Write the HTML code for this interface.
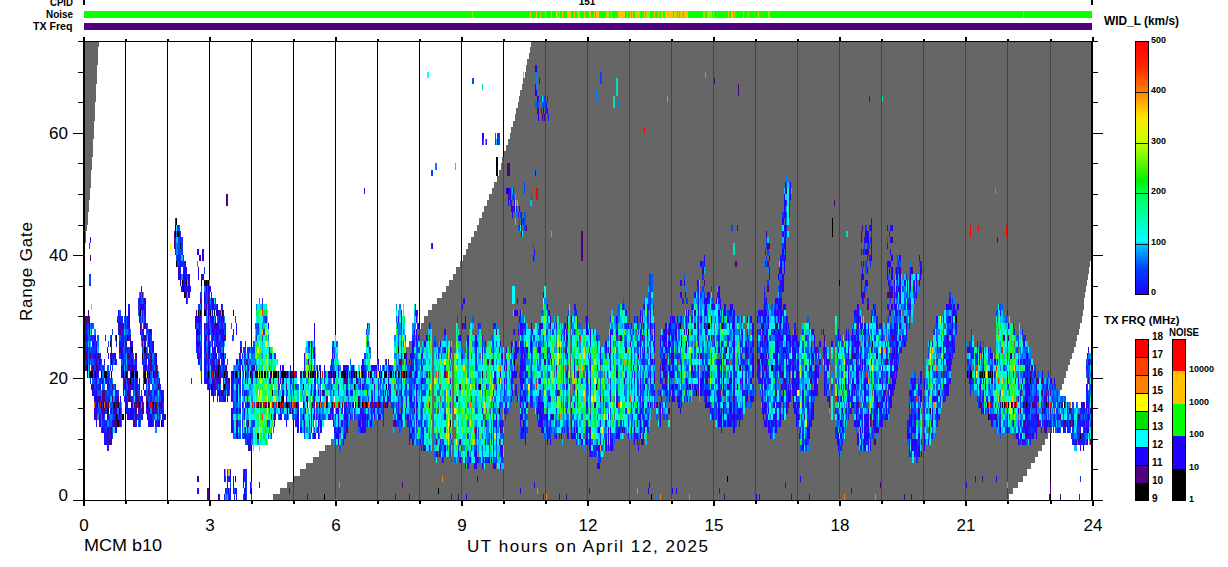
<!DOCTYPE html>
<html><head><meta charset="utf-8"><style>html,body{margin:0;padding:0;background:#fff;}svg{display:block;}text{font-family:"Liberation Sans",sans-serif;fill:#000;}</style></head>
<body><svg width="1228" height="567" viewBox="0 0 1228 567" shape-rendering="crispEdges">
<rect x="125" y="41" width="1" height="459" fill="#000"/>
<rect x="167" y="41" width="1" height="459" fill="#000"/>
<rect x="209" y="41" width="1" height="459" fill="#000"/>
<rect x="251" y="41" width="1" height="459" fill="#000"/>
<rect x="293" y="41" width="1" height="459" fill="#000"/>
<rect x="335" y="41" width="1" height="459" fill="#000"/>
<rect x="377" y="41" width="1" height="459" fill="#000"/>
<rect x="419" y="41" width="1" height="459" fill="#000"/>
<rect x="461" y="41" width="1" height="459" fill="#000"/>
<rect x="503" y="41" width="1" height="459" fill="#000"/>
<rect x="545" y="41" width="1" height="459" fill="#000"/>
<rect x="587" y="41" width="1" height="459" fill="#000"/>
<rect x="629" y="41" width="1" height="459" fill="#000"/>
<rect x="671" y="41" width="1" height="459" fill="#000"/>
<rect x="713" y="41" width="1" height="459" fill="#000"/>
<rect x="755" y="41" width="1" height="459" fill="#000"/>
<rect x="797" y="41" width="1" height="459" fill="#000"/>
<rect x="839" y="41" width="1" height="459" fill="#000"/>
<rect x="881" y="41" width="1" height="459" fill="#000"/>
<rect x="923" y="41" width="1" height="459" fill="#000"/>
<rect x="965" y="41" width="1" height="459" fill="#000"/>
<rect x="1007" y="41" width="1" height="459" fill="#000"/>
<rect x="1050" y="41" width="1" height="459" fill="#000"/>
<rect x="273" y="494" width="736" height="6" fill="#666666"/>
<rect x="280" y="488" width="733" height="6" fill="#666666"/>
<rect x="287" y="482" width="731" height="6" fill="#666666"/>
<rect x="294" y="476" width="729" height="6" fill="#666666"/>
<rect x="300" y="469" width="727" height="7" fill="#666666"/>
<rect x="306" y="463" width="725" height="6" fill="#666666"/>
<rect x="313" y="457" width="722" height="6" fill="#666666"/>
<rect x="319" y="451" width="719" height="6" fill="#666666"/>
<rect x="325" y="445" width="717" height="6" fill="#666666"/>
<rect x="331" y="439" width="714" height="6" fill="#666666"/>
<rect x="336" y="433" width="712" height="6" fill="#666666"/>
<rect x="340" y="427" width="711" height="6" fill="#666666"/>
<rect x="345" y="420" width="707" height="7" fill="#666666"/>
<rect x="350" y="414" width="704" height="6" fill="#666666"/>
<rect x="355" y="408" width="700" height="6" fill="#666666"/>
<rect x="360" y="402" width="697" height="6" fill="#666666"/>
<rect x="365" y="396" width="693" height="6" fill="#666666"/>
<rect x="370" y="390" width="690" height="6" fill="#666666"/>
<rect x="374" y="384" width="688" height="6" fill="#666666"/>
<rect x="379" y="378" width="685" height="6" fill="#666666"/>
<rect x="384" y="371" width="682" height="7" fill="#666666"/>
<rect x="389" y="365" width="679" height="6" fill="#666666"/>
<rect x="394" y="359" width="676" height="6" fill="#666666"/>
<rect x="399" y="353" width="673" height="6" fill="#666666"/>
<rect x="404" y="347" width="670" height="6" fill="#666666"/>
<rect x="409" y="341" width="667" height="6" fill="#666666"/>
<rect x="413" y="335" width="664" height="6" fill="#666666"/>
<rect x="417" y="329" width="662" height="6" fill="#666666"/>
<rect x="421" y="323" width="659" height="6" fill="#666666"/>
<rect x="424" y="316" width="658" height="7" fill="#666666"/>
<rect x="428" y="310" width="655" height="6" fill="#666666"/>
<rect x="432" y="304" width="652" height="6" fill="#666666"/>
<rect x="437" y="298" width="647" height="6" fill="#666666"/>
<rect x="442" y="292" width="643" height="6" fill="#666666"/>
<rect x="446" y="286" width="640" height="6" fill="#666666"/>
<rect x="449" y="280" width="638" height="6" fill="#666666"/>
<rect x="453" y="274" width="635" height="6" fill="#666666"/>
<rect x="456" y="267" width="633" height="7" fill="#666666"/>
<rect x="460" y="261" width="630" height="6" fill="#666666"/>
<rect x="463" y="255" width="628" height="6" fill="#666666"/>
<rect x="466" y="249" width="625" height="6" fill="#666666"/>
<rect x="468" y="243" width="623" height="6" fill="#666666"/>
<rect x="83" y="243" width="2" height="6" fill="#666666"/>
<rect x="471" y="237" width="620" height="6" fill="#666666"/>
<rect x="83" y="237" width="3" height="6" fill="#666666"/>
<rect x="474" y="231" width="617" height="6" fill="#666666"/>
<rect x="83" y="231" width="3" height="6" fill="#666666"/>
<rect x="477" y="225" width="614" height="6" fill="#666666"/>
<rect x="83" y="225" width="4" height="6" fill="#666666"/>
<rect x="479" y="218" width="612" height="7" fill="#666666"/>
<rect x="83" y="218" width="5" height="7" fill="#666666"/>
<rect x="482" y="212" width="609" height="6" fill="#666666"/>
<rect x="83" y="212" width="5" height="6" fill="#666666"/>
<rect x="484" y="206" width="607" height="6" fill="#666666"/>
<rect x="83" y="206" width="6" height="6" fill="#666666"/>
<rect x="487" y="200" width="604" height="6" fill="#666666"/>
<rect x="83" y="200" width="6" height="6" fill="#666666"/>
<rect x="489" y="194" width="602" height="6" fill="#666666"/>
<rect x="83" y="194" width="7" height="6" fill="#666666"/>
<rect x="492" y="188" width="599" height="6" fill="#666666"/>
<rect x="83" y="188" width="7" height="6" fill="#666666"/>
<rect x="494" y="182" width="597" height="6" fill="#666666"/>
<rect x="83" y="182" width="8" height="6" fill="#666666"/>
<rect x="497" y="176" width="594" height="6" fill="#666666"/>
<rect x="83" y="176" width="8" height="6" fill="#666666"/>
<rect x="499" y="170" width="592" height="6" fill="#666666"/>
<rect x="83" y="170" width="8" height="6" fill="#666666"/>
<rect x="501" y="163" width="590" height="7" fill="#666666"/>
<rect x="83" y="163" width="9" height="7" fill="#666666"/>
<rect x="502" y="157" width="589" height="6" fill="#666666"/>
<rect x="83" y="157" width="9" height="6" fill="#666666"/>
<rect x="504" y="151" width="587" height="6" fill="#666666"/>
<rect x="83" y="151" width="10" height="6" fill="#666666"/>
<rect x="506" y="145" width="585" height="6" fill="#666666"/>
<rect x="83" y="145" width="10" height="6" fill="#666666"/>
<rect x="508" y="139" width="583" height="6" fill="#666666"/>
<rect x="83" y="139" width="10" height="6" fill="#666666"/>
<rect x="510" y="133" width="581" height="6" fill="#666666"/>
<rect x="83" y="133" width="11" height="6" fill="#666666"/>
<rect x="511" y="127" width="580" height="6" fill="#666666"/>
<rect x="83" y="127" width="11" height="6" fill="#666666"/>
<rect x="513" y="121" width="578" height="6" fill="#666666"/>
<rect x="83" y="121" width="11" height="6" fill="#666666"/>
<rect x="515" y="114" width="576" height="7" fill="#666666"/>
<rect x="83" y="114" width="12" height="7" fill="#666666"/>
<rect x="516" y="108" width="575" height="6" fill="#666666"/>
<rect x="83" y="108" width="12" height="6" fill="#666666"/>
<rect x="518" y="102" width="573" height="6" fill="#666666"/>
<rect x="83" y="102" width="12" height="6" fill="#666666"/>
<rect x="519" y="96" width="572" height="6" fill="#666666"/>
<rect x="83" y="96" width="13" height="6" fill="#666666"/>
<rect x="520" y="90" width="571" height="6" fill="#666666"/>
<rect x="83" y="90" width="13" height="6" fill="#666666"/>
<rect x="522" y="84" width="569" height="6" fill="#666666"/>
<rect x="83" y="84" width="13" height="6" fill="#666666"/>
<rect x="523" y="78" width="568" height="6" fill="#666666"/>
<rect x="83" y="78" width="14" height="6" fill="#666666"/>
<rect x="525" y="72" width="566" height="6" fill="#666666"/>
<rect x="83" y="72" width="14" height="6" fill="#666666"/>
<rect x="526" y="65" width="565" height="7" fill="#666666"/>
<rect x="83" y="65" width="14" height="7" fill="#666666"/>
<rect x="527" y="59" width="564" height="6" fill="#666666"/>
<rect x="83" y="59" width="15" height="6" fill="#666666"/>
<rect x="529" y="53" width="562" height="6" fill="#666666"/>
<rect x="83" y="53" width="15" height="6" fill="#666666"/>
<rect x="530" y="47" width="561" height="6" fill="#666666"/>
<rect x="83" y="47" width="15" height="6" fill="#666666"/>
<rect x="531" y="41" width="560" height="6" fill="#666666"/>
<rect x="83" y="41" width="16" height="6" fill="#666666"/>
<rect x="293" y="494" width="1" height="6" fill="#454545"/>
<rect x="335" y="494" width="1" height="6" fill="#454545"/>
<rect x="377" y="494" width="1" height="6" fill="#454545"/>
<rect x="419" y="494" width="1" height="6" fill="#454545"/>
<rect x="461" y="494" width="1" height="6" fill="#454545"/>
<rect x="503" y="494" width="1" height="6" fill="#454545"/>
<rect x="545" y="494" width="1" height="6" fill="#454545"/>
<rect x="587" y="494" width="1" height="6" fill="#454545"/>
<rect x="629" y="494" width="1" height="6" fill="#454545"/>
<rect x="671" y="494" width="1" height="6" fill="#454545"/>
<rect x="713" y="494" width="1" height="6" fill="#454545"/>
<rect x="755" y="494" width="1" height="6" fill="#454545"/>
<rect x="797" y="494" width="1" height="6" fill="#454545"/>
<rect x="839" y="494" width="1" height="6" fill="#454545"/>
<rect x="881" y="494" width="1" height="6" fill="#454545"/>
<rect x="923" y="494" width="1" height="6" fill="#454545"/>
<rect x="965" y="494" width="1" height="6" fill="#454545"/>
<rect x="1007" y="494" width="1" height="6" fill="#454545"/>
<rect x="293" y="488" width="1" height="6" fill="#454545"/>
<rect x="335" y="488" width="1" height="6" fill="#454545"/>
<rect x="377" y="488" width="1" height="6" fill="#454545"/>
<rect x="419" y="488" width="1" height="6" fill="#454545"/>
<rect x="461" y="488" width="1" height="6" fill="#454545"/>
<rect x="503" y="488" width="1" height="6" fill="#454545"/>
<rect x="545" y="488" width="1" height="6" fill="#454545"/>
<rect x="587" y="488" width="1" height="6" fill="#454545"/>
<rect x="629" y="488" width="1" height="6" fill="#454545"/>
<rect x="671" y="488" width="1" height="6" fill="#454545"/>
<rect x="713" y="488" width="1" height="6" fill="#454545"/>
<rect x="755" y="488" width="1" height="6" fill="#454545"/>
<rect x="797" y="488" width="1" height="6" fill="#454545"/>
<rect x="839" y="488" width="1" height="6" fill="#454545"/>
<rect x="881" y="488" width="1" height="6" fill="#454545"/>
<rect x="923" y="488" width="1" height="6" fill="#454545"/>
<rect x="965" y="488" width="1" height="6" fill="#454545"/>
<rect x="1007" y="488" width="1" height="6" fill="#454545"/>
<rect x="293" y="482" width="1" height="6" fill="#454545"/>
<rect x="335" y="482" width="1" height="6" fill="#454545"/>
<rect x="377" y="482" width="1" height="6" fill="#454545"/>
<rect x="419" y="482" width="1" height="6" fill="#454545"/>
<rect x="461" y="482" width="1" height="6" fill="#454545"/>
<rect x="503" y="482" width="1" height="6" fill="#454545"/>
<rect x="545" y="482" width="1" height="6" fill="#454545"/>
<rect x="587" y="482" width="1" height="6" fill="#454545"/>
<rect x="629" y="482" width="1" height="6" fill="#454545"/>
<rect x="671" y="482" width="1" height="6" fill="#454545"/>
<rect x="713" y="482" width="1" height="6" fill="#454545"/>
<rect x="755" y="482" width="1" height="6" fill="#454545"/>
<rect x="797" y="482" width="1" height="6" fill="#454545"/>
<rect x="839" y="482" width="1" height="6" fill="#454545"/>
<rect x="881" y="482" width="1" height="6" fill="#454545"/>
<rect x="923" y="482" width="1" height="6" fill="#454545"/>
<rect x="965" y="482" width="1" height="6" fill="#454545"/>
<rect x="1007" y="482" width="1" height="6" fill="#454545"/>
<rect x="335" y="476" width="1" height="6" fill="#454545"/>
<rect x="377" y="476" width="1" height="6" fill="#454545"/>
<rect x="419" y="476" width="1" height="6" fill="#454545"/>
<rect x="461" y="476" width="1" height="6" fill="#454545"/>
<rect x="503" y="476" width="1" height="6" fill="#454545"/>
<rect x="545" y="476" width="1" height="6" fill="#454545"/>
<rect x="587" y="476" width="1" height="6" fill="#454545"/>
<rect x="629" y="476" width="1" height="6" fill="#454545"/>
<rect x="671" y="476" width="1" height="6" fill="#454545"/>
<rect x="713" y="476" width="1" height="6" fill="#454545"/>
<rect x="755" y="476" width="1" height="6" fill="#454545"/>
<rect x="797" y="476" width="1" height="6" fill="#454545"/>
<rect x="839" y="476" width="1" height="6" fill="#454545"/>
<rect x="881" y="476" width="1" height="6" fill="#454545"/>
<rect x="923" y="476" width="1" height="6" fill="#454545"/>
<rect x="965" y="476" width="1" height="6" fill="#454545"/>
<rect x="1007" y="476" width="1" height="6" fill="#454545"/>
<rect x="335" y="469" width="1" height="7" fill="#454545"/>
<rect x="377" y="469" width="1" height="7" fill="#454545"/>
<rect x="419" y="469" width="1" height="7" fill="#454545"/>
<rect x="461" y="469" width="1" height="7" fill="#454545"/>
<rect x="503" y="469" width="1" height="7" fill="#454545"/>
<rect x="545" y="469" width="1" height="7" fill="#454545"/>
<rect x="587" y="469" width="1" height="7" fill="#454545"/>
<rect x="629" y="469" width="1" height="7" fill="#454545"/>
<rect x="671" y="469" width="1" height="7" fill="#454545"/>
<rect x="713" y="469" width="1" height="7" fill="#454545"/>
<rect x="755" y="469" width="1" height="7" fill="#454545"/>
<rect x="797" y="469" width="1" height="7" fill="#454545"/>
<rect x="839" y="469" width="1" height="7" fill="#454545"/>
<rect x="881" y="469" width="1" height="7" fill="#454545"/>
<rect x="923" y="469" width="1" height="7" fill="#454545"/>
<rect x="965" y="469" width="1" height="7" fill="#454545"/>
<rect x="1007" y="469" width="1" height="7" fill="#454545"/>
<rect x="335" y="463" width="1" height="6" fill="#454545"/>
<rect x="377" y="463" width="1" height="6" fill="#454545"/>
<rect x="419" y="463" width="1" height="6" fill="#454545"/>
<rect x="461" y="463" width="1" height="6" fill="#454545"/>
<rect x="503" y="463" width="1" height="6" fill="#454545"/>
<rect x="545" y="463" width="1" height="6" fill="#454545"/>
<rect x="587" y="463" width="1" height="6" fill="#454545"/>
<rect x="629" y="463" width="1" height="6" fill="#454545"/>
<rect x="671" y="463" width="1" height="6" fill="#454545"/>
<rect x="713" y="463" width="1" height="6" fill="#454545"/>
<rect x="755" y="463" width="1" height="6" fill="#454545"/>
<rect x="797" y="463" width="1" height="6" fill="#454545"/>
<rect x="839" y="463" width="1" height="6" fill="#454545"/>
<rect x="881" y="463" width="1" height="6" fill="#454545"/>
<rect x="923" y="463" width="1" height="6" fill="#454545"/>
<rect x="965" y="463" width="1" height="6" fill="#454545"/>
<rect x="1007" y="463" width="1" height="6" fill="#454545"/>
<rect x="335" y="457" width="1" height="6" fill="#454545"/>
<rect x="377" y="457" width="1" height="6" fill="#454545"/>
<rect x="419" y="457" width="1" height="6" fill="#454545"/>
<rect x="461" y="457" width="1" height="6" fill="#454545"/>
<rect x="503" y="457" width="1" height="6" fill="#454545"/>
<rect x="545" y="457" width="1" height="6" fill="#454545"/>
<rect x="587" y="457" width="1" height="6" fill="#454545"/>
<rect x="629" y="457" width="1" height="6" fill="#454545"/>
<rect x="671" y="457" width="1" height="6" fill="#454545"/>
<rect x="713" y="457" width="1" height="6" fill="#454545"/>
<rect x="755" y="457" width="1" height="6" fill="#454545"/>
<rect x="797" y="457" width="1" height="6" fill="#454545"/>
<rect x="839" y="457" width="1" height="6" fill="#454545"/>
<rect x="881" y="457" width="1" height="6" fill="#454545"/>
<rect x="923" y="457" width="1" height="6" fill="#454545"/>
<rect x="965" y="457" width="1" height="6" fill="#454545"/>
<rect x="1007" y="457" width="1" height="6" fill="#454545"/>
<rect x="335" y="451" width="1" height="6" fill="#454545"/>
<rect x="377" y="451" width="1" height="6" fill="#454545"/>
<rect x="419" y="451" width="1" height="6" fill="#454545"/>
<rect x="461" y="451" width="1" height="6" fill="#454545"/>
<rect x="503" y="451" width="1" height="6" fill="#454545"/>
<rect x="545" y="451" width="1" height="6" fill="#454545"/>
<rect x="587" y="451" width="1" height="6" fill="#454545"/>
<rect x="629" y="451" width="1" height="6" fill="#454545"/>
<rect x="671" y="451" width="1" height="6" fill="#454545"/>
<rect x="713" y="451" width="1" height="6" fill="#454545"/>
<rect x="755" y="451" width="1" height="6" fill="#454545"/>
<rect x="797" y="451" width="1" height="6" fill="#454545"/>
<rect x="839" y="451" width="1" height="6" fill="#454545"/>
<rect x="881" y="451" width="1" height="6" fill="#454545"/>
<rect x="923" y="451" width="1" height="6" fill="#454545"/>
<rect x="965" y="451" width="1" height="6" fill="#454545"/>
<rect x="1007" y="451" width="1" height="6" fill="#454545"/>
<rect x="335" y="445" width="1" height="6" fill="#454545"/>
<rect x="377" y="445" width="1" height="6" fill="#454545"/>
<rect x="419" y="445" width="1" height="6" fill="#454545"/>
<rect x="461" y="445" width="1" height="6" fill="#454545"/>
<rect x="503" y="445" width="1" height="6" fill="#454545"/>
<rect x="545" y="445" width="1" height="6" fill="#454545"/>
<rect x="587" y="445" width="1" height="6" fill="#454545"/>
<rect x="629" y="445" width="1" height="6" fill="#454545"/>
<rect x="671" y="445" width="1" height="6" fill="#454545"/>
<rect x="713" y="445" width="1" height="6" fill="#454545"/>
<rect x="755" y="445" width="1" height="6" fill="#454545"/>
<rect x="797" y="445" width="1" height="6" fill="#454545"/>
<rect x="839" y="445" width="1" height="6" fill="#454545"/>
<rect x="881" y="445" width="1" height="6" fill="#454545"/>
<rect x="923" y="445" width="1" height="6" fill="#454545"/>
<rect x="965" y="445" width="1" height="6" fill="#454545"/>
<rect x="1007" y="445" width="1" height="6" fill="#454545"/>
<rect x="335" y="439" width="1" height="6" fill="#454545"/>
<rect x="377" y="439" width="1" height="6" fill="#454545"/>
<rect x="419" y="439" width="1" height="6" fill="#454545"/>
<rect x="461" y="439" width="1" height="6" fill="#454545"/>
<rect x="503" y="439" width="1" height="6" fill="#454545"/>
<rect x="545" y="439" width="1" height="6" fill="#454545"/>
<rect x="587" y="439" width="1" height="6" fill="#454545"/>
<rect x="629" y="439" width="1" height="6" fill="#454545"/>
<rect x="671" y="439" width="1" height="6" fill="#454545"/>
<rect x="713" y="439" width="1" height="6" fill="#454545"/>
<rect x="755" y="439" width="1" height="6" fill="#454545"/>
<rect x="797" y="439" width="1" height="6" fill="#454545"/>
<rect x="839" y="439" width="1" height="6" fill="#454545"/>
<rect x="881" y="439" width="1" height="6" fill="#454545"/>
<rect x="923" y="439" width="1" height="6" fill="#454545"/>
<rect x="965" y="439" width="1" height="6" fill="#454545"/>
<rect x="1007" y="439" width="1" height="6" fill="#454545"/>
<rect x="377" y="433" width="1" height="6" fill="#454545"/>
<rect x="419" y="433" width="1" height="6" fill="#454545"/>
<rect x="461" y="433" width="1" height="6" fill="#454545"/>
<rect x="503" y="433" width="1" height="6" fill="#454545"/>
<rect x="545" y="433" width="1" height="6" fill="#454545"/>
<rect x="587" y="433" width="1" height="6" fill="#454545"/>
<rect x="629" y="433" width="1" height="6" fill="#454545"/>
<rect x="671" y="433" width="1" height="6" fill="#454545"/>
<rect x="713" y="433" width="1" height="6" fill="#454545"/>
<rect x="755" y="433" width="1" height="6" fill="#454545"/>
<rect x="797" y="433" width="1" height="6" fill="#454545"/>
<rect x="839" y="433" width="1" height="6" fill="#454545"/>
<rect x="881" y="433" width="1" height="6" fill="#454545"/>
<rect x="923" y="433" width="1" height="6" fill="#454545"/>
<rect x="965" y="433" width="1" height="6" fill="#454545"/>
<rect x="1007" y="433" width="1" height="6" fill="#454545"/>
<rect x="377" y="427" width="1" height="6" fill="#454545"/>
<rect x="419" y="427" width="1" height="6" fill="#454545"/>
<rect x="461" y="427" width="1" height="6" fill="#454545"/>
<rect x="503" y="427" width="1" height="6" fill="#454545"/>
<rect x="545" y="427" width="1" height="6" fill="#454545"/>
<rect x="587" y="427" width="1" height="6" fill="#454545"/>
<rect x="629" y="427" width="1" height="6" fill="#454545"/>
<rect x="671" y="427" width="1" height="6" fill="#454545"/>
<rect x="713" y="427" width="1" height="6" fill="#454545"/>
<rect x="755" y="427" width="1" height="6" fill="#454545"/>
<rect x="797" y="427" width="1" height="6" fill="#454545"/>
<rect x="839" y="427" width="1" height="6" fill="#454545"/>
<rect x="881" y="427" width="1" height="6" fill="#454545"/>
<rect x="923" y="427" width="1" height="6" fill="#454545"/>
<rect x="965" y="427" width="1" height="6" fill="#454545"/>
<rect x="1007" y="427" width="1" height="6" fill="#454545"/>
<rect x="1050" y="427" width="1" height="6" fill="#454545"/>
<rect x="377" y="420" width="1" height="7" fill="#454545"/>
<rect x="419" y="420" width="1" height="7" fill="#454545"/>
<rect x="461" y="420" width="1" height="7" fill="#454545"/>
<rect x="503" y="420" width="1" height="7" fill="#454545"/>
<rect x="545" y="420" width="1" height="7" fill="#454545"/>
<rect x="587" y="420" width="1" height="7" fill="#454545"/>
<rect x="629" y="420" width="1" height="7" fill="#454545"/>
<rect x="671" y="420" width="1" height="7" fill="#454545"/>
<rect x="713" y="420" width="1" height="7" fill="#454545"/>
<rect x="755" y="420" width="1" height="7" fill="#454545"/>
<rect x="797" y="420" width="1" height="7" fill="#454545"/>
<rect x="839" y="420" width="1" height="7" fill="#454545"/>
<rect x="881" y="420" width="1" height="7" fill="#454545"/>
<rect x="923" y="420" width="1" height="7" fill="#454545"/>
<rect x="965" y="420" width="1" height="7" fill="#454545"/>
<rect x="1007" y="420" width="1" height="7" fill="#454545"/>
<rect x="1050" y="420" width="1" height="7" fill="#454545"/>
<rect x="377" y="414" width="1" height="6" fill="#454545"/>
<rect x="419" y="414" width="1" height="6" fill="#454545"/>
<rect x="461" y="414" width="1" height="6" fill="#454545"/>
<rect x="503" y="414" width="1" height="6" fill="#454545"/>
<rect x="545" y="414" width="1" height="6" fill="#454545"/>
<rect x="587" y="414" width="1" height="6" fill="#454545"/>
<rect x="629" y="414" width="1" height="6" fill="#454545"/>
<rect x="671" y="414" width="1" height="6" fill="#454545"/>
<rect x="713" y="414" width="1" height="6" fill="#454545"/>
<rect x="755" y="414" width="1" height="6" fill="#454545"/>
<rect x="797" y="414" width="1" height="6" fill="#454545"/>
<rect x="839" y="414" width="1" height="6" fill="#454545"/>
<rect x="881" y="414" width="1" height="6" fill="#454545"/>
<rect x="923" y="414" width="1" height="6" fill="#454545"/>
<rect x="965" y="414" width="1" height="6" fill="#454545"/>
<rect x="1007" y="414" width="1" height="6" fill="#454545"/>
<rect x="1050" y="414" width="1" height="6" fill="#454545"/>
<rect x="377" y="408" width="1" height="6" fill="#454545"/>
<rect x="419" y="408" width="1" height="6" fill="#454545"/>
<rect x="461" y="408" width="1" height="6" fill="#454545"/>
<rect x="503" y="408" width="1" height="6" fill="#454545"/>
<rect x="545" y="408" width="1" height="6" fill="#454545"/>
<rect x="587" y="408" width="1" height="6" fill="#454545"/>
<rect x="629" y="408" width="1" height="6" fill="#454545"/>
<rect x="671" y="408" width="1" height="6" fill="#454545"/>
<rect x="713" y="408" width="1" height="6" fill="#454545"/>
<rect x="755" y="408" width="1" height="6" fill="#454545"/>
<rect x="797" y="408" width="1" height="6" fill="#454545"/>
<rect x="839" y="408" width="1" height="6" fill="#454545"/>
<rect x="881" y="408" width="1" height="6" fill="#454545"/>
<rect x="923" y="408" width="1" height="6" fill="#454545"/>
<rect x="965" y="408" width="1" height="6" fill="#454545"/>
<rect x="1007" y="408" width="1" height="6" fill="#454545"/>
<rect x="1050" y="408" width="1" height="6" fill="#454545"/>
<rect x="377" y="402" width="1" height="6" fill="#454545"/>
<rect x="419" y="402" width="1" height="6" fill="#454545"/>
<rect x="461" y="402" width="1" height="6" fill="#454545"/>
<rect x="503" y="402" width="1" height="6" fill="#454545"/>
<rect x="545" y="402" width="1" height="6" fill="#454545"/>
<rect x="587" y="402" width="1" height="6" fill="#454545"/>
<rect x="629" y="402" width="1" height="6" fill="#454545"/>
<rect x="671" y="402" width="1" height="6" fill="#454545"/>
<rect x="713" y="402" width="1" height="6" fill="#454545"/>
<rect x="755" y="402" width="1" height="6" fill="#454545"/>
<rect x="797" y="402" width="1" height="6" fill="#454545"/>
<rect x="839" y="402" width="1" height="6" fill="#454545"/>
<rect x="881" y="402" width="1" height="6" fill="#454545"/>
<rect x="923" y="402" width="1" height="6" fill="#454545"/>
<rect x="965" y="402" width="1" height="6" fill="#454545"/>
<rect x="1007" y="402" width="1" height="6" fill="#454545"/>
<rect x="1050" y="402" width="1" height="6" fill="#454545"/>
<rect x="377" y="396" width="1" height="6" fill="#454545"/>
<rect x="419" y="396" width="1" height="6" fill="#454545"/>
<rect x="461" y="396" width="1" height="6" fill="#454545"/>
<rect x="503" y="396" width="1" height="6" fill="#454545"/>
<rect x="545" y="396" width="1" height="6" fill="#454545"/>
<rect x="587" y="396" width="1" height="6" fill="#454545"/>
<rect x="629" y="396" width="1" height="6" fill="#454545"/>
<rect x="671" y="396" width="1" height="6" fill="#454545"/>
<rect x="713" y="396" width="1" height="6" fill="#454545"/>
<rect x="755" y="396" width="1" height="6" fill="#454545"/>
<rect x="797" y="396" width="1" height="6" fill="#454545"/>
<rect x="839" y="396" width="1" height="6" fill="#454545"/>
<rect x="881" y="396" width="1" height="6" fill="#454545"/>
<rect x="923" y="396" width="1" height="6" fill="#454545"/>
<rect x="965" y="396" width="1" height="6" fill="#454545"/>
<rect x="1007" y="396" width="1" height="6" fill="#454545"/>
<rect x="1050" y="396" width="1" height="6" fill="#454545"/>
<rect x="377" y="390" width="1" height="6" fill="#454545"/>
<rect x="419" y="390" width="1" height="6" fill="#454545"/>
<rect x="461" y="390" width="1" height="6" fill="#454545"/>
<rect x="503" y="390" width="1" height="6" fill="#454545"/>
<rect x="545" y="390" width="1" height="6" fill="#454545"/>
<rect x="587" y="390" width="1" height="6" fill="#454545"/>
<rect x="629" y="390" width="1" height="6" fill="#454545"/>
<rect x="671" y="390" width="1" height="6" fill="#454545"/>
<rect x="713" y="390" width="1" height="6" fill="#454545"/>
<rect x="755" y="390" width="1" height="6" fill="#454545"/>
<rect x="797" y="390" width="1" height="6" fill="#454545"/>
<rect x="839" y="390" width="1" height="6" fill="#454545"/>
<rect x="881" y="390" width="1" height="6" fill="#454545"/>
<rect x="923" y="390" width="1" height="6" fill="#454545"/>
<rect x="965" y="390" width="1" height="6" fill="#454545"/>
<rect x="1007" y="390" width="1" height="6" fill="#454545"/>
<rect x="1050" y="390" width="1" height="6" fill="#454545"/>
<rect x="377" y="384" width="1" height="6" fill="#454545"/>
<rect x="419" y="384" width="1" height="6" fill="#454545"/>
<rect x="461" y="384" width="1" height="6" fill="#454545"/>
<rect x="503" y="384" width="1" height="6" fill="#454545"/>
<rect x="545" y="384" width="1" height="6" fill="#454545"/>
<rect x="587" y="384" width="1" height="6" fill="#454545"/>
<rect x="629" y="384" width="1" height="6" fill="#454545"/>
<rect x="671" y="384" width="1" height="6" fill="#454545"/>
<rect x="713" y="384" width="1" height="6" fill="#454545"/>
<rect x="755" y="384" width="1" height="6" fill="#454545"/>
<rect x="797" y="384" width="1" height="6" fill="#454545"/>
<rect x="839" y="384" width="1" height="6" fill="#454545"/>
<rect x="881" y="384" width="1" height="6" fill="#454545"/>
<rect x="923" y="384" width="1" height="6" fill="#454545"/>
<rect x="965" y="384" width="1" height="6" fill="#454545"/>
<rect x="1007" y="384" width="1" height="6" fill="#454545"/>
<rect x="1050" y="384" width="1" height="6" fill="#454545"/>
<rect x="419" y="378" width="1" height="6" fill="#454545"/>
<rect x="461" y="378" width="1" height="6" fill="#454545"/>
<rect x="503" y="378" width="1" height="6" fill="#454545"/>
<rect x="545" y="378" width="1" height="6" fill="#454545"/>
<rect x="587" y="378" width="1" height="6" fill="#454545"/>
<rect x="629" y="378" width="1" height="6" fill="#454545"/>
<rect x="671" y="378" width="1" height="6" fill="#454545"/>
<rect x="713" y="378" width="1" height="6" fill="#454545"/>
<rect x="755" y="378" width="1" height="6" fill="#454545"/>
<rect x="797" y="378" width="1" height="6" fill="#454545"/>
<rect x="839" y="378" width="1" height="6" fill="#454545"/>
<rect x="881" y="378" width="1" height="6" fill="#454545"/>
<rect x="923" y="378" width="1" height="6" fill="#454545"/>
<rect x="965" y="378" width="1" height="6" fill="#454545"/>
<rect x="1007" y="378" width="1" height="6" fill="#454545"/>
<rect x="1050" y="378" width="1" height="6" fill="#454545"/>
<rect x="419" y="371" width="1" height="7" fill="#454545"/>
<rect x="461" y="371" width="1" height="7" fill="#454545"/>
<rect x="503" y="371" width="1" height="7" fill="#454545"/>
<rect x="545" y="371" width="1" height="7" fill="#454545"/>
<rect x="587" y="371" width="1" height="7" fill="#454545"/>
<rect x="629" y="371" width="1" height="7" fill="#454545"/>
<rect x="671" y="371" width="1" height="7" fill="#454545"/>
<rect x="713" y="371" width="1" height="7" fill="#454545"/>
<rect x="755" y="371" width="1" height="7" fill="#454545"/>
<rect x="797" y="371" width="1" height="7" fill="#454545"/>
<rect x="839" y="371" width="1" height="7" fill="#454545"/>
<rect x="881" y="371" width="1" height="7" fill="#454545"/>
<rect x="923" y="371" width="1" height="7" fill="#454545"/>
<rect x="965" y="371" width="1" height="7" fill="#454545"/>
<rect x="1007" y="371" width="1" height="7" fill="#454545"/>
<rect x="1050" y="371" width="1" height="7" fill="#454545"/>
<rect x="419" y="365" width="1" height="6" fill="#454545"/>
<rect x="461" y="365" width="1" height="6" fill="#454545"/>
<rect x="503" y="365" width="1" height="6" fill="#454545"/>
<rect x="545" y="365" width="1" height="6" fill="#454545"/>
<rect x="587" y="365" width="1" height="6" fill="#454545"/>
<rect x="629" y="365" width="1" height="6" fill="#454545"/>
<rect x="671" y="365" width="1" height="6" fill="#454545"/>
<rect x="713" y="365" width="1" height="6" fill="#454545"/>
<rect x="755" y="365" width="1" height="6" fill="#454545"/>
<rect x="797" y="365" width="1" height="6" fill="#454545"/>
<rect x="839" y="365" width="1" height="6" fill="#454545"/>
<rect x="881" y="365" width="1" height="6" fill="#454545"/>
<rect x="923" y="365" width="1" height="6" fill="#454545"/>
<rect x="965" y="365" width="1" height="6" fill="#454545"/>
<rect x="1007" y="365" width="1" height="6" fill="#454545"/>
<rect x="1050" y="365" width="1" height="6" fill="#454545"/>
<rect x="419" y="359" width="1" height="6" fill="#454545"/>
<rect x="461" y="359" width="1" height="6" fill="#454545"/>
<rect x="503" y="359" width="1" height="6" fill="#454545"/>
<rect x="545" y="359" width="1" height="6" fill="#454545"/>
<rect x="587" y="359" width="1" height="6" fill="#454545"/>
<rect x="629" y="359" width="1" height="6" fill="#454545"/>
<rect x="671" y="359" width="1" height="6" fill="#454545"/>
<rect x="713" y="359" width="1" height="6" fill="#454545"/>
<rect x="755" y="359" width="1" height="6" fill="#454545"/>
<rect x="797" y="359" width="1" height="6" fill="#454545"/>
<rect x="839" y="359" width="1" height="6" fill="#454545"/>
<rect x="881" y="359" width="1" height="6" fill="#454545"/>
<rect x="923" y="359" width="1" height="6" fill="#454545"/>
<rect x="965" y="359" width="1" height="6" fill="#454545"/>
<rect x="1007" y="359" width="1" height="6" fill="#454545"/>
<rect x="1050" y="359" width="1" height="6" fill="#454545"/>
<rect x="419" y="353" width="1" height="6" fill="#454545"/>
<rect x="461" y="353" width="1" height="6" fill="#454545"/>
<rect x="503" y="353" width="1" height="6" fill="#454545"/>
<rect x="545" y="353" width="1" height="6" fill="#454545"/>
<rect x="587" y="353" width="1" height="6" fill="#454545"/>
<rect x="629" y="353" width="1" height="6" fill="#454545"/>
<rect x="671" y="353" width="1" height="6" fill="#454545"/>
<rect x="713" y="353" width="1" height="6" fill="#454545"/>
<rect x="755" y="353" width="1" height="6" fill="#454545"/>
<rect x="797" y="353" width="1" height="6" fill="#454545"/>
<rect x="839" y="353" width="1" height="6" fill="#454545"/>
<rect x="881" y="353" width="1" height="6" fill="#454545"/>
<rect x="923" y="353" width="1" height="6" fill="#454545"/>
<rect x="965" y="353" width="1" height="6" fill="#454545"/>
<rect x="1007" y="353" width="1" height="6" fill="#454545"/>
<rect x="1050" y="353" width="1" height="6" fill="#454545"/>
<rect x="419" y="347" width="1" height="6" fill="#454545"/>
<rect x="461" y="347" width="1" height="6" fill="#454545"/>
<rect x="503" y="347" width="1" height="6" fill="#454545"/>
<rect x="545" y="347" width="1" height="6" fill="#454545"/>
<rect x="587" y="347" width="1" height="6" fill="#454545"/>
<rect x="629" y="347" width="1" height="6" fill="#454545"/>
<rect x="671" y="347" width="1" height="6" fill="#454545"/>
<rect x="713" y="347" width="1" height="6" fill="#454545"/>
<rect x="755" y="347" width="1" height="6" fill="#454545"/>
<rect x="797" y="347" width="1" height="6" fill="#454545"/>
<rect x="839" y="347" width="1" height="6" fill="#454545"/>
<rect x="881" y="347" width="1" height="6" fill="#454545"/>
<rect x="923" y="347" width="1" height="6" fill="#454545"/>
<rect x="965" y="347" width="1" height="6" fill="#454545"/>
<rect x="1007" y="347" width="1" height="6" fill="#454545"/>
<rect x="1050" y="347" width="1" height="6" fill="#454545"/>
<rect x="419" y="341" width="1" height="6" fill="#454545"/>
<rect x="461" y="341" width="1" height="6" fill="#454545"/>
<rect x="503" y="341" width="1" height="6" fill="#454545"/>
<rect x="545" y="341" width="1" height="6" fill="#454545"/>
<rect x="587" y="341" width="1" height="6" fill="#454545"/>
<rect x="629" y="341" width="1" height="6" fill="#454545"/>
<rect x="671" y="341" width="1" height="6" fill="#454545"/>
<rect x="713" y="341" width="1" height="6" fill="#454545"/>
<rect x="755" y="341" width="1" height="6" fill="#454545"/>
<rect x="797" y="341" width="1" height="6" fill="#454545"/>
<rect x="839" y="341" width="1" height="6" fill="#454545"/>
<rect x="881" y="341" width="1" height="6" fill="#454545"/>
<rect x="923" y="341" width="1" height="6" fill="#454545"/>
<rect x="965" y="341" width="1" height="6" fill="#454545"/>
<rect x="1007" y="341" width="1" height="6" fill="#454545"/>
<rect x="1050" y="341" width="1" height="6" fill="#454545"/>
<rect x="419" y="335" width="1" height="6" fill="#454545"/>
<rect x="461" y="335" width="1" height="6" fill="#454545"/>
<rect x="503" y="335" width="1" height="6" fill="#454545"/>
<rect x="545" y="335" width="1" height="6" fill="#454545"/>
<rect x="587" y="335" width="1" height="6" fill="#454545"/>
<rect x="629" y="335" width="1" height="6" fill="#454545"/>
<rect x="671" y="335" width="1" height="6" fill="#454545"/>
<rect x="713" y="335" width="1" height="6" fill="#454545"/>
<rect x="755" y="335" width="1" height="6" fill="#454545"/>
<rect x="797" y="335" width="1" height="6" fill="#454545"/>
<rect x="839" y="335" width="1" height="6" fill="#454545"/>
<rect x="881" y="335" width="1" height="6" fill="#454545"/>
<rect x="923" y="335" width="1" height="6" fill="#454545"/>
<rect x="965" y="335" width="1" height="6" fill="#454545"/>
<rect x="1007" y="335" width="1" height="6" fill="#454545"/>
<rect x="1050" y="335" width="1" height="6" fill="#454545"/>
<rect x="419" y="329" width="1" height="6" fill="#454545"/>
<rect x="461" y="329" width="1" height="6" fill="#454545"/>
<rect x="503" y="329" width="1" height="6" fill="#454545"/>
<rect x="545" y="329" width="1" height="6" fill="#454545"/>
<rect x="587" y="329" width="1" height="6" fill="#454545"/>
<rect x="629" y="329" width="1" height="6" fill="#454545"/>
<rect x="671" y="329" width="1" height="6" fill="#454545"/>
<rect x="713" y="329" width="1" height="6" fill="#454545"/>
<rect x="755" y="329" width="1" height="6" fill="#454545"/>
<rect x="797" y="329" width="1" height="6" fill="#454545"/>
<rect x="839" y="329" width="1" height="6" fill="#454545"/>
<rect x="881" y="329" width="1" height="6" fill="#454545"/>
<rect x="923" y="329" width="1" height="6" fill="#454545"/>
<rect x="965" y="329" width="1" height="6" fill="#454545"/>
<rect x="1007" y="329" width="1" height="6" fill="#454545"/>
<rect x="1050" y="329" width="1" height="6" fill="#454545"/>
<rect x="461" y="323" width="1" height="6" fill="#454545"/>
<rect x="503" y="323" width="1" height="6" fill="#454545"/>
<rect x="545" y="323" width="1" height="6" fill="#454545"/>
<rect x="587" y="323" width="1" height="6" fill="#454545"/>
<rect x="629" y="323" width="1" height="6" fill="#454545"/>
<rect x="671" y="323" width="1" height="6" fill="#454545"/>
<rect x="713" y="323" width="1" height="6" fill="#454545"/>
<rect x="755" y="323" width="1" height="6" fill="#454545"/>
<rect x="797" y="323" width="1" height="6" fill="#454545"/>
<rect x="839" y="323" width="1" height="6" fill="#454545"/>
<rect x="881" y="323" width="1" height="6" fill="#454545"/>
<rect x="923" y="323" width="1" height="6" fill="#454545"/>
<rect x="965" y="323" width="1" height="6" fill="#454545"/>
<rect x="1007" y="323" width="1" height="6" fill="#454545"/>
<rect x="1050" y="323" width="1" height="6" fill="#454545"/>
<rect x="461" y="316" width="1" height="7" fill="#454545"/>
<rect x="503" y="316" width="1" height="7" fill="#454545"/>
<rect x="545" y="316" width="1" height="7" fill="#454545"/>
<rect x="587" y="316" width="1" height="7" fill="#454545"/>
<rect x="629" y="316" width="1" height="7" fill="#454545"/>
<rect x="671" y="316" width="1" height="7" fill="#454545"/>
<rect x="713" y="316" width="1" height="7" fill="#454545"/>
<rect x="755" y="316" width="1" height="7" fill="#454545"/>
<rect x="797" y="316" width="1" height="7" fill="#454545"/>
<rect x="839" y="316" width="1" height="7" fill="#454545"/>
<rect x="881" y="316" width="1" height="7" fill="#454545"/>
<rect x="923" y="316" width="1" height="7" fill="#454545"/>
<rect x="965" y="316" width="1" height="7" fill="#454545"/>
<rect x="1007" y="316" width="1" height="7" fill="#454545"/>
<rect x="1050" y="316" width="1" height="7" fill="#454545"/>
<rect x="461" y="310" width="1" height="6" fill="#454545"/>
<rect x="503" y="310" width="1" height="6" fill="#454545"/>
<rect x="545" y="310" width="1" height="6" fill="#454545"/>
<rect x="587" y="310" width="1" height="6" fill="#454545"/>
<rect x="629" y="310" width="1" height="6" fill="#454545"/>
<rect x="671" y="310" width="1" height="6" fill="#454545"/>
<rect x="713" y="310" width="1" height="6" fill="#454545"/>
<rect x="755" y="310" width="1" height="6" fill="#454545"/>
<rect x="797" y="310" width="1" height="6" fill="#454545"/>
<rect x="839" y="310" width="1" height="6" fill="#454545"/>
<rect x="881" y="310" width="1" height="6" fill="#454545"/>
<rect x="923" y="310" width="1" height="6" fill="#454545"/>
<rect x="965" y="310" width="1" height="6" fill="#454545"/>
<rect x="1007" y="310" width="1" height="6" fill="#454545"/>
<rect x="1050" y="310" width="1" height="6" fill="#454545"/>
<rect x="461" y="304" width="1" height="6" fill="#454545"/>
<rect x="503" y="304" width="1" height="6" fill="#454545"/>
<rect x="545" y="304" width="1" height="6" fill="#454545"/>
<rect x="587" y="304" width="1" height="6" fill="#454545"/>
<rect x="629" y="304" width="1" height="6" fill="#454545"/>
<rect x="671" y="304" width="1" height="6" fill="#454545"/>
<rect x="713" y="304" width="1" height="6" fill="#454545"/>
<rect x="755" y="304" width="1" height="6" fill="#454545"/>
<rect x="797" y="304" width="1" height="6" fill="#454545"/>
<rect x="839" y="304" width="1" height="6" fill="#454545"/>
<rect x="881" y="304" width="1" height="6" fill="#454545"/>
<rect x="923" y="304" width="1" height="6" fill="#454545"/>
<rect x="965" y="304" width="1" height="6" fill="#454545"/>
<rect x="1007" y="304" width="1" height="6" fill="#454545"/>
<rect x="1050" y="304" width="1" height="6" fill="#454545"/>
<rect x="461" y="298" width="1" height="6" fill="#454545"/>
<rect x="503" y="298" width="1" height="6" fill="#454545"/>
<rect x="545" y="298" width="1" height="6" fill="#454545"/>
<rect x="587" y="298" width="1" height="6" fill="#454545"/>
<rect x="629" y="298" width="1" height="6" fill="#454545"/>
<rect x="671" y="298" width="1" height="6" fill="#454545"/>
<rect x="713" y="298" width="1" height="6" fill="#454545"/>
<rect x="755" y="298" width="1" height="6" fill="#454545"/>
<rect x="797" y="298" width="1" height="6" fill="#454545"/>
<rect x="839" y="298" width="1" height="6" fill="#454545"/>
<rect x="881" y="298" width="1" height="6" fill="#454545"/>
<rect x="923" y="298" width="1" height="6" fill="#454545"/>
<rect x="965" y="298" width="1" height="6" fill="#454545"/>
<rect x="1007" y="298" width="1" height="6" fill="#454545"/>
<rect x="1050" y="298" width="1" height="6" fill="#454545"/>
<rect x="461" y="292" width="1" height="6" fill="#454545"/>
<rect x="503" y="292" width="1" height="6" fill="#454545"/>
<rect x="545" y="292" width="1" height="6" fill="#454545"/>
<rect x="587" y="292" width="1" height="6" fill="#454545"/>
<rect x="629" y="292" width="1" height="6" fill="#454545"/>
<rect x="671" y="292" width="1" height="6" fill="#454545"/>
<rect x="713" y="292" width="1" height="6" fill="#454545"/>
<rect x="755" y="292" width="1" height="6" fill="#454545"/>
<rect x="797" y="292" width="1" height="6" fill="#454545"/>
<rect x="839" y="292" width="1" height="6" fill="#454545"/>
<rect x="881" y="292" width="1" height="6" fill="#454545"/>
<rect x="923" y="292" width="1" height="6" fill="#454545"/>
<rect x="965" y="292" width="1" height="6" fill="#454545"/>
<rect x="1007" y="292" width="1" height="6" fill="#454545"/>
<rect x="1050" y="292" width="1" height="6" fill="#454545"/>
<rect x="461" y="286" width="1" height="6" fill="#454545"/>
<rect x="503" y="286" width="1" height="6" fill="#454545"/>
<rect x="545" y="286" width="1" height="6" fill="#454545"/>
<rect x="587" y="286" width="1" height="6" fill="#454545"/>
<rect x="629" y="286" width="1" height="6" fill="#454545"/>
<rect x="671" y="286" width="1" height="6" fill="#454545"/>
<rect x="713" y="286" width="1" height="6" fill="#454545"/>
<rect x="755" y="286" width="1" height="6" fill="#454545"/>
<rect x="797" y="286" width="1" height="6" fill="#454545"/>
<rect x="839" y="286" width="1" height="6" fill="#454545"/>
<rect x="881" y="286" width="1" height="6" fill="#454545"/>
<rect x="923" y="286" width="1" height="6" fill="#454545"/>
<rect x="965" y="286" width="1" height="6" fill="#454545"/>
<rect x="1007" y="286" width="1" height="6" fill="#454545"/>
<rect x="1050" y="286" width="1" height="6" fill="#454545"/>
<rect x="461" y="280" width="1" height="6" fill="#454545"/>
<rect x="503" y="280" width="1" height="6" fill="#454545"/>
<rect x="545" y="280" width="1" height="6" fill="#454545"/>
<rect x="587" y="280" width="1" height="6" fill="#454545"/>
<rect x="629" y="280" width="1" height="6" fill="#454545"/>
<rect x="671" y="280" width="1" height="6" fill="#454545"/>
<rect x="713" y="280" width="1" height="6" fill="#454545"/>
<rect x="755" y="280" width="1" height="6" fill="#454545"/>
<rect x="797" y="280" width="1" height="6" fill="#454545"/>
<rect x="839" y="280" width="1" height="6" fill="#454545"/>
<rect x="881" y="280" width="1" height="6" fill="#454545"/>
<rect x="923" y="280" width="1" height="6" fill="#454545"/>
<rect x="965" y="280" width="1" height="6" fill="#454545"/>
<rect x="1007" y="280" width="1" height="6" fill="#454545"/>
<rect x="1050" y="280" width="1" height="6" fill="#454545"/>
<rect x="461" y="274" width="1" height="6" fill="#454545"/>
<rect x="503" y="274" width="1" height="6" fill="#454545"/>
<rect x="545" y="274" width="1" height="6" fill="#454545"/>
<rect x="587" y="274" width="1" height="6" fill="#454545"/>
<rect x="629" y="274" width="1" height="6" fill="#454545"/>
<rect x="671" y="274" width="1" height="6" fill="#454545"/>
<rect x="713" y="274" width="1" height="6" fill="#454545"/>
<rect x="755" y="274" width="1" height="6" fill="#454545"/>
<rect x="797" y="274" width="1" height="6" fill="#454545"/>
<rect x="839" y="274" width="1" height="6" fill="#454545"/>
<rect x="881" y="274" width="1" height="6" fill="#454545"/>
<rect x="923" y="274" width="1" height="6" fill="#454545"/>
<rect x="965" y="274" width="1" height="6" fill="#454545"/>
<rect x="1007" y="274" width="1" height="6" fill="#454545"/>
<rect x="1050" y="274" width="1" height="6" fill="#454545"/>
<rect x="461" y="267" width="1" height="7" fill="#454545"/>
<rect x="503" y="267" width="1" height="7" fill="#454545"/>
<rect x="545" y="267" width="1" height="7" fill="#454545"/>
<rect x="587" y="267" width="1" height="7" fill="#454545"/>
<rect x="629" y="267" width="1" height="7" fill="#454545"/>
<rect x="671" y="267" width="1" height="7" fill="#454545"/>
<rect x="713" y="267" width="1" height="7" fill="#454545"/>
<rect x="755" y="267" width="1" height="7" fill="#454545"/>
<rect x="797" y="267" width="1" height="7" fill="#454545"/>
<rect x="839" y="267" width="1" height="7" fill="#454545"/>
<rect x="881" y="267" width="1" height="7" fill="#454545"/>
<rect x="923" y="267" width="1" height="7" fill="#454545"/>
<rect x="965" y="267" width="1" height="7" fill="#454545"/>
<rect x="1007" y="267" width="1" height="7" fill="#454545"/>
<rect x="1050" y="267" width="1" height="7" fill="#454545"/>
<rect x="461" y="261" width="1" height="6" fill="#454545"/>
<rect x="503" y="261" width="1" height="6" fill="#454545"/>
<rect x="545" y="261" width="1" height="6" fill="#454545"/>
<rect x="587" y="261" width="1" height="6" fill="#454545"/>
<rect x="629" y="261" width="1" height="6" fill="#454545"/>
<rect x="671" y="261" width="1" height="6" fill="#454545"/>
<rect x="713" y="261" width="1" height="6" fill="#454545"/>
<rect x="755" y="261" width="1" height="6" fill="#454545"/>
<rect x="797" y="261" width="1" height="6" fill="#454545"/>
<rect x="839" y="261" width="1" height="6" fill="#454545"/>
<rect x="881" y="261" width="1" height="6" fill="#454545"/>
<rect x="923" y="261" width="1" height="6" fill="#454545"/>
<rect x="965" y="261" width="1" height="6" fill="#454545"/>
<rect x="1007" y="261" width="1" height="6" fill="#454545"/>
<rect x="1050" y="261" width="1" height="6" fill="#454545"/>
<rect x="503" y="255" width="1" height="6" fill="#454545"/>
<rect x="545" y="255" width="1" height="6" fill="#454545"/>
<rect x="587" y="255" width="1" height="6" fill="#454545"/>
<rect x="629" y="255" width="1" height="6" fill="#454545"/>
<rect x="671" y="255" width="1" height="6" fill="#454545"/>
<rect x="713" y="255" width="1" height="6" fill="#454545"/>
<rect x="755" y="255" width="1" height="6" fill="#454545"/>
<rect x="797" y="255" width="1" height="6" fill="#454545"/>
<rect x="839" y="255" width="1" height="6" fill="#454545"/>
<rect x="881" y="255" width="1" height="6" fill="#454545"/>
<rect x="923" y="255" width="1" height="6" fill="#454545"/>
<rect x="965" y="255" width="1" height="6" fill="#454545"/>
<rect x="1007" y="255" width="1" height="6" fill="#454545"/>
<rect x="1050" y="255" width="1" height="6" fill="#454545"/>
<rect x="503" y="249" width="1" height="6" fill="#454545"/>
<rect x="545" y="249" width="1" height="6" fill="#454545"/>
<rect x="587" y="249" width="1" height="6" fill="#454545"/>
<rect x="629" y="249" width="1" height="6" fill="#454545"/>
<rect x="671" y="249" width="1" height="6" fill="#454545"/>
<rect x="713" y="249" width="1" height="6" fill="#454545"/>
<rect x="755" y="249" width="1" height="6" fill="#454545"/>
<rect x="797" y="249" width="1" height="6" fill="#454545"/>
<rect x="839" y="249" width="1" height="6" fill="#454545"/>
<rect x="881" y="249" width="1" height="6" fill="#454545"/>
<rect x="923" y="249" width="1" height="6" fill="#454545"/>
<rect x="965" y="249" width="1" height="6" fill="#454545"/>
<rect x="1007" y="249" width="1" height="6" fill="#454545"/>
<rect x="1050" y="249" width="1" height="6" fill="#454545"/>
<rect x="503" y="243" width="1" height="6" fill="#454545"/>
<rect x="545" y="243" width="1" height="6" fill="#454545"/>
<rect x="587" y="243" width="1" height="6" fill="#454545"/>
<rect x="629" y="243" width="1" height="6" fill="#454545"/>
<rect x="671" y="243" width="1" height="6" fill="#454545"/>
<rect x="713" y="243" width="1" height="6" fill="#454545"/>
<rect x="755" y="243" width="1" height="6" fill="#454545"/>
<rect x="797" y="243" width="1" height="6" fill="#454545"/>
<rect x="839" y="243" width="1" height="6" fill="#454545"/>
<rect x="881" y="243" width="1" height="6" fill="#454545"/>
<rect x="923" y="243" width="1" height="6" fill="#454545"/>
<rect x="965" y="243" width="1" height="6" fill="#454545"/>
<rect x="1007" y="243" width="1" height="6" fill="#454545"/>
<rect x="1050" y="243" width="1" height="6" fill="#454545"/>
<rect x="503" y="237" width="1" height="6" fill="#454545"/>
<rect x="545" y="237" width="1" height="6" fill="#454545"/>
<rect x="587" y="237" width="1" height="6" fill="#454545"/>
<rect x="629" y="237" width="1" height="6" fill="#454545"/>
<rect x="671" y="237" width="1" height="6" fill="#454545"/>
<rect x="713" y="237" width="1" height="6" fill="#454545"/>
<rect x="755" y="237" width="1" height="6" fill="#454545"/>
<rect x="797" y="237" width="1" height="6" fill="#454545"/>
<rect x="839" y="237" width="1" height="6" fill="#454545"/>
<rect x="881" y="237" width="1" height="6" fill="#454545"/>
<rect x="923" y="237" width="1" height="6" fill="#454545"/>
<rect x="965" y="237" width="1" height="6" fill="#454545"/>
<rect x="1007" y="237" width="1" height="6" fill="#454545"/>
<rect x="1050" y="237" width="1" height="6" fill="#454545"/>
<rect x="503" y="231" width="1" height="6" fill="#454545"/>
<rect x="545" y="231" width="1" height="6" fill="#454545"/>
<rect x="587" y="231" width="1" height="6" fill="#454545"/>
<rect x="629" y="231" width="1" height="6" fill="#454545"/>
<rect x="671" y="231" width="1" height="6" fill="#454545"/>
<rect x="713" y="231" width="1" height="6" fill="#454545"/>
<rect x="755" y="231" width="1" height="6" fill="#454545"/>
<rect x="797" y="231" width="1" height="6" fill="#454545"/>
<rect x="839" y="231" width="1" height="6" fill="#454545"/>
<rect x="881" y="231" width="1" height="6" fill="#454545"/>
<rect x="923" y="231" width="1" height="6" fill="#454545"/>
<rect x="965" y="231" width="1" height="6" fill="#454545"/>
<rect x="1007" y="231" width="1" height="6" fill="#454545"/>
<rect x="1050" y="231" width="1" height="6" fill="#454545"/>
<rect x="503" y="225" width="1" height="6" fill="#454545"/>
<rect x="545" y="225" width="1" height="6" fill="#454545"/>
<rect x="587" y="225" width="1" height="6" fill="#454545"/>
<rect x="629" y="225" width="1" height="6" fill="#454545"/>
<rect x="671" y="225" width="1" height="6" fill="#454545"/>
<rect x="713" y="225" width="1" height="6" fill="#454545"/>
<rect x="755" y="225" width="1" height="6" fill="#454545"/>
<rect x="797" y="225" width="1" height="6" fill="#454545"/>
<rect x="839" y="225" width="1" height="6" fill="#454545"/>
<rect x="881" y="225" width="1" height="6" fill="#454545"/>
<rect x="923" y="225" width="1" height="6" fill="#454545"/>
<rect x="965" y="225" width="1" height="6" fill="#454545"/>
<rect x="1007" y="225" width="1" height="6" fill="#454545"/>
<rect x="1050" y="225" width="1" height="6" fill="#454545"/>
<rect x="503" y="218" width="1" height="7" fill="#454545"/>
<rect x="545" y="218" width="1" height="7" fill="#454545"/>
<rect x="587" y="218" width="1" height="7" fill="#454545"/>
<rect x="629" y="218" width="1" height="7" fill="#454545"/>
<rect x="671" y="218" width="1" height="7" fill="#454545"/>
<rect x="713" y="218" width="1" height="7" fill="#454545"/>
<rect x="755" y="218" width="1" height="7" fill="#454545"/>
<rect x="797" y="218" width="1" height="7" fill="#454545"/>
<rect x="839" y="218" width="1" height="7" fill="#454545"/>
<rect x="881" y="218" width="1" height="7" fill="#454545"/>
<rect x="923" y="218" width="1" height="7" fill="#454545"/>
<rect x="965" y="218" width="1" height="7" fill="#454545"/>
<rect x="1007" y="218" width="1" height="7" fill="#454545"/>
<rect x="1050" y="218" width="1" height="7" fill="#454545"/>
<rect x="503" y="212" width="1" height="6" fill="#454545"/>
<rect x="545" y="212" width="1" height="6" fill="#454545"/>
<rect x="587" y="212" width="1" height="6" fill="#454545"/>
<rect x="629" y="212" width="1" height="6" fill="#454545"/>
<rect x="671" y="212" width="1" height="6" fill="#454545"/>
<rect x="713" y="212" width="1" height="6" fill="#454545"/>
<rect x="755" y="212" width="1" height="6" fill="#454545"/>
<rect x="797" y="212" width="1" height="6" fill="#454545"/>
<rect x="839" y="212" width="1" height="6" fill="#454545"/>
<rect x="881" y="212" width="1" height="6" fill="#454545"/>
<rect x="923" y="212" width="1" height="6" fill="#454545"/>
<rect x="965" y="212" width="1" height="6" fill="#454545"/>
<rect x="1007" y="212" width="1" height="6" fill="#454545"/>
<rect x="1050" y="212" width="1" height="6" fill="#454545"/>
<rect x="503" y="206" width="1" height="6" fill="#454545"/>
<rect x="545" y="206" width="1" height="6" fill="#454545"/>
<rect x="587" y="206" width="1" height="6" fill="#454545"/>
<rect x="629" y="206" width="1" height="6" fill="#454545"/>
<rect x="671" y="206" width="1" height="6" fill="#454545"/>
<rect x="713" y="206" width="1" height="6" fill="#454545"/>
<rect x="755" y="206" width="1" height="6" fill="#454545"/>
<rect x="797" y="206" width="1" height="6" fill="#454545"/>
<rect x="839" y="206" width="1" height="6" fill="#454545"/>
<rect x="881" y="206" width="1" height="6" fill="#454545"/>
<rect x="923" y="206" width="1" height="6" fill="#454545"/>
<rect x="965" y="206" width="1" height="6" fill="#454545"/>
<rect x="1007" y="206" width="1" height="6" fill="#454545"/>
<rect x="1050" y="206" width="1" height="6" fill="#454545"/>
<rect x="503" y="200" width="1" height="6" fill="#454545"/>
<rect x="545" y="200" width="1" height="6" fill="#454545"/>
<rect x="587" y="200" width="1" height="6" fill="#454545"/>
<rect x="629" y="200" width="1" height="6" fill="#454545"/>
<rect x="671" y="200" width="1" height="6" fill="#454545"/>
<rect x="713" y="200" width="1" height="6" fill="#454545"/>
<rect x="755" y="200" width="1" height="6" fill="#454545"/>
<rect x="797" y="200" width="1" height="6" fill="#454545"/>
<rect x="839" y="200" width="1" height="6" fill="#454545"/>
<rect x="881" y="200" width="1" height="6" fill="#454545"/>
<rect x="923" y="200" width="1" height="6" fill="#454545"/>
<rect x="965" y="200" width="1" height="6" fill="#454545"/>
<rect x="1007" y="200" width="1" height="6" fill="#454545"/>
<rect x="1050" y="200" width="1" height="6" fill="#454545"/>
<rect x="503" y="194" width="1" height="6" fill="#454545"/>
<rect x="545" y="194" width="1" height="6" fill="#454545"/>
<rect x="587" y="194" width="1" height="6" fill="#454545"/>
<rect x="629" y="194" width="1" height="6" fill="#454545"/>
<rect x="671" y="194" width="1" height="6" fill="#454545"/>
<rect x="713" y="194" width="1" height="6" fill="#454545"/>
<rect x="755" y="194" width="1" height="6" fill="#454545"/>
<rect x="797" y="194" width="1" height="6" fill="#454545"/>
<rect x="839" y="194" width="1" height="6" fill="#454545"/>
<rect x="881" y="194" width="1" height="6" fill="#454545"/>
<rect x="923" y="194" width="1" height="6" fill="#454545"/>
<rect x="965" y="194" width="1" height="6" fill="#454545"/>
<rect x="1007" y="194" width="1" height="6" fill="#454545"/>
<rect x="1050" y="194" width="1" height="6" fill="#454545"/>
<rect x="503" y="188" width="1" height="6" fill="#454545"/>
<rect x="545" y="188" width="1" height="6" fill="#454545"/>
<rect x="587" y="188" width="1" height="6" fill="#454545"/>
<rect x="629" y="188" width="1" height="6" fill="#454545"/>
<rect x="671" y="188" width="1" height="6" fill="#454545"/>
<rect x="713" y="188" width="1" height="6" fill="#454545"/>
<rect x="755" y="188" width="1" height="6" fill="#454545"/>
<rect x="797" y="188" width="1" height="6" fill="#454545"/>
<rect x="839" y="188" width="1" height="6" fill="#454545"/>
<rect x="881" y="188" width="1" height="6" fill="#454545"/>
<rect x="923" y="188" width="1" height="6" fill="#454545"/>
<rect x="965" y="188" width="1" height="6" fill="#454545"/>
<rect x="1007" y="188" width="1" height="6" fill="#454545"/>
<rect x="1050" y="188" width="1" height="6" fill="#454545"/>
<rect x="503" y="182" width="1" height="6" fill="#454545"/>
<rect x="545" y="182" width="1" height="6" fill="#454545"/>
<rect x="587" y="182" width="1" height="6" fill="#454545"/>
<rect x="629" y="182" width="1" height="6" fill="#454545"/>
<rect x="671" y="182" width="1" height="6" fill="#454545"/>
<rect x="713" y="182" width="1" height="6" fill="#454545"/>
<rect x="755" y="182" width="1" height="6" fill="#454545"/>
<rect x="797" y="182" width="1" height="6" fill="#454545"/>
<rect x="839" y="182" width="1" height="6" fill="#454545"/>
<rect x="881" y="182" width="1" height="6" fill="#454545"/>
<rect x="923" y="182" width="1" height="6" fill="#454545"/>
<rect x="965" y="182" width="1" height="6" fill="#454545"/>
<rect x="1007" y="182" width="1" height="6" fill="#454545"/>
<rect x="1050" y="182" width="1" height="6" fill="#454545"/>
<rect x="503" y="176" width="1" height="6" fill="#454545"/>
<rect x="545" y="176" width="1" height="6" fill="#454545"/>
<rect x="587" y="176" width="1" height="6" fill="#454545"/>
<rect x="629" y="176" width="1" height="6" fill="#454545"/>
<rect x="671" y="176" width="1" height="6" fill="#454545"/>
<rect x="713" y="176" width="1" height="6" fill="#454545"/>
<rect x="755" y="176" width="1" height="6" fill="#454545"/>
<rect x="797" y="176" width="1" height="6" fill="#454545"/>
<rect x="839" y="176" width="1" height="6" fill="#454545"/>
<rect x="881" y="176" width="1" height="6" fill="#454545"/>
<rect x="923" y="176" width="1" height="6" fill="#454545"/>
<rect x="965" y="176" width="1" height="6" fill="#454545"/>
<rect x="1007" y="176" width="1" height="6" fill="#454545"/>
<rect x="1050" y="176" width="1" height="6" fill="#454545"/>
<rect x="503" y="170" width="1" height="6" fill="#454545"/>
<rect x="545" y="170" width="1" height="6" fill="#454545"/>
<rect x="587" y="170" width="1" height="6" fill="#454545"/>
<rect x="629" y="170" width="1" height="6" fill="#454545"/>
<rect x="671" y="170" width="1" height="6" fill="#454545"/>
<rect x="713" y="170" width="1" height="6" fill="#454545"/>
<rect x="755" y="170" width="1" height="6" fill="#454545"/>
<rect x="797" y="170" width="1" height="6" fill="#454545"/>
<rect x="839" y="170" width="1" height="6" fill="#454545"/>
<rect x="881" y="170" width="1" height="6" fill="#454545"/>
<rect x="923" y="170" width="1" height="6" fill="#454545"/>
<rect x="965" y="170" width="1" height="6" fill="#454545"/>
<rect x="1007" y="170" width="1" height="6" fill="#454545"/>
<rect x="1050" y="170" width="1" height="6" fill="#454545"/>
<rect x="503" y="163" width="1" height="7" fill="#454545"/>
<rect x="545" y="163" width="1" height="7" fill="#454545"/>
<rect x="587" y="163" width="1" height="7" fill="#454545"/>
<rect x="629" y="163" width="1" height="7" fill="#454545"/>
<rect x="671" y="163" width="1" height="7" fill="#454545"/>
<rect x="713" y="163" width="1" height="7" fill="#454545"/>
<rect x="755" y="163" width="1" height="7" fill="#454545"/>
<rect x="797" y="163" width="1" height="7" fill="#454545"/>
<rect x="839" y="163" width="1" height="7" fill="#454545"/>
<rect x="881" y="163" width="1" height="7" fill="#454545"/>
<rect x="923" y="163" width="1" height="7" fill="#454545"/>
<rect x="965" y="163" width="1" height="7" fill="#454545"/>
<rect x="1007" y="163" width="1" height="7" fill="#454545"/>
<rect x="1050" y="163" width="1" height="7" fill="#454545"/>
<rect x="503" y="157" width="1" height="6" fill="#454545"/>
<rect x="545" y="157" width="1" height="6" fill="#454545"/>
<rect x="587" y="157" width="1" height="6" fill="#454545"/>
<rect x="629" y="157" width="1" height="6" fill="#454545"/>
<rect x="671" y="157" width="1" height="6" fill="#454545"/>
<rect x="713" y="157" width="1" height="6" fill="#454545"/>
<rect x="755" y="157" width="1" height="6" fill="#454545"/>
<rect x="797" y="157" width="1" height="6" fill="#454545"/>
<rect x="839" y="157" width="1" height="6" fill="#454545"/>
<rect x="881" y="157" width="1" height="6" fill="#454545"/>
<rect x="923" y="157" width="1" height="6" fill="#454545"/>
<rect x="965" y="157" width="1" height="6" fill="#454545"/>
<rect x="1007" y="157" width="1" height="6" fill="#454545"/>
<rect x="1050" y="157" width="1" height="6" fill="#454545"/>
<rect x="545" y="151" width="1" height="6" fill="#454545"/>
<rect x="587" y="151" width="1" height="6" fill="#454545"/>
<rect x="629" y="151" width="1" height="6" fill="#454545"/>
<rect x="671" y="151" width="1" height="6" fill="#454545"/>
<rect x="713" y="151" width="1" height="6" fill="#454545"/>
<rect x="755" y="151" width="1" height="6" fill="#454545"/>
<rect x="797" y="151" width="1" height="6" fill="#454545"/>
<rect x="839" y="151" width="1" height="6" fill="#454545"/>
<rect x="881" y="151" width="1" height="6" fill="#454545"/>
<rect x="923" y="151" width="1" height="6" fill="#454545"/>
<rect x="965" y="151" width="1" height="6" fill="#454545"/>
<rect x="1007" y="151" width="1" height="6" fill="#454545"/>
<rect x="1050" y="151" width="1" height="6" fill="#454545"/>
<rect x="545" y="145" width="1" height="6" fill="#454545"/>
<rect x="587" y="145" width="1" height="6" fill="#454545"/>
<rect x="629" y="145" width="1" height="6" fill="#454545"/>
<rect x="671" y="145" width="1" height="6" fill="#454545"/>
<rect x="713" y="145" width="1" height="6" fill="#454545"/>
<rect x="755" y="145" width="1" height="6" fill="#454545"/>
<rect x="797" y="145" width="1" height="6" fill="#454545"/>
<rect x="839" y="145" width="1" height="6" fill="#454545"/>
<rect x="881" y="145" width="1" height="6" fill="#454545"/>
<rect x="923" y="145" width="1" height="6" fill="#454545"/>
<rect x="965" y="145" width="1" height="6" fill="#454545"/>
<rect x="1007" y="145" width="1" height="6" fill="#454545"/>
<rect x="1050" y="145" width="1" height="6" fill="#454545"/>
<rect x="545" y="139" width="1" height="6" fill="#454545"/>
<rect x="587" y="139" width="1" height="6" fill="#454545"/>
<rect x="629" y="139" width="1" height="6" fill="#454545"/>
<rect x="671" y="139" width="1" height="6" fill="#454545"/>
<rect x="713" y="139" width="1" height="6" fill="#454545"/>
<rect x="755" y="139" width="1" height="6" fill="#454545"/>
<rect x="797" y="139" width="1" height="6" fill="#454545"/>
<rect x="839" y="139" width="1" height="6" fill="#454545"/>
<rect x="881" y="139" width="1" height="6" fill="#454545"/>
<rect x="923" y="139" width="1" height="6" fill="#454545"/>
<rect x="965" y="139" width="1" height="6" fill="#454545"/>
<rect x="1007" y="139" width="1" height="6" fill="#454545"/>
<rect x="1050" y="139" width="1" height="6" fill="#454545"/>
<rect x="545" y="133" width="1" height="6" fill="#454545"/>
<rect x="587" y="133" width="1" height="6" fill="#454545"/>
<rect x="629" y="133" width="1" height="6" fill="#454545"/>
<rect x="671" y="133" width="1" height="6" fill="#454545"/>
<rect x="713" y="133" width="1" height="6" fill="#454545"/>
<rect x="755" y="133" width="1" height="6" fill="#454545"/>
<rect x="797" y="133" width="1" height="6" fill="#454545"/>
<rect x="839" y="133" width="1" height="6" fill="#454545"/>
<rect x="881" y="133" width="1" height="6" fill="#454545"/>
<rect x="923" y="133" width="1" height="6" fill="#454545"/>
<rect x="965" y="133" width="1" height="6" fill="#454545"/>
<rect x="1007" y="133" width="1" height="6" fill="#454545"/>
<rect x="1050" y="133" width="1" height="6" fill="#454545"/>
<rect x="545" y="127" width="1" height="6" fill="#454545"/>
<rect x="587" y="127" width="1" height="6" fill="#454545"/>
<rect x="629" y="127" width="1" height="6" fill="#454545"/>
<rect x="671" y="127" width="1" height="6" fill="#454545"/>
<rect x="713" y="127" width="1" height="6" fill="#454545"/>
<rect x="755" y="127" width="1" height="6" fill="#454545"/>
<rect x="797" y="127" width="1" height="6" fill="#454545"/>
<rect x="839" y="127" width="1" height="6" fill="#454545"/>
<rect x="881" y="127" width="1" height="6" fill="#454545"/>
<rect x="923" y="127" width="1" height="6" fill="#454545"/>
<rect x="965" y="127" width="1" height="6" fill="#454545"/>
<rect x="1007" y="127" width="1" height="6" fill="#454545"/>
<rect x="1050" y="127" width="1" height="6" fill="#454545"/>
<rect x="545" y="121" width="1" height="6" fill="#454545"/>
<rect x="587" y="121" width="1" height="6" fill="#454545"/>
<rect x="629" y="121" width="1" height="6" fill="#454545"/>
<rect x="671" y="121" width="1" height="6" fill="#454545"/>
<rect x="713" y="121" width="1" height="6" fill="#454545"/>
<rect x="755" y="121" width="1" height="6" fill="#454545"/>
<rect x="797" y="121" width="1" height="6" fill="#454545"/>
<rect x="839" y="121" width="1" height="6" fill="#454545"/>
<rect x="881" y="121" width="1" height="6" fill="#454545"/>
<rect x="923" y="121" width="1" height="6" fill="#454545"/>
<rect x="965" y="121" width="1" height="6" fill="#454545"/>
<rect x="1007" y="121" width="1" height="6" fill="#454545"/>
<rect x="1050" y="121" width="1" height="6" fill="#454545"/>
<rect x="545" y="114" width="1" height="7" fill="#454545"/>
<rect x="587" y="114" width="1" height="7" fill="#454545"/>
<rect x="629" y="114" width="1" height="7" fill="#454545"/>
<rect x="671" y="114" width="1" height="7" fill="#454545"/>
<rect x="713" y="114" width="1" height="7" fill="#454545"/>
<rect x="755" y="114" width="1" height="7" fill="#454545"/>
<rect x="797" y="114" width="1" height="7" fill="#454545"/>
<rect x="839" y="114" width="1" height="7" fill="#454545"/>
<rect x="881" y="114" width="1" height="7" fill="#454545"/>
<rect x="923" y="114" width="1" height="7" fill="#454545"/>
<rect x="965" y="114" width="1" height="7" fill="#454545"/>
<rect x="1007" y="114" width="1" height="7" fill="#454545"/>
<rect x="1050" y="114" width="1" height="7" fill="#454545"/>
<rect x="545" y="108" width="1" height="6" fill="#454545"/>
<rect x="587" y="108" width="1" height="6" fill="#454545"/>
<rect x="629" y="108" width="1" height="6" fill="#454545"/>
<rect x="671" y="108" width="1" height="6" fill="#454545"/>
<rect x="713" y="108" width="1" height="6" fill="#454545"/>
<rect x="755" y="108" width="1" height="6" fill="#454545"/>
<rect x="797" y="108" width="1" height="6" fill="#454545"/>
<rect x="839" y="108" width="1" height="6" fill="#454545"/>
<rect x="881" y="108" width="1" height="6" fill="#454545"/>
<rect x="923" y="108" width="1" height="6" fill="#454545"/>
<rect x="965" y="108" width="1" height="6" fill="#454545"/>
<rect x="1007" y="108" width="1" height="6" fill="#454545"/>
<rect x="1050" y="108" width="1" height="6" fill="#454545"/>
<rect x="545" y="102" width="1" height="6" fill="#454545"/>
<rect x="587" y="102" width="1" height="6" fill="#454545"/>
<rect x="629" y="102" width="1" height="6" fill="#454545"/>
<rect x="671" y="102" width="1" height="6" fill="#454545"/>
<rect x="713" y="102" width="1" height="6" fill="#454545"/>
<rect x="755" y="102" width="1" height="6" fill="#454545"/>
<rect x="797" y="102" width="1" height="6" fill="#454545"/>
<rect x="839" y="102" width="1" height="6" fill="#454545"/>
<rect x="881" y="102" width="1" height="6" fill="#454545"/>
<rect x="923" y="102" width="1" height="6" fill="#454545"/>
<rect x="965" y="102" width="1" height="6" fill="#454545"/>
<rect x="1007" y="102" width="1" height="6" fill="#454545"/>
<rect x="1050" y="102" width="1" height="6" fill="#454545"/>
<rect x="545" y="96" width="1" height="6" fill="#454545"/>
<rect x="587" y="96" width="1" height="6" fill="#454545"/>
<rect x="629" y="96" width="1" height="6" fill="#454545"/>
<rect x="671" y="96" width="1" height="6" fill="#454545"/>
<rect x="713" y="96" width="1" height="6" fill="#454545"/>
<rect x="755" y="96" width="1" height="6" fill="#454545"/>
<rect x="797" y="96" width="1" height="6" fill="#454545"/>
<rect x="839" y="96" width="1" height="6" fill="#454545"/>
<rect x="881" y="96" width="1" height="6" fill="#454545"/>
<rect x="923" y="96" width="1" height="6" fill="#454545"/>
<rect x="965" y="96" width="1" height="6" fill="#454545"/>
<rect x="1007" y="96" width="1" height="6" fill="#454545"/>
<rect x="1050" y="96" width="1" height="6" fill="#454545"/>
<rect x="545" y="90" width="1" height="6" fill="#454545"/>
<rect x="587" y="90" width="1" height="6" fill="#454545"/>
<rect x="629" y="90" width="1" height="6" fill="#454545"/>
<rect x="671" y="90" width="1" height="6" fill="#454545"/>
<rect x="713" y="90" width="1" height="6" fill="#454545"/>
<rect x="755" y="90" width="1" height="6" fill="#454545"/>
<rect x="797" y="90" width="1" height="6" fill="#454545"/>
<rect x="839" y="90" width="1" height="6" fill="#454545"/>
<rect x="881" y="90" width="1" height="6" fill="#454545"/>
<rect x="923" y="90" width="1" height="6" fill="#454545"/>
<rect x="965" y="90" width="1" height="6" fill="#454545"/>
<rect x="1007" y="90" width="1" height="6" fill="#454545"/>
<rect x="1050" y="90" width="1" height="6" fill="#454545"/>
<rect x="545" y="84" width="1" height="6" fill="#454545"/>
<rect x="587" y="84" width="1" height="6" fill="#454545"/>
<rect x="629" y="84" width="1" height="6" fill="#454545"/>
<rect x="671" y="84" width="1" height="6" fill="#454545"/>
<rect x="713" y="84" width="1" height="6" fill="#454545"/>
<rect x="755" y="84" width="1" height="6" fill="#454545"/>
<rect x="797" y="84" width="1" height="6" fill="#454545"/>
<rect x="839" y="84" width="1" height="6" fill="#454545"/>
<rect x="881" y="84" width="1" height="6" fill="#454545"/>
<rect x="923" y="84" width="1" height="6" fill="#454545"/>
<rect x="965" y="84" width="1" height="6" fill="#454545"/>
<rect x="1007" y="84" width="1" height="6" fill="#454545"/>
<rect x="1050" y="84" width="1" height="6" fill="#454545"/>
<rect x="545" y="78" width="1" height="6" fill="#454545"/>
<rect x="587" y="78" width="1" height="6" fill="#454545"/>
<rect x="629" y="78" width="1" height="6" fill="#454545"/>
<rect x="671" y="78" width="1" height="6" fill="#454545"/>
<rect x="713" y="78" width="1" height="6" fill="#454545"/>
<rect x="755" y="78" width="1" height="6" fill="#454545"/>
<rect x="797" y="78" width="1" height="6" fill="#454545"/>
<rect x="839" y="78" width="1" height="6" fill="#454545"/>
<rect x="881" y="78" width="1" height="6" fill="#454545"/>
<rect x="923" y="78" width="1" height="6" fill="#454545"/>
<rect x="965" y="78" width="1" height="6" fill="#454545"/>
<rect x="1007" y="78" width="1" height="6" fill="#454545"/>
<rect x="1050" y="78" width="1" height="6" fill="#454545"/>
<rect x="545" y="72" width="1" height="6" fill="#454545"/>
<rect x="587" y="72" width="1" height="6" fill="#454545"/>
<rect x="629" y="72" width="1" height="6" fill="#454545"/>
<rect x="671" y="72" width="1" height="6" fill="#454545"/>
<rect x="713" y="72" width="1" height="6" fill="#454545"/>
<rect x="755" y="72" width="1" height="6" fill="#454545"/>
<rect x="797" y="72" width="1" height="6" fill="#454545"/>
<rect x="839" y="72" width="1" height="6" fill="#454545"/>
<rect x="881" y="72" width="1" height="6" fill="#454545"/>
<rect x="923" y="72" width="1" height="6" fill="#454545"/>
<rect x="965" y="72" width="1" height="6" fill="#454545"/>
<rect x="1007" y="72" width="1" height="6" fill="#454545"/>
<rect x="1050" y="72" width="1" height="6" fill="#454545"/>
<rect x="545" y="65" width="1" height="7" fill="#454545"/>
<rect x="587" y="65" width="1" height="7" fill="#454545"/>
<rect x="629" y="65" width="1" height="7" fill="#454545"/>
<rect x="671" y="65" width="1" height="7" fill="#454545"/>
<rect x="713" y="65" width="1" height="7" fill="#454545"/>
<rect x="755" y="65" width="1" height="7" fill="#454545"/>
<rect x="797" y="65" width="1" height="7" fill="#454545"/>
<rect x="839" y="65" width="1" height="7" fill="#454545"/>
<rect x="881" y="65" width="1" height="7" fill="#454545"/>
<rect x="923" y="65" width="1" height="7" fill="#454545"/>
<rect x="965" y="65" width="1" height="7" fill="#454545"/>
<rect x="1007" y="65" width="1" height="7" fill="#454545"/>
<rect x="1050" y="65" width="1" height="7" fill="#454545"/>
<rect x="545" y="59" width="1" height="6" fill="#454545"/>
<rect x="587" y="59" width="1" height="6" fill="#454545"/>
<rect x="629" y="59" width="1" height="6" fill="#454545"/>
<rect x="671" y="59" width="1" height="6" fill="#454545"/>
<rect x="713" y="59" width="1" height="6" fill="#454545"/>
<rect x="755" y="59" width="1" height="6" fill="#454545"/>
<rect x="797" y="59" width="1" height="6" fill="#454545"/>
<rect x="839" y="59" width="1" height="6" fill="#454545"/>
<rect x="881" y="59" width="1" height="6" fill="#454545"/>
<rect x="923" y="59" width="1" height="6" fill="#454545"/>
<rect x="965" y="59" width="1" height="6" fill="#454545"/>
<rect x="1007" y="59" width="1" height="6" fill="#454545"/>
<rect x="1050" y="59" width="1" height="6" fill="#454545"/>
<rect x="545" y="53" width="1" height="6" fill="#454545"/>
<rect x="587" y="53" width="1" height="6" fill="#454545"/>
<rect x="629" y="53" width="1" height="6" fill="#454545"/>
<rect x="671" y="53" width="1" height="6" fill="#454545"/>
<rect x="713" y="53" width="1" height="6" fill="#454545"/>
<rect x="755" y="53" width="1" height="6" fill="#454545"/>
<rect x="797" y="53" width="1" height="6" fill="#454545"/>
<rect x="839" y="53" width="1" height="6" fill="#454545"/>
<rect x="881" y="53" width="1" height="6" fill="#454545"/>
<rect x="923" y="53" width="1" height="6" fill="#454545"/>
<rect x="965" y="53" width="1" height="6" fill="#454545"/>
<rect x="1007" y="53" width="1" height="6" fill="#454545"/>
<rect x="1050" y="53" width="1" height="6" fill="#454545"/>
<rect x="545" y="47" width="1" height="6" fill="#454545"/>
<rect x="587" y="47" width="1" height="6" fill="#454545"/>
<rect x="629" y="47" width="1" height="6" fill="#454545"/>
<rect x="671" y="47" width="1" height="6" fill="#454545"/>
<rect x="713" y="47" width="1" height="6" fill="#454545"/>
<rect x="755" y="47" width="1" height="6" fill="#454545"/>
<rect x="797" y="47" width="1" height="6" fill="#454545"/>
<rect x="839" y="47" width="1" height="6" fill="#454545"/>
<rect x="881" y="47" width="1" height="6" fill="#454545"/>
<rect x="923" y="47" width="1" height="6" fill="#454545"/>
<rect x="965" y="47" width="1" height="6" fill="#454545"/>
<rect x="1007" y="47" width="1" height="6" fill="#454545"/>
<rect x="1050" y="47" width="1" height="6" fill="#454545"/>
<rect x="545" y="41" width="1" height="6" fill="#454545"/>
<rect x="587" y="41" width="1" height="6" fill="#454545"/>
<rect x="629" y="41" width="1" height="6" fill="#454545"/>
<rect x="671" y="41" width="1" height="6" fill="#454545"/>
<rect x="713" y="41" width="1" height="6" fill="#454545"/>
<rect x="755" y="41" width="1" height="6" fill="#454545"/>
<rect x="797" y="41" width="1" height="6" fill="#454545"/>
<rect x="839" y="41" width="1" height="6" fill="#454545"/>
<rect x="881" y="41" width="1" height="6" fill="#454545"/>
<rect x="923" y="41" width="1" height="6" fill="#454545"/>
<rect x="965" y="41" width="1" height="6" fill="#454545"/>
<rect x="1007" y="41" width="1" height="6" fill="#454545"/>
<rect x="1050" y="41" width="1" height="6" fill="#454545"/>
<path fill="#500080" d="M85 365h2v6h-2zM92 365h2v6h-2zM96 365h1v6h-1zM128 365h2v6h-2zM131 365h2v6h-2zM150 365h2v6h-2zM155 365h2v6h-2zM214 365h1v6h-1zM226 365h1v6h-1zM253 365h2v6h-2zM506 365h1v6h-1zM556 365h1v6h-1zM633 365h1v6h-1zM662 365h1v6h-1zM708 365h2v6h-2zM764 365h2v6h-2zM983 365h1v6h-1zM1031 365h2v6h-2zM87 359h1v6h-1zM89 359h1v6h-1zM96 359h1v6h-1zM115 359h1v6h-1zM150 359h2v6h-2zM205 359h1v6h-1zM218 359h2v6h-2zM223 359h1v6h-1zM241 359h1v6h-1zM246 359h1v6h-1zM308 359h1v6h-1zM333 359h1v6h-1zM388 359h1v6h-1zM399 359h2v6h-2zM411 359h1v6h-1zM487 359h2v6h-2zM492 359h1v6h-1zM544 359h2v6h-2zM551 359h1v6h-1zM726 359h1v6h-1zM758 359h2v6h-2zM811 359h1v6h-1zM856 359h1v6h-1zM886 359h2v6h-2zM997 359h1v6h-1zM1089 359h1v6h-1zM85 353h2v6h-2zM90 353h1v6h-1zM97 353h2v6h-2zM110 353h2v6h-2zM115 353h1v6h-1zM128 353h2v6h-2zM135 353h2v6h-2zM146 353h1v6h-1zM150 353h2v6h-2zM206 353h1v6h-1zM209 353h1v6h-1zM213 353h1v6h-1zM215 353h1v6h-1zM547 353h1v6h-1zM638 353h1v6h-1zM643 353h1v6h-1zM672 353h2v6h-2zM700 353h2v6h-2zM745 353h2v6h-2zM766 353h1v6h-1zM852 353h1v6h-1zM876 353h2v6h-2zM1010 353h2v6h-2zM111 347h1v6h-1zM119 347h2v6h-2zM205 347h1v6h-1zM215 347h1v6h-1zM240 347h2v6h-2zM369 347h1v6h-1zM499 347h1v6h-1zM610 347h1v6h-1zM625 347h2v6h-2zM715 347h1v6h-1zM747 347h1v6h-1zM815 347h2v6h-2zM871 347h1v6h-1zM897 347h1v6h-1zM123 341h1v6h-1zM126 341h1v6h-1zM130 341h1v6h-1zM142 341h1v6h-1zM205 341h1v6h-1zM630 341h1v6h-1zM111 335h1v6h-1zM130 335h1v6h-1zM144 335h2v6h-2zM149 335h1v6h-1zM201 335h1v6h-1zM205 335h2v6h-2zM215 335h1v6h-1zM224 335h2v6h-2zM566 335h1v6h-1zM620 335h2v6h-2zM631 335h1v6h-1zM642 335h1v6h-1zM687 335h1v6h-1zM711 335h1v6h-1zM764 335h2v6h-2zM779 335h1v6h-1zM824 335h1v6h-1zM892 335h2v6h-2zM947 335h2v6h-2zM1003 335h2v6h-2zM1008 335h1v6h-1zM119 329h2v6h-2zM209 329h1v6h-1zM496 329h1v6h-1zM518 329h1v6h-1zM668 329h1v6h-1zM684 329h1v6h-1zM118 323h1v6h-1zM121 323h2v6h-2zM125 323h1v6h-1zM140 323h1v6h-1zM144 323h2v6h-2zM206 323h1v6h-1zM214 323h1v6h-1zM462 323h1v6h-1zM539 323h2v6h-2zM550 323h1v6h-1zM694 323h2v6h-2zM704 323h1v6h-1zM722 323h2v6h-2zM762 323h1v6h-1zM776 323h2v6h-2zM881 323h1v6h-1zM906 323h1v6h-1zM85 316h2v7h-2zM88 316h2v7h-2zM125 316h1v7h-1zM139 316h1v7h-1zM197 316h1v7h-1zM219 316h1v7h-1zM642 316h1v7h-1zM711 316h1v7h-1zM747 316h1v7h-1zM757 316h1v7h-1zM904 316h2v7h-2zM943 316h1v7h-1zM89 371h1v7h-1zM127 371h1v7h-1zM143 371h1v7h-1zM156 371h2v7h-2zM205 371h1v7h-1zM216 371h1v7h-1zM225 371h3v7h-3zM243 371h1v7h-1zM267 371h1v7h-1zM270 371h1v7h-1zM286 371h1v7h-1zM291 371h2v7h-2zM300 371h2v7h-2zM304 371h2v7h-2zM330 371h1v7h-1zM334 371h1v7h-1zM349 371h1v7h-1zM353 371h1v7h-1zM363 371h1v7h-1zM365 371h1v7h-1zM368 371h1v7h-1zM376 371h1v7h-1zM399 371h1v7h-1zM401 371h1v7h-1zM410 371h1v7h-1zM415 371h1v7h-1zM444 371h2v7h-2zM578 371h1v7h-1zM607 371h1v7h-1zM616 371h2v7h-2zM665 371h2v7h-2zM691 371h1v7h-1zM693 371h1v7h-1zM781 371h2v7h-2zM797 371h2v7h-2zM979 371h1v7h-1zM981 371h1v7h-1zM989 371h1v7h-1zM1030 371h1v7h-1zM124 378h1v6h-1zM128 378h2v6h-2zM133 378h1v6h-1zM148 378h1v6h-1zM201 378h1v6h-1zM207 378h1v6h-1zM214 378h1v6h-1zM220 378h1v6h-1zM228 378h2v6h-2zM270 378h1v6h-1zM273 378h1v6h-1zM278 378h1v6h-1zM282 378h2v6h-2zM315 378h1v6h-1zM344 378h4v6h-4zM356 378h2v6h-2zM523 378h1v6h-1zM569 378h1v6h-1zM624 378h1v6h-1zM637 378h1v6h-1zM654 378h1v6h-1zM665 378h2v6h-2zM705 378h2v6h-2zM730 378h2v6h-2zM784 378h2v6h-2zM810 378h1v6h-1zM991 378h2v6h-2zM1036 378h3v6h-3zM1041 378h2v6h-2zM1051 378h1v6h-1zM1088 378h1v6h-1zM92 384h2v6h-2zM112 384h1v6h-1zM123 384h1v6h-1zM130 384h1v6h-1zM139 384h1v6h-1zM158 384h1v6h-1zM214 384h1v6h-1zM219 384h1v6h-1zM286 384h1v6h-1zM315 384h1v6h-1zM459 384h2v6h-2zM574 384h1v6h-1zM689 384h2v6h-2zM775 384h1v6h-1zM1047 384h1v6h-1zM102 390h3v6h-3zM128 390h2v6h-2zM135 390h2v6h-2zM148 390h1v6h-1zM161 390h1v6h-1zM211 390h1v6h-1zM219 390h1v6h-1zM221 390h2v6h-2zM227 390h1v6h-1zM315 390h1v6h-1zM322 390h2v6h-2zM385 390h1v6h-1zM396 390h1v6h-1zM557 390h2v6h-2zM698 390h1v6h-1zM720 390h1v6h-1zM776 390h1v6h-1zM938 390h2v6h-2zM1041 390h2v6h-2zM1046 390h1v6h-1zM1050 390h1v6h-1zM96 414h1v6h-1zM135 414h2v6h-2zM162 414h2v6h-2zM274 414h2v6h-2zM379 414h1v6h-1zM552 414h2v6h-2zM721 414h1v6h-1zM804 414h1v6h-1zM870 414h1v6h-1zM881 414h1v6h-1zM996 414h1v6h-1zM1037 414h2v6h-2zM1060 414h1v6h-1zM1071 414h1v6h-1zM1078 414h2v6h-2zM102 408h3v6h-3zM113 408h2v6h-2zM127 408h1v6h-1zM135 408h2v6h-2zM138 408h1v6h-1zM142 408h1v6h-1zM147 408h1v6h-1zM149 408h1v6h-1zM152 408h2v6h-2zM155 408h2v6h-2zM159 408h1v6h-1zM292 408h1v6h-1zM305 408h1v6h-1zM349 408h1v6h-1zM393 408h1v6h-1zM414 408h1v6h-1zM571 408h1v6h-1zM668 408h2v6h-2zM1013 408h1v6h-1zM1020 408h1v6h-1zM1042 408h1v6h-1zM1050 408h1v6h-1zM1069 408h2v6h-2zM105 402h2v6h-2zM113 402h1v6h-1zM116 402h1v6h-1zM127 402h1v6h-1zM134 402h1v6h-1zM136 402h1v6h-1zM142 402h1v6h-1zM146 402h1v6h-1zM155 402h1v6h-1zM159 402h2v6h-2zM260 402h1v6h-1zM266 402h1v6h-1zM288 402h1v6h-1zM291 402h1v6h-1zM303 402h1v6h-1zM312 402h1v6h-1zM327 402h1v6h-1zM339 402h1v6h-1zM346 402h1v6h-1zM359 402h1v6h-1zM365 402h1v6h-1zM367 402h1v6h-1zM376 402h1v6h-1zM379 402h1v6h-1zM385 402h1v6h-1zM594 402h2v6h-2zM656 402h2v6h-2zM788 402h1v6h-1zM857 402h2v6h-2zM878 402h1v6h-1zM980 402h1v6h-1zM1000 402h1v6h-1zM1012 402h1v6h-1zM1024 402h1v6h-1zM1032 402h4v6h-4zM1041 402h1v6h-1zM1048 402h1v6h-1zM1053 402h1v6h-1zM1061 402h2v6h-2zM1067 402h1v6h-1zM1084 402h1v6h-1zM97 396h2v6h-2zM102 396h3v6h-3zM112 396h1v6h-1zM117 396h2v6h-2zM128 396h3v6h-3zM138 396h1v6h-1zM146 396h1v6h-1zM281 396h1v6h-1zM306 396h2v6h-2zM326 396h2v6h-2zM358 396h2v6h-2zM456 396h2v6h-2zM531 396h1v6h-1zM600 396h1v6h-1zM603 396h1v6h-1zM705 396h2v6h-2zM775 396h1v6h-1zM1036 396h1v6h-1zM1046 396h1v6h-1zM1057 396h1v6h-1zM113 420h2v7h-2zM116 420h1v7h-1zM134 420h1v7h-1zM236 420h2v7h-2zM248 420h1v7h-1zM267 420h1v7h-1zM274 420h1v7h-1zM394 420h2v7h-2zM485 420h1v7h-1zM571 420h1v7h-1zM841 420h1v7h-1zM859 420h1v7h-1zM870 420h1v7h-1zM1013 420h1v7h-1zM1023 420h2v7h-2zM1037 420h2v7h-2zM1047 420h1v7h-1zM1049 420h1v7h-1zM1064 420h2v7h-2zM1067 420h1v7h-1zM1069 420h2v7h-2zM1072 420h2v7h-2zM1077 420h1v7h-1zM110 427h2v6h-2zM115 427h1v6h-1zM245 427h1v6h-1zM317 427h1v6h-1zM346 427h2v6h-2zM500 427h1v6h-1zM590 427h1v6h-1zM622 427h1v6h-1zM634 427h1v6h-1zM876 427h2v6h-2zM1044 427h2v6h-2zM1067 427h1v6h-1zM109 439h3v6h-3zM412 439h1v6h-1zM436 439h1v6h-1zM459 439h2v6h-2zM589 439h1v6h-1zM642 439h1v6h-1zM874 439h2v6h-2zM1076 439h1v6h-1zM1087 439h1v6h-1zM1090 439h1v6h-1zM107 433h2v6h-2zM491 433h1v6h-1zM1025 433h2v6h-2zM248 445h2v6h-2zM911 445h1v6h-1zM88 310h1v6h-1zM139 310h1v6h-1zM196 310h1v6h-1zM220 310h1v6h-1zM517 310h1v6h-1zM694 310h2v6h-2zM141 304h1v6h-1zM143 304h1v6h-1zM201 304h1v6h-1zM206 304h1v6h-1zM868 304h1v6h-1zM895 304h1v6h-1zM200 298h1v6h-1zM205 298h1v6h-1zM208 298h1v6h-1zM211 298h1v6h-1zM213 298h1v6h-1zM525 298h1v6h-1zM142 292h1v6h-1zM186 292h1v6h-1zM863 292h2v6h-2zM888 292h1v6h-1zM890 292h3v6h-3zM141 286h1v6h-1zM187 286h1v6h-1zM767 286h2v6h-2zM174 243h1v6h-1zM581 243h2v6h-2zM767 243h3v6h-3zM174 237h1v6h-1zM581 237h2v6h-2zM861 237h1v6h-1zM891 237h2v6h-2zM997 237h1v6h-1zM174 231h1v6h-1zM179 231h1v6h-1zM581 231h2v6h-2zM766 231h1v6h-1zM785 231h1v6h-1zM581 249h2v6h-2zM867 249h2v6h-2zM526 225h1v6h-1zM737 225h1v6h-1zM862 225h1v6h-1zM185 261h1v6h-1zM735 261h2v6h-2zM767 261h2v6h-2zM863 261h1v6h-1zM90 255h1v6h-1zM199 255h2v6h-2zM581 255h2v6h-2zM871 255h1v6h-1zM919 255h1v6h-1zM887 274h1v6h-1zM178 267h2v7h-2zM702 267h2v7h-2zM769 267h1v7h-1zM899 267h2v7h-2zM911 267h2v7h-2zM205 280h1v6h-1zM207 280h1v6h-1zM704 280h1v6h-1zM910 280h1v6h-1zM511 206h1v6h-1zM226 200h2v6h-2zM834 200h1v6h-1zM226 194h2v6h-2zM508 194h1v6h-1zM786 188h1v6h-1zM738 90h1v6h-1zM738 84h1v6h-1zM714 78h1v6h-1zM538 108h1v6h-1zM543 108h1v6h-1zM542 114h1v7h-1zM544 114h1v7h-1zM507 163h3v7h-3zM507 170h3v6h-3zM197 476h2v6h-2zM243 476h1v6h-1zM975 476h1v6h-1zM982 476h1v6h-1zM207 488h2v6h-2zM245 488h1v6h-1zM289 488h1v6h-1zM589 488h1v6h-1zM1050 488h1v6h-1zM207 494h2v6h-2zM218 494h2v6h-2zM245 494h1v6h-1zM307 494h1v6h-1zM395 494h1v6h-1zM451 494h1v6h-1zM458 494h1v6h-1zM543 494h1v6h-1zM559 494h1v6h-1zM566 494h1v6h-1zM724 494h1v6h-1zM759 494h1v6h-1zM791 494h1v6h-1zM904 494h1v6h-1zM1049 494h1v6h-1zM1060 494h1v6h-1zM233 482h1v6h-1zM259 482h1v6h-1zM402 482h1v6h-1zM785 482h1v6h-1zM880 482h1v6h-1zM1050 482h1v6h-1z"/>
<path fill="#000000" d="M87 365h1v6h-1zM218 365h1v6h-1zM740 365h1v6h-1zM771 365h2v6h-2zM111 359h1v6h-1zM514 359h1v6h-1zM142 353h1v6h-1zM223 353h1v6h-1zM404 353h1v6h-1zM609 353h1v6h-1zM983 353h1v6h-1zM131 347h2v6h-2zM144 347h2v6h-2zM209 347h1v6h-1zM398 347h1v6h-1zM726 347h1v6h-1zM110 341h1v6h-1zM681 341h1v6h-1zM686 341h1v6h-1zM872 341h1v6h-1zM116 335h1v6h-1zM127 335h1v6h-1zM89 329h1v6h-1zM197 329h1v6h-1zM688 329h1v6h-1zM680 323h1v6h-1zM708 323h2v6h-2zM955 316h2v7h-2zM90 371h3v7h-3zM95 371h1v7h-1zM101 371h1v7h-1zM104 371h3v7h-3zM111 371h1v7h-1zM123 371h1v7h-1zM126 371h1v7h-1zM131 371h3v7h-3zM135 371h3v7h-3zM144 371h2v7h-2zM147 371h1v7h-1zM149 371h1v7h-1zM153 371h1v7h-1zM208 371h1v7h-1zM215 371h1v7h-1zM218 371h1v7h-1zM224 371h1v7h-1zM233 371h1v7h-1zM235 371h2v7h-2zM240 371h1v7h-1zM245 371h1v7h-1zM250 371h1v7h-1zM255 371h3v7h-3zM259 371h1v7h-1zM261 371h2v7h-2zM264 371h2v7h-2zM271 371h1v7h-1zM273 371h4v7h-4zM278 371h1v7h-1zM281 371h5v7h-5zM287 371h1v7h-1zM290 371h1v7h-1zM303 371h1v7h-1zM308 371h1v7h-1zM310 371h1v7h-1zM312 371h2v7h-2zM315 371h1v7h-1zM317 371h1v7h-1zM320 371h1v7h-1zM329 371h1v7h-1zM331 371h1v7h-1zM333 371h1v7h-1zM335 371h1v7h-1zM341 371h5v7h-5zM347 371h1v7h-1zM351 371h1v7h-1zM354 371h1v7h-1zM356 371h1v7h-1zM359 371h1v7h-1zM362 371h1v7h-1zM370 371h1v7h-1zM379 371h1v7h-1zM381 371h1v7h-1zM384 371h3v7h-3zM390 371h2v7h-2zM395 371h1v7h-1zM398 371h1v7h-1zM403 371h2v7h-2zM406 371h1v7h-1zM482 371h1v7h-1zM967 371h1v7h-1zM970 371h2v7h-2zM980 371h1v7h-1zM982 371h1v7h-1zM984 371h1v7h-1zM988 371h1v7h-1zM990 371h1v7h-1zM992 371h1v7h-1zM130 378h1v6h-1zM144 378h2v6h-2zM723 378h1v6h-1zM1030 378h1v6h-1zM211 384h1v6h-1zM224 384h1v6h-1zM303 384h1v6h-1zM354 384h1v6h-1zM386 384h1v6h-1zM479 384h2v6h-2zM596 384h1v6h-1zM737 384h1v6h-1zM272 390h1v6h-1zM696 390h1v6h-1zM116 414h1v6h-1zM122 414h2v6h-2zM303 414h1v6h-1zM988 414h1v6h-1zM107 408h2v6h-2zM119 408h1v6h-1zM287 408h1v6h-1zM499 408h1v6h-1zM930 408h1v6h-1zM97 402h1v6h-1zM101 402h1v6h-1zM103 402h1v6h-1zM114 402h1v6h-1zM118 402h1v6h-1zM139 402h1v6h-1zM147 402h1v6h-1zM153 402h1v6h-1zM258 402h1v6h-1zM268 402h1v6h-1zM278 402h2v6h-2zM281 402h1v6h-1zM286 402h2v6h-2zM296 402h1v6h-1zM307 402h1v6h-1zM319 402h1v6h-1zM326 402h1v6h-1zM332 402h1v6h-1zM353 402h1v6h-1zM358 402h1v6h-1zM362 402h1v6h-1zM366 402h1v6h-1zM387 402h1v6h-1zM723 402h1v6h-1zM987 402h1v6h-1zM1002 402h1v6h-1zM1004 402h1v6h-1zM1008 402h1v6h-1zM1011 402h1v6h-1zM1015 402h1v6h-1zM1023 402h1v6h-1zM1026 402h1v6h-1zM1046 402h1v6h-1zM1059 402h1v6h-1zM1064 402h1v6h-1zM282 396h2v6h-2zM117 420h2v7h-2zM161 420h1v7h-1zM450 420h1v7h-1zM257 433h2v6h-2zM1080 433h1v6h-1zM140 310h1v6h-1zM198 310h1v6h-1zM200 310h1v6h-1zM204 310h2v6h-2zM210 310h1v6h-1zM214 310h1v6h-1zM217 310h1v6h-1zM222 310h1v6h-1zM233 310h1v6h-1zM184 292h1v6h-1zM183 286h1v6h-1zM180 243h1v6h-1zM175 231h1v6h-1zM177 231h2v6h-2zM832 231h1v6h-1zM175 225h1v6h-1zM832 225h1v6h-1zM176 218h1v7h-1zM832 218h1v7h-1zM176 261h1v6h-1zM182 280h1v6h-1zM186 280h1v6h-1zM201 280h1v6h-1zM204 280h1v6h-1zM206 280h1v6h-1zM208 280h1v6h-1zM839 280h1v6h-1zM507 188h1v6h-1zM496 163h2v7h-2zM496 170h2v6h-2zM496 157h2v6h-2zM235 476h1v6h-1zM727 476h1v6h-1zM251 488h1v6h-1zM438 488h1v6h-1zM324 494h1v6h-1zM651 494h1v6h-1z"/>
<path fill="#00c3f5" d="M88 365h1v6h-1zM124 365h1v6h-1zM233 365h1v6h-1zM243 365h2v6h-2zM249 365h2v6h-2zM262 365h1v6h-1zM271 365h1v6h-1zM313 365h1v6h-1zM336 365h2v6h-2zM350 365h1v6h-1zM354 365h1v6h-1zM387 365h1v6h-1zM393 365h1v6h-1zM406 365h1v6h-1zM434 365h2v6h-2zM505 365h1v6h-1zM509 365h1v6h-1zM554 365h1v6h-1zM625 365h3v6h-3zM641 365h1v6h-1zM654 365h1v6h-1zM671 365h1v6h-1zM680 365h1v6h-1zM684 365h2v6h-2zM705 365h2v6h-2zM732 365h1v6h-1zM741 365h1v6h-1zM761 365h1v6h-1zM801 365h1v6h-1zM812 365h2v6h-2zM839 365h1v6h-1zM843 365h1v6h-1zM874 365h2v6h-2zM878 365h1v6h-1zM886 365h1v6h-1zM937 365h3v6h-3zM980 365h1v6h-1zM1018 365h1v6h-1zM1030 365h1v6h-1zM126 359h1v6h-1zM238 359h1v6h-1zM242 359h1v6h-1zM256 359h1v6h-1zM269 359h1v6h-1zM271 359h1v6h-1zM335 359h1v6h-1zM364 359h2v6h-2zM405 359h1v6h-1zM422 359h1v6h-1zM465 359h1v6h-1zM478 359h3v6h-3zM499 359h1v6h-1zM530 359h1v6h-1zM566 359h1v6h-1zM575 359h1v6h-1zM591 359h2v6h-2zM616 359h2v6h-2zM623 359h1v6h-1zM674 359h1v6h-1zM687 359h1v6h-1zM698 359h1v6h-1zM700 359h2v6h-2zM714 359h1v6h-1zM737 359h1v6h-1zM760 359h1v6h-1zM769 359h4v6h-4zM778 359h1v6h-1zM841 359h2v6h-2zM853 359h3v6h-3zM866 359h2v6h-2zM878 359h3v6h-3zM882 359h1v6h-1zM889 359h1v6h-1zM926 359h2v6h-2zM972 359h2v6h-2zM990 359h1v6h-1zM996 359h1v6h-1zM1016 359h2v6h-2zM315 353h1v6h-1zM333 353h1v6h-1zM336 353h2v6h-2zM366 353h1v6h-1zM402 353h1v6h-1zM426 353h2v6h-2zM439 353h1v6h-1zM442 353h4v6h-4zM449 353h1v6h-1zM465 353h1v6h-1zM478 353h1v6h-1zM485 353h1v6h-1zM572 353h2v6h-2zM598 353h2v6h-2zM601 353h3v6h-3zM618 353h2v6h-2zM628 353h1v6h-1zM632 353h1v6h-1zM645 353h3v6h-3zM651 353h2v6h-2zM668 353h1v6h-1zM681 353h1v6h-1zM686 353h1v6h-1zM730 353h2v6h-2zM738 353h1v6h-1zM743 353h2v6h-2zM767 353h1v6h-1zM799 353h3v6h-3zM810 353h1v6h-1zM814 353h1v6h-1zM819 353h2v6h-2zM844 353h1v6h-1zM849 353h1v6h-1zM862 353h1v6h-1zM873 353h1v6h-1zM879 353h2v6h-2zM933 353h2v6h-2zM967 353h2v6h-2zM1003 353h2v6h-2zM1090 353h1v6h-1zM97 347h2v6h-2zM210 347h1v6h-1zM262 347h1v6h-1zM306 347h2v6h-2zM335 347h1v6h-1zM421 347h1v6h-1zM426 347h2v6h-2zM434 347h3v6h-3zM458 347h3v6h-3zM478 347h1v6h-1zM494 347h2v6h-2zM512 347h1v6h-1zM555 347h1v6h-1zM562 347h1v6h-1zM585 347h1v6h-1zM627 347h1v6h-1zM653 347h1v6h-1zM663 347h2v6h-2zM705 347h2v6h-2zM717 347h1v6h-1zM720 347h1v6h-1zM723 347h1v6h-1zM809 347h1v6h-1zM827 347h2v6h-2zM841 347h1v6h-1zM869 347h1v6h-1zM873 347h1v6h-1zM885 347h1v6h-1zM931 347h1v6h-1zM1000 347h1v6h-1zM1005 347h2v6h-2zM1013 347h1v6h-1zM1022 347h1v6h-1zM88 341h1v6h-1zM90 341h1v6h-1zM141 341h1v6h-1zM143 341h1v6h-1zM224 341h1v6h-1zM262 341h1v6h-1zM394 341h2v6h-2zM397 341h1v6h-1zM405 341h1v6h-1zM415 341h1v6h-1zM429 341h1v6h-1zM439 341h1v6h-1zM441 341h1v6h-1zM446 341h1v6h-1zM459 341h2v6h-2zM478 341h1v6h-1zM533 341h3v6h-3zM555 341h1v6h-1zM562 341h1v6h-1zM578 341h1v6h-1zM608 341h1v6h-1zM616 341h2v6h-2zM628 341h1v6h-1zM632 341h1v6h-1zM661 341h1v6h-1zM667 341h1v6h-1zM674 341h1v6h-1zM678 341h2v6h-2zM685 341h1v6h-1zM689 341h2v6h-2zM697 341h1v6h-1zM700 341h2v6h-2zM705 341h2v6h-2zM708 341h2v6h-2zM711 341h1v6h-1zM730 341h2v6h-2zM735 341h2v6h-2zM739 341h1v6h-1zM784 341h2v6h-2zM809 341h1v6h-1zM825 341h1v6h-1zM861 341h2v6h-2zM866 341h2v6h-2zM874 341h2v6h-2zM881 341h2v6h-2zM899 341h2v6h-2zM928 341h1v6h-1zM936 341h1v6h-1zM941 341h1v6h-1zM996 341h1v6h-1zM999 341h1v6h-1zM1026 341h2v6h-2zM147 335h1v6h-1zM200 335h1v6h-1zM255 335h1v6h-1zM368 335h1v6h-1zM446 335h1v6h-1zM474 335h1v6h-1zM477 335h2v6h-2zM537 335h1v6h-1zM541 335h2v6h-2zM547 335h3v6h-3zM577 335h1v6h-1zM589 335h1v6h-1zM630 335h1v6h-1zM639 335h1v6h-1zM648 335h1v6h-1zM692 335h1v6h-1zM700 335h4v6h-4zM721 335h1v6h-1zM723 335h1v6h-1zM732 335h1v6h-1zM737 335h1v6h-1zM800 335h2v6h-2zM812 335h2v6h-2zM859 335h3v6h-3zM887 335h1v6h-1zM897 335h2v6h-2zM943 335h1v6h-1zM949 335h2v6h-2zM972 335h2v6h-2zM1015 335h1v6h-1zM1020 335h1v6h-1zM124 329h1v6h-1zM367 329h1v6h-1zM369 329h1v6h-1zM397 329h1v6h-1zM404 329h1v6h-1zM428 329h3v6h-3zM469 329h1v6h-1zM530 329h1v6h-1zM561 329h1v6h-1zM577 329h1v6h-1zM579 329h2v6h-2zM625 329h2v6h-2zM629 329h1v6h-1zM631 329h1v6h-1zM634 329h1v6h-1zM637 329h1v6h-1zM644 329h1v6h-1zM649 329h1v6h-1zM662 329h1v6h-1zM681 329h1v6h-1zM717 329h1v6h-1zM732 329h1v6h-1zM748 329h1v6h-1zM761 329h1v6h-1zM793 329h1v6h-1zM805 329h4v6h-4zM874 329h2v6h-2zM883 329h3v6h-3zM889 329h1v6h-1zM941 329h1v6h-1zM953 329h2v6h-2zM1021 329h1v6h-1zM368 323h1v6h-1zM472 323h2v6h-2zM526 323h2v6h-2zM538 323h1v6h-1zM546 323h2v6h-2zM555 323h1v6h-1zM614 323h1v6h-1zM620 323h2v6h-2zM640 323h1v6h-1zM667 323h1v6h-1zM691 323h1v6h-1zM702 323h2v6h-2zM716 323h1v6h-1zM735 323h2v6h-2zM739 323h1v6h-1zM750 323h2v6h-2zM781 323h2v6h-2zM802 323h2v6h-2zM872 323h1v6h-1zM883 323h2v6h-2zM902 323h4v6h-4zM946 323h1v6h-1zM997 323h1v6h-1zM1005 323h3v6h-3zM214 316h1v7h-1zM414 316h1v7h-1zM417 316h1v7h-1zM554 316h1v7h-1zM620 316h2v7h-2zM641 316h1v7h-1zM644 316h3v7h-3zM699 316h1v7h-1zM702 316h2v7h-2zM705 316h2v7h-2zM712 316h3v7h-3zM724 316h2v7h-2zM735 316h2v7h-2zM740 316h1v7h-1zM761 316h1v7h-1zM769 316h2v7h-2zM776 316h1v7h-1zM901 316h3v7h-3zM911 316h2v7h-2zM1000 316h3v7h-3zM210 371h1v7h-1zM238 371h1v7h-1zM242 371h1v7h-1zM253 371h2v7h-2zM268 371h1v7h-1zM289 371h1v7h-1zM348 371h1v7h-1zM392 371h1v7h-1zM400 371h1v7h-1zM412 371h2v7h-2zM424 371h2v7h-2zM434 371h2v7h-2zM496 371h1v7h-1zM546 371h1v7h-1zM561 371h1v7h-1zM571 371h1v7h-1zM608 371h1v7h-1zM620 371h2v7h-2zM631 371h1v7h-1zM635 371h2v7h-2zM638 371h2v7h-2zM645 371h3v7h-3zM651 371h3v7h-3zM661 371h2v7h-2zM687 371h1v7h-1zM714 371h1v7h-1zM747 371h1v7h-1zM801 371h1v7h-1zM829 371h1v7h-1zM840 371h1v7h-1zM845 371h1v7h-1zM849 371h1v7h-1zM854 371h2v7h-2zM859 371h1v7h-1zM868 371h1v7h-1zM888 371h1v7h-1zM932 371h1v7h-1zM949 371h2v7h-2zM1015 371h1v7h-1zM147 378h1v6h-1zM152 378h2v6h-2zM224 378h1v6h-1zM243 378h1v6h-1zM246 378h1v6h-1zM292 378h1v6h-1zM331 378h1v6h-1zM362 378h2v6h-2zM371 378h1v6h-1zM416 378h1v6h-1zM418 378h2v6h-2zM429 378h1v6h-1zM477 378h2v6h-2zM501 378h2v6h-2zM505 378h1v6h-1zM550 378h1v6h-1zM561 378h1v6h-1zM585 378h1v6h-1zM605 378h2v6h-2zM616 378h4v6h-4zM623 378h1v6h-1zM625 378h2v6h-2zM641 378h1v6h-1zM648 378h1v6h-1zM653 378h1v6h-1zM675 378h2v6h-2zM678 378h3v6h-3zM684 378h1v6h-1zM688 378h1v6h-1zM691 378h2v6h-2zM704 378h1v6h-1zM722 378h1v6h-1zM726 378h3v6h-3zM735 378h2v6h-2zM800 378h1v6h-1zM804 378h5v6h-5zM860 378h1v6h-1zM869 378h2v6h-2zM935 378h1v6h-1zM942 378h1v6h-1zM979 378h1v6h-1zM988 378h1v6h-1zM999 378h1v6h-1zM1003 378h2v6h-2zM1009 378h1v6h-1zM1020 378h1v6h-1zM1044 378h2v6h-2zM1049 378h1v6h-1zM147 384h1v6h-1zM251 384h2v6h-2zM271 384h1v6h-1zM300 384h3v6h-3zM308 384h1v6h-1zM312 384h1v6h-1zM319 384h1v6h-1zM351 384h2v6h-2zM356 384h2v6h-2zM371 384h1v6h-1zM399 384h2v6h-2zM402 384h1v6h-1zM422 384h2v6h-2zM509 384h2v6h-2zM539 384h4v6h-4zM547 384h1v6h-1zM560 384h1v6h-1zM571 384h1v6h-1zM575 384h1v6h-1zM608 384h1v6h-1zM614 384h1v6h-1zM632 384h1v6h-1zM639 384h1v6h-1zM654 384h1v6h-1zM691 384h1v6h-1zM717 384h1v6h-1zM735 384h2v6h-2zM743 384h2v6h-2zM769 384h2v6h-2zM791 384h1v6h-1zM800 384h1v6h-1zM804 384h1v6h-1zM859 384h1v6h-1zM866 384h2v6h-2zM871 384h1v6h-1zM876 384h2v6h-2zM925 384h1v6h-1zM941 384h1v6h-1zM983 384h1v6h-1zM990 384h1v6h-1zM1041 384h1v6h-1zM1048 384h1v6h-1zM226 390h1v6h-1zM249 390h4v6h-4zM274 390h2v6h-2zM280 390h1v6h-1zM297 390h2v6h-2zM304 390h1v6h-1zM319 390h1v6h-1zM331 390h1v6h-1zM334 390h1v6h-1zM344 390h2v6h-2zM360 390h1v6h-1zM362 390h2v6h-2zM368 390h1v6h-1zM384 390h1v6h-1zM388 390h1v6h-1zM398 390h1v6h-1zM417 390h2v6h-2zM459 390h2v6h-2zM501 390h2v6h-2zM510 390h1v6h-1zM546 390h1v6h-1zM571 390h1v6h-1zM598 390h2v6h-2zM631 390h1v6h-1zM644 390h3v6h-3zM671 390h1v6h-1zM675 390h2v6h-2zM682 390h2v6h-2zM687 390h1v6h-1zM699 390h1v6h-1zM711 390h1v6h-1zM715 390h1v6h-1zM721 390h1v6h-1zM732 390h1v6h-1zM740 390h1v6h-1zM761 390h1v6h-1zM766 390h1v6h-1zM769 390h4v6h-4zM805 390h2v6h-2zM838 390h2v6h-2zM862 390h1v6h-1zM870 390h1v6h-1zM882 390h1v6h-1zM925 390h1v6h-1zM933 390h2v6h-2zM940 390h1v6h-1zM999 390h1v6h-1zM1005 390h2v6h-2zM1019 390h1v6h-1zM1023 390h2v6h-2zM1049 390h1v6h-1zM155 414h2v6h-2zM239 414h2v6h-2zM246 414h1v6h-1zM248 414h1v6h-1zM308 414h1v6h-1zM334 414h1v6h-1zM349 414h1v6h-1zM370 414h1v6h-1zM381 414h1v6h-1zM393 414h1v6h-1zM411 414h1v6h-1zM414 414h2v6h-2zM426 414h2v6h-2zM442 414h2v6h-2zM490 414h1v6h-1zM523 414h1v6h-1zM538 414h1v6h-1zM562 414h1v6h-1zM564 414h1v6h-1zM576 414h1v6h-1zM589 414h1v6h-1zM600 414h1v6h-1zM627 414h1v6h-1zM629 414h1v6h-1zM645 414h2v6h-2zM649 414h2v6h-2zM722 414h1v6h-1zM726 414h1v6h-1zM769 414h1v6h-1zM802 414h2v6h-2zM845 414h1v6h-1zM869 414h1v6h-1zM888 414h1v6h-1zM925 414h1v6h-1zM929 414h1v6h-1zM931 414h1v6h-1zM933 414h2v6h-2zM1016 414h2v6h-2zM1041 414h1v6h-1zM1047 414h1v6h-1zM1049 414h1v6h-1zM1069 414h2v6h-2zM1090 414h1v6h-1zM245 408h1v6h-1zM251 408h2v6h-2zM276 408h2v6h-2zM286 408h1v6h-1zM308 408h1v6h-1zM318 408h1v6h-1zM321 408h1v6h-1zM326 408h2v6h-2zM335 408h1v6h-1zM367 408h1v6h-1zM375 408h2v6h-2zM406 408h3v6h-3zM429 408h1v6h-1zM440 408h1v6h-1zM483 408h1v6h-1zM492 408h1v6h-1zM496 408h1v6h-1zM565 408h1v6h-1zM567 408h1v6h-1zM601 408h2v6h-2zM605 408h2v6h-2zM623 408h1v6h-1zM632 408h1v6h-1zM650 408h1v6h-1zM665 408h3v6h-3zM767 408h1v6h-1zM771 408h2v6h-2zM781 408h2v6h-2zM799 408h1v6h-1zM829 408h1v6h-1zM839 408h1v6h-1zM843 408h1v6h-1zM864 408h2v6h-2zM882 408h1v6h-1zM928 408h1v6h-1zM933 408h2v6h-2zM938 408h3v6h-3zM989 408h1v6h-1zM994 408h2v6h-2zM1019 408h1v6h-1zM1049 408h1v6h-1zM1051 408h1v6h-1zM1053 408h1v6h-1zM1064 408h2v6h-2zM1074 408h2v6h-2zM1077 408h1v6h-1zM238 402h1v6h-1zM318 402h1v6h-1zM328 402h2v6h-2zM335 402h1v6h-1zM340 402h1v6h-1zM369 402h1v6h-1zM449 402h1v6h-1zM458 402h1v6h-1zM474 402h1v6h-1zM477 402h2v6h-2zM494 402h3v6h-3zM525 402h1v6h-1zM535 402h1v6h-1zM546 402h1v6h-1zM548 402h3v6h-3zM601 402h2v6h-2zM608 402h1v6h-1zM649 402h1v6h-1zM717 402h1v6h-1zM720 402h1v6h-1zM726 402h1v6h-1zM741 402h1v6h-1zM761 402h1v6h-1zM804 402h1v6h-1zM837 402h1v6h-1zM841 402h2v6h-2zM847 402h1v6h-1zM869 402h1v6h-1zM883 402h2v6h-2zM910 402h1v6h-1zM936 402h1v6h-1zM989 402h1v6h-1zM999 402h1v6h-1zM1001 402h1v6h-1zM1007 402h1v6h-1zM1049 402h1v6h-1zM110 396h2v6h-2zM243 396h1v6h-1zM278 396h1v6h-1zM289 396h1v6h-1zM293 396h1v6h-1zM297 396h2v6h-2zM304 396h1v6h-1zM324 396h2v6h-2zM330 396h1v6h-1zM332 396h1v6h-1zM339 396h4v6h-4zM346 396h2v6h-2zM351 396h2v6h-2zM367 396h1v6h-1zM377 396h1v6h-1zM381 396h1v6h-1zM393 396h1v6h-1zM397 396h1v6h-1zM403 396h1v6h-1zM405 396h1v6h-1zM412 396h2v6h-2zM417 396h3v6h-3zM422 396h1v6h-1zM482 396h1v6h-1zM501 396h2v6h-2zM509 396h1v6h-1zM518 396h1v6h-1zM533 396h3v6h-3zM554 396h1v6h-1zM581 396h2v6h-2zM589 396h1v6h-1zM605 396h2v6h-2zM613 396h1v6h-1zM644 396h1v6h-1zM647 396h1v6h-1zM651 396h2v6h-2zM688 396h1v6h-1zM691 396h1v6h-1zM699 396h1v6h-1zM715 396h2v6h-2zM722 396h2v6h-2zM738 396h2v6h-2zM741 396h1v6h-1zM810 396h1v6h-1zM839 396h1v6h-1zM845 396h1v6h-1zM859 396h1v6h-1zM878 396h1v6h-1zM885 396h1v6h-1zM919 396h1v6h-1zM926 396h2v6h-2zM997 396h1v6h-1zM1000 396h1v6h-1zM1047 396h1v6h-1zM1050 396h1v6h-1zM1058 396h2v6h-2zM339 420h2v7h-2zM368 420h1v7h-1zM412 420h2v7h-2zM417 420h1v7h-1zM422 420h1v7h-1zM434 420h2v7h-2zM458 420h1v7h-1zM474 420h1v7h-1zM497 420h2v7h-2zM526 420h2v7h-2zM551 420h3v7h-3zM569 420h1v7h-1zM590 420h1v7h-1zM598 420h2v7h-2zM610 420h1v7h-1zM613 420h1v7h-1zM633 420h1v7h-1zM638 420h1v7h-1zM715 420h1v7h-1zM722 420h1v7h-1zM846 420h1v7h-1zM878 420h1v7h-1zM926 420h2v7h-2zM935 420h1v7h-1zM998 420h1v7h-1zM1016 420h2v7h-2zM1052 420h1v7h-1zM1056 420h1v7h-1zM1074 420h2v7h-2zM1089 420h1v7h-1zM248 427h2v6h-2zM271 427h1v6h-1zM302 427h1v6h-1zM305 427h1v6h-1zM308 427h1v6h-1zM310 427h1v6h-1zM313 427h1v6h-1zM341 427h2v6h-2zM393 427h1v6h-1zM420 427h1v6h-1zM429 427h1v6h-1zM484 427h1v6h-1zM494 427h2v6h-2zM544 427h2v6h-2zM581 427h2v6h-2zM596 427h1v6h-1zM633 427h1v6h-1zM635 427h2v6h-2zM638 427h1v6h-1zM773 427h1v6h-1zM859 427h1v6h-1zM861 427h1v6h-1zM933 427h3v6h-3zM997 427h1v6h-1zM1001 427h2v6h-2zM1010 427h2v6h-2zM1013 427h1v6h-1zM414 439h2v6h-2zM426 439h2v6h-2zM439 439h1v6h-1zM447 439h1v6h-1zM449 439h1v6h-1zM458 439h1v6h-1zM461 439h2v6h-2zM478 439h3v6h-3zM486 439h1v6h-1zM562 439h1v6h-1zM594 439h2v6h-2zM645 439h2v6h-2zM801 439h1v6h-1zM859 439h1v6h-1zM869 439h1v6h-1zM910 439h1v6h-1zM920 439h1v6h-1zM926 439h2v6h-2zM1089 439h1v6h-1zM270 433h1v6h-1zM308 433h1v6h-1zM415 433h1v6h-1zM431 433h1v6h-1zM437 433h1v6h-1zM463 433h2v6h-2zM470 433h1v6h-1zM485 433h1v6h-1zM490 433h1v6h-1zM492 433h1v6h-1zM578 433h1v6h-1zM598 433h2v6h-2zM607 433h1v6h-1zM620 433h2v6h-2zM623 433h1v6h-1zM629 433h1v6h-1zM774 433h1v6h-1zM801 433h1v6h-1zM862 433h1v6h-1zM921 433h1v6h-1zM925 433h1v6h-1zM1023 433h2v6h-2zM428 445h1v6h-1zM434 445h2v6h-2zM446 445h1v6h-1zM465 445h1v6h-1zM467 445h2v6h-2zM472 445h2v6h-2zM477 445h1v6h-1zM494 445h2v6h-2zM497 445h3v6h-3zM859 445h1v6h-1zM862 445h1v6h-1zM869 445h1v6h-1zM1074 445h3v6h-3zM141 310h1v6h-1zM399 310h2v6h-2zM414 310h1v6h-1zM611 310h2v6h-2zM643 310h1v6h-1zM649 310h1v6h-1zM687 310h1v6h-1zM710 310h1v6h-1zM712 310h2v6h-2zM720 310h1v6h-1zM769 310h2v6h-2zM894 310h1v6h-1zM904 310h3v6h-3zM949 310h2v6h-2zM998 310h1v6h-1zM1001 310h2v6h-2zM260 304h2v6h-2zM651 304h2v6h-2zM702 304h2v6h-2zM707 304h3v6h-3zM768 304h1v6h-1zM899 304h2v6h-2zM911 304h3v6h-3zM694 298h2v6h-2zM699 298h1v6h-1zM895 298h1v6h-1zM898 298h1v6h-1zM143 292h1v6h-1zM187 292h1v6h-1zM778 292h1v6h-1zM908 292h1v6h-1zM910 292h3v6h-3zM648 286h1v6h-1zM717 286h1v6h-1zM915 286h1v6h-1zM176 237h2v6h-2zM767 237h2v6h-2zM782 237h2v6h-2zM181 255h2v6h-2zM895 274h1v6h-1zM898 274h1v6h-1zM904 274h2v6h-2zM911 274h2v6h-2zM704 267h1v7h-1zM898 280h1v6h-1zM901 280h3v6h-3zM451 451h1v6h-1zM477 451h1v6h-1zM490 451h2v6h-2zM597 451h1v6h-1zM603 451h1v6h-1zM456 457h1v6h-1zM471 457h1v6h-1zM492 457h1v6h-1zM497 457h4v6h-4zM501 463h3v6h-3zM786 206h1v6h-1zM530 200h2v6h-2zM515 194h1v6h-1zM786 194h1v6h-1zM512 188h1v6h-1zM784 188h1v6h-1zM791 188h1v6h-1zM995 188h1v6h-1zM787 182h2v6h-2zM485 139h1v6h-1zM496 139h1v6h-1zM225 494h1v6h-1zM227 494h1v6h-1zM225 469h1v7h-1z"/>
<path fill="#181cff" d="M89 365h1v6h-1zM110 365h1v6h-1zM201 365h1v6h-1zM220 365h1v6h-1zM239 365h2v6h-2zM247 365h1v6h-1zM304 365h1v6h-1zM314 365h1v6h-1zM319 365h2v6h-2zM331 365h1v6h-1zM351 365h2v6h-2zM361 365h1v6h-1zM412 365h2v6h-2zM416 365h1v6h-1zM525 365h1v6h-1zM574 365h1v6h-1zM585 365h1v6h-1zM597 365h1v6h-1zM668 365h1v6h-1zM672 365h2v6h-2zM691 365h1v6h-1zM739 365h1v6h-1zM783 365h1v6h-1zM786 365h1v6h-1zM794 365h2v6h-2zM797 365h2v6h-2zM805 365h2v6h-2zM809 365h1v6h-1zM824 365h1v6h-1zM845 365h1v6h-1zM848 365h1v6h-1zM857 365h4v6h-4zM882 365h1v6h-1zM969 365h1v6h-1zM990 365h1v6h-1zM1028 365h2v6h-2zM1089 365h1v6h-1zM85 359h2v6h-2zM94 359h2v6h-2zM104 359h1v6h-1zM112 359h1v6h-1zM125 359h1v6h-1zM127 359h4v6h-4zM142 359h2v6h-2zM146 359h1v6h-1zM149 359h1v6h-1zM198 359h1v6h-1zM201 359h1v6h-1zM210 359h1v6h-1zM214 359h1v6h-1zM221 359h2v6h-2zM224 359h1v6h-1zM247 359h1v6h-1zM304 359h1v6h-1zM377 359h1v6h-1zM386 359h1v6h-1zM416 359h1v6h-1zM493 359h1v6h-1zM520 359h1v6h-1zM523 359h2v6h-2zM577 359h1v6h-1zM600 359h1v6h-1zM610 359h1v6h-1zM642 359h2v6h-2zM650 359h1v6h-1zM680 359h1v6h-1zM705 359h2v6h-2zM717 359h1v6h-1zM741 359h1v6h-1zM743 359h2v6h-2zM761 359h1v6h-1zM763 359h5v6h-5zM812 359h2v6h-2zM846 359h1v6h-1zM850 359h2v6h-2zM885 359h1v6h-1zM892 359h1v6h-1zM951 359h1v6h-1zM967 359h2v6h-2zM1018 359h1v6h-1zM1020 359h1v6h-1zM1029 359h2v6h-2zM87 353h1v6h-1zM89 353h1v6h-1zM92 353h2v6h-2zM96 353h1v6h-1zM99 353h2v6h-2zM112 353h1v6h-1zM127 353h1v6h-1zM130 353h3v6h-3zM144 353h2v6h-2zM197 353h1v6h-1zM199 353h3v6h-3zM211 353h2v6h-2zM214 353h1v6h-1zM220 353h1v6h-1zM239 353h2v6h-2zM242 353h1v6h-1zM244 353h1v6h-1zM269 353h1v6h-1zM334 353h1v6h-1zM438 353h1v6h-1zM450 353h1v6h-1zM461 353h2v6h-2zM482 353h1v6h-1zM531 353h1v6h-1zM550 353h1v6h-1zM600 353h1v6h-1zM640 353h1v6h-1zM677 353h1v6h-1zM768 353h1v6h-1zM783 353h1v6h-1zM788 353h1v6h-1zM792 353h1v6h-1zM815 353h2v6h-2zM826 353h1v6h-1zM837 353h1v6h-1zM851 353h1v6h-1zM856 353h1v6h-1zM886 353h1v6h-1zM890 353h2v6h-2zM895 353h1v6h-1zM897 353h1v6h-1zM944 353h2v6h-2zM952 353h1v6h-1zM971 353h3v6h-3zM975 353h2v6h-2zM85 347h2v6h-2zM91 347h1v6h-1zM196 347h1v6h-1zM200 347h2v6h-2zM204 347h1v6h-1zM213 347h1v6h-1zM218 347h1v6h-1zM220 347h1v6h-1zM247 347h1v6h-1zM313 347h1v6h-1zM475 347h2v6h-2zM518 347h1v6h-1zM530 347h1v6h-1zM547 347h1v6h-1zM565 347h1v6h-1zM600 347h1v6h-1zM608 347h1v6h-1zM640 347h1v6h-1zM662 347h1v6h-1zM672 347h2v6h-2zM686 347h1v6h-1zM724 347h2v6h-2zM750 347h2v6h-2zM764 347h2v6h-2zM767 347h1v6h-1zM787 347h1v6h-1zM789 347h2v6h-2zM793 347h1v6h-1zM797 347h2v6h-2zM814 347h1v6h-1zM817 347h1v6h-1zM823 347h1v6h-1zM838 347h1v6h-1zM892 347h2v6h-2zM946 347h3v6h-3zM952 347h1v6h-1zM970 347h1v6h-1zM972 347h2v6h-2zM988 347h1v6h-1zM990 347h1v6h-1zM116 341h1v6h-1zM121 341h2v6h-2zM148 341h1v6h-1zM209 341h1v6h-1zM214 341h1v6h-1zM218 341h2v6h-2zM309 341h1v6h-1zM367 341h1v6h-1zM414 341h1v6h-1zM417 341h1v6h-1zM434 341h2v6h-2zM477 341h1v6h-1zM512 341h1v6h-1zM521 341h2v6h-2zM530 341h1v6h-1zM538 341h1v6h-1zM566 341h1v6h-1zM597 341h1v6h-1zM610 341h1v6h-1zM638 341h1v6h-1zM653 341h1v6h-1zM665 341h2v6h-2zM707 341h1v6h-1zM714 341h1v6h-1zM722 341h1v6h-1zM732 341h1v6h-1zM740 341h1v6h-1zM748 341h1v6h-1zM766 341h1v6h-1zM790 341h1v6h-1zM796 341h1v6h-1zM842 341h1v6h-1zM852 341h1v6h-1zM859 341h1v6h-1zM890 341h2v6h-2zM901 341h1v6h-1zM932 341h1v6h-1zM937 341h1v6h-1zM944 341h3v6h-3zM949 341h2v6h-2zM953 341h2v6h-2zM969 341h1v6h-1zM971 341h1v6h-1zM977 341h1v6h-1zM980 341h1v6h-1zM1007 341h1v6h-1zM87 335h1v6h-1zM121 335h3v6h-3zM142 335h2v6h-2zM148 335h1v6h-1zM197 335h1v6h-1zM216 335h1v6h-1zM218 335h1v6h-1zM543 335h1v6h-1zM561 335h1v6h-1zM590 335h1v6h-1zM596 335h1v6h-1zM647 335h1v6h-1zM660 335h1v6h-1zM697 335h2v6h-2zM718 335h2v6h-2zM727 335h2v6h-2zM747 335h1v6h-1zM776 335h2v6h-2zM792 335h1v6h-1zM805 335h2v6h-2zM851 335h1v6h-1zM869 335h1v6h-1zM874 335h2v6h-2zM881 335h2v6h-2zM895 335h2v6h-2zM902 335h2v6h-2zM906 335h1v6h-1zM951 335h1v6h-1zM1023 335h2v6h-2zM85 329h2v6h-2zM118 329h1v6h-1zM121 329h3v6h-3zM143 329h1v6h-1zM204 329h1v6h-1zM207 329h1v6h-1zM217 329h2v6h-2zM220 329h1v6h-1zM225 329h1v6h-1zM233 329h1v6h-1zM531 329h1v6h-1zM574 329h1v6h-1zM593 329h1v6h-1zM611 329h2v6h-2zM633 329h1v6h-1zM670 329h2v6h-2zM733 329h2v6h-2zM757 329h1v6h-1zM767 329h1v6h-1zM773 329h1v6h-1zM789 329h1v6h-1zM848 329h1v6h-1zM868 329h1v6h-1zM892 329h3v6h-3zM896 329h1v6h-1zM951 329h1v6h-1zM955 329h2v6h-2zM1014 329h1v6h-1zM146 323h1v6h-1zM213 323h1v6h-1zM221 323h2v6h-2zM397 323h1v6h-1zM417 323h1v6h-1zM463 323h2v6h-2zM493 323h3v6h-3zM564 323h1v6h-1zM625 323h2v6h-2zM631 323h1v6h-1zM643 323h1v6h-1zM675 323h2v6h-2zM707 323h1v6h-1zM729 323h1v6h-1zM784 323h2v6h-2zM794 323h2v6h-2zM861 323h2v6h-2zM868 323h1v6h-1zM879 323h2v6h-2zM896 323h2v6h-2zM937 323h1v6h-1zM1013 323h1v6h-1zM118 316h5v7h-5zM211 316h1v7h-1zM218 316h1v7h-1zM265 316h2v7h-2zM577 316h1v7h-1zM610 316h1v7h-1zM634 316h1v7h-1zM650 316h1v7h-1zM698 316h1v7h-1zM707 316h1v7h-1zM760 316h1v7h-1zM787 316h1v7h-1zM856 316h1v7h-1zM876 316h2v7h-2zM896 316h1v7h-1zM909 316h1v7h-1zM947 316h2v7h-2zM952 316h1v7h-1zM148 371h1v7h-1zM204 371h1v7h-1zM207 371h1v7h-1zM209 371h1v7h-1zM219 371h1v7h-1zM223 371h1v7h-1zM237 371h1v7h-1zM295 371h2v7h-2zM311 371h1v7h-1zM324 371h1v7h-1zM332 371h1v7h-1zM346 371h1v7h-1zM388 371h1v7h-1zM521 371h2v7h-2zM526 371h2v7h-2zM567 371h1v7h-1zM586 371h2v7h-2zM625 371h2v7h-2zM648 371h1v7h-1zM660 371h1v7h-1zM681 371h1v7h-1zM708 371h2v7h-2zM733 371h2v7h-2zM742 371h1v7h-1zM758 371h2v7h-2zM767 371h1v7h-1zM783 371h1v7h-1zM824 371h2v7h-2zM861 371h1v7h-1zM936 371h2v7h-2zM943 371h1v7h-1zM946 371h1v7h-1zM1007 371h1v7h-1zM1031 371h1v7h-1zM1088 371h1v7h-1zM90 378h1v6h-1zM99 378h5v6h-5zM107 378h2v6h-2zM123 378h1v6h-1zM131 378h2v6h-2zM137 378h1v6h-1zM191 378h1v6h-1zM204 378h1v6h-1zM217 378h1v6h-1zM223 378h1v6h-1zM233 378h1v6h-1zM238 378h3v6h-3zM247 378h1v6h-1zM290 378h1v6h-1zM293 378h1v6h-1zM320 378h1v6h-1zM360 378h1v6h-1zM380 378h1v6h-1zM414 378h1v6h-1zM450 378h1v6h-1zM499 378h1v6h-1zM511 378h2v6h-2zM586 378h2v6h-2zM758 378h2v6h-2zM761 378h1v6h-1zM768 378h1v6h-1zM783 378h1v6h-1zM826 378h1v6h-1zM856 378h1v6h-1zM882 378h1v6h-1zM887 378h1v6h-1zM912 378h2v6h-2zM947 378h2v6h-2zM971 378h1v6h-1zM980 378h1v6h-1zM1047 378h1v6h-1zM96 384h1v6h-1zM149 384h1v6h-1zM159 384h2v6h-2zM223 384h1v6h-1zM228 384h2v6h-2zM239 384h2v6h-2zM331 384h1v6h-1zM378 384h1v6h-1zM401 384h1v6h-1zM406 384h1v6h-1zM409 384h1v6h-1zM417 384h1v6h-1zM478 384h1v6h-1zM486 384h1v6h-1zM496 384h1v6h-1zM515 384h2v6h-2zM530 384h1v6h-1zM567 384h1v6h-1zM590 384h1v6h-1zM662 384h1v6h-1zM677 384h1v6h-1zM686 384h1v6h-1zM702 384h2v6h-2zM718 384h2v6h-2zM729 384h1v6h-1zM742 384h1v6h-1zM761 384h1v6h-1zM766 384h1v6h-1zM784 384h2v6h-2zM794 384h2v6h-2zM805 384h2v6h-2zM817 384h1v6h-1zM825 384h1v6h-1zM827 384h2v6h-2zM841 384h1v6h-1zM853 384h1v6h-1zM888 384h1v6h-1zM914 384h2v6h-2zM943 384h1v6h-1zM970 384h1v6h-1zM989 384h1v6h-1zM1021 384h1v6h-1zM1031 384h1v6h-1zM1043 384h1v6h-1zM1046 384h1v6h-1zM94 390h2v6h-2zM130 390h1v6h-1zM137 390h1v6h-1zM149 390h1v6h-1zM155 390h2v6h-2zM160 390h1v6h-1zM162 390h2v6h-2zM220 390h1v6h-1zM239 390h2v6h-2zM324 390h1v6h-1zM333 390h1v6h-1zM350 390h3v6h-3zM371 390h1v6h-1zM405 390h1v6h-1zM410 390h2v6h-2zM429 390h1v6h-1zM450 390h1v6h-1zM504 390h1v6h-1zM520 390h1v6h-1zM524 390h1v6h-1zM616 390h2v6h-2zM640 390h1v6h-1zM653 390h1v6h-1zM666 390h2v6h-2zM670 390h1v6h-1zM680 390h1v6h-1zM686 390h1v6h-1zM724 390h2v6h-2zM743 390h4v6h-4zM786 390h2v6h-2zM789 390h1v6h-1zM793 390h1v6h-1zM809 390h1v6h-1zM918 390h2v6h-2zM944 390h2v6h-2zM970 390h1v6h-1zM1020 390h1v6h-1zM1036 390h1v6h-1zM1048 390h1v6h-1zM1086 390h2v6h-2zM117 414h4v6h-4zM141 414h2v6h-2zM149 414h1v6h-1zM244 414h1v6h-1zM279 414h1v6h-1zM293 414h1v6h-1zM328 414h2v6h-2zM354 414h1v6h-1zM360 414h1v6h-1zM397 414h1v6h-1zM421 414h1v6h-1zM444 414h2v6h-2zM505 414h1v6h-1zM525 414h1v6h-1zM543 414h3v6h-3zM608 414h1v6h-1zM643 414h1v6h-1zM648 414h1v6h-1zM716 414h1v6h-1zM729 414h3v6h-3zM735 414h2v6h-2zM738 414h3v6h-3zM742 414h1v6h-1zM767 414h1v6h-1zM776 414h1v6h-1zM801 414h1v6h-1zM841 414h1v6h-1zM846 414h1v6h-1zM848 414h1v6h-1zM882 414h1v6h-1zM910 414h1v6h-1zM936 414h4v6h-4zM993 414h1v6h-1zM1007 414h1v6h-1zM1027 414h1v6h-1zM1031 414h5v6h-5zM1046 414h1v6h-1zM1057 414h3v6h-3zM1085 414h1v6h-1zM110 408h2v6h-2zM128 408h2v6h-2zM134 408h1v6h-1zM140 408h1v6h-1zM162 408h2v6h-2zM233 408h1v6h-1zM280 408h1v6h-1zM289 408h1v6h-1zM297 408h2v6h-2zM341 408h2v6h-2zM361 408h3v6h-3zM378 408h1v6h-1zM383 408h1v6h-1zM398 408h1v6h-1zM416 408h1v6h-1zM482 408h1v6h-1zM521 408h2v6h-2zM524 408h1v6h-1zM541 408h2v6h-2zM556 408h1v6h-1zM566 408h1v6h-1zM625 408h2v6h-2zM640 408h1v6h-1zM659 408h1v6h-1zM712 408h2v6h-2zM737 408h2v6h-2zM766 408h1v6h-1zM768 408h1v6h-1zM779 408h2v6h-2zM787 408h1v6h-1zM797 408h2v6h-2zM846 408h1v6h-1zM851 408h1v6h-1zM868 408h1v6h-1zM871 408h1v6h-1zM874 408h2v6h-2zM888 408h1v6h-1zM911 408h1v6h-1zM932 408h1v6h-1zM982 408h1v6h-1zM1007 408h1v6h-1zM1043 408h1v6h-1zM1067 408h1v6h-1zM1080 408h3v6h-3zM1084 408h1v6h-1zM1086 408h1v6h-1zM1088 408h1v6h-1zM95 402h1v6h-1zM99 402h1v6h-1zM135 402h1v6h-1zM137 402h1v6h-1zM143 402h1v6h-1zM148 402h1v6h-1zM233 402h1v6h-1zM245 402h1v6h-1zM263 402h1v6h-1zM344 402h1v6h-1zM370 402h1v6h-1zM393 402h1v6h-1zM410 402h4v6h-4zM422 402h1v6h-1zM429 402h1v6h-1zM450 402h1v6h-1zM493 402h1v6h-1zM500 402h1v6h-1zM531 402h2v6h-2zM637 402h1v6h-1zM642 402h1v6h-1zM710 402h1v6h-1zM718 402h2v6h-2zM737 402h1v6h-1zM776 402h3v6h-3zM802 402h2v6h-2zM879 402h2v6h-2zM911 402h1v6h-1zM914 402h2v6h-2zM937 402h1v6h-1zM991 402h2v6h-2zM1025 402h1v6h-1zM1028 402h2v6h-2zM1044 402h2v6h-2zM124 396h1v6h-1zM126 396h1v6h-1zM131 396h2v6h-2zM140 396h2v6h-2zM150 396h2v6h-2zM219 396h2v6h-2zM314 396h1v6h-1zM371 396h1v6h-1zM378 396h1v6h-1zM414 396h1v6h-1zM471 396h1v6h-1zM524 396h1v6h-1zM548 396h3v6h-3zM577 396h1v6h-1zM616 396h2v6h-2zM634 396h1v6h-1zM642 396h1v6h-1zM684 396h1v6h-1zM720 396h1v6h-1zM793 396h1v6h-1zM802 396h2v6h-2zM827 396h2v6h-2zM838 396h1v6h-1zM841 396h1v6h-1zM850 396h1v6h-1zM852 396h1v6h-1zM874 396h2v6h-2zM881 396h2v6h-2zM910 396h1v6h-1zM912 396h2v6h-2zM932 396h1v6h-1zM936 396h1v6h-1zM944 396h2v6h-2zM977 396h1v6h-1zM980 396h1v6h-1zM983 396h1v6h-1zM986 396h2v6h-2zM1031 396h1v6h-1zM1037 396h2v6h-2zM1048 396h1v6h-1zM104 420h3v7h-3zM112 420h1v7h-1zM135 420h2v7h-2zM152 420h2v7h-2zM155 420h3v7h-3zM242 420h1v7h-1zM247 420h1v7h-1zM295 420h2v7h-2zM320 420h1v7h-1zM338 420h1v7h-1zM364 420h2v7h-2zM383 420h1v7h-1zM393 420h1v7h-1zM396 420h1v7h-1zM407 420h2v7h-2zM410 420h2v7h-2zM416 420h1v7h-1zM499 420h1v7h-1zM501 420h2v7h-2zM524 420h1v7h-1zM547 420h1v7h-1zM567 420h1v7h-1zM586 420h2v7h-2zM600 420h1v7h-1zM605 420h2v7h-2zM637 420h1v7h-1zM644 420h1v7h-1zM647 420h1v7h-1zM659 420h1v7h-1zM773 420h1v7h-1zM810 420h1v7h-1zM845 420h1v7h-1zM856 420h1v7h-1zM864 420h2v7h-2zM907 420h2v7h-2zM996 420h2v7h-2zM1020 420h1v7h-1zM1025 420h2v7h-2zM1032 420h5v7h-5zM1039 420h2v7h-2zM1050 420h1v7h-1zM1053 420h1v7h-1zM1057 420h1v7h-1zM1061 420h3v7h-3zM1078 420h6v7h-6zM104 427h1v6h-1zM109 427h1v6h-1zM304 427h1v6h-1zM318 427h1v6h-1zM321 427h1v6h-1zM335 427h1v6h-1zM339 427h2v6h-2zM360 427h1v6h-1zM421 427h3v6h-3zM475 427h2v6h-2zM501 427h2v6h-2zM524 427h2v6h-2zM546 427h1v6h-1zM548 427h2v6h-2zM564 427h1v6h-1zM568 427h1v6h-1zM577 427h1v6h-1zM769 427h1v6h-1zM800 427h1v6h-1zM835 427h2v6h-2zM843 427h1v6h-1zM862 427h1v6h-1zM866 427h2v6h-2zM1022 427h3v6h-3zM1028 427h2v6h-2zM1034 427h2v6h-2zM1053 427h1v6h-1zM1058 427h2v6h-2zM1064 427h2v6h-2zM1068 427h1v6h-1zM1077 427h1v6h-1zM1083 427h3v6h-3zM104 439h1v6h-1zM107 439h2v6h-2zM248 439h2v6h-2zM440 439h1v6h-1zM485 439h1v6h-1zM600 439h1v6h-1zM841 439h2v6h-2zM866 439h3v6h-3zM870 439h1v6h-1zM921 439h1v6h-1zM1029 439h2v6h-2zM1072 439h4v6h-4zM1080 439h4v6h-4zM1086 439h1v6h-1zM105 433h2v6h-2zM243 433h1v6h-1zM271 433h1v6h-1zM335 433h1v6h-1zM409 433h1v6h-1zM438 433h1v6h-1zM521 433h2v6h-2zM548 433h2v6h-2zM559 433h1v6h-1zM568 433h1v6h-1zM575 433h1v6h-1zM631 433h1v6h-1zM635 433h2v6h-2zM802 433h2v6h-2zM840 433h1v6h-1zM860 433h1v6h-1zM931 433h2v6h-2zM1077 433h3v6h-3zM1081 433h2v6h-2zM107 445h2v6h-2zM250 445h1v6h-1zM429 445h1v6h-1zM597 445h1v6h-1zM870 445h1v6h-1zM914 445h1v6h-1zM201 310h1v6h-1zM206 310h1v6h-1zM209 310h1v6h-1zM219 310h1v6h-1zM417 310h1v6h-1zM575 310h2v6h-2zM698 310h1v6h-1zM704 310h1v6h-1zM721 310h1v6h-1zM729 310h1v6h-1zM763 310h1v6h-1zM774 310h1v6h-1zM910 310h1v6h-1zM952 310h1v6h-1zM955 310h2v6h-2zM1000 310h1v6h-1zM128 304h2v6h-2zM138 304h1v6h-1zM144 304h2v6h-2zM199 304h1v6h-1zM209 304h1v6h-1zM216 304h1v6h-1zM221 304h2v6h-2zM575 304h1v6h-1zM643 304h1v6h-1zM648 304h1v6h-1zM653 304h1v6h-1zM698 304h1v6h-1zM711 304h1v6h-1zM887 304h1v6h-1zM138 298h3v6h-3zM201 298h1v6h-1zM209 298h1v6h-1zM262 298h1v6h-1zM517 298h1v6h-1zM523 298h2v6h-2zM682 298h2v6h-2zM698 298h1v6h-1zM708 298h2v6h-2zM718 298h3v6h-3zM764 298h2v6h-2zM778 298h1v6h-1zM863 298h1v6h-1zM867 298h2v6h-2zM907 298h1v6h-1zM914 298h1v6h-1zM140 292h1v6h-1zM206 292h1v6h-1zM211 292h1v6h-1zM698 292h1v6h-1zM717 292h1v6h-1zM764 292h1v6h-1zM896 292h1v6h-1zM186 286h1v6h-1zM698 286h1v6h-1zM780 286h2v6h-2zM890 286h1v6h-1zM894 286h1v6h-1zM910 286h1v6h-1zM916 286h1v6h-1zM175 243h1v6h-1zM90 237h1v6h-1zM175 237h1v6h-1zM180 237h1v6h-1zM784 237h1v6h-1zM889 231h1v6h-1zM175 249h1v6h-1zM765 249h1v6h-1zM519 225h1v6h-1zM786 225h1v6h-1zM890 225h1v6h-1zM175 218h1v7h-1zM785 218h1v7h-1zM180 261h3v6h-3zM184 261h1v6h-1zM704 261h1v6h-1zM765 261h1v6h-1zM861 261h1v6h-1zM898 261h1v6h-1zM178 255h3v6h-3zM183 255h1v6h-1zM780 255h5v6h-5zM867 255h1v6h-1zM869 255h1v6h-1zM201 274h1v6h-1zM906 274h1v6h-1zM180 267h1v7h-1zM183 267h1v7h-1zM897 267h1v7h-1zM185 280h1v6h-1zM698 280h1v6h-1zM890 280h1v6h-1zM904 280h2v6h-2zM909 280h1v6h-1zM913 280h2v6h-2zM440 451h1v6h-1zM444 451h2v6h-2zM591 451h2v6h-2zM594 451h2v6h-2zM598 451h2v6h-2zM839 451h1v6h-1zM911 451h1v6h-1zM915 451h3v6h-3zM442 457h2v6h-2zM459 457h2v6h-2zM465 457h1v6h-1zM469 457h2v6h-2zM478 457h1v6h-1zM486 457h3v6h-3zM493 457h1v6h-1zM600 457h1v6h-1zM518 212h1v6h-1zM513 206h1v6h-1zM516 206h1v6h-1zM510 200h2v6h-2zM509 194h1v6h-1zM513 194h1v6h-1zM790 188h1v6h-1zM545 102h2v6h-2zM541 108h1v6h-1zM545 108h2v6h-2zM538 96h1v6h-1zM547 96h1v6h-1zM548 114h1v7h-1zM486 139h1v6h-1zM497 133h1v6h-1zM224 476h2v6h-2zM233 476h1v6h-1zM244 476h2v6h-2zM197 488h1v6h-1zM225 488h1v6h-1zM233 488h1v6h-1zM236 488h1v6h-1zM224 494h1v6h-1zM230 494h1v6h-1zM1079 494h1v6h-1zM246 469h1v7h-1zM245 482h1v6h-1z"/>
<path fill="#0838ff" d="M91 365h1v6h-1zM94 365h2v6h-2zM99 365h2v6h-2zM102 365h2v6h-2zM112 365h1v6h-1zM127 365h1v6h-1zM143 365h1v6h-1zM149 365h1v6h-1zM152 365h2v6h-2zM206 365h1v6h-1zM215 365h1v6h-1zM238 365h1v6h-1zM245 365h1v6h-1zM290 365h1v6h-1zM332 365h1v6h-1zM364 365h2v6h-2zM380 365h1v6h-1zM388 365h1v6h-1zM391 365h2v6h-2zM397 365h1v6h-1zM401 365h1v6h-1zM407 365h2v6h-2zM422 365h1v6h-1zM475 365h2v6h-2zM517 365h1v6h-1zM531 365h1v6h-1zM567 365h1v6h-1zM616 365h2v6h-2zM638 365h1v6h-1zM644 365h1v6h-1zM665 365h2v6h-2zM677 365h1v6h-1zM686 365h2v6h-2zM694 365h2v6h-2zM704 365h1v6h-1zM742 365h1v6h-1zM748 365h1v6h-1zM757 365h1v6h-1zM778 365h1v6h-1zM788 365h1v6h-1zM817 365h1v6h-1zM852 365h2v6h-2zM864 365h2v6h-2zM890 365h2v6h-2zM932 365h1v6h-1zM991 365h2v6h-2zM1003 365h2v6h-2zM1034 365h2v6h-2zM1087 365h1v6h-1zM91 359h1v6h-1zM97 359h2v6h-2zM101 359h1v6h-1zM133 359h1v6h-1zM144 359h2v6h-2zM154 359h1v6h-1zM206 359h2v6h-2zM211 359h1v6h-1zM216 359h1v6h-1zM227 359h1v6h-1zM244 359h1v6h-1zM331 359h1v6h-1zM385 359h1v6h-1zM412 359h2v6h-2zM423 359h1v6h-1zM475 359h2v6h-2zM501 359h2v6h-2zM510 359h2v6h-2zM513 359h1v6h-1zM539 359h2v6h-2zM548 359h2v6h-2zM574 359h1v6h-1zM589 359h2v6h-2zM644 359h1v6h-1zM647 359h1v6h-1zM661 359h1v6h-1zM677 359h1v6h-1zM702 359h2v6h-2zM716 359h1v6h-1zM720 359h1v6h-1zM727 359h2v6h-2zM738 359h1v6h-1zM742 359h1v6h-1zM750 359h2v6h-2zM779 359h4v6h-4zM791 359h1v6h-1zM794 359h2v6h-2zM829 359h1v6h-1zM839 359h1v6h-1zM847 359h3v6h-3zM852 359h1v6h-1zM871 359h1v6h-1zM881 359h1v6h-1zM895 359h1v6h-1zM898 359h1v6h-1zM975 359h3v6h-3zM983 359h1v6h-1zM1021 359h1v6h-1zM1025 359h2v6h-2zM91 353h1v6h-1zM119 353h2v6h-2zM123 353h1v6h-1zM147 353h2v6h-2zM154 353h1v6h-1zM204 353h2v6h-2zM225 353h1v6h-1zM270 353h1v6h-1zM274 353h2v6h-2zM313 353h1v6h-1zM364 353h2v6h-2zM467 353h2v6h-2zM475 353h2v6h-2zM505 353h1v6h-1zM525 353h1v6h-1zM590 353h1v6h-1zM631 353h1v6h-1zM644 353h1v6h-1zM660 353h1v6h-1zM667 353h1v6h-1zM670 353h1v6h-1zM675 353h2v6h-2zM678 353h2v6h-2zM691 353h1v6h-1zM702 353h2v6h-2zM705 353h2v6h-2zM724 353h2v6h-2zM740 353h2v6h-2zM747 353h1v6h-1zM757 353h1v6h-1zM764 353h2v6h-2zM781 353h2v6h-2zM787 353h1v6h-1zM809 353h1v6h-1zM823 353h1v6h-1zM845 353h2v6h-2zM857 353h2v6h-2zM864 353h2v6h-2zM882 353h1v6h-1zM889 353h1v6h-1zM898 353h1v6h-1zM928 353h1v6h-1zM946 353h3v6h-3zM951 353h1v6h-1zM979 353h1v6h-1zM1007 353h1v6h-1zM92 347h4v6h-4zM126 347h1v6h-1zM128 347h2v6h-2zM146 347h1v6h-1zM150 347h2v6h-2zM197 347h1v6h-1zM219 347h1v6h-1zM243 347h3v6h-3zM248 347h2v6h-2zM251 347h4v6h-4zM417 347h3v6h-3zM438 347h2v6h-2zM467 347h2v6h-2zM484 347h1v6h-1zM493 347h1v6h-1zM520 347h1v6h-1zM524 347h2v6h-2zM537 347h1v6h-1zM548 347h2v6h-2zM589 347h1v6h-1zM634 347h1v6h-1zM642 347h1v6h-1zM661 347h1v6h-1zM667 347h2v6h-2zM685 347h1v6h-1zM694 347h2v6h-2zM699 347h1v6h-1zM702 347h2v6h-2zM721 347h1v6h-1zM729 347h1v6h-1zM748 347h1v6h-1zM758 347h2v6h-2zM781 347h2v6h-2zM786 347h1v6h-1zM802 347h2v6h-2zM818 347h1v6h-1zM845 347h1v6h-1zM853 347h1v6h-1zM876 347h2v6h-2zM881 347h2v6h-2zM895 347h1v6h-1zM949 347h3v6h-3zM971 347h1v6h-1zM977 347h1v6h-1zM981 347h1v6h-1zM983 347h1v6h-1zM1016 347h2v6h-2zM85 341h3v6h-3zM89 341h1v6h-1zM94 341h2v6h-2zM108 341h1v6h-1zM111 341h1v6h-1zM150 341h2v6h-2zM200 341h1v6h-1zM217 341h1v6h-1zM220 341h3v6h-3zM240 341h2v6h-2zM245 341h1v6h-1zM308 341h1v6h-1zM401 341h1v6h-1zM416 341h1v6h-1zM523 341h1v6h-1zM532 341h1v6h-1zM547 341h1v6h-1zM590 341h1v6h-1zM625 341h2v6h-2zM643 341h1v6h-1zM649 341h1v6h-1zM672 341h2v6h-2zM688 341h1v6h-1zM718 341h2v6h-2zM727 341h2v6h-2zM761 341h1v6h-1zM763 341h3v6h-3zM779 341h4v6h-4zM853 341h1v6h-1zM868 341h1v6h-1zM885 341h1v6h-1zM889 341h1v6h-1zM892 341h2v6h-2zM895 341h1v6h-1zM902 341h2v6h-2zM1018 341h1v6h-1zM90 335h1v6h-1zM92 335h2v6h-2zM115 335h1v6h-1zM141 335h1v6h-1zM150 335h2v6h-2zM204 335h1v6h-1zM211 335h1v6h-1zM213 335h1v6h-1zM220 335h1v6h-1zM232 335h1v6h-1zM256 335h1v6h-1zM405 335h1v6h-1zM412 335h3v6h-3zM458 335h1v6h-1zM533 335h2v6h-2zM564 335h1v6h-1zM597 335h1v6h-1zM616 335h2v6h-2zM644 335h1v6h-1zM651 335h2v6h-2zM708 335h2v6h-2zM717 335h1v6h-1zM729 335h1v6h-1zM752 335h2v6h-2zM767 335h1v6h-1zM769 335h2v6h-2zM840 335h1v6h-1zM853 335h1v6h-1zM864 335h2v6h-2zM890 335h2v6h-2zM904 335h2v6h-2zM936 335h1v6h-1zM944 335h2v6h-2zM953 335h2v6h-2zM971 335h1v6h-1zM1025 335h1v6h-1zM87 329h1v6h-1zM112 329h1v6h-1zM128 329h2v6h-2zM147 329h2v6h-2zM201 329h1v6h-1zM205 329h1v6h-1zM211 329h1v6h-1zM215 329h1v6h-1zM263 329h2v6h-2zM366 329h1v6h-1zM513 329h1v6h-1zM538 329h3v6h-3zM546 329h2v6h-2zM552 329h2v6h-2zM588 329h1v6h-1zM630 329h1v6h-1zM641 329h1v6h-1zM672 329h3v6h-3zM691 329h1v6h-1zM747 329h1v6h-1zM758 329h2v6h-2zM771 329h2v6h-2zM775 329h3v6h-3zM780 329h1v6h-1zM784 329h2v6h-2zM802 329h2v6h-2zM811 329h1v6h-1zM821 329h1v6h-1zM857 329h2v6h-2zM863 329h1v6h-1zM876 329h2v6h-2zM933 329h2v6h-2zM947 329h2v6h-2zM952 329h1v6h-1zM971 329h1v6h-1zM87 323h2v6h-2zM91 323h1v6h-1zM141 323h1v6h-1zM196 323h1v6h-1zM198 323h1v6h-1zM200 323h2v6h-2zM207 323h1v6h-1zM211 323h1v6h-1zM220 323h1v6h-1zM224 323h1v6h-1zM257 323h2v6h-2zM479 323h2v6h-2zM523 323h1v6h-1zM525 323h1v6h-1zM554 323h1v6h-1zM577 323h1v6h-1zM589 323h1v6h-1zM616 323h2v6h-2zM627 323h1v6h-1zM651 323h2v6h-2zM697 323h1v6h-1zM705 323h2v6h-2zM721 323h1v6h-1zM853 323h1v6h-1zM886 323h1v6h-1zM890 323h2v6h-2zM936 323h1v6h-1zM947 323h2v6h-2zM951 323h1v6h-1zM117 316h1v7h-1zM140 316h1v7h-1zM142 316h1v7h-1zM144 316h2v7h-2zM201 316h1v7h-1zM220 316h1v7h-1zM235 316h1v7h-1zM457 316h1v7h-1zM520 316h1v7h-1zM648 316h1v7h-1zM680 316h1v7h-1zM692 316h1v7h-1zM697 316h1v7h-1zM718 316h3v7h-3zM732 316h1v7h-1zM767 316h1v7h-1zM854 316h2v7h-2zM859 316h1v7h-1zM888 316h1v7h-1zM894 316h1v7h-1zM906 316h1v7h-1zM997 316h1v7h-1zM107 371h3v7h-3zM150 371h1v7h-1zM206 371h1v7h-1zM221 371h2v7h-2zM239 371h1v7h-1zM325 371h1v7h-1zM338 371h1v7h-1zM361 371h1v7h-1zM374 371h1v7h-1zM426 371h2v7h-2zM511 371h1v7h-1zM519 371h1v7h-1zM548 371h2v7h-2zM577 371h1v7h-1zM637 371h1v7h-1zM643 371h1v7h-1zM692 371h1v7h-1zM694 371h2v7h-2zM698 371h1v7h-1zM717 371h1v7h-1zM723 371h1v7h-1zM730 371h2v7h-2zM735 371h2v7h-2zM745 371h2v7h-2zM748 371h1v7h-1zM768 371h1v7h-1zM786 371h1v7h-1zM802 371h2v7h-2zM812 371h2v7h-2zM841 371h2v7h-2zM871 371h1v7h-1zM874 371h2v7h-2zM882 371h1v7h-1zM887 371h1v7h-1zM893 371h1v7h-1zM933 371h2v7h-2zM944 371h2v7h-2zM969 371h1v7h-1zM991 371h1v7h-1zM994 371h2v7h-2zM1013 371h1v7h-1zM1025 371h2v7h-2zM1028 371h2v7h-2zM1048 371h1v7h-1zM1087 371h1v7h-1zM94 378h2v6h-2zM110 378h2v6h-2zM150 378h2v6h-2zM157 378h1v6h-1zM215 378h1v6h-1zM227 378h1v6h-1zM236 378h2v6h-2zM269 378h1v6h-1zM291 378h1v6h-1zM324 378h1v6h-1zM351 378h2v6h-2zM364 378h2v6h-2zM378 378h1v6h-1zM383 378h2v6h-2zM409 378h1v6h-1zM412 378h2v6h-2zM415 378h1v6h-1zM423 378h3v6h-3zM493 378h1v6h-1zM524 378h1v6h-1zM530 378h1v6h-1zM581 378h2v6h-2zM597 378h1v6h-1zM610 378h1v6h-1zM634 378h1v6h-1zM661 378h2v6h-2zM671 378h1v6h-1zM681 378h1v6h-1zM687 378h1v6h-1zM715 378h2v6h-2zM767 378h1v6h-1zM769 378h2v6h-2zM776 378h1v6h-1zM786 378h1v6h-1zM796 378h1v6h-1zM825 378h1v6h-1zM838 378h1v6h-1zM918 378h1v6h-1zM929 378h1v6h-1zM946 378h1v6h-1zM972 378h2v6h-2zM1015 378h1v6h-1zM1028 378h2v6h-2zM1031 378h3v6h-3zM1043 378h1v6h-1zM94 384h2v6h-2zM97 384h2v6h-2zM109 384h1v6h-1zM126 384h1v6h-1zM146 384h1v6h-1zM148 384h1v6h-1zM157 384h1v6h-1zM207 384h1v6h-1zM216 384h2v6h-2zM226 384h2v6h-2zM278 384h2v6h-2zM295 384h2v6h-2zM314 384h1v6h-1zM338 384h1v6h-1zM346 384h2v6h-2zM389 384h2v6h-2zM410 384h2v6h-2zM414 384h1v6h-1zM421 384h1v6h-1zM504 384h1v6h-1zM520 384h1v6h-1zM531 384h1v6h-1zM543 384h1v6h-1zM586 384h2v6h-2zM631 384h1v6h-1zM638 384h1v6h-1zM643 384h1v6h-1zM650 384h4v6h-4zM670 384h1v6h-1zM696 384h2v6h-2zM705 384h3v6h-3zM711 384h1v6h-1zM730 384h2v6h-2zM752 384h2v6h-2zM762 384h1v6h-1zM783 384h1v6h-1zM790 384h1v6h-1zM811 384h1v6h-1zM831 384h2v6h-2zM846 384h1v6h-1zM851 384h1v6h-1zM857 384h2v6h-2zM868 384h1v6h-1zM873 384h1v6h-1zM886 384h1v6h-1zM919 384h1v6h-1zM936 384h1v6h-1zM1007 384h2v6h-2zM1018 384h1v6h-1zM1049 384h2v6h-2zM1052 384h1v6h-1zM1054 384h2v6h-2zM1087 384h1v6h-1zM105 390h2v6h-2zM109 390h4v6h-4zM117 390h2v6h-2zM126 390h1v6h-1zM138 390h2v6h-2zM141 390h1v6h-1zM150 390h2v6h-2zM159 390h1v6h-1zM214 390h2v6h-2zM242 390h1v6h-1zM245 390h1v6h-1zM278 390h1v6h-1zM287 390h1v6h-1zM320 390h1v6h-1zM367 390h1v6h-1zM374 390h1v6h-1zM399 390h2v6h-2zM421 390h1v6h-1zM423 390h3v6h-3zM525 390h1v6h-1zM590 390h1v6h-1zM643 390h1v6h-1zM647 390h1v6h-1zM651 390h2v6h-2zM658 390h1v6h-1zM678 390h2v6h-2zM693 390h3v6h-3zM702 390h2v6h-2zM710 390h1v6h-1zM750 390h2v6h-2zM760 390h1v6h-1zM779 390h2v6h-2zM810 390h1v6h-1zM825 390h1v6h-1zM848 390h1v6h-1zM856 390h1v6h-1zM866 390h3v6h-3zM881 390h1v6h-1zM893 390h1v6h-1zM912 390h2v6h-2zM928 390h1v6h-1zM1000 390h1v6h-1zM1021 390h1v6h-1zM1030 390h1v6h-1zM1044 390h2v6h-2zM1053 390h1v6h-1zM1057 390h1v6h-1zM104 414h1v6h-1zM113 414h2v6h-2zM137 414h2v6h-2zM140 414h1v6h-1zM152 414h2v6h-2zM271 414h1v6h-1zM284 414h2v6h-2zM295 414h2v6h-2zM358 414h2v6h-2zM361 414h1v6h-1zM366 414h1v6h-1zM368 414h1v6h-1zM372 414h1v6h-1zM406 414h1v6h-1zM410 414h1v6h-1zM483 414h1v6h-1zM493 414h1v6h-1zM550 414h1v6h-1zM590 414h1v6h-1zM632 414h1v6h-1zM638 414h1v6h-1zM642 414h1v6h-1zM663 414h2v6h-2zM666 414h2v6h-2zM741 414h1v6h-1zM799 414h1v6h-1zM807 414h4v6h-4zM843 414h1v6h-1zM859 414h1v6h-1zM861 414h2v6h-2zM871 414h1v6h-1zM879 414h2v6h-2zM883 414h2v6h-2zM912 414h2v6h-2zM935 414h1v6h-1zM999 414h2v6h-2zM1028 414h2v6h-2zM1042 414h1v6h-1zM1048 414h1v6h-1zM1050 414h1v6h-1zM1068 414h1v6h-1zM1072 414h2v6h-2zM1080 414h1v6h-1zM97 408h2v6h-2zM105 408h2v6h-2zM126 408h1v6h-1zM141 408h1v6h-1zM157 408h1v6h-1zM160 408h1v6h-1zM274 408h2v6h-2zM311 408h1v6h-1zM319 408h1v6h-1zM346 408h2v6h-2zM354 408h1v6h-1zM368 408h1v6h-1zM373 408h1v6h-1zM381 408h2v6h-2zM396 408h1v6h-1zM475 408h2v6h-2zM493 408h1v6h-1zM505 408h1v6h-1zM525 408h1v6h-1zM536 408h1v6h-1zM586 408h2v6h-2zM610 408h1v6h-1zM631 408h1v6h-1zM635 408h3v6h-3zM642 408h1v6h-1zM645 408h2v6h-2zM711 408h1v6h-1zM716 408h1v6h-1zM726 408h1v6h-1zM741 408h2v6h-2zM776 408h1v6h-1zM835 408h3v6h-3zM845 408h1v6h-1zM848 408h2v6h-2zM857 408h2v6h-2zM860 408h2v6h-2zM889 408h1v6h-1zM909 408h1v6h-1zM912 408h4v6h-4zM997 408h1v6h-1zM1023 408h2v6h-2zM1056 408h2v6h-2zM1063 408h1v6h-1zM1071 408h1v6h-1zM102 402h1v6h-1zM112 402h1v6h-1zM120 402h1v6h-1zM154 402h1v6h-1zM246 402h1v6h-1zM348 402h1v6h-1zM350 402h1v6h-1zM352 402h1v6h-1zM391 402h2v6h-2zM396 402h1v6h-1zM401 402h2v6h-2zM530 402h1v6h-1zM537 402h1v6h-1zM567 402h1v6h-1zM605 402h2v6h-2zM640 402h1v6h-1zM659 402h1v6h-1zM714 402h3v6h-3zM724 402h2v6h-2zM745 402h2v6h-2zM763 402h1v6h-1zM783 402h1v6h-1zM787 402h1v6h-1zM799 402h1v6h-1zM864 402h2v6h-2zM874 402h2v6h-2zM918 402h1v6h-1zM920 402h1v6h-1zM924 402h1v6h-1zM978 402h1v6h-1zM982 402h1v6h-1zM1030 402h1v6h-1zM1047 402h1v6h-1zM1054 402h1v6h-1zM1057 402h2v6h-2zM1072 402h1v6h-1zM105 396h4v6h-4zM127 396h1v6h-1zM139 396h1v6h-1zM147 396h2v6h-2zM154 396h1v6h-1zM159 396h1v6h-1zM221 396h2v6h-2zM244 396h1v6h-1zM247 396h1v6h-1zM368 396h1v6h-1zM379 396h1v6h-1zM384 396h1v6h-1zM389 396h2v6h-2zM398 396h1v6h-1zM402 396h1v6h-1zM504 396h1v6h-1zM532 396h1v6h-1zM539 396h2v6h-2zM571 396h1v6h-1zM680 396h2v6h-2zM704 396h1v6h-1zM761 396h1v6h-1zM783 396h1v6h-1zM786 396h2v6h-2zM807 396h2v6h-2zM837 396h1v6h-1zM840 396h1v6h-1zM849 396h1v6h-1zM851 396h1v6h-1zM856 396h3v6h-3zM888 396h1v6h-1zM914 396h2v6h-2zM918 396h1v6h-1zM928 396h1v6h-1zM990 396h1v6h-1zM1020 396h1v6h-1zM1023 396h2v6h-2zM1028 396h2v6h-2zM1052 396h1v6h-1zM1086 396h1v6h-1zM1088 396h1v6h-1zM102 420h2v7h-2zM109 420h1v7h-1zM233 420h1v7h-1zM239 420h2v7h-2zM251 420h4v7h-4zM269 420h1v7h-1zM311 420h1v7h-1zM344 420h2v7h-2zM397 420h2v7h-2zM409 420h1v7h-1zM418 420h2v7h-2zM424 420h2v7h-2zM486 420h1v7h-1zM494 420h2v7h-2zM525 420h1v7h-1zM546 420h1v7h-1zM555 420h2v7h-2zM559 420h1v7h-1zM566 420h1v7h-1zM574 420h1v7h-1zM576 420h1v7h-1zM616 420h2v7h-2zM620 420h2v7h-2zM623 420h1v7h-1zM628 420h1v7h-1zM631 420h1v7h-1zM643 420h1v7h-1zM735 420h2v7h-2zM774 420h1v7h-1zM797 420h2v7h-2zM801 420h1v7h-1zM807 420h2v7h-2zM842 420h1v7h-1zM862 420h1v7h-1zM871 420h1v7h-1zM931 420h1v7h-1zM936 420h1v7h-1zM1000 420h1v7h-1zM1018 420h1v7h-1zM1030 420h1v7h-1zM1042 420h2v7h-2zM1048 420h1v7h-1zM1051 420h1v7h-1zM1054 420h2v7h-2zM1066 420h1v7h-1zM1071 420h1v7h-1zM1087 420h1v7h-1zM101 427h1v6h-1zM105 427h2v6h-2zM233 427h1v6h-1zM336 427h2v6h-2zM344 427h2v6h-2zM444 427h2v6h-2zM496 427h1v6h-1zM526 427h2v6h-2zM547 427h1v6h-1zM551 427h1v6h-1zM571 427h1v6h-1zM588 427h1v6h-1zM616 427h2v6h-2zM620 427h2v6h-2zM623 427h1v6h-1zM641 427h1v6h-1zM643 427h1v6h-1zM648 427h1v6h-1zM771 427h2v6h-2zM802 427h2v6h-2zM872 427h2v6h-2zM929 427h1v6h-1zM999 427h1v6h-1zM1005 427h2v6h-2zM1008 427h2v6h-2zM1018 427h2v6h-2zM1030 427h4v6h-4zM1051 427h1v6h-1zM1057 427h1v6h-1zM1069 427h2v6h-2zM1072 427h2v6h-2zM1078 427h2v6h-2zM245 439h1v6h-1zM417 439h1v6h-1zM422 439h2v6h-2zM442 439h2v6h-2zM496 439h1v6h-1zM576 439h1v6h-1zM639 439h1v6h-1zM802 439h2v6h-2zM807 439h2v6h-2zM839 439h1v6h-1zM909 439h1v6h-1zM917 439h3v6h-3zM1019 439h2v6h-2zM1025 439h1v6h-1zM109 433h1v6h-1zM112 433h1v6h-1zM239 433h2v6h-2zM244 433h1v6h-1zM246 433h4v6h-4zM251 433h2v6h-2zM309 433h2v6h-2zM343 433h1v6h-1zM414 433h1v6h-1zM422 433h1v6h-1zM450 433h1v6h-1zM467 433h2v6h-2zM475 433h2v6h-2zM489 433h1v6h-1zM520 433h1v6h-1zM523 433h2v6h-2zM550 433h1v6h-1zM554 433h2v6h-2zM589 433h1v6h-1zM600 433h1v6h-1zM605 433h2v6h-2zM611 433h2v6h-2zM835 433h2v6h-2zM869 433h1v6h-1zM872 433h2v6h-2zM910 433h1v6h-1zM1031 433h1v6h-1zM1071 433h3v6h-3zM440 445h2v6h-2zM450 445h1v6h-1zM458 445h1v6h-1zM471 445h1v6h-1zM475 445h2v6h-2zM594 445h2v6h-2zM801 445h1v6h-1zM805 445h2v6h-2zM840 445h1v6h-1zM860 445h1v6h-1zM863 445h1v6h-1zM917 445h1v6h-1zM568 310h1v6h-1zM642 310h1v6h-1zM653 310h1v6h-1zM727 310h2v6h-2zM779 310h1v6h-1zM783 310h1v6h-1zM871 310h2v6h-2zM897 310h1v6h-1zM996 310h1v6h-1zM139 304h1v6h-1zM198 304h1v6h-1zM210 304h2v6h-2zM214 304h2v6h-2zM415 304h1v6h-1zM622 304h1v6h-1zM691 304h1v6h-1zM767 304h1v6h-1zM874 304h2v6h-2zM904 304h2v6h-2zM143 298h1v6h-1zM207 298h1v6h-1zM215 298h1v6h-1zM686 298h2v6h-2zM712 298h2v6h-2zM890 298h1v6h-1zM908 298h3v6h-3zM952 298h1v6h-1zM200 292h2v6h-2zM205 292h1v6h-1zM209 292h1v6h-1zM700 292h2v6h-2zM704 292h1v6h-1zM780 292h2v6h-2zM914 292h2v6h-2zM949 292h2v6h-2zM697 286h1v6h-1zM702 286h2v6h-2zM711 286h1v6h-1zM764 286h1v6h-1zM864 286h1v6h-1zM181 243h2v6h-2zM431 243h1v6h-1zM766 243h1v6h-1zM782 243h2v6h-2zM864 243h1v6h-1zM867 243h3v6h-3zM178 237h2v6h-2zM181 237h2v6h-2zM766 237h1v6h-1zM870 237h1v6h-1zM180 231h1v6h-1zM786 231h1v6h-1zM871 231h1v6h-1zM178 249h2v6h-2zM181 249h2v6h-2zM767 249h2v6h-2zM864 249h1v6h-1zM177 225h3v6h-3zM524 225h2v6h-2zM865 225h2v6h-2zM869 225h1v6h-1zM177 261h3v6h-3zM183 261h1v6h-1zM702 261h2v6h-2zM865 261h2v6h-2zM870 261h1v6h-1zM921 261h1v6h-1zM766 255h1v6h-1zM897 255h1v6h-1zM702 274h2v6h-2zM204 267h1v7h-1zM898 267h1v7h-1zM767 280h2v6h-2zM889 280h1v6h-1zM449 451h2v6h-2zM474 451h1v6h-1zM493 451h1v6h-1zM500 451h1v6h-1zM589 451h1v6h-1zM496 457h1v6h-1zM501 457h2v6h-2zM598 457h2v6h-2zM916 457h2v6h-2zM520 212h1v6h-1zM782 212h2v6h-2zM785 206h1v6h-1zM786 200h1v6h-1zM785 188h1v6h-1zM537 102h1v6h-1zM543 102h1v6h-1zM541 96h1v6h-1zM544 96h1v6h-1zM495 139h1v6h-1zM228 476h1v6h-1zM246 476h1v6h-1zM1080 476h1v6h-1zM226 488h2v6h-2zM228 494h1v6h-1zM234 494h1v6h-1zM243 494h1v6h-1zM246 494h1v6h-1zM251 494h1v6h-1zM243 469h1v7h-1zM245 469h1v7h-1zM246 482h1v6h-1z"/>
<path fill="#2800ff" d="M97 365h2v6h-2zM121 365h3v6h-3zM125 365h1v6h-1zM130 365h1v6h-1zM133 365h4v6h-4zM144 365h3v6h-3zM148 365h1v6h-1zM204 365h2v6h-2zM208 365h1v6h-1zM211 365h3v6h-3zM216 365h2v6h-2zM219 365h1v6h-1zM223 365h1v6h-1zM225 365h1v6h-1zM242 365h1v6h-1zM248 365h1v6h-1zM251 365h2v6h-2zM280 365h1v6h-1zM282 365h2v6h-2zM311 365h1v6h-1zM317 365h1v6h-1zM324 365h1v6h-1zM338 365h1v6h-1zM343 365h5v6h-5zM353 365h1v6h-1zM362 365h2v6h-2zM371 365h6v6h-6zM378 365h1v6h-1zM383 365h1v6h-1zM389 365h2v6h-2zM410 365h2v6h-2zM421 365h1v6h-1zM504 365h1v6h-1zM514 365h1v6h-1zM520 365h5v6h-5zM590 365h1v6h-1zM610 365h1v6h-1zM660 365h1v6h-1zM663 365h2v6h-2zM669 365h1v6h-1zM681 365h1v6h-1zM692 365h1v6h-1zM698 365h1v6h-1zM707 365h1v6h-1zM717 365h3v6h-3zM721 365h1v6h-1zM733 365h2v6h-2zM745 365h3v6h-3zM752 365h2v6h-2zM758 365h2v6h-2zM762 365h1v6h-1zM766 365h1v6h-1zM775 365h3v6h-3zM779 365h2v6h-2zM787 365h1v6h-1zM789 365h2v6h-2zM792 365h2v6h-2zM810 365h2v6h-2zM815 365h2v6h-2zM818 365h1v6h-1zM827 365h2v6h-2zM846 365h1v6h-1zM856 365h1v6h-1zM862 365h1v6h-1zM868 365h1v6h-1zM894 365h4v6h-4zM947 365h4v6h-4zM970 365h1v6h-1zM1025 365h3v6h-3zM1086 365h1v6h-1zM99 359h2v6h-2zM116 359h1v6h-1zM123 359h1v6h-1zM131 359h2v6h-2zM135 359h2v6h-2zM148 359h1v6h-1zM155 359h2v6h-2zM199 359h1v6h-1zM204 359h1v6h-1zM208 359h1v6h-1zM212 359h2v6h-2zM236 359h2v6h-2zM239 359h2v6h-2zM362 359h2v6h-2zM378 359h1v6h-1zM401 359h1v6h-1zM406 359h1v6h-1zM409 359h1v6h-1zM415 359h1v6h-1zM421 359h1v6h-1zM506 359h1v6h-1zM521 359h2v6h-2zM531 359h1v6h-1zM651 359h2v6h-2zM654 359h1v6h-1zM662 359h5v6h-5zM669 359h1v6h-1zM671 359h3v6h-3zM718 359h2v6h-2zM721 359h1v6h-1zM733 359h2v6h-2zM752 359h2v6h-2zM757 359h1v6h-1zM762 359h1v6h-1zM775 359h3v6h-3zM783 359h1v6h-1zM786 359h1v6h-1zM789 359h2v6h-2zM792 359h2v6h-2zM797 359h2v6h-2zM809 359h1v6h-1zM819 359h2v6h-2zM824 359h1v6h-1zM826 359h3v6h-3zM860 359h1v6h-1zM862 359h1v6h-1zM864 359h2v6h-2zM890 359h2v6h-2zM894 359h1v6h-1zM896 359h1v6h-1zM937 359h1v6h-1zM943 359h1v6h-1zM946 359h5v6h-5zM979 359h1v6h-1zM994 359h2v6h-2zM1023 359h2v6h-2zM1027 359h1v6h-1zM1088 359h1v6h-1zM94 353h2v6h-2zM108 353h1v6h-1zM113 353h2v6h-2zM121 353h2v6h-2zM155 353h2v6h-2zM198 353h1v6h-1zM208 353h1v6h-1zM216 353h1v6h-1zM221 353h2v6h-2zM248 353h1v6h-1zM271 353h1v6h-1zM304 353h1v6h-1zM311 353h1v6h-1zM314 353h1v6h-1zM332 353h1v6h-1zM401 353h1v6h-1zM405 353h2v6h-2zM410 353h4v6h-4zM421 353h2v6h-2zM501 353h2v6h-2zM514 353h3v6h-3zM521 353h2v6h-2zM524 353h1v6h-1zM543 353h1v6h-1zM567 353h1v6h-1zM650 353h1v6h-1zM663 353h2v6h-2zM669 353h1v6h-1zM671 353h1v6h-1zM698 353h1v6h-1zM723 353h1v6h-1zM729 353h1v6h-1zM733 353h2v6h-2zM748 353h1v6h-1zM752 353h2v6h-2zM760 353h4v6h-4zM773 353h5v6h-5zM786 353h1v6h-1zM793 353h3v6h-3zM811 353h3v6h-3zM818 353h1v6h-1zM824 353h1v6h-1zM848 353h1v6h-1zM853 353h3v6h-3zM860 353h1v6h-1zM881 353h1v6h-1zM892 353h3v6h-3zM896 353h1v6h-1zM949 353h2v6h-2zM977 353h1v6h-1zM990 353h3v6h-3zM1026 353h2v6h-2zM1087 353h1v6h-1zM87 347h1v6h-1zM89 347h1v6h-1zM96 347h1v6h-1zM107 347h1v6h-1zM121 347h2v6h-2zM125 347h1v6h-1zM127 347h1v6h-1zM130 347h1v6h-1zM149 347h1v6h-1zM152 347h2v6h-2zM198 347h1v6h-1zM208 347h1v6h-1zM212 347h1v6h-1zM214 347h1v6h-1zM217 347h1v6h-1zM223 347h1v6h-1zM269 347h1v6h-1zM311 347h1v6h-1zM314 347h1v6h-1zM332 347h1v6h-1zM412 347h2v6h-2zM444 347h2v6h-2zM450 347h1v6h-1zM482 347h1v6h-1zM506 347h1v6h-1zM511 347h1v6h-1zM515 347h3v6h-3zM521 347h3v6h-3zM526 347h2v6h-2zM531 347h1v6h-1zM538 347h3v6h-3zM559 347h1v6h-1zM566 347h1v6h-1zM605 347h2v6h-2zM644 347h1v6h-1zM647 347h1v6h-1zM654 347h1v6h-1zM665 347h2v6h-2zM669 347h1v6h-1zM671 347h1v6h-1zM677 347h1v6h-1zM718 347h2v6h-2zM733 347h2v6h-2zM742 347h1v6h-1zM745 347h2v6h-2zM757 347h1v6h-1zM775 347h4v6h-4zM783 347h3v6h-3zM792 347h1v6h-1zM794 347h2v6h-2zM811 347h1v6h-1zM824 347h2v6h-2zM848 347h1v6h-1zM852 347h1v6h-1zM856 347h3v6h-3zM861 347h1v6h-1zM886 347h1v6h-1zM894 347h1v6h-1zM896 347h1v6h-1zM899 347h3v6h-3zM937 347h1v6h-1zM940 347h1v6h-1zM943 347h1v6h-1zM953 347h2v6h-2zM967 347h3v6h-3zM979 347h2v6h-2zM1088 347h1v6h-1zM92 341h2v6h-2zM96 341h1v6h-1zM119 341h2v6h-2zM125 341h1v6h-1zM131 341h2v6h-2zM144 341h2v6h-2zM149 341h1v6h-1zM152 341h2v6h-2zM196 341h4v6h-4zM204 341h1v6h-1zM208 341h1v6h-1zM212 341h1v6h-1zM216 341h1v6h-1zM223 341h1v6h-1zM311 341h1v6h-1zM333 341h1v6h-1zM412 341h2v6h-2zM424 341h2v6h-2zM440 341h1v6h-1zM467 341h2v6h-2zM475 341h2v6h-2zM485 341h1v6h-1zM493 341h1v6h-1zM500 341h1v6h-1zM511 341h1v6h-1zM515 341h2v6h-2zM520 341h1v6h-1zM531 341h1v6h-1zM577 341h1v6h-1zM605 341h2v6h-2zM637 341h1v6h-1zM640 341h1v6h-1zM654 341h1v6h-1zM660 341h1v6h-1zM663 341h2v6h-2zM668 341h3v6h-3zM677 341h1v6h-1zM698 341h1v6h-1zM721 341h1v6h-1zM733 341h2v6h-2zM741 341h1v6h-1zM745 341h2v6h-2zM752 341h2v6h-2zM757 341h1v6h-1zM760 341h1v6h-1zM762 341h1v6h-1zM767 341h1v6h-1zM775 341h4v6h-4zM786 341h1v6h-1zM789 341h1v6h-1zM792 341h2v6h-2zM797 341h2v6h-2zM811 341h1v6h-1zM814 341h1v6h-1zM819 341h2v6h-2zM824 341h1v6h-1zM831 341h2v6h-2zM854 341h5v6h-5zM864 341h2v6h-2zM896 341h2v6h-2zM904 341h2v6h-2zM929 341h1v6h-1zM943 341h1v6h-1zM947 341h2v6h-2zM951 341h2v6h-2zM1023 341h2v6h-2zM85 335h2v6h-2zM91 335h1v6h-1zM94 335h2v6h-2zM105 335h1v6h-1zM125 335h1v6h-1zM128 335h2v6h-2zM196 335h1v6h-1zM199 335h1v6h-1zM208 335h1v6h-1zM212 335h1v6h-1zM217 335h1v6h-1zM221 335h3v6h-3zM314 335h1v6h-1zM416 335h1v6h-1zM418 335h1v6h-1zM426 335h2v6h-2zM429 335h1v6h-1zM459 335h2v6h-2zM467 335h2v6h-2zM475 335h2v6h-2zM482 335h1v6h-1zM531 335h1v6h-1zM567 335h1v6h-1zM610 335h1v6h-1zM640 335h1v6h-1zM654 335h1v6h-1zM662 335h5v6h-5zM669 335h1v6h-1zM671 335h3v6h-3zM675 335h2v6h-2zM681 335h1v6h-1zM733 335h2v6h-2zM742 335h1v6h-1zM757 335h1v6h-1zM762 335h1v6h-1zM766 335h1v6h-1zM775 335h1v6h-1zM778 335h1v6h-1zM780 335h3v6h-3zM786 335h5v6h-5zM793 335h4v6h-4zM814 335h1v6h-1zM838 335h1v6h-1zM846 335h1v6h-1zM848 335h1v6h-1zM852 335h1v6h-1zM854 335h2v6h-2zM857 335h2v6h-2zM894 335h1v6h-1zM899 335h2v6h-2zM946 335h1v6h-1zM952 335h1v6h-1zM140 329h1v6h-1zM142 329h1v6h-1zM149 329h3v6h-3zM196 329h1v6h-1zM198 329h2v6h-2zM208 329h1v6h-1zM212 329h3v6h-3zM216 329h1v6h-1zM219 329h1v6h-1zM221 329h3v6h-3zM236 329h1v6h-1zM314 329h1v6h-1zM414 329h1v6h-1zM416 329h1v6h-1zM444 329h2v6h-2zM514 329h1v6h-1zM520 329h3v6h-3zM525 329h1v6h-1zM532 329h1v6h-1zM564 329h1v6h-1zM566 329h1v6h-1zM586 329h2v6h-2zM590 329h1v6h-1zM610 329h1v6h-1zM616 329h2v6h-2zM640 329h1v6h-1zM647 329h1v6h-1zM650 329h1v6h-1zM654 329h1v6h-1zM663 329h4v6h-4zM669 329h1v6h-1zM675 329h2v6h-2zM686 329h1v6h-1zM698 329h1v6h-1zM705 329h2v6h-2zM741 329h2v6h-2zM752 329h2v6h-2zM760 329h1v6h-1zM762 329h2v6h-2zM766 329h1v6h-1zM774 329h1v6h-1zM778 329h2v6h-2zM783 329h1v6h-1zM786 329h1v6h-1zM794 329h2v6h-2zM812 329h2v6h-2zM823 329h1v6h-1zM838 329h1v6h-1zM846 329h1v6h-1zM852 329h1v6h-1zM856 329h1v6h-1zM861 329h1v6h-1zM864 329h2v6h-2zM882 329h1v6h-1zM890 329h2v6h-2zM895 329h1v6h-1zM906 329h1v6h-1zM949 329h2v6h-2zM1022 329h1v6h-1zM85 323h2v6h-2zM89 323h1v6h-1zM119 323h2v6h-2zM123 323h1v6h-1zM127 323h3v6h-3zM195 323h1v6h-1zM199 323h1v6h-1zM204 323h1v6h-1zM208 323h1v6h-1zM212 323h1v6h-1zM215 323h4v6h-4zM225 323h1v6h-1zM236 323h1v6h-1zM268 323h1v6h-1zM314 323h1v6h-1zM367 323h1v6h-1zM401 323h1v6h-1zM418 323h1v6h-1zM429 323h1v6h-1zM465 323h1v6h-1zM478 323h1v6h-1zM520 323h3v6h-3zM524 323h1v6h-1zM531 323h1v6h-1zM541 323h2v6h-2zM556 323h1v6h-1zM565 323h1v6h-1zM567 323h1v6h-1zM586 323h2v6h-2zM628 323h1v6h-1zM637 323h1v6h-1zM641 323h1v6h-1zM650 323h1v6h-1zM654 323h1v6h-1zM665 323h2v6h-2zM669 323h2v6h-2zM678 323h2v6h-2zM686 323h1v6h-1zM698 323h1v6h-1zM732 323h3v6h-3zM752 323h2v6h-2zM761 323h1v6h-1zM763 323h1v6h-1zM768 323h1v6h-1zM775 323h1v6h-1zM779 323h2v6h-2zM783 323h1v6h-1zM786 323h1v6h-1zM788 323h1v6h-1zM809 323h1v6h-1zM857 323h2v6h-2zM860 323h1v6h-1zM864 323h2v6h-2zM876 323h2v6h-2zM894 323h2v6h-2zM899 323h2v6h-2zM909 323h1v6h-1zM952 323h1v6h-1zM955 323h2v6h-2zM1008 323h1v6h-1zM87 316h1v7h-1zM127 316h3v7h-3zM195 316h2v7h-2zM198 316h3v7h-3zM208 316h1v7h-1zM210 316h1v7h-1zM212 316h2v7h-2zM215 316h1v7h-1zM221 316h3v7h-3zM398 316h1v7h-1zM401 316h1v7h-1zM416 316h1v7h-1zM465 316h1v7h-1zM519 316h1v7h-1zM547 316h1v7h-1zM550 316h1v7h-1zM567 316h1v7h-1zM571 316h1v7h-1zM586 316h2v7h-2zM616 316h2v7h-2zM637 316h1v7h-1zM640 316h1v7h-1zM647 316h1v7h-1zM670 316h1v7h-1zM672 316h3v7h-3zM677 316h1v7h-1zM681 316h1v7h-1zM686 316h1v7h-1zM688 316h1v7h-1zM691 316h1v7h-1zM700 316h2v7h-2zM723 316h1v7h-1zM727 316h2v7h-2zM733 316h2v7h-2zM737 316h1v7h-1zM741 316h1v7h-1zM750 316h2v7h-2zM763 316h3v7h-3zM768 316h1v7h-1zM775 316h1v7h-1zM778 316h1v7h-1zM780 316h2v7h-2zM783 316h1v7h-1zM786 316h1v7h-1zM857 316h2v7h-2zM860 316h1v7h-1zM871 316h1v7h-1zM936 316h2v7h-2zM949 316h2v7h-2zM87 371h1v7h-1zM94 371h1v7h-1zM96 371h3v7h-3zM121 371h2v7h-2zM125 371h1v7h-1zM130 371h1v7h-1zM154 371h2v7h-2zM211 371h1v7h-1zM213 371h1v7h-1zM217 371h1v7h-1zM220 371h1v7h-1zM231 371h2v7h-2zM251 371h2v7h-2zM314 371h1v7h-1zM328 371h1v7h-1zM352 371h1v7h-1zM364 371h1v7h-1zM371 371h1v7h-1zM393 371h1v7h-1zM409 371h1v7h-1zM411 371h1v7h-1zM416 371h1v7h-1zM429 371h1v7h-1zM494 371h2v7h-2zM500 371h1v7h-1zM512 371h5v7h-5zM520 371h1v7h-1zM525 371h1v7h-1zM531 371h1v7h-1zM566 371h1v7h-1zM574 371h1v7h-1zM634 371h1v7h-1zM650 371h1v7h-1zM654 371h1v7h-1zM663 371h2v7h-2zM669 371h5v7h-5zM677 371h1v7h-1zM702 371h2v7h-2zM705 371h3v7h-3zM718 371h2v7h-2zM721 371h1v7h-1zM752 371h2v7h-2zM757 371h1v7h-1zM762 371h2v7h-2zM766 371h1v7h-1zM775 371h1v7h-1zM779 371h2v7h-2zM789 371h1v7h-1zM792 371h2v7h-2zM796 371h1v7h-1zM809 371h1v7h-1zM811 371h1v7h-1zM814 371h5v7h-5zM826 371h1v7h-1zM848 371h1v7h-1zM856 371h3v7h-3zM881 371h1v7h-1zM886 371h1v7h-1zM890 371h3v7h-3zM894 371h1v7h-1zM896 371h1v7h-1zM920 371h2v7h-2zM941 371h1v7h-1zM968 371h1v7h-1zM1023 371h2v7h-2zM1027 371h1v7h-1zM1034 371h2v7h-2zM1042 371h1v7h-1zM96 378h1v6h-1zM105 378h2v6h-2zM125 378h1v6h-1zM127 378h1v6h-1zM135 378h2v6h-2zM139 378h1v6h-1zM146 378h1v6h-1zM154 378h1v6h-1zM159 378h1v6h-1zM205 378h2v6h-2zM208 378h1v6h-1zM212 378h2v6h-2zM216 378h1v6h-1zM218 378h2v6h-2zM225 378h2v6h-2zM231 378h2v6h-2zM245 378h1v6h-1zM251 378h2v6h-2zM280 378h1v6h-1zM314 378h1v6h-1zM334 378h1v6h-1zM372 378h1v6h-1zM388 378h1v6h-1zM401 378h1v6h-1zM421 378h2v6h-2zM494 378h2v6h-2zM504 378h1v6h-1zM506 378h1v6h-1zM520 378h3v6h-3zM531 378h1v6h-1zM539 378h2v6h-2zM590 378h1v6h-1zM640 378h1v6h-1zM645 378h2v6h-2zM650 378h1v6h-1zM660 378h1v6h-1zM669 378h1v6h-1zM686 378h1v6h-1zM698 378h1v6h-1zM700 378h4v6h-4zM707 378h1v6h-1zM718 378h2v6h-2zM729 378h1v6h-1zM733 378h2v6h-2zM740 378h1v6h-1zM742 378h1v6h-1zM745 378h2v6h-2zM750 378h2v6h-2zM760 378h1v6h-1zM762 378h1v6h-1zM764 378h2v6h-2zM775 378h1v6h-1zM789 378h1v6h-1zM792 378h4v6h-4zM797 378h2v6h-2zM811 378h1v6h-1zM814 378h3v6h-3zM824 378h1v6h-1zM845 378h1v6h-1zM848 378h1v6h-1zM852 378h2v6h-2zM857 378h2v6h-2zM864 378h4v6h-4zM879 378h2v6h-2zM886 378h1v6h-1zM892 378h4v6h-4zM911 378h1v6h-1zM914 378h2v6h-2zM920 378h2v6h-2zM924 378h1v6h-1zM949 378h2v6h-2zM969 378h2v6h-2zM983 378h1v6h-1zM1007 378h1v6h-1zM1018 378h1v6h-1zM1022 378h1v6h-1zM1025 378h3v6h-3zM1050 378h1v6h-1zM1054 378h1v6h-1zM91 384h1v6h-1zM99 384h2v6h-2zM107 384h2v6h-2zM115 384h1v6h-1zM124 384h2v6h-2zM128 384h2v6h-2zM131 384h3v6h-3zM135 384h3v6h-3zM143 384h1v6h-1zM208 384h2v6h-2zM212 384h2v6h-2zM215 384h1v6h-1zM225 384h1v6h-1zM231 384h2v6h-2zM236 384h2v6h-2zM293 384h1v6h-1zM311 384h1v6h-1zM360 384h1v6h-1zM362 384h2v6h-2zM374 384h1v6h-1zM388 384h1v6h-1zM405 384h1v6h-1zM416 384h1v6h-1zM511 384h1v6h-1zM521 384h2v6h-2zM556 384h1v6h-1zM566 384h1v6h-1zM637 384h1v6h-1zM640 384h1v6h-1zM644 384h1v6h-1zM663 384h4v6h-4zM669 384h1v6h-1zM671 384h3v6h-3zM675 384h2v6h-2zM687 384h1v6h-1zM692 384h1v6h-1zM694 384h2v6h-2zM698 384h1v6h-1zM700 384h2v6h-2zM721 384h1v6h-1zM723 384h1v6h-1zM727 384h2v6h-2zM733 384h2v6h-2zM764 384h2v6h-2zM781 384h2v6h-2zM786 384h1v6h-1zM788 384h1v6h-1zM792 384h2v6h-2zM796 384h3v6h-3zM814 384h3v6h-3zM824 384h1v6h-1zM845 384h1v6h-1zM848 384h1v6h-1zM852 384h1v6h-1zM854 384h2v6h-2zM861 384h1v6h-1zM864 384h2v6h-2zM882 384h1v6h-1zM889 384h6v6h-6zM912 384h2v6h-2zM918 384h1v6h-1zM924 384h1v6h-1zM944 384h5v6h-5zM979 384h2v6h-2zM985 384h1v6h-1zM1025 384h5v6h-5zM1036 384h1v6h-1zM1086 384h1v6h-1zM92 390h2v6h-2zM96 390h1v6h-1zM115 390h2v6h-2zM123 390h1v6h-1zM125 390h1v6h-1zM127 390h1v6h-1zM144 390h2v6h-2zM154 390h1v6h-1zM212 390h2v6h-2zM217 390h2v6h-2zM223 390h1v6h-1zM225 390h1v6h-1zM228 390h1v6h-1zM231 390h2v6h-2zM236 390h2v6h-2zM244 390h1v6h-1zM246 390h1v6h-1zM282 390h2v6h-2zM293 390h1v6h-1zM311 390h1v6h-1zM314 390h1v6h-1zM318 390h1v6h-1zM346 390h2v6h-2zM383 390h1v6h-1zM387 390h1v6h-1zM389 390h2v6h-2zM401 390h1v6h-1zM409 390h1v6h-1zM416 390h1v6h-1zM493 390h1v6h-1zM512 390h1v6h-1zM515 390h2v6h-2zM523 390h1v6h-1zM539 390h2v6h-2zM577 390h1v6h-1zM610 390h1v6h-1zM637 390h1v6h-1zM654 390h1v6h-1zM660 390h1v6h-1zM665 390h1v6h-1zM669 390h1v6h-1zM672 390h2v6h-2zM681 390h1v6h-1zM700 390h2v6h-2zM704 390h6v6h-6zM717 390h3v6h-3zM723 390h1v6h-1zM733 390h2v6h-2zM742 390h1v6h-1zM747 390h1v6h-1zM762 390h1v6h-1zM775 390h1v6h-1zM783 390h1v6h-1zM788 390h1v6h-1zM790 390h1v6h-1zM792 390h1v6h-1zM794 390h3v6h-3zM802 390h2v6h-2zM811 390h7v6h-7zM824 390h1v6h-1zM826 390h1v6h-1zM837 390h1v6h-1zM849 390h1v6h-1zM851 390h2v6h-2zM854 390h1v6h-1zM864 390h2v6h-2zM874 390h2v6h-2zM883 390h3v6h-3zM888 390h1v6h-1zM890 390h3v6h-3zM909 390h3v6h-3zM920 390h2v6h-2zM946 390h3v6h-3zM980 390h1v6h-1zM983 390h1v6h-1zM1025 390h5v6h-5zM94 414h2v6h-2zM99 414h2v6h-2zM102 414h2v6h-2zM107 414h2v6h-2zM115 414h1v6h-1zM127 414h7v6h-7zM139 414h1v6h-1zM147 414h2v6h-2zM150 414h2v6h-2zM157 414h1v6h-1zM159 414h1v6h-1zM164 414h2v6h-2zM231 414h2v6h-2zM280 414h2v6h-2zM287 414h1v6h-1zM297 414h2v6h-2zM311 414h1v6h-1zM313 414h2v6h-2zM316 414h1v6h-1zM319 414h1v6h-1zM330 414h1v6h-1zM332 414h1v6h-1zM335 414h1v6h-1zM338 414h1v6h-1zM344 414h4v6h-4zM350 414h1v6h-1zM362 414h4v6h-4zM367 414h1v6h-1zM371 414h1v6h-1zM374 414h1v6h-1zM378 414h1v6h-1zM380 414h1v6h-1zM383 414h1v6h-1zM398 414h4v6h-4zM405 414h1v6h-1zM407 414h2v6h-2zM416 414h1v6h-1zM496 414h1v6h-1zM520 414h3v6h-3zM537 414h1v6h-1zM539 414h4v6h-4zM546 414h2v6h-2zM551 414h1v6h-1zM639 414h2v6h-2zM660 414h1v6h-1zM712 414h2v6h-2zM718 414h3v6h-3zM723 414h1v6h-1zM727 414h2v6h-2zM732 414h3v6h-3zM737 414h1v6h-1zM763 414h1v6h-1zM766 414h1v6h-1zM773 414h3v6h-3zM779 414h2v6h-2zM783 414h1v6h-1zM796 414h3v6h-3zM811 414h3v6h-3zM837 414h2v6h-2zM856 414h1v6h-1zM860 414h1v6h-1zM864 414h5v6h-5zM874 414h2v6h-2zM885 414h3v6h-3zM909 414h1v6h-1zM911 414h1v6h-1zM914 414h2v6h-2zM918 414h2v6h-2zM932 414h1v6h-1zM989 414h4v6h-4zM994 414h2v6h-2zM1025 414h2v6h-2zM1036 414h1v6h-1zM1054 414h1v6h-1zM1083 414h1v6h-1zM1087 414h3v6h-3zM94 408h3v6h-3zM101 408h1v6h-1zM115 408h2v6h-2zM120 408h1v6h-1zM130 408h4v6h-4zM139 408h1v6h-1zM143 408h1v6h-1zM146 408h1v6h-1zM148 408h1v6h-1zM154 408h1v6h-1zM161 408h1v6h-1zM231 408h2v6h-2zM236 408h2v6h-2zM239 408h2v6h-2zM244 408h1v6h-1zM247 408h1v6h-1zM290 408h1v6h-1zM314 408h1v6h-1zM330 408h3v6h-3zM336 408h3v6h-3zM344 408h2v6h-2zM360 408h1v6h-1zM371 408h1v6h-1zM374 408h1v6h-1zM377 408h1v6h-1zM401 408h1v6h-1zM405 408h1v6h-1zM421 408h1v6h-1zM504 408h1v6h-1zM506 408h1v6h-1zM537 408h4v6h-4zM543 408h1v6h-1zM641 408h1v6h-1zM660 408h1v6h-1zM662 408h1v6h-1zM680 408h1v6h-1zM710 408h1v6h-1zM718 408h2v6h-2zM721 408h1v6h-1zM723 408h1v6h-1zM729 408h3v6h-3zM733 408h2v6h-2zM739 408h2v6h-2zM762 408h4v6h-4zM775 408h1v6h-1zM783 408h1v6h-1zM786 408h1v6h-1zM794 408h3v6h-3zM807 408h2v6h-2zM811 408h3v6h-3zM842 408h1v6h-1zM850 408h1v6h-1zM856 408h1v6h-1zM876 408h2v6h-2zM879 408h3v6h-3zM886 408h1v6h-1zM918 408h2v6h-2zM924 408h1v6h-1zM936 408h2v6h-2zM981 408h1v6h-1zM983 408h1v6h-1zM985 408h1v6h-1zM988 408h1v6h-1zM999 408h1v6h-1zM1018 408h1v6h-1zM1025 408h5v6h-5zM1036 408h1v6h-1zM1044 408h2v6h-2zM1083 408h1v6h-1zM1090 408h1v6h-1zM96 402h1v6h-1zM115 402h1v6h-1zM125 402h2v6h-2zM131 402h2v6h-2zM140 402h1v6h-1zM161 402h2v6h-2zM242 402h1v6h-1zM247 402h2v6h-2zM289 402h1v6h-1zM297 402h2v6h-2zM314 402h1v6h-1zM355 402h1v6h-1zM371 402h1v6h-1zM374 402h2v6h-2zM380 402h1v6h-1zM383 402h1v6h-1zM386 402h1v6h-1zM398 402h1v6h-1zM406 402h1v6h-1zM416 402h2v6h-2zM505 402h2v6h-2zM520 402h1v6h-1zM523 402h1v6h-1zM526 402h2v6h-2zM538 402h6v6h-6zM574 402h1v6h-1zM586 402h2v6h-2zM616 402h2v6h-2zM643 402h1v6h-1zM648 402h1v6h-1zM650 402h1v6h-1zM654 402h1v6h-1zM660 402h1v6h-1zM665 402h1v6h-1zM678 402h2v6h-2zM681 402h1v6h-1zM705 402h5v6h-5zM729 402h3v6h-3zM733 402h2v6h-2zM762 402h1v6h-1zM764 402h3v6h-3zM773 402h2v6h-2zM779 402h2v6h-2zM786 402h1v6h-1zM793 402h3v6h-3zM797 402h2v6h-2zM807 402h2v6h-2zM811 402h3v6h-3zM829 402h1v6h-1zM839 402h1v6h-1zM848 402h1v6h-1zM851 402h3v6h-3zM856 402h1v6h-1zM863 402h1v6h-1zM876 402h2v6h-2zM881 402h2v6h-2zM886 402h1v6h-1zM889 402h3v6h-3zM909 402h1v6h-1zM981 402h1v6h-1zM1027 402h1v6h-1zM1036 402h1v6h-1zM1081 402h3v6h-3zM1086 402h3v6h-3zM94 396h3v6h-3zM99 396h2v6h-2zM109 396h1v6h-1zM115 396h2v6h-2zM120 396h1v6h-1zM125 396h1v6h-1zM135 396h3v6h-3zM142 396h1v6h-1zM161 396h3v6h-3zM213 396h1v6h-1zM217 396h1v6h-1zM223 396h3v6h-3zM227 396h1v6h-1zM231 396h2v6h-2zM236 396h2v6h-2zM286 396h1v6h-1zM313 396h1v6h-1zM320 396h1v6h-1zM372 396h1v6h-1zM383 396h1v6h-1zM387 396h2v6h-2zM401 396h1v6h-1zM406 396h1v6h-1zM409 396h3v6h-3zM416 396h1v6h-1zM421 396h1v6h-1zM511 396h1v6h-1zM517 396h1v6h-1zM520 396h3v6h-3zM525 396h1v6h-1zM530 396h1v6h-1zM538 396h1v6h-1zM610 396h1v6h-1zM640 396h1v6h-1zM661 396h1v6h-1zM669 396h1v6h-1zM672 396h3v6h-3zM677 396h3v6h-3zM687 396h1v6h-1zM717 396h3v6h-3zM729 396h1v6h-1zM733 396h2v6h-2zM745 396h3v6h-3zM750 396h4v6h-4zM762 396h1v6h-1zM767 396h1v6h-1zM781 396h2v6h-2zM788 396h3v6h-3zM796 396h1v6h-1zM811 396h1v6h-1zM829 396h1v6h-1zM847 396h2v6h-2zM864 396h2v6h-2zM876 396h2v6h-2zM883 396h2v6h-2zM886 396h1v6h-1zM889 396h3v6h-3zM911 396h1v6h-1zM920 396h2v6h-2zM924 396h1v6h-1zM933 396h3v6h-3zM937 396h1v6h-1zM940 396h1v6h-1zM943 396h1v6h-1zM979 396h1v6h-1zM982 396h1v6h-1zM991 396h2v6h-2zM1018 396h1v6h-1zM1025 396h3v6h-3zM1034 396h2v6h-2zM1044 396h2v6h-2zM1087 396h1v6h-1zM1089 396h1v6h-1zM96 420h1v7h-1zM99 420h2v7h-2zM115 420h1v7h-1zM119 420h2v7h-2zM133 420h1v7h-1zM139 420h1v7h-1zM148 420h4v7h-4zM158 420h2v7h-2zM162 420h2v7h-2zM231 420h2v7h-2zM286 420h1v7h-1zM297 420h2v7h-2zM304 420h1v7h-1zM309 420h1v7h-1zM318 420h1v7h-1zM321 420h1v7h-1zM333 420h1v7h-1zM341 420h2v7h-2zM346 420h2v7h-2zM358 420h3v7h-3zM362 420h2v7h-2zM367 420h1v7h-1zM370 420h2v7h-2zM401 420h1v7h-1zM421 420h1v7h-1zM493 420h1v7h-1zM496 420h1v7h-1zM500 420h1v7h-1zM520 420h1v7h-1zM523 420h1v7h-1zM538 420h5v7h-5zM550 420h1v7h-1zM640 420h1v7h-1zM645 420h2v7h-2zM660 420h1v7h-1zM718 420h4v7h-4zM723 420h3v7h-3zM727 420h5v7h-5zM733 420h2v7h-2zM739 420h1v7h-1zM764 420h3v7h-3zM768 420h2v7h-2zM771 420h2v7h-2zM775 420h2v7h-2zM779 420h2v7h-2zM796 420h1v7h-1zM809 420h1v7h-1zM811 420h1v7h-1zM840 420h1v7h-1zM854 420h2v7h-2zM857 420h2v7h-2zM866 420h3v7h-3zM873 420h3v7h-3zM879 420h4v7h-4zM909 420h3v7h-3zM914 420h2v7h-2zM924 420h1v7h-1zM932 420h1v7h-1zM937 420h1v7h-1zM991 420h2v7h-2zM999 420h1v7h-1zM1007 420h1v7h-1zM1027 420h3v7h-3zM1031 420h1v7h-1zM1044 420h3v7h-3zM1084 420h1v7h-1zM1086 420h1v7h-1zM1088 420h1v7h-1zM102 427h2v6h-2zM107 427h2v6h-2zM116 427h1v6h-1zM231 427h2v6h-2zM236 427h2v6h-2zM247 427h1v6h-1zM297 427h2v6h-2zM300 427h2v6h-2zM311 427h1v6h-1zM320 427h1v6h-1zM334 427h1v6h-1zM338 427h1v6h-1zM361 427h5v6h-5zM409 427h1v6h-1zM412 427h2v6h-2zM493 427h1v6h-1zM521 427h3v6h-3zM541 427h3v6h-3zM562 427h1v6h-1zM567 427h1v6h-1zM574 427h1v6h-1zM576 427h1v6h-1zM586 427h2v6h-2zM589 427h1v6h-1zM598 427h2v6h-2zM608 427h1v6h-1zM610 427h1v6h-1zM618 427h2v6h-2zM624 427h1v6h-1zM631 427h1v6h-1zM640 427h1v6h-1zM644 427h1v6h-1zM647 427h1v6h-1zM721 427h1v6h-1zM733 427h2v6h-2zM768 427h1v6h-1zM770 427h1v6h-1zM775 427h2v6h-2zM807 427h3v6h-3zM837 427h1v6h-1zM839 427h1v6h-1zM842 427h1v6h-1zM860 427h1v6h-1zM864 427h2v6h-2zM868 427h1v6h-1zM874 427h2v6h-2zM878 427h1v6h-1zM907 427h2v6h-2zM911 427h5v6h-5zM1000 427h1v6h-1zM1007 427h1v6h-1zM1025 427h3v6h-3zM1036 427h1v6h-1zM1041 427h1v6h-1zM1046 427h1v6h-1zM1063 427h1v6h-1zM1080 427h1v6h-1zM1086 427h3v6h-3zM105 439h2v6h-2zM247 439h1v6h-1zM250 439h1v6h-1zM338 439h1v6h-1zM343 439h1v6h-1zM409 439h1v6h-1zM413 439h1v6h-1zM420 439h1v6h-1zM493 439h1v6h-1zM499 439h1v6h-1zM525 439h1v6h-1zM547 439h1v6h-1zM550 439h1v6h-1zM581 439h2v6h-2zM585 439h3v6h-3zM590 439h1v6h-1zM605 439h2v6h-2zM608 439h1v6h-1zM610 439h3v6h-3zM634 439h1v6h-1zM637 439h1v6h-1zM641 439h1v6h-1zM643 439h1v6h-1zM805 439h2v6h-2zM837 439h2v6h-2zM857 439h2v6h-2zM861 439h1v6h-1zM863 439h3v6h-3zM911 439h6v6h-6zM924 439h1v6h-1zM928 439h1v6h-1zM1018 439h1v6h-1zM1022 439h3v6h-3zM1078 439h2v6h-2zM1084 439h1v6h-1zM104 433h1v6h-1zM110 433h2v6h-2zM236 433h2v6h-2zM245 433h1v6h-1zM250 433h1v6h-1zM313 433h3v6h-3zM318 433h1v6h-1zM336 433h3v6h-3zM344 433h2v6h-2zM410 433h2v6h-2zM423 433h1v6h-1zM525 433h1v6h-1zM547 433h1v6h-1zM556 433h1v6h-1zM561 433h1v6h-1zM567 433h1v6h-1zM571 433h4v6h-4zM577 433h1v6h-1zM579 433h2v6h-2zM586 433h2v6h-2zM590 433h1v6h-1zM608 433h1v6h-1zM610 433h1v6h-1zM616 433h4v6h-4zM628 433h1v6h-1zM634 433h1v6h-1zM637 433h1v6h-1zM640 433h1v6h-1zM643 433h1v6h-1zM770 433h1v6h-1zM799 433h1v6h-1zM807 433h3v6h-3zM837 433h2v6h-2zM841 433h1v6h-1zM857 433h2v6h-2zM864 433h5v6h-5zM907 433h3v6h-3zM911 433h1v6h-1zM918 433h2v6h-2zM924 433h1v6h-1zM1016 433h3v6h-3zM1020 433h2v6h-2zM1027 433h4v6h-4zM1032 433h2v6h-2zM1036 433h1v6h-1zM1083 433h1v6h-1zM421 445h1v6h-1zM423 445h3v6h-3zM439 445h1v6h-1zM444 445h2v6h-2zM493 445h1v6h-1zM500 445h3v6h-3zM589 445h2v6h-2zM593 445h1v6h-1zM596 445h1v6h-1zM598 445h2v6h-2zM605 445h2v6h-2zM608 445h1v6h-1zM610 445h3v6h-3zM638 445h1v6h-1zM802 445h2v6h-2zM838 445h1v6h-1zM841 445h1v6h-1zM861 445h1v6h-1zM864 445h2v6h-2zM868 445h1v6h-1zM909 445h1v6h-1zM912 445h2v6h-2zM915 445h2v6h-2zM918 445h2v6h-2zM924 445h1v6h-1zM1080 445h1v6h-1zM1083 445h1v6h-1zM118 310h1v6h-1zM128 310h2v6h-2zM142 310h1v6h-1zM144 310h2v6h-2zM208 310h1v6h-1zM212 310h1v6h-1zM216 310h1v6h-1zM218 310h1v6h-1zM223 310h1v6h-1zM401 310h1v6h-1zM415 310h2v6h-2zM514 310h3v6h-3zM520 310h1v6h-1zM548 310h2v6h-2zM625 310h2v6h-2zM640 310h1v6h-1zM647 310h1v6h-1zM650 310h1v6h-1zM686 310h1v6h-1zM688 310h1v6h-1zM705 310h2v6h-2zM718 310h2v6h-2zM723 310h3v6h-3zM730 310h2v6h-2zM733 310h2v6h-2zM758 310h5v6h-5zM764 310h3v6h-3zM775 310h4v6h-4zM780 310h3v6h-3zM854 310h5v6h-5zM874 310h2v6h-2zM889 310h2v6h-2zM895 310h2v6h-2zM899 310h2v6h-2zM953 310h2v6h-2zM1007 310h1v6h-1zM140 304h1v6h-1zM142 304h1v6h-1zM204 304h1v6h-1zM208 304h1v6h-1zM212 304h2v6h-2zM217 304h1v6h-1zM462 304h1v6h-1zM547 304h1v6h-1zM574 304h1v6h-1zM623 304h1v6h-1zM644 304h1v6h-1zM647 304h1v6h-1zM692 304h1v6h-1zM705 304h2v6h-2zM712 304h3v6h-3zM720 304h1v6h-1zM724 304h2v6h-2zM730 304h3v6h-3zM764 304h2v6h-2zM775 304h1v6h-1zM778 304h4v6h-4zM783 304h3v6h-3zM857 304h2v6h-2zM867 304h1v6h-1zM873 304h1v6h-1zM888 304h1v6h-1zM891 304h2v6h-2zM894 304h1v6h-1zM896 304h1v6h-1zM907 304h4v6h-4zM946 304h6v6h-6zM953 304h2v6h-2zM957 304h2v6h-2zM999 304h1v6h-1zM144 298h2v6h-2zM186 298h1v6h-1zM204 298h1v6h-1zM212 298h1v6h-1zM463 298h2v6h-2zM704 298h4v6h-4zM716 298h1v6h-1zM766 298h1v6h-1zM775 298h3v6h-3zM779 298h3v6h-3zM862 298h1v6h-1zM894 298h1v6h-1zM899 298h2v6h-2zM949 298h2v6h-2zM185 292h1v6h-1zM188 292h2v6h-2zM204 292h1v6h-1zM208 292h1v6h-1zM543 292h1v6h-1zM680 292h2v6h-2zM685 292h1v6h-1zM694 292h2v6h-2zM707 292h3v6h-3zM718 292h2v6h-2zM779 292h1v6h-1zM861 292h2v6h-2zM887 292h1v6h-1zM889 292h1v6h-1zM894 292h1v6h-1zM897 292h1v6h-1zM899 292h2v6h-2zM909 292h1v6h-1zM916 292h1v6h-1zM181 286h2v6h-2zM184 286h2v6h-2zM188 286h3v6h-3zM206 286h1v6h-1zM208 286h3v6h-3zM718 286h2v6h-2zM779 286h1v6h-1zM782 286h2v6h-2zM861 286h1v6h-1zM889 286h1v6h-1zM891 286h2v6h-2zM896 286h1v6h-1zM898 286h3v6h-3zM907 286h1v6h-1zM909 286h1v6h-1zM913 286h2v6h-2zM432 243h1v6h-1zM784 243h2v6h-2zM871 243h1v6h-1zM887 243h1v6h-1zM785 237h1v6h-1zM864 237h5v6h-5zM871 237h1v6h-1zM890 237h1v6h-1zM521 231h1v6h-1zM782 231h2v6h-2zM861 231h1v6h-1zM865 231h4v6h-4zM197 249h2v6h-2zM202 249h2v6h-2zM534 249h1v6h-1zM782 249h2v6h-2zM785 249h1v6h-1zM861 249h1v6h-1zM863 249h1v6h-1zM865 249h2v6h-2zM871 249h1v6h-1zM890 249h1v6h-1zM521 225h1v6h-1zM784 225h2v6h-2zM870 225h2v6h-2zM887 225h1v6h-1zM891 225h2v6h-2zM521 218h1v7h-1zM523 218h1v7h-1zM782 218h2v7h-2zM871 218h1v7h-1zM700 261h2v6h-2zM780 261h2v6h-2zM784 261h1v6h-1zM887 261h4v6h-4zM920 261h1v6h-1zM177 255h1v6h-1zM202 255h2v6h-2zM533 255h1v6h-1zM704 255h1v6h-1zM769 255h1v6h-1zM785 255h1v6h-1zM870 255h1v6h-1zM891 255h2v6h-2zM899 255h2v6h-2zM178 274h3v6h-3zM183 274h4v6h-4zM188 274h2v6h-2zM198 274h1v6h-1zM202 274h2v6h-2zM769 274h1v6h-1zM778 274h1v6h-1zM782 274h2v6h-2zM861 274h3v6h-3zM891 274h2v6h-2zM896 274h2v6h-2zM899 274h2v6h-2zM910 274h1v6h-1zM916 274h1v6h-1zM920 274h1v6h-1zM184 267h3v7h-3zM198 267h1v7h-1zM779 267h3v7h-3zM784 267h1v7h-1zM862 267h1v7h-1zM867 267h1v7h-1zM887 267h1v7h-1zM889 267h1v7h-1zM891 267h2v7h-2zM896 267h1v7h-1zM910 267h1v7h-1zM920 267h2v7h-2zM180 280h1v6h-1zM183 280h2v6h-2zM188 280h2v6h-2zM680 280h2v6h-2zM684 280h1v6h-1zM697 280h1v6h-1zM780 280h4v6h-4zM861 280h1v6h-1zM865 280h3v6h-3zM888 280h1v6h-1zM894 280h1v6h-1zM897 280h1v6h-1zM899 280h2v6h-2zM907 280h1v6h-1zM916 280h1v6h-1zM919 280h1v6h-1zM436 451h2v6h-2zM439 451h1v6h-1zM458 451h1v6h-1zM467 451h2v6h-2zM475 451h2v6h-2zM501 451h2v6h-2zM590 451h1v6h-1zM909 451h1v6h-1zM914 451h1v6h-1zM918 451h2v6h-2zM921 451h1v6h-1zM475 457h3v6h-3zM483 457h1v6h-1zM485 457h1v6h-1zM489 457h1v6h-1zM491 457h1v6h-1zM465 463h1v6h-1zM467 463h2v6h-2zM474 463h3v6h-3zM482 463h1v6h-1zM493 463h3v6h-3zM500 463h1v6h-1zM597 463h3v6h-3zM512 212h1v6h-1zM521 212h1v6h-1zM784 212h2v6h-2zM789 212h1v6h-1zM512 206h1v6h-1zM514 206h1v6h-1zM519 206h1v6h-1zM784 206h1v6h-1zM789 206h1v6h-1zM508 200h1v6h-1zM514 200h1v6h-1zM784 200h2v6h-2zM789 200h1v6h-1zM510 194h1v6h-1zM784 194h1v6h-1zM789 194h2v6h-2zM364 188h1v6h-1zM506 188h1v6h-1zM508 188h3v6h-3zM513 188h1v6h-1zM789 188h1v6h-1zM785 182h1v6h-1zM790 182h1v6h-1zM535 90h2v6h-2zM535 84h1v6h-1zM535 65h2v7h-2zM539 78h1v6h-1zM537 108h1v6h-1zM547 108h1v6h-1zM537 96h1v6h-1zM869 96h1v6h-1zM538 114h1v7h-1zM482 139h1v6h-1zM497 139h1v6h-1zM535 170h1v6h-1zM482 133h2v6h-2zM227 476h1v6h-1zM229 476h2v6h-2zM477 476h1v6h-1zM800 476h1v6h-1zM996 476h1v6h-1zM198 488h1v6h-1zM228 488h1v6h-1zM230 488h1v6h-1zM235 488h1v6h-1zM244 488h1v6h-1zM250 488h1v6h-1zM520 488h1v6h-1zM648 488h1v6h-1zM672 488h1v6h-1zM676 488h1v6h-1zM719 488h1v6h-1zM851 488h1v6h-1zM229 494h1v6h-1zM236 494h1v6h-1zM244 494h1v6h-1zM409 494h1v6h-1zM466 494h1v6h-1zM756 494h1v6h-1zM809 494h1v6h-1zM911 494h1v6h-1zM224 469h1v7h-1zM230 469h1v7h-1zM244 469h1v7h-1zM227 482h1v6h-1zM243 482h1v6h-1zM250 482h1v6h-1zM534 482h1v6h-1zM649 482h1v6h-1zM966 482h1v6h-1z"/>
<path fill="#005aff" d="M101 365h1v6h-1zM104 365h1v6h-1zM107 365h2v6h-2zM157 365h1v6h-1zM200 365h1v6h-1zM209 365h1v6h-1zM221 365h2v6h-2zM224 365h1v6h-1zM256 365h1v6h-1zM330 365h1v6h-1zM333 365h1v6h-1zM348 365h1v6h-1zM382 365h1v6h-1zM399 365h2v6h-2zM417 365h1v6h-1zM444 365h2v6h-2zM450 365h1v6h-1zM511 365h2v6h-2zM537 365h2v6h-2zM586 365h2v6h-2zM623 365h1v6h-1zM637 365h1v6h-1zM649 365h2v6h-2zM670 365h1v6h-1zM675 365h2v6h-2zM688 365h1v6h-1zM729 365h1v6h-1zM760 365h1v6h-1zM763 365h1v6h-1zM767 365h2v6h-2zM773 365h2v6h-2zM781 365h2v6h-2zM796 365h1v6h-1zM837 365h2v6h-2zM841 365h1v6h-1zM879 365h2v6h-2zM929 365h1v6h-1zM943 365h1v6h-1zM967 365h2v6h-2zM982 365h1v6h-1zM1088 365h1v6h-1zM92 359h2v6h-2zM110 359h1v6h-1zM113 359h2v6h-2zM121 359h2v6h-2zM124 359h1v6h-1zM152 359h2v6h-2zM217 359h1v6h-1zM245 359h1v6h-1zM249 359h2v6h-2zM255 359h1v6h-1zM314 359h1v6h-1zM332 359h1v6h-1zM350 359h1v6h-1zM417 359h1v6h-1zM491 359h1v6h-1zM505 359h1v6h-1zM525 359h1v6h-1zM537 359h1v6h-1zM567 359h1v6h-1zM601 359h2v6h-2zM631 359h1v6h-1zM634 359h1v6h-1zM637 359h1v6h-1zM641 359h1v6h-1zM645 359h2v6h-2zM681 359h1v6h-1zM707 359h1v6h-1zM723 359h1v6h-1zM732 359h1v6h-1zM745 359h3v6h-3zM788 359h1v6h-1zM801 359h3v6h-3zM815 359h3v6h-3zM825 359h1v6h-1zM845 359h1v6h-1zM857 359h2v6h-2zM861 359h1v6h-1zM883 359h2v6h-2zM888 359h1v6h-1zM897 359h1v6h-1zM936 359h1v6h-1zM941 359h1v6h-1zM970 359h2v6h-2zM981 359h1v6h-1zM988 359h2v6h-2zM991 359h2v6h-2zM1007 359h1v6h-1zM1022 359h1v6h-1zM1028 359h1v6h-1zM1086 359h2v6h-2zM1090 359h1v6h-1zM88 353h1v6h-1zM124 353h2v6h-2zM133 353h1v6h-1zM149 353h1v6h-1zM207 353h1v6h-1zM218 353h1v6h-1zM245 353h1v6h-1zM251 353h2v6h-2zM414 353h1v6h-1zM416 353h1v6h-1zM520 353h1v6h-1zM526 353h2v6h-2zM539 353h2v6h-2zM565 353h2v6h-2zM588 353h1v6h-1zM605 353h2v6h-2zM610 353h1v6h-1zM642 353h1v6h-1zM661 353h2v6h-2zM680 353h1v6h-1zM694 353h2v6h-2zM707 353h1v6h-1zM711 353h1v6h-1zM720 353h1v6h-1zM750 353h2v6h-2zM779 353h2v6h-2zM784 353h2v6h-2zM797 353h2v6h-2zM807 353h2v6h-2zM825 353h1v6h-1zM829 353h1v6h-1zM866 353h2v6h-2zM887 353h1v6h-1zM981 353h1v6h-1zM988 353h2v6h-2zM1022 353h1v6h-1zM1028 353h1v6h-1zM88 347h1v6h-1zM90 347h1v6h-1zM123 347h2v6h-2zM142 347h2v6h-2zM199 347h1v6h-1zM206 347h2v6h-2zM308 347h2v6h-2zM333 347h2v6h-2zM416 347h1v6h-1zM422 347h1v6h-1zM442 347h2v6h-2zM451 347h1v6h-1zM461 347h2v6h-2zM465 347h1v6h-1zM485 347h1v6h-1zM532 347h1v6h-1zM571 347h1v6h-1zM631 347h1v6h-1zM637 347h2v6h-2zM648 347h1v6h-1zM650 347h1v6h-1zM660 347h1v6h-1zM680 347h1v6h-1zM707 347h1v6h-1zM730 347h2v6h-2zM740 347h1v6h-1zM743 347h2v6h-2zM752 347h2v6h-2zM760 347h1v6h-1zM762 347h2v6h-2zM766 347h1v6h-1zM779 347h2v6h-2zM796 347h1v6h-1zM805 347h4v6h-4zM826 347h1v6h-1zM844 347h1v6h-1zM851 347h1v6h-1zM860 347h1v6h-1zM864 347h5v6h-5zM872 347h1v6h-1zM874 347h2v6h-2zM887 347h1v6h-1zM928 347h1v6h-1zM938 347h2v6h-2zM985 347h1v6h-1zM1023 347h5v6h-5zM201 341h1v6h-1zM210 341h1v6h-1zM215 341h1v6h-1zM253 341h2v6h-2zM314 341h1v6h-1zM336 341h2v6h-2zM368 341h1v6h-1zM398 341h1v6h-1zM403 341h1v6h-1zM437 341h1v6h-1zM474 341h1v6h-1zM482 341h3v6h-3zM492 341h1v6h-1zM496 341h1v6h-1zM525 341h1v6h-1zM536 341h1v6h-1zM539 341h2v6h-2zM543 341h1v6h-1zM565 341h1v6h-1zM567 341h1v6h-1zM613 341h1v6h-1zM624 341h1v6h-1zM639 341h1v6h-1zM644 341h1v6h-1zM650 341h1v6h-1zM692 341h1v6h-1zM712 341h2v6h-2zM742 341h1v6h-1zM750 341h2v6h-2zM768 341h1v6h-1zM787 341h1v6h-1zM791 341h1v6h-1zM794 341h2v6h-2zM799 341h1v6h-1zM802 341h2v6h-2zM807 341h2v6h-2zM835 341h3v6h-3zM841 341h1v6h-1zM848 341h2v6h-2zM869 341h1v6h-1zM887 341h1v6h-1zM894 341h1v6h-1zM898 341h1v6h-1zM970 341h1v6h-1zM983 341h1v6h-1zM88 335h2v6h-2zM97 335h2v6h-2zM110 335h1v6h-1zM119 335h2v6h-2zM124 335h1v6h-1zM126 335h1v6h-1zM146 335h1v6h-1zM198 335h1v6h-1zM214 335h1v6h-1zM233 335h1v6h-1zM262 335h1v6h-1zM398 335h1v6h-1zM434 335h2v6h-2zM444 335h2v6h-2zM491 335h2v6h-2zM521 335h2v6h-2zM530 335h1v6h-1zM546 335h1v6h-1zM571 335h1v6h-1zM598 335h2v6h-2zM608 335h1v6h-1zM625 335h2v6h-2zM637 335h1v6h-1zM641 335h1v6h-1zM643 335h1v6h-1zM650 335h1v6h-1zM668 335h1v6h-1zM678 335h2v6h-2zM688 335h1v6h-1zM714 335h1v6h-1zM739 335h1v6h-1zM748 335h1v6h-1zM761 335h1v6h-1zM807 335h2v6h-2zM835 335h3v6h-3zM845 335h1v6h-1zM849 335h1v6h-1zM856 335h1v6h-1zM862 335h1v6h-1zM871 335h1v6h-1zM883 335h2v6h-2zM888 335h2v6h-2zM1007 335h1v6h-1zM1016 335h3v6h-3zM91 329h1v6h-1zM125 329h2v6h-2zM130 329h1v6h-1zM141 329h1v6h-1zM146 329h1v6h-1zM200 329h1v6h-1zM206 329h1v6h-1zM224 329h1v6h-1zM256 329h3v6h-3zM398 329h1v6h-1zM401 329h1v6h-1zM403 329h1v6h-1zM478 329h1v6h-1zM523 329h1v6h-1zM550 329h1v6h-1zM556 329h1v6h-1zM562 329h1v6h-1zM567 329h1v6h-1zM596 329h1v6h-1zM638 329h1v6h-1zM643 329h1v6h-1zM678 329h2v6h-2zM692 329h1v6h-1zM700 329h2v6h-2zM707 329h1v6h-1zM718 329h2v6h-2zM730 329h2v6h-2zM739 329h1v6h-1zM764 329h2v6h-2zM781 329h2v6h-2zM787 329h2v6h-2zM837 329h1v6h-1zM853 329h1v6h-1zM871 329h1v6h-1zM881 329h1v6h-1zM886 329h1v6h-1zM897 329h1v6h-1zM902 329h2v6h-2zM936 329h1v6h-1zM1007 329h1v6h-1zM1013 329h1v6h-1zM92 323h2v6h-2zM126 323h1v6h-1zM143 323h1v6h-1zM147 323h1v6h-1zM197 323h1v6h-1zM205 323h1v6h-1zM209 323h2v6h-2zM219 323h1v6h-1zM223 323h1v6h-1zM231 323h1v6h-1zM255 323h2v6h-2zM430 323h1v6h-1zM469 323h1v6h-1zM518 323h1v6h-1zM548 323h2v6h-2zM571 323h1v6h-1zM578 323h3v6h-3zM624 323h1v6h-1zM630 323h1v6h-1zM638 323h1v6h-1zM647 323h2v6h-2zM668 323h1v6h-1zM672 323h3v6h-3zM724 323h2v6h-2zM764 323h4v6h-4zM787 323h1v6h-1zM907 323h1v6h-1zM935 323h1v6h-1zM949 323h2v6h-2zM124 316h1v7h-1zM126 316h1v7h-1zM217 316h1v7h-1zM263 316h2v7h-2zM396 316h1v7h-1zM472 316h2v7h-2zM523 316h1v7h-1zM555 316h1v7h-1zM585 316h1v7h-1zM635 316h2v7h-2zM639 316h1v7h-1zM685 316h1v7h-1zM687 316h1v7h-1zM704 316h1v7h-1zM715 316h1v7h-1zM729 316h3v7h-3zM738 316h1v7h-1zM758 316h2v7h-2zM779 316h1v7h-1zM784 316h2v7h-2zM807 316h2v7h-2zM887 316h1v7h-1zM895 316h1v7h-1zM899 316h2v7h-2zM946 316h1v7h-1zM1005 316h3v7h-3zM93 371h1v7h-1zM124 371h1v7h-1zM134 371h1v7h-1zM246 371h1v7h-1zM248 371h1v7h-1zM288 371h1v7h-1zM350 371h1v7h-1zM366 371h1v7h-1zM380 371h1v7h-1zM389 371h1v7h-1zM396 371h1v7h-1zM407 371h2v7h-2zM414 371h1v7h-1zM417 371h1v7h-1zM447 371h1v7h-1zM478 371h1v7h-1zM505 371h1v7h-1zM509 371h1v7h-1zM523 371h1v7h-1zM541 371h2v7h-2zM556 371h1v7h-1zM590 371h1v7h-1zM600 371h1v7h-1zM632 371h1v7h-1zM640 371h1v7h-1zM649 371h1v7h-1zM667 371h1v7h-1zM674 371h1v7h-1zM678 371h2v7h-2zM697 371h1v7h-1zM704 371h1v7h-1zM720 371h1v7h-1zM724 371h2v7h-2zM727 371h2v7h-2zM773 371h2v7h-2zM776 371h2v7h-2zM787 371h2v7h-2zM810 371h1v7h-1zM837 371h1v7h-1zM850 371h1v7h-1zM864 371h2v7h-2zM869 371h1v7h-1zM883 371h2v7h-2zM895 371h1v7h-1zM914 371h2v7h-2zM929 371h1v7h-1zM935 371h1v7h-1zM947 371h2v7h-2zM983 371h1v7h-1zM1018 371h1v7h-1zM1021 371h1v7h-1zM1032 371h2v7h-2zM1037 371h2v7h-2zM1086 371h1v7h-1zM92 378h2v6h-2zM109 378h1v6h-1zM126 378h1v6h-1zM134 378h1v6h-1zM149 378h1v6h-1zM155 378h2v6h-2zM158 378h1v6h-1zM209 378h1v6h-1zM234 378h2v6h-2zM242 378h1v6h-1zM317 378h1v6h-1zM328 378h3v6h-3zM333 378h1v6h-1zM343 378h1v6h-1zM350 378h1v6h-1zM396 378h1v6h-1zM398 378h1v6h-1zM410 378h2v6h-2zM513 378h1v6h-1zM525 378h1v6h-1zM532 378h1v6h-1zM538 378h1v6h-1zM567 378h1v6h-1zM577 378h1v6h-1zM600 378h1v6h-1zM631 378h1v6h-1zM638 378h1v6h-1zM642 378h2v6h-2zM647 378h1v6h-1zM685 378h1v6h-1zM721 378h1v6h-1zM741 378h1v6h-1zM787 378h1v6h-1zM791 378h1v6h-1zM799 378h1v6h-1zM812 378h2v6h-2zM835 378h2v6h-2zM861 378h1v6h-1zM871 378h1v6h-1zM874 378h4v6h-4zM881 378h1v6h-1zM910 378h1v6h-1zM938 378h2v6h-2zM943 378h1v6h-1zM975 378h2v6h-2zM981 378h1v6h-1zM985 378h1v6h-1zM1046 378h1v6h-1zM1087 378h1v6h-1zM1089 378h1v6h-1zM102 384h2v6h-2zM110 384h2v6h-2zM113 384h2v6h-2zM127 384h1v6h-1zM134 384h1v6h-1zM138 384h1v6h-1zM152 384h2v6h-2zM155 384h2v6h-2zM210 384h1v6h-1zM220 384h1v6h-1zM233 384h1v6h-1zM242 384h2v6h-2zM290 384h1v6h-1zM297 384h2v6h-2zM320 384h1v6h-1zM328 384h2v6h-2zM355 384h1v6h-1zM358 384h2v6h-2zM364 384h4v6h-4zM380 384h1v6h-1zM398 384h1v6h-1zM475 384h2v6h-2zM506 384h1v6h-1zM512 384h1v6h-1zM525 384h1v6h-1zM532 384h1v6h-1zM564 384h1v6h-1zM600 384h1v6h-1zM610 384h1v6h-1zM616 384h2v6h-2zM642 384h1v6h-1zM647 384h2v6h-2zM674 384h1v6h-1zM681 384h1v6h-1zM688 384h1v6h-1zM704 384h1v6h-1zM708 384h2v6h-2zM712 384h2v6h-2zM720 384h1v6h-1zM740 384h1v6h-1zM745 384h4v6h-4zM776 384h1v6h-1zM826 384h1v6h-1zM843 384h1v6h-1zM863 384h1v6h-1zM911 384h1v6h-1zM920 384h2v6h-2zM926 384h2v6h-2zM933 384h2v6h-2zM937 384h1v6h-1zM940 384h1v6h-1zM971 384h3v6h-3zM977 384h1v6h-1zM994 384h2v6h-2zM1023 384h2v6h-2zM1030 384h1v6h-1zM1034 384h2v6h-2zM1042 384h1v6h-1zM1044 384h2v6h-2zM1051 384h1v6h-1zM1053 384h1v6h-1zM1090 384h1v6h-1zM97 390h4v6h-4zM107 390h2v6h-2zM133 390h1v6h-1zM146 390h2v6h-2zM157 390h1v6h-1zM224 390h1v6h-1zM229 390h1v6h-1zM233 390h1v6h-1zM247 390h2v6h-2zM286 390h1v6h-1zM330 390h1v6h-1zM338 390h1v6h-1zM372 390h1v6h-1zM378 390h1v6h-1zM380 390h2v6h-2zM397 390h1v6h-1zM404 390h1v6h-1zM406 390h1v6h-1zM422 390h1v6h-1zM437 390h3v6h-3zM482 390h1v6h-1zM485 390h1v6h-1zM505 390h1v6h-1zM526 390h2v6h-2zM530 390h2v6h-2zM547 390h3v6h-3zM555 390h2v6h-2zM559 390h1v6h-1zM586 390h2v6h-2zM600 390h1v6h-1zM624 390h1v6h-1zM638 390h1v6h-1zM641 390h2v6h-2zM649 390h2v6h-2zM659 390h1v6h-1zM674 390h1v6h-1zM685 390h1v6h-1zM716 390h1v6h-1zM729 390h3v6h-3zM752 390h3v6h-3zM764 390h2v6h-2zM829 390h1v6h-1zM831 390h2v6h-2zM853 390h1v6h-1zM860 390h1v6h-1zM879 390h2v6h-2zM887 390h1v6h-1zM929 390h1v6h-1zM932 390h1v6h-1zM937 390h1v6h-1zM942 390h2v6h-2zM982 390h1v6h-1zM990 390h1v6h-1zM1031 390h1v6h-1zM1034 390h2v6h-2zM1047 390h1v6h-1zM1056 390h1v6h-1zM1088 390h2v6h-2zM109 414h1v6h-1zM112 414h1v6h-1zM121 414h1v6h-1zM134 414h1v6h-1zM154 414h1v6h-1zM242 414h1v6h-1zM273 414h1v6h-1zM278 414h1v6h-1zM286 414h1v6h-1zM294 414h1v6h-1zM302 414h1v6h-1zM318 414h1v6h-1zM320 414h1v6h-1zM322 414h3v6h-3zM333 414h1v6h-1zM351 414h2v6h-2zM356 414h2v6h-2zM394 414h2v6h-2zM412 414h2v6h-2zM417 414h1v6h-1zM422 414h1v6h-1zM500 414h1v6h-1zM526 414h2v6h-2zM567 414h1v6h-1zM571 414h3v6h-3zM581 414h2v6h-2zM597 414h1v6h-1zM610 414h1v6h-1zM628 414h1v6h-1zM637 414h1v6h-1zM644 414h1v6h-1zM647 414h1v6h-1zM656 414h2v6h-2zM659 414h1v6h-1zM714 414h2v6h-2zM781 414h2v6h-2zM839 414h1v6h-1zM857 414h2v6h-2zM876 414h2v6h-2zM916 414h2v6h-2zM924 414h1v6h-1zM1009 414h1v6h-1zM1021 414h1v6h-1zM1044 414h2v6h-2zM1051 414h1v6h-1zM1053 414h1v6h-1zM1056 414h1v6h-1zM1063 414h1v6h-1zM1067 414h1v6h-1zM1077 414h1v6h-1zM1081 414h2v6h-2zM1086 414h1v6h-1zM99 408h2v6h-2zM112 408h1v6h-1zM121 408h1v6h-1zM234 408h2v6h-2zM282 408h2v6h-2zM293 408h1v6h-1zM303 408h2v6h-2zM316 408h2v6h-2zM333 408h1v6h-1zM348 408h1v6h-1zM364 408h2v6h-2zM372 408h1v6h-1zM397 408h1v6h-1zM402 408h1v6h-1zM410 408h4v6h-4zM422 408h1v6h-1zM444 408h2v6h-2zM450 408h1v6h-1zM494 408h2v6h-2zM507 408h2v6h-2zM547 408h1v6h-1zM600 408h1v6h-1zM643 408h1v6h-1zM649 408h1v6h-1zM714 408h2v6h-2zM717 408h1v6h-1zM720 408h1v6h-1zM724 408h2v6h-2zM735 408h2v6h-2zM802 408h2v6h-2zM809 408h2v6h-2zM838 408h1v6h-1zM841 408h1v6h-1zM854 408h2v6h-2zM862 408h1v6h-1zM873 408h1v6h-1zM883 408h2v6h-2zM926 408h2v6h-2zM929 408h1v6h-1zM986 408h2v6h-2zM990 408h1v6h-1zM993 408h1v6h-1zM1000 408h1v6h-1zM1031 408h5v6h-5zM1048 408h1v6h-1zM1072 408h2v6h-2zM1085 408h1v6h-1zM110 402h2v6h-2zM151 402h1v6h-1zM158 402h1v6h-1zM234 402h4v6h-4zM239 402h2v6h-2zM254 402h1v6h-1zM304 402h1v6h-1zM377 402h1v6h-1zM381 402h2v6h-2zM409 402h1v6h-1zM414 402h1v6h-1zM421 402h1v6h-1zM423 402h1v6h-1zM438 402h1v6h-1zM442 402h2v6h-2zM491 402h1v6h-1zM499 402h1v6h-1zM501 402h2v6h-2zM510 402h1v6h-1zM547 402h1v6h-1zM565 402h2v6h-2zM577 402h1v6h-1zM590 402h1v6h-1zM603 402h1v6h-1zM631 402h1v6h-1zM633 402h1v6h-1zM647 402h1v6h-1zM651 402h2v6h-2zM662 402h1v6h-1zM680 402h1v6h-1zM735 402h2v6h-2zM742 402h1v6h-1zM748 402h1v6h-1zM750 402h2v6h-2zM768 402h1v6h-1zM796 402h1v6h-1zM805 402h2v6h-2zM846 402h1v6h-1zM849 402h1v6h-1zM854 402h2v6h-2zM859 402h1v6h-1zM866 402h2v6h-2zM885 402h1v6h-1zM888 402h1v6h-1zM932 402h1v6h-1zM938 402h3v6h-3zM1020 402h1v6h-1zM1042 402h1v6h-1zM1051 402h1v6h-1zM1055 402h1v6h-1zM1065 402h1v6h-1zM1076 402h1v6h-1zM101 396h1v6h-1zM133 396h1v6h-1zM149 396h1v6h-1zM152 396h2v6h-2zM157 396h1v6h-1zM160 396h1v6h-1zM233 396h1v6h-1zM239 396h2v6h-2zM291 396h1v6h-1zM303 396h1v6h-1zM348 396h1v6h-1zM362 396h2v6h-2zM374 396h1v6h-1zM494 396h2v6h-2zM510 396h1v6h-1zM513 396h1v6h-1zM523 396h1v6h-1zM536 396h1v6h-1zM541 396h2v6h-2zM556 396h1v6h-1zM567 396h1v6h-1zM586 396h2v6h-2zM590 396h1v6h-1zM618 396h2v6h-2zM639 396h1v6h-1zM649 396h1v6h-1zM654 396h1v6h-1zM666 396h2v6h-2zM686 396h1v6h-1zM689 396h2v6h-2zM708 396h2v6h-2zM714 396h1v6h-1zM721 396h1v6h-1zM727 396h2v6h-2zM730 396h2v6h-2zM735 396h2v6h-2zM768 396h1v6h-1zM773 396h2v6h-2zM776 396h1v6h-1zM779 396h2v6h-2zM797 396h2v6h-2zM805 396h2v6h-2zM812 396h3v6h-3zM843 396h1v6h-1zM862 396h1v6h-1zM909 396h1v6h-1zM978 396h1v6h-1zM993 396h1v6h-1zM999 396h1v6h-1zM1030 396h1v6h-1zM1032 396h2v6h-2zM1042 396h2v6h-2zM1053 396h4v6h-4zM1060 396h3v6h-3zM1064 396h2v6h-2zM110 420h2v7h-2zM121 420h1v7h-1zM138 420h1v7h-1zM140 420h1v7h-1zM238 420h1v7h-1zM246 420h1v7h-1zM268 420h1v7h-1zM300 420h2v7h-2zM313 420h1v7h-1zM366 420h1v7h-1zM399 420h2v7h-2zM402 420h1v7h-1zM414 420h1v7h-1zM420 420h1v7h-1zM467 420h2v7h-2zM481 420h2v7h-2zM491 420h1v7h-1zM544 420h2v7h-2zM634 420h1v7h-1zM732 420h1v7h-1zM767 420h1v7h-1zM770 420h1v7h-1zM777 420h2v7h-2zM802 420h2v7h-2zM837 420h2v7h-2zM861 420h1v7h-1zM876 420h2v7h-2zM885 420h1v7h-1zM912 420h2v7h-2zM929 420h1v7h-1zM1003 420h2v7h-2zM1012 420h1v7h-1zM1021 420h1v7h-1zM1068 420h1v7h-1zM1085 420h1v7h-1zM1090 420h1v7h-1zM112 427h1v6h-1zM239 427h2v6h-2zM242 427h1v6h-1zM250 427h3v6h-3zM273 427h1v6h-1zM309 427h1v6h-1zM314 427h1v6h-1zM358 427h2v6h-2zM399 427h2v6h-2zM414 427h1v6h-1zM416 427h1v6h-1zM426 427h2v6h-2zM449 427h1v6h-1zM478 427h1v6h-1zM491 427h1v6h-1zM520 427h1v6h-1zM550 427h1v6h-1zM554 427h1v6h-1zM566 427h1v6h-1zM799 427h1v6h-1zM840 427h1v6h-1zM856 427h1v6h-1zM871 427h1v6h-1zM909 427h1v6h-1zM918 427h2v6h-2zM932 427h1v6h-1zM996 427h1v6h-1zM1015 427h1v6h-1zM1055 427h2v6h-2zM1060 427h1v6h-1zM246 439h1v6h-1zM341 439h2v6h-2zM416 439h1v6h-1zM451 439h1v6h-1zM487 439h3v6h-3zM491 439h1v6h-1zM588 439h1v6h-1zM591 439h2v6h-2zM597 439h1v6h-1zM603 439h1v6h-1zM614 439h1v6h-1zM633 439h1v6h-1zM804 439h1v6h-1zM873 439h1v6h-1zM907 439h2v6h-2zM925 439h1v6h-1zM1021 439h1v6h-1zM1026 439h2v6h-2zM233 433h1v6h-1zM242 433h1v6h-1zM268 433h1v6h-1zM304 433h1v6h-1zM334 433h1v6h-1zM412 433h2v6h-2zM421 433h1v6h-1zM478 433h1v6h-1zM482 433h1v6h-1zM493 433h1v6h-1zM496 433h1v6h-1zM500 433h3v6h-3zM544 433h2v6h-2zM604 433h1v6h-1zM613 433h3v6h-3zM638 433h1v6h-1zM771 433h2v6h-2zM805 433h2v6h-2zM843 433h1v6h-1zM861 433h1v6h-1zM871 433h1v6h-1zM914 433h2v6h-2zM1000 433h1v6h-1zM1013 433h1v6h-1zM1015 433h1v6h-1zM1084 433h2v6h-2zM1087 433h1v6h-1zM1089 433h1v6h-1zM339 445h2v6h-2zM447 445h1v6h-1zM474 445h1v6h-1zM482 445h1v6h-1zM489 445h1v6h-1zM496 445h1v6h-1zM601 445h2v6h-2zM613 445h1v6h-1zM800 445h1v6h-1zM119 310h2v6h-2zM138 310h1v6h-1zM199 310h1v6h-1zM541 310h2v6h-2zM574 310h1v6h-1zM618 310h2v6h-2zM648 310h1v6h-1zM692 310h1v6h-1zM768 310h1v6h-1zM771 310h2v6h-2zM908 310h2v6h-2zM946 310h1v6h-1zM997 310h1v6h-1zM205 304h1v6h-1zM262 304h1v6h-1zM546 304h1v6h-1zM618 304h2v6h-2zM624 304h1v6h-1zM693 304h1v6h-1zM704 304h1v6h-1zM763 304h1v6h-1zM766 304h1v6h-1zM771 304h2v6h-2zM774 304h1v6h-1zM776 304h2v6h-2zM898 304h1v6h-1zM901 304h1v6h-1zM952 304h1v6h-1zM1000 304h3v6h-3zM141 298h2v6h-2zM187 298h1v6h-1zM206 298h1v6h-1zM623 298h1v6h-1zM644 298h1v6h-1zM648 298h1v6h-1zM896 298h1v6h-1zM904 298h2v6h-2zM207 292h1v6h-1zM648 292h1v6h-1zM697 292h1v6h-1zM765 292h1v6h-1zM895 292h1v6h-1zM906 292h2v6h-2zM913 292h1v6h-1zM201 286h1v6h-1zM205 286h1v6h-1zM207 286h1v6h-1zM651 286h2v6h-2zM778 286h1v6h-1zM865 286h2v6h-2zM897 286h1v6h-1zM902 286h2v6h-2zM89 243h1v6h-1zM177 243h3v6h-3zM533 243h1v6h-1zM887 237h1v6h-1zM784 231h1v6h-1zM180 249h1v6h-1zM518 225h1v6h-1zM519 218h1v7h-1zM522 218h1v7h-1zM524 218h2v7h-2zM766 261h1v6h-1zM897 261h1v6h-1zM899 261h2v6h-2zM919 261h1v6h-1zM176 255h1v6h-1zM534 255h1v6h-1zM187 274h1v6h-1zM651 274h2v6h-2zM684 274h1v6h-1zM779 274h3v6h-3zM888 274h1v6h-1zM909 274h1v6h-1zM919 274h1v6h-1zM865 267h2v7h-2zM895 267h1v7h-1zM651 280h2v6h-2zM779 280h1v6h-1zM434 451h2v6h-2zM482 451h1v6h-1zM489 451h1v6h-1zM496 451h1v6h-1zM593 451h1v6h-1zM596 451h1v6h-1zM859 451h1v6h-1zM910 451h1v6h-1zM441 457h1v6h-1zM451 457h1v6h-1zM454 457h2v6h-2zM467 457h2v6h-2zM479 457h2v6h-2zM494 457h2v6h-2zM503 457h1v6h-1zM483 463h1v6h-1zM524 212h2v6h-2zM786 212h1v6h-1zM512 194h1v6h-1zM514 194h1v6h-1zM531 194h1v6h-1zM786 182h1v6h-1zM535 102h2v6h-2zM538 102h1v6h-1zM542 102h1v6h-1zM544 102h1v6h-1zM543 114h1v7h-1zM483 139h1v6h-1zM495 133h1v6h-1zM234 488h1v6h-1zM246 488h1v6h-1zM226 494h1v6h-1zM227 469h1v7h-1zM230 482h1v6h-1z"/>
<path fill="#0083ff" d="M126 365h1v6h-1zM147 365h1v6h-1zM154 365h1v6h-1zM207 365h1v6h-1zM234 365h4v6h-4zM269 365h1v6h-1zM309 365h1v6h-1zM316 365h1v6h-1zM334 365h1v6h-1zM339 365h2v6h-2zM366 365h2v6h-2zM384 365h1v6h-1zM386 365h1v6h-1zM398 365h1v6h-1zM405 365h1v6h-1zM415 365h1v6h-1zM418 365h2v6h-2zM467 365h2v6h-2zM477 365h1v6h-1zM493 365h1v6h-1zM510 365h1v6h-1zM530 365h1v6h-1zM539 365h2v6h-2zM547 365h1v6h-1zM566 365h1v6h-1zM589 365h1v6h-1zM640 365h1v6h-1zM643 365h1v6h-1zM647 365h2v6h-2zM661 365h1v6h-1zM667 365h1v6h-1zM674 365h1v6h-1zM697 365h1v6h-1zM702 365h2v6h-2zM723 365h1v6h-1zM737 365h1v6h-1zM743 365h2v6h-2zM802 365h2v6h-2zM819 365h2v6h-2zM826 365h1v6h-1zM849 365h1v6h-1zM861 365h1v6h-1zM866 365h2v6h-2zM885 365h1v6h-1zM946 365h1v6h-1zM971 365h1v6h-1zM977 365h1v6h-1zM981 365h1v6h-1zM1000 365h1v6h-1zM1005 365h2v6h-2zM1015 365h1v6h-1zM88 359h1v6h-1zM90 359h1v6h-1zM134 359h1v6h-1zM200 359h1v6h-1zM209 359h1v6h-1zM215 359h1v6h-1zM248 359h1v6h-1zM251 359h4v6h-4zM311 359h1v6h-1zM396 359h1v6h-1zM398 359h1v6h-1zM403 359h1v6h-1zM418 359h3v6h-3zM424 359h2v6h-2zM429 359h1v6h-1zM449 359h1v6h-1zM451 359h1v6h-1zM461 359h2v6h-2zM467 359h2v6h-2zM482 359h1v6h-1zM496 359h1v6h-1zM504 359h1v6h-1zM526 359h4v6h-4zM532 359h1v6h-1zM547 359h1v6h-1zM554 359h1v6h-1zM559 359h1v6h-1zM561 359h1v6h-1zM613 359h1v6h-1zM620 359h2v6h-2zM640 359h1v6h-1zM667 359h1v6h-1zM684 359h1v6h-1zM686 359h1v6h-1zM688 359h1v6h-1zM691 359h1v6h-1zM711 359h1v6h-1zM729 359h1v6h-1zM740 359h1v6h-1zM796 359h1v6h-1zM831 359h2v6h-2zM837 359h2v6h-2zM840 359h1v6h-1zM863 359h1v6h-1zM874 359h2v6h-2zM969 359h1v6h-1zM982 359h1v6h-1zM999 359h1v6h-1zM1009 359h1v6h-1zM126 353h1v6h-1zM143 353h1v6h-1zM152 353h2v6h-2zM210 353h1v6h-1zM219 353h1v6h-1zM224 353h1v6h-1zM247 353h1v6h-1zM253 353h2v6h-2zM262 353h1v6h-1zM367 353h1v6h-1zM370 353h1v6h-1zM394 353h3v6h-3zM398 353h1v6h-1zM415 353h1v6h-1zM417 353h1v6h-1zM436 353h1v6h-1zM463 353h2v6h-2zM493 353h1v6h-1zM511 353h2v6h-2zM523 353h1v6h-1zM532 353h1v6h-1zM541 353h2v6h-2zM548 353h2v6h-2zM613 353h1v6h-1zM616 353h2v6h-2zM634 353h1v6h-1zM637 353h1v6h-1zM648 353h1v6h-1zM674 353h1v6h-1zM692 353h1v6h-1zM697 353h1v6h-1zM704 353h1v6h-1zM708 353h2v6h-2zM717 353h1v6h-1zM721 353h1v6h-1zM732 353h1v6h-1zM737 353h1v6h-1zM869 353h1v6h-1zM937 353h4v6h-4zM943 353h1v6h-1zM970 353h1v6h-1zM999 353h1v6h-1zM1018 353h1v6h-1zM1020 353h2v6h-2zM1023 353h3v6h-3zM1029 353h2v6h-2zM1088 353h2v6h-2zM147 347h1v6h-1zM221 347h2v6h-2zM250 347h1v6h-1zM370 347h1v6h-1zM401 347h1v6h-1zM423 347h1v6h-1zM440 347h1v6h-1zM447 347h1v6h-1zM474 347h1v6h-1zM491 347h2v6h-2zM501 347h2v6h-2zM513 347h1v6h-1zM554 347h1v6h-1zM556 347h1v6h-1zM579 347h2v6h-2zM597 347h1v6h-1zM604 347h1v6h-1zM607 347h1v6h-1zM635 347h2v6h-2zM643 347h1v6h-1zM675 347h2v6h-2zM708 347h2v6h-2zM768 347h1v6h-1zM788 347h1v6h-1zM810 347h1v6h-1zM812 347h2v6h-2zM829 347h1v6h-1zM837 347h1v6h-1zM854 347h2v6h-2zM929 347h1v6h-1zM935 347h2v6h-2zM941 347h1v6h-1zM1007 347h1v6h-1zM1015 347h1v6h-1zM1019 347h2v6h-2zM1029 347h2v6h-2zM97 341h2v6h-2zM124 341h1v6h-1zM147 341h1v6h-1zM206 341h2v6h-2zM211 341h1v6h-1zM312 341h1v6h-1zM332 341h1v6h-1zM436 341h1v6h-1zM447 341h1v6h-1zM472 341h2v6h-2zM541 341h2v6h-2zM571 341h1v6h-1zM579 341h2v6h-2zM586 341h2v6h-2zM603 341h2v6h-2zM633 341h1v6h-1zM641 341h1v6h-1zM647 341h1v6h-1zM662 341h1v6h-1zM671 341h1v6h-1zM675 341h2v6h-2zM691 341h1v6h-1zM702 341h2v6h-2zM710 341h1v6h-1zM723 341h1v6h-1zM758 341h2v6h-2zM788 341h1v6h-1zM845 341h1v6h-1zM870 341h2v6h-2zM878 341h1v6h-1zM966 341h1v6h-1zM1000 341h1v6h-1zM207 335h1v6h-1zM209 335h1v6h-1zM219 335h1v6h-1zM268 335h1v6h-1zM367 335h1v6h-1zM394 335h2v6h-2zM401 335h1v6h-1zM415 335h1v6h-1zM417 335h1v6h-1zM523 335h1v6h-1zM539 335h2v6h-2zM556 335h1v6h-1zM624 335h1v6h-1zM632 335h1v6h-1zM635 335h2v6h-2zM661 335h1v6h-1zM674 335h1v6h-1zM694 335h2v6h-2zM716 335h1v6h-1zM724 335h3v6h-3zM730 335h2v6h-2zM740 335h1v6h-1zM745 335h2v6h-2zM760 335h1v6h-1zM763 335h1v6h-1zM771 335h2v6h-2zM774 335h1v6h-1zM783 335h1v6h-1zM811 335h1v6h-1zM821 335h1v6h-1zM850 335h1v6h-1zM866 335h2v6h-2zM879 335h2v6h-2zM937 335h1v6h-1zM941 335h1v6h-1zM88 329h1v6h-1zM94 329h2v6h-2zM127 329h1v6h-1zM210 329h1v6h-1zM368 329h1v6h-1zM399 329h2v6h-2zM412 329h2v6h-2zM457 329h1v6h-1zM493 329h1v6h-1zM524 329h1v6h-1zM572 329h2v6h-2zM575 329h1v6h-1zM581 329h2v6h-2zM627 329h1v6h-1zM632 329h1v6h-1zM667 329h1v6h-1zM697 329h1v6h-1zM714 329h1v6h-1zM729 329h1v6h-1zM735 329h2v6h-2zM738 329h1v6h-1zM809 329h1v6h-1zM854 329h2v6h-2zM859 329h2v6h-2zM866 329h2v6h-2zM870 329h1v6h-1zM878 329h1v6h-1zM888 329h1v6h-1zM899 329h3v6h-3zM938 329h2v6h-2zM943 329h1v6h-1zM946 329h1v6h-1zM1020 329h1v6h-1zM90 323h1v6h-1zM124 323h1v6h-1zM262 323h1v6h-1zM369 323h1v6h-1zM398 323h3v6h-3zM412 323h4v6h-4zM431 323h1v6h-1zM496 323h1v6h-1zM537 323h1v6h-1zM572 323h2v6h-2zM585 323h1v6h-1zM611 323h2v6h-2zM615 323h1v6h-1zM622 323h1v6h-1zM629 323h1v6h-1zM633 323h1v6h-1zM644 323h1v6h-1zM653 323h1v6h-1zM677 323h1v6h-1zM685 323h1v6h-1zM687 323h1v6h-1zM700 323h2v6h-2zM711 323h1v6h-1zM718 323h2v6h-2zM726 323h1v6h-1zM740 323h1v6h-1zM757 323h1v6h-1zM760 323h1v6h-1zM821 323h1v6h-1zM837 323h1v6h-1zM852 323h1v6h-1zM892 323h2v6h-2zM901 323h1v6h-1zM908 323h1v6h-1zM943 323h1v6h-1zM953 323h2v6h-2zM1009 323h1v6h-1zM141 316h1v7h-1zM143 316h1v7h-1zM206 316h2v7h-2zM209 316h1v7h-1zM224 316h1v7h-1zM521 316h2v7h-2zM574 316h1v7h-1zM614 316h2v7h-2zM618 316h2v7h-2zM667 316h1v7h-1zM678 316h2v7h-2zM682 316h2v7h-2zM694 316h2v7h-2zM721 316h1v7h-1zM739 316h1v7h-1zM762 316h1v7h-1zM766 316h1v7h-1zM774 316h1v7h-1zM873 316h3v7h-3zM892 316h2v7h-2zM897 316h2v7h-2zM907 316h1v7h-1zM951 316h1v7h-1zM1003 316h2v7h-2zM102 371h2v7h-2zM152 371h1v7h-1zM158 371h1v7h-1zM214 371h1v7h-1zM234 371h1v7h-1zM277 371h1v7h-1zM280 371h1v7h-1zM318 371h1v7h-1zM375 371h1v7h-1zM420 371h3v7h-3zM467 371h2v7h-2zM479 371h2v7h-2zM506 371h1v7h-1zM524 371h1v7h-1zM530 371h1v7h-1zM532 371h1v7h-1zM547 371h1v7h-1zM565 371h1v7h-1zM576 371h1v7h-1zM598 371h2v7h-2zM601 371h2v7h-2zM642 371h1v7h-1zM686 371h1v7h-1zM688 371h1v7h-1zM696 371h1v7h-1zM700 371h2v7h-2zM750 371h2v7h-2zM764 371h2v7h-2zM799 371h1v7h-1zM807 371h2v7h-2zM831 371h2v7h-2zM838 371h2v7h-2zM853 371h1v7h-1zM860 371h1v7h-1zM863 371h1v7h-1zM876 371h3v7h-3zM885 371h1v7h-1zM912 371h2v7h-2zM938 371h3v7h-3zM1009 371h1v7h-1zM1020 371h1v7h-1zM1022 371h1v7h-1zM1039 371h2v7h-2zM1089 371h2v7h-2zM97 378h2v6h-2zM112 378h1v6h-1zM143 378h1v6h-1zM210 378h2v6h-2zM256 378h1v6h-1zM286 378h1v6h-1zM300 378h2v6h-2zM306 378h2v6h-2zM321 378h1v6h-1zM349 378h1v6h-1zM358 378h2v6h-2zM370 378h1v6h-1zM373 378h1v6h-1zM397 378h1v6h-1zM399 378h2v6h-2zM406 378h3v6h-3zM420 378h1v6h-1zM438 378h1v6h-1zM470 378h1v6h-1zM475 378h2v6h-2zM482 378h1v6h-1zM496 378h1v6h-1zM510 378h1v6h-1zM519 378h1v6h-1zM528 378h2v6h-2zM547 378h1v6h-1zM566 378h1v6h-1zM571 378h1v6h-1zM629 378h1v6h-1zM667 378h1v6h-1zM670 378h1v6h-1zM672 378h2v6h-2zM717 378h1v6h-1zM748 378h1v6h-1zM763 378h1v6h-1zM766 378h1v6h-1zM779 378h4v6h-4zM788 378h1v6h-1zM801 378h3v6h-3zM827 378h3v6h-3zM841 378h1v6h-1zM846 378h1v6h-1zM849 378h2v6h-2zM859 378h1v6h-1zM863 378h1v6h-1zM883 378h3v6h-3zM889 378h1v6h-1zM919 378h1v6h-1zM925 378h3v6h-3zM932 378h1v6h-1zM936 378h2v6h-2zM940 378h1v6h-1zM989 378h1v6h-1zM994 378h2v6h-2zM1034 378h2v6h-2zM1048 378h1v6h-1zM104 384h1v6h-1zM154 384h1v6h-1zM218 384h1v6h-1zM249 384h2v6h-2zM281 384h3v6h-3zM292 384h1v6h-1zM318 384h1v6h-1zM325 384h3v6h-3zM330 384h1v6h-1zM332 384h1v6h-1zM343 384h1v6h-1zM350 384h1v6h-1zM368 384h1v6h-1zM379 384h1v6h-1zM382 384h2v6h-2zM397 384h1v6h-1zM412 384h2v6h-2zM418 384h3v6h-3zM424 384h4v6h-4zM439 384h1v6h-1zM465 384h1v6h-1zM487 384h2v6h-2zM501 384h2v6h-2zM524 384h1v6h-1zM526 384h2v6h-2zM533 384h2v6h-2zM562 384h1v6h-1zM588 384h1v6h-1zM597 384h1v6h-1zM605 384h2v6h-2zM624 384h3v6h-3zM629 384h1v6h-1zM634 384h1v6h-1zM641 384h1v6h-1zM667 384h1v6h-1zM678 384h2v6h-2zM682 384h4v6h-4zM693 384h1v6h-1zM715 384h1v6h-1zM724 384h3v6h-3zM767 384h2v6h-2zM773 384h2v6h-2zM777 384h2v6h-2zM787 384h1v6h-1zM799 384h1v6h-1zM802 384h2v6h-2zM809 384h1v6h-1zM837 384h3v6h-3zM847 384h1v6h-1zM856 384h1v6h-1zM862 384h1v6h-1zM874 384h2v6h-2zM885 384h1v6h-1zM910 384h1v6h-1zM929 384h1v6h-1zM969 384h1v6h-1zM988 384h1v6h-1zM991 384h2v6h-2zM1032 384h2v6h-2zM1089 384h1v6h-1zM101 390h1v6h-1zM134 390h1v6h-1zM152 390h2v6h-2zM234 390h2v6h-2zM243 390h1v6h-1zM290 390h2v6h-2zM302 390h1v6h-1zM310 390h1v6h-1zM313 390h1v6h-1zM348 390h1v6h-1zM355 390h1v6h-1zM382 390h1v6h-1zM407 390h2v6h-2zM412 390h2v6h-2zM444 390h2v6h-2zM496 390h1v6h-1zM500 390h1v6h-1zM506 390h1v6h-1zM511 390h1v6h-1zM521 390h2v6h-2zM532 390h1v6h-1zM541 390h3v6h-3zM566 390h1v6h-1zM574 390h1v6h-1zM588 390h1v6h-1zM603 390h1v6h-1zM625 390h2v6h-2zM629 390h1v6h-1zM634 390h1v6h-1zM663 390h2v6h-2zM668 390h1v6h-1zM688 390h1v6h-1zM692 390h1v6h-1zM697 390h1v6h-1zM714 390h1v6h-1zM748 390h1v6h-1zM763 390h1v6h-1zM767 390h1v6h-1zM800 390h1v6h-1zM807 390h2v6h-2zM827 390h2v6h-2zM855 390h1v6h-1zM857 390h2v6h-2zM861 390h1v6h-1zM876 390h3v6h-3zM916 390h2v6h-2zM936 390h1v6h-1zM941 390h1v6h-1zM974 390h4v6h-4zM979 390h1v6h-1zM981 390h1v6h-1zM985 390h1v6h-1zM988 390h2v6h-2zM991 390h2v6h-2zM1032 390h2v6h-2zM1037 390h2v6h-2zM1043 390h1v6h-1zM1051 390h2v6h-2zM1054 390h2v6h-2zM1058 390h2v6h-2zM1090 390h1v6h-1zM97 414h2v6h-2zM101 414h1v6h-1zM110 414h2v6h-2zM158 414h1v6h-1zM160 414h1v6h-1zM236 414h2v6h-2zM243 414h1v6h-1zM247 414h1v6h-1zM288 414h1v6h-1zM292 414h1v6h-1zM300 414h2v6h-2zM304 414h1v6h-1zM309 414h1v6h-1zM317 414h1v6h-1zM321 414h1v6h-1zM325 414h1v6h-1zM331 414h1v6h-1zM343 414h1v6h-1zM348 414h1v6h-1zM369 414h1v6h-1zM375 414h2v6h-2zM382 414h1v6h-1zM409 414h1v6h-1zM420 414h1v6h-1zM485 414h1v6h-1zM524 414h1v6h-1zM556 414h1v6h-1zM559 414h1v6h-1zM566 414h1v6h-1zM568 414h1v6h-1zM577 414h1v6h-1zM630 414h2v6h-2zM770 414h1v6h-1zM842 414h1v6h-1zM847 414h1v6h-1zM930 414h1v6h-1zM997 414h2v6h-2zM1005 414h2v6h-2zM1020 414h1v6h-1zM1022 414h1v6h-1zM1030 414h1v6h-1zM1052 414h1v6h-1zM1055 414h1v6h-1zM1084 414h1v6h-1zM117 408h2v6h-2zM150 408h2v6h-2zM158 408h1v6h-1zM238 408h1v6h-1zM242 408h2v6h-2zM269 408h1v6h-1zM281 408h1v6h-1zM291 408h1v6h-1zM295 408h2v6h-2zM300 408h2v6h-2zM320 408h1v6h-1zM322 408h2v6h-2zM350 408h3v6h-3zM355 408h1v6h-1zM370 408h1v6h-1zM379 408h2v6h-2zM417 408h1v6h-1zM420 408h1v6h-1zM434 408h2v6h-2zM477 408h1v6h-1zM489 408h1v6h-1zM500 408h1v6h-1zM523 408h1v6h-1zM598 408h2v6h-2zM603 408h1v6h-1zM608 408h1v6h-1zM618 408h2v6h-2zM639 408h1v6h-1zM648 408h1v6h-1zM658 408h1v6h-1zM663 408h2v6h-2zM727 408h2v6h-2zM732 408h1v6h-1zM804 408h1v6h-1zM847 408h1v6h-1zM866 408h2v6h-2zM872 408h1v6h-1zM887 408h1v6h-1zM916 408h2v6h-2zM921 408h1v6h-1zM991 408h2v6h-2zM1003 408h2v6h-2zM1030 408h1v6h-1zM1037 408h5v6h-5zM1046 408h2v6h-2zM1052 408h1v6h-1zM1058 408h2v6h-2zM1061 408h2v6h-2zM1068 408h1v6h-1zM1078 408h2v6h-2zM1087 408h1v6h-1zM1089 408h1v6h-1zM98 402h1v6h-1zM274 402h2v6h-2zM284 402h1v6h-1zM290 402h1v6h-1zM293 402h1v6h-1zM311 402h1v6h-1zM322 402h2v6h-2zM333 402h1v6h-1zM347 402h1v6h-1zM360 402h1v6h-1zM394 402h2v6h-2zM397 402h1v6h-1zM399 402h2v6h-2zM420 402h1v6h-1zM444 402h2v6h-2zM467 402h2v6h-2zM475 402h2v6h-2zM509 402h1v6h-1zM521 402h2v6h-2zM533 402h2v6h-2zM536 402h1v6h-1zM561 402h1v6h-1zM600 402h1v6h-1zM639 402h1v6h-1zM641 402h1v6h-1zM666 402h2v6h-2zM711 402h1v6h-1zM732 402h1v6h-1zM740 402h1v6h-1zM747 402h1v6h-1zM767 402h1v6h-1zM771 402h2v6h-2zM784 402h2v6h-2zM809 402h2v6h-2zM844 402h1v6h-1zM861 402h1v6h-1zM873 402h1v6h-1zM912 402h2v6h-2zM919 402h1v6h-1zM928 402h1v6h-1zM985 402h1v6h-1zM998 402h1v6h-1zM1021 402h2v6h-2zM1031 402h1v6h-1zM1060 402h1v6h-1zM1068 402h2v6h-2zM1077 402h1v6h-1zM1089 402h1v6h-1zM113 396h2v6h-2zM155 396h2v6h-2zM158 396h1v6h-1zM234 396h2v6h-2zM251 396h2v6h-2zM331 396h1v6h-1zM343 396h1v6h-1zM360 396h1v6h-1zM364 396h3v6h-3zM380 396h1v6h-1zM399 396h2v6h-2zM444 396h2v6h-2zM475 396h2v6h-2zM500 396h1v6h-1zM505 396h4v6h-4zM512 396h1v6h-1zM526 396h2v6h-2zM537 396h1v6h-1zM547 396h1v6h-1zM561 396h1v6h-1zM566 396h1v6h-1zM625 396h2v6h-2zM629 396h1v6h-1zM638 396h1v6h-1zM643 396h1v6h-1zM656 396h2v6h-2zM668 396h1v6h-1zM742 396h1v6h-1zM763 396h3v6h-3zM769 396h2v6h-2zM799 396h1v6h-1zM860 396h1v6h-1zM868 396h1v6h-1zM879 396h2v6h-2zM887 396h1v6h-1zM942 396h1v6h-1zM981 396h1v6h-1zM1041 396h1v6h-1zM1051 396h1v6h-1zM1063 396h1v6h-1zM101 420h1v7h-1zM107 420h2v7h-2zM303 420h1v7h-1zM319 420h1v7h-1zM334 420h2v7h-2zM343 420h1v7h-1zM348 420h1v7h-1zM361 420h1v7h-1zM372 420h1v7h-1zM426 420h2v7h-2zM475 420h2v7h-2zM487 420h2v7h-2zM548 420h2v7h-2zM557 420h2v7h-2zM564 420h2v7h-2zM568 420h1v7h-1zM575 420h1v7h-1zM577 420h1v7h-1zM579 420h2v7h-2zM632 420h1v7h-1zM639 420h1v7h-1zM641 420h1v7h-1zM648 420h1v7h-1zM726 420h1v7h-1zM737 420h1v7h-1zM835 420h2v7h-2zM839 420h1v7h-1zM843 420h1v7h-1zM918 420h2v7h-2zM994 420h2v7h-2zM1005 420h2v7h-2zM1058 420h3v7h-3zM155 427h2v6h-2zM244 427h1v6h-1zM269 427h1v6h-1zM303 427h1v6h-1zM306 427h2v6h-2zM316 427h1v6h-1zM343 427h1v6h-1zM394 427h2v6h-2zM410 427h2v6h-2zM417 427h1v6h-1zM486 427h3v6h-3zM497 427h2v6h-2zM552 427h2v6h-2zM555 427h2v6h-2zM561 427h1v6h-1zM565 427h1v6h-1zM572 427h2v6h-2zM575 427h1v6h-1zM585 427h1v6h-1zM597 427h1v6h-1zM604 427h3v6h-3zM615 427h1v6h-1zM625 427h2v6h-2zM628 427h1v6h-1zM639 427h1v6h-1zM642 427h1v6h-1zM774 427h1v6h-1zM805 427h2v6h-2zM841 427h1v6h-1zM844 427h1v6h-1zM869 427h1v6h-1zM910 427h1v6h-1zM924 427h1v6h-1zM926 427h2v6h-2zM998 427h1v6h-1zM1014 427h1v6h-1zM1076 427h1v6h-1zM251 439h2v6h-2zM257 439h2v6h-2zM334 439h1v6h-1zM418 439h1v6h-1zM434 439h2v6h-2zM437 439h1v6h-1zM441 439h1v6h-1zM450 439h1v6h-1zM475 439h2v6h-2zM579 439h2v6h-2zM596 439h1v6h-1zM840 439h1v6h-1zM862 439h1v6h-1zM1077 439h1v6h-1zM1085 439h1v6h-1zM234 433h2v6h-2zM238 433h1v6h-1zM312 433h1v6h-1zM319 433h1v6h-1zM339 433h2v6h-2zM416 433h1v6h-1zM420 433h1v6h-1zM434 433h2v6h-2zM439 433h1v6h-1zM486 433h3v6h-3zM543 433h1v6h-1zM546 433h1v6h-1zM630 433h1v6h-1zM632 433h1v6h-1zM639 433h1v6h-1zM800 433h1v6h-1zM842 433h1v6h-1zM870 433h1v6h-1zM876 433h2v6h-2zM928 433h2v6h-2zM933 433h2v6h-2zM1074 433h3v6h-3zM1086 433h1v6h-1zM430 445h1v6h-1zM442 445h2v6h-2zM449 445h1v6h-1zM463 445h2v6h-2zM478 445h1v6h-1zM485 445h1v6h-1zM583 445h2v6h-2zM603 445h1v6h-1zM609 445h1v6h-1zM807 445h2v6h-2zM921 445h1v6h-1zM143 310h1v6h-1zM398 310h1v6h-1zM543 310h1v6h-1zM641 310h1v6h-1zM644 310h1v6h-1zM691 310h1v6h-1zM700 310h2v6h-2zM726 310h1v6h-1zM732 310h1v6h-1zM767 310h1v6h-1zM859 310h1v6h-1zM873 310h1v6h-1zM898 310h1v6h-1zM947 310h2v6h-2zM200 304h1v6h-1zM207 304h1v6h-1zM256 304h1v6h-1zM396 304h1v6h-1zM399 304h2v6h-2zM700 304h2v6h-2zM718 304h2v6h-2zM773 304h1v6h-1zM902 304h2v6h-2zM210 298h1v6h-1zM259 298h1v6h-1zM544 298h3v6h-3zM651 298h2v6h-2zM693 298h1v6h-1zM696 298h2v6h-2zM700 298h4v6h-4zM711 298h1v6h-1zM715 298h1v6h-1zM897 298h1v6h-1zM951 298h1v6h-1zM953 298h2v6h-2zM139 292h1v6h-1zM141 292h1v6h-1zM653 292h1v6h-1zM702 292h2v6h-2zM904 292h2v6h-2zM951 292h1v6h-1zM204 286h1v6h-1zM686 286h2v6h-2zM904 286h2v6h-2zM917 286h2v6h-2zM176 243h1v6h-1zM176 231h1v6h-1zM176 249h2v6h-2zM784 249h1v6h-1zM869 249h1v6h-1zM897 249h1v6h-1zM786 218h1v7h-1zM197 261h1v6h-1zM764 261h1v6h-1zM782 261h2v6h-2zM895 261h1v6h-1zM910 261h1v6h-1zM898 255h1v6h-1zM181 274h2v6h-2zM767 267h2v7h-2zM896 280h1v6h-1zM442 451h2v6h-2zM459 451h2v6h-2zM470 451h1v6h-1zM499 451h1v6h-1zM600 451h1v6h-1zM840 451h1v6h-1zM457 457h1v6h-1zM466 457h1v6h-1zM482 457h1v6h-1zM484 457h1v6h-1zM597 457h1v6h-1zM516 212h1v6h-1zM517 206h1v6h-1zM509 200h1v6h-1zM511 194h1v6h-1zM786 176h1v6h-1zM536 170h1v6h-1zM229 488h1v6h-1zM251 482h1v6h-1z"/>
<path fill="#00f3f8" d="M210 365h1v6h-1zM265 365h2v6h-2zM272 365h1v6h-1zM335 365h1v6h-1zM394 365h2v6h-2zM403 365h1v6h-1zM414 365h1v6h-1zM423 365h1v6h-1zM429 365h1v6h-1zM442 365h2v6h-2zM478 365h3v6h-3zM482 365h1v6h-1zM501 365h2v6h-2zM532 365h1v6h-1zM536 365h1v6h-1zM541 365h2v6h-2zM550 365h1v6h-1zM559 365h1v6h-1zM571 365h1v6h-1zM577 365h1v6h-1zM598 365h2v6h-2zM603 365h1v6h-1zM613 365h1v6h-1zM620 365h2v6h-2zM642 365h1v6h-1zM645 365h2v6h-2zM651 365h2v6h-2zM711 365h3v6h-3zM730 365h2v6h-2zM738 365h1v6h-1zM750 365h2v6h-2zM769 365h2v6h-2zM799 365h1v6h-1zM825 365h1v6h-1zM829 365h1v6h-1zM835 365h2v6h-2zM847 365h1v6h-1zM851 365h1v6h-1zM871 365h1v6h-1zM892 365h1v6h-1zM926 365h2v6h-2zM935 365h1v6h-1zM942 365h1v6h-1zM974 365h1v6h-1zM988 365h2v6h-2zM999 365h1v6h-1zM1016 365h2v6h-2zM1033 365h1v6h-1zM1090 365h1v6h-1zM260 359h2v6h-2zM414 359h1v6h-1zM428 359h1v6h-1zM431 359h1v6h-1zM438 359h1v6h-1zM456 359h1v6h-1zM463 359h2v6h-2zM485 359h1v6h-1zM500 359h1v6h-1zM536 359h1v6h-1zM585 359h1v6h-1zM603 359h1v6h-1zM611 359h2v6h-2zM618 359h2v6h-2zM638 359h1v6h-1zM648 359h1v6h-1zM675 359h2v6h-2zM692 359h1v6h-1zM704 359h1v6h-1zM708 359h2v6h-2zM748 359h1v6h-1zM773 359h2v6h-2zM787 359h1v6h-1zM807 359h2v6h-2zM859 359h1v6h-1zM929 359h1v6h-1zM942 359h1v6h-1zM944 359h2v6h-2zM1000 359h1v6h-1zM1008 359h1v6h-1zM246 353h1v6h-1zM249 353h2v6h-2zM255 353h1v6h-1zM312 353h1v6h-1zM335 353h1v6h-1zM399 353h2v6h-2zM424 353h2v6h-2zM428 353h1v6h-1zM474 353h1v6h-1zM486 353h1v6h-1zM500 353h1v6h-1zM530 353h1v6h-1zM537 353h1v6h-1zM555 353h1v6h-1zM559 353h1v6h-1zM562 353h1v6h-1zM571 353h1v6h-1zM575 353h1v6h-1zM581 353h2v6h-2zM586 353h2v6h-2zM593 353h1v6h-1zM597 353h1v6h-1zM607 353h1v6h-1zM614 353h1v6h-1zM624 353h1v6h-1zM635 353h2v6h-2zM639 353h1v6h-1zM641 353h1v6h-1zM693 353h1v6h-1zM739 353h1v6h-1zM771 353h2v6h-2zM789 353h2v6h-2zM805 353h2v6h-2zM827 353h2v6h-2zM841 353h1v6h-1zM843 353h1v6h-1zM863 353h1v6h-1zM868 353h1v6h-1zM870 353h2v6h-2zM874 353h2v6h-2zM878 353h1v6h-1zM883 353h3v6h-3zM929 353h1v6h-1zM932 353h1v6h-1zM941 353h1v6h-1zM969 353h1v6h-1zM978 353h1v6h-1zM982 353h1v6h-1zM985 353h3v6h-3zM263 347h2v6h-2zM268 347h1v6h-1zM366 347h1v6h-1zM397 347h1v6h-1zM402 347h1v6h-1zM405 347h1v6h-1zM437 347h1v6h-1zM479 347h2v6h-2zM483 347h1v6h-1zM489 347h1v6h-1zM496 347h1v6h-1zM500 347h1v6h-1zM543 347h1v6h-1zM590 347h1v6h-1zM598 347h2v6h-2zM613 347h1v6h-1zM629 347h1v6h-1zM633 347h1v6h-1zM649 347h1v6h-1zM670 347h1v6h-1zM681 347h1v6h-1zM684 347h1v6h-1zM688 347h1v6h-1zM698 347h1v6h-1zM712 347h3v6h-3zM727 347h2v6h-2zM732 347h1v6h-1zM761 347h1v6h-1zM774 347h1v6h-1zM840 347h1v6h-1zM842 347h1v6h-1zM846 347h1v6h-1zM862 347h1v6h-1zM888 347h2v6h-2zM933 347h2v6h-2zM999 347h1v6h-1zM306 341h2v6h-2zM313 341h1v6h-1zM334 341h2v6h-2zM402 341h1v6h-1zM418 341h2v6h-2zM422 341h1v6h-1zM426 341h3v6h-3zM444 341h2v6h-2zM449 341h1v6h-1zM451 341h1v6h-1zM489 341h1v6h-1zM494 341h2v6h-2zM519 341h1v6h-1zM524 341h1v6h-1zM528 341h2v6h-2zM548 341h2v6h-2zM564 341h1v6h-1zM572 341h2v6h-2zM598 341h2v6h-2zM607 341h1v6h-1zM627 341h1v6h-1zM645 341h2v6h-2zM743 341h2v6h-2zM769 341h2v6h-2zM783 341h1v6h-1zM810 341h1v6h-1zM863 341h1v6h-1zM876 341h2v6h-2zM879 341h2v6h-2zM883 341h2v6h-2zM886 341h1v6h-1zM940 341h1v6h-1zM1009 341h1v6h-1zM1021 341h1v6h-1zM257 335h2v6h-2zM335 335h1v6h-1zM399 335h2v6h-2zM494 335h2v6h-2zM524 335h2v6h-2zM532 335h1v6h-1zM535 335h1v6h-1zM559 335h1v6h-1zM569 335h1v6h-1zM574 335h1v6h-1zM578 335h1v6h-1zM581 335h2v6h-2zM609 335h1v6h-1zM611 335h2v6h-2zM645 335h2v6h-2zM653 335h1v6h-1zM670 335h1v6h-1zM680 335h1v6h-1zM704 335h1v6h-1zM715 335h1v6h-1zM735 335h2v6h-2zM743 335h2v6h-2zM758 335h2v6h-2zM768 335h1v6h-1zM810 335h1v6h-1zM885 335h1v6h-1zM933 335h2v6h-2zM938 335h2v6h-2zM997 335h1v6h-1zM999 335h1v6h-1zM90 329h1v6h-1zM402 329h1v6h-1zM526 329h4v6h-4zM536 329h1v6h-1zM548 329h2v6h-2zM554 329h1v6h-1zM565 329h1v6h-1zM589 329h1v6h-1zM591 329h2v6h-2zM594 329h2v6h-2zM622 329h1v6h-1zM639 329h1v6h-1zM653 329h1v6h-1zM677 329h1v6h-1zM680 329h1v6h-1zM685 329h1v6h-1zM702 329h3v6h-3zM712 329h2v6h-2zM721 329h1v6h-1zM723 329h1v6h-1zM727 329h2v6h-2zM740 329h1v6h-1zM879 329h2v6h-2zM940 329h1v6h-1zM1003 329h2v6h-2zM1008 329h1v6h-1zM402 323h1v6h-1zM470 323h1v6h-1zM551 323h3v6h-3zM562 323h1v6h-1zM588 323h1v6h-1zM610 323h1v6h-1zM634 323h1v6h-1zM684 323h1v6h-1zM692 323h2v6h-2zM699 323h1v6h-1zM712 323h2v6h-2zM730 323h2v6h-2zM742 323h1v6h-1zM769 323h2v6h-2zM774 323h1v6h-1zM866 323h2v6h-2zM869 323h2v6h-2zM874 323h2v6h-2zM938 323h2v6h-2zM941 323h1v6h-1zM999 323h1v6h-1zM1001 323h2v6h-2zM256 316h1v7h-1zM397 316h1v7h-1zM415 316h1v7h-1zM541 316h2v7h-2zM548 316h2v7h-2zM575 316h1v7h-1zM623 316h1v7h-1zM625 316h2v7h-2zM651 316h2v7h-2zM708 316h2v7h-2zM743 316h2v7h-2zM771 316h3v7h-3zM861 316h1v7h-1zM938 316h2v7h-2zM942 316h1v7h-1zM88 371h1v7h-1zM309 371h1v7h-1zM358 371h1v7h-1zM372 371h1v7h-1zM423 371h1v7h-1zM437 371h1v7h-1zM449 371h1v7h-1zM458 371h5v7h-5zM475 371h2v7h-2zM510 371h1v7h-1zM535 371h1v7h-1zM543 371h1v7h-1zM588 371h1v7h-1zM605 371h2v7h-2zM610 371h1v7h-1zM623 371h1v7h-1zM628 371h1v7h-1zM641 371h1v7h-1zM716 371h1v7h-1zM737 371h2v7h-2zM741 371h1v7h-1zM771 371h2v7h-2zM852 371h1v7h-1zM862 371h1v7h-1zM879 371h2v7h-2zM889 371h1v7h-1zM931 371h1v7h-1zM977 371h1v7h-1zM985 371h1v7h-1zM993 371h1v7h-1zM997 371h1v7h-1zM1001 371h2v7h-2zM1005 371h2v7h-2zM104 378h1v6h-1zM253 378h2v6h-2zM268 378h1v6h-1zM284 378h2v6h-2zM289 378h1v6h-1zM295 378h2v6h-2zM302 378h1v6h-1zM304 378h1v6h-1zM311 378h1v6h-1zM316 378h1v6h-1zM322 378h2v6h-2zM338 378h1v6h-1zM341 378h2v6h-2zM348 378h1v6h-1zM354 378h2v6h-2zM367 378h1v6h-1zM374 378h3v6h-3zM393 378h1v6h-1zM417 378h1v6h-1zM431 378h1v6h-1zM449 378h1v6h-1zM526 378h2v6h-2zM575 378h1v6h-1zM583 378h2v6h-2zM611 378h2v6h-2zM628 378h1v6h-1zM633 378h1v6h-1zM635 378h2v6h-2zM651 378h2v6h-2zM677 378h1v6h-1zM689 378h2v6h-2zM711 378h1v6h-1zM720 378h1v6h-1zM724 378h2v6h-2zM732 378h1v6h-1zM737 378h3v6h-3zM743 378h2v6h-2zM747 378h1v6h-1zM771 378h2v6h-2zM809 378h1v6h-1zM837 378h1v6h-1zM839 378h2v6h-2zM854 378h2v6h-2zM862 378h1v6h-1zM977 378h1v6h-1zM993 378h1v6h-1zM1012 378h1v6h-1zM1021 378h1v6h-1zM234 384h2v6h-2zM238 384h1v6h-1zM245 384h3v6h-3zM269 384h1v6h-1zM287 384h3v6h-3zM310 384h1v6h-1zM317 384h1v6h-1zM333 384h1v6h-1zM349 384h1v6h-1zM370 384h1v6h-1zM384 384h1v6h-1zM391 384h2v6h-2zM396 384h1v6h-1zM450 384h1v6h-1zM482 384h2v6h-2zM497 384h2v6h-2zM505 384h1v6h-1zM523 384h1v6h-1zM550 384h2v6h-2zM611 384h2v6h-2zM620 384h2v6h-2zM630 384h1v6h-1zM649 384h1v6h-1zM716 384h1v6h-1zM732 384h1v6h-1zM739 384h1v6h-1zM750 384h2v6h-2zM801 384h1v6h-1zM810 384h1v6h-1zM849 384h2v6h-2zM860 384h1v6h-1zM870 384h1v6h-1zM879 384h3v6h-3zM883 384h2v6h-2zM938 384h2v6h-2zM975 384h2v6h-2zM981 384h1v6h-1zM998 384h2v6h-2zM1005 384h2v6h-2zM1009 384h1v6h-1zM1015 384h3v6h-3zM1022 384h1v6h-1zM1037 384h4v6h-4zM113 390h2v6h-2zM124 390h1v6h-1zM158 390h1v6h-1zM253 390h2v6h-2zM269 390h1v6h-1zM284 390h2v6h-2zM289 390h1v6h-1zM292 390h1v6h-1zM295 390h2v6h-2zM303 390h1v6h-1zM332 390h1v6h-1zM336 390h2v6h-2zM349 390h1v6h-1zM353 390h1v6h-1zM358 390h2v6h-2zM386 390h1v6h-1zM414 390h1v6h-1zM451 390h1v6h-1zM475 390h2v6h-2zM497 390h3v6h-3zM507 390h3v6h-3zM533 390h3v6h-3zM538 390h1v6h-1zM550 390h1v6h-1zM561 390h2v6h-2zM605 390h2v6h-2zM608 390h1v6h-1zM613 390h1v6h-1zM632 390h2v6h-2zM662 390h1v6h-1zM712 390h2v6h-2zM727 390h2v6h-2zM735 390h3v6h-3zM741 390h1v6h-1zM768 390h1v6h-1zM799 390h1v6h-1zM841 390h1v6h-1zM850 390h1v6h-1zM869 390h1v6h-1zM871 390h1v6h-1zM914 390h2v6h-2zM993 390h1v6h-1zM1007 390h1v6h-1zM1016 390h2v6h-2zM233 414h3v6h-3zM245 414h1v6h-1zM272 414h1v6h-1zM306 414h2v6h-2zM312 414h1v6h-1zM336 414h2v6h-2zM353 414h1v6h-1zM373 414h1v6h-1zM377 414h1v6h-1zM404 414h1v6h-1zM418 414h2v6h-2zM424 414h2v6h-2zM428 414h1v6h-1zM438 414h1v6h-1zM459 414h2v6h-2zM497 414h2v6h-2zM578 414h1v6h-1zM586 414h2v6h-2zM591 414h2v6h-2zM616 414h2v6h-2zM710 414h1v6h-1zM724 414h2v6h-2zM768 414h1v6h-1zM771 414h2v6h-2zM777 414h2v6h-2zM784 414h2v6h-2zM840 414h1v6h-1zM854 414h2v6h-2zM920 414h1v6h-1zM928 414h1v6h-1zM1003 414h2v6h-2zM1039 414h2v6h-2zM1061 414h2v6h-2zM1064 414h2v6h-2zM256 408h1v6h-1zM279 408h1v6h-1zM294 408h1v6h-1zM312 408h2v6h-2zM315 408h1v6h-1zM324 408h1v6h-1zM339 408h2v6h-2zM356 408h2v6h-2zM394 408h2v6h-2zM439 408h1v6h-1zM442 408h2v6h-2zM457 408h1v6h-1zM474 408h1v6h-1zM485 408h1v6h-1zM491 408h1v6h-1zM548 408h3v6h-3zM552 408h2v6h-2zM555 408h1v6h-1zM576 408h2v6h-2zM589 408h1v6h-1zM627 408h1v6h-1zM743 408h2v6h-2zM777 408h2v6h-2zM784 408h2v6h-2zM831 408h2v6h-2zM863 408h1v6h-1zM935 408h1v6h-1zM984 408h1v6h-1zM998 408h1v6h-1zM1016 408h2v6h-2zM1021 408h1v6h-1zM1060 408h1v6h-1zM1066 408h1v6h-1zM251 402h1v6h-1zM309 402h1v6h-1zM325 402h1v6h-1zM330 402h1v6h-1zM343 402h1v6h-1zM403 402h1v6h-1zM418 402h2v6h-2zM424 402h2v6h-2zM439 402h1v6h-1zM461 402h2v6h-2zM479 402h2v6h-2zM503 402h2v6h-2zM524 402h1v6h-1zM568 402h1v6h-1zM627 402h1v6h-1zM638 402h1v6h-1zM653 402h1v6h-1zM663 402h2v6h-2zM721 402h1v6h-1zM727 402h2v6h-2zM738 402h1v6h-1zM775 402h1v6h-1zM871 402h2v6h-2zM887 402h1v6h-1zM916 402h2v6h-2zM926 402h2v6h-2zM1003 402h1v6h-1zM1013 402h1v6h-1zM1052 402h1v6h-1zM1056 402h1v6h-1zM1066 402h1v6h-1zM238 396h1v6h-1zM242 396h1v6h-1zM269 396h1v6h-1zM287 396h1v6h-1zM292 396h1v6h-1zM302 396h1v6h-1zM309 396h1v6h-1zM318 396h2v6h-2zM353 396h1v6h-1zM355 396h1v6h-1zM361 396h1v6h-1zM375 396h2v6h-2zM382 396h1v6h-1zM394 396h3v6h-3zM420 396h1v6h-1zM423 396h1v6h-1zM478 396h1v6h-1zM487 396h2v6h-2zM493 396h1v6h-1zM496 396h3v6h-3zM528 396h2v6h-2zM559 396h1v6h-1zM574 396h1v6h-1zM598 396h2v6h-2zM622 396h1v6h-1zM631 396h1v6h-1zM637 396h1v6h-1zM648 396h1v6h-1zM653 396h1v6h-1zM711 396h1v6h-1zM726 396h1v6h-1zM740 396h1v6h-1zM771 396h2v6h-2zM784 396h2v6h-2zM794 396h2v6h-2zM801 396h1v6h-1zM809 396h1v6h-1zM846 396h1v6h-1zM853 396h1v6h-1zM861 396h1v6h-1zM871 396h1v6h-1zM873 396h1v6h-1zM929 396h1v6h-1zM941 396h1v6h-1zM988 396h1v6h-1zM994 396h2v6h-2zM1007 396h2v6h-2zM1010 396h2v6h-2zM1019 396h1v6h-1zM1021 396h1v6h-1zM1049 396h1v6h-1zM234 420h2v7h-2zM249 420h2v7h-2zM255 420h1v7h-1zM270 420h1v7h-1zM302 420h1v7h-1zM308 420h1v7h-1zM316 420h1v7h-1zM336 420h2v7h-2zM429 420h1v7h-1zM438 420h1v7h-1zM444 420h2v7h-2zM449 420h1v7h-1zM454 420h2v7h-2zM459 420h2v7h-2zM465 420h1v7h-1zM483 420h1v7h-1zM562 420h1v7h-1zM572 420h2v7h-2zM581 420h2v7h-2zM601 420h3v7h-3zM614 420h1v7h-1zM622 420h1v7h-1zM799 420h2v7h-2zM804 420h1v7h-1zM860 420h1v7h-1zM921 420h1v7h-1zM933 420h2v7h-2zM1008 420h2v7h-2zM1022 420h1v7h-1zM1041 420h1v7h-1zM1076 420h1v7h-1zM113 427h2v6h-2zM234 427h2v6h-2zM246 427h1v6h-1zM257 427h2v6h-2zM319 427h1v6h-1zM424 427h2v6h-2zM438 427h1v6h-1zM459 427h2v6h-2zM465 427h1v6h-1zM483 427h1v6h-1zM499 427h1v6h-1zM557 427h3v6h-3zM579 427h2v6h-2zM594 427h2v6h-2zM603 427h1v6h-1zM611 427h2v6h-2zM632 427h1v6h-1zM637 427h1v6h-1zM801 427h1v6h-1zM804 427h1v6h-1zM916 427h2v6h-2zM920 427h1v6h-1zM931 427h1v6h-1zM1003 427h2v6h-2zM1020 427h1v6h-1zM1074 427h2v6h-2zM430 439h1v6h-1zM438 439h1v6h-1zM444 439h2v6h-2zM465 439h1v6h-1zM477 439h1v6h-1zM482 439h1v6h-1zM494 439h2v6h-2zM501 439h2v6h-2zM578 439h1v6h-1zM860 439h1v6h-1zM929 439h1v6h-1zM265 433h2v6h-2zM269 433h1v6h-1zM424 433h2v6h-2zM441 433h3v6h-3zM451 433h1v6h-1zM459 433h4v6h-4zM497 433h2v6h-2zM581 433h2v6h-2zM588 433h1v6h-1zM596 433h1v6h-1zM603 433h1v6h-1zM641 433h1v6h-1zM644 433h1v6h-1zM839 433h1v6h-1zM859 433h1v6h-1zM863 433h1v6h-1zM916 433h2v6h-2zM930 433h1v6h-1zM1019 433h1v6h-1zM253 445h1v6h-1zM426 445h2v6h-2zM437 445h1v6h-1zM483 445h2v6h-2zM487 445h2v6h-2zM920 445h1v6h-1zM211 310h1v6h-1zM403 310h1v6h-1zM513 310h1v6h-1zM624 310h1v6h-1zM651 310h2v6h-2zM685 310h1v6h-1zM697 310h1v6h-1zM711 310h1v6h-1zM717 310h1v6h-1zM860 310h1v6h-1zM911 310h2v6h-2zM944 310h2v6h-2zM257 304h2v6h-2zM263 304h2v6h-2zM569 304h1v6h-1zM716 304h1v6h-1zM897 304h1v6h-1zM906 304h1v6h-1zM645 298h2v6h-2zM710 298h1v6h-1zM717 298h1v6h-1zM902 298h2v6h-2zM911 298h2v6h-2zM544 292h2v6h-2zM696 292h1v6h-1zM711 292h1v6h-1zM901 292h3v6h-3zM906 286h1v6h-1zM522 231h1v6h-1zM787 231h2v6h-2zM176 225h1v6h-1zM782 225h2v6h-2zM787 218h2v7h-2zM914 274h1v6h-1zM895 280h1v6h-1zM908 280h1v6h-1zM911 280h2v6h-2zM441 451h1v6h-1zM447 451h1v6h-1zM454 451h3v6h-3zM463 451h2v6h-2zM486 451h3v6h-3zM492 451h1v6h-1zM494 451h2v6h-2zM912 451h2v6h-2zM472 457h2v6h-2zM481 457h1v6h-1zM912 457h2v6h-2zM497 463h2v6h-2zM787 200h2v6h-2zM785 194h1v6h-1zM787 194h2v6h-2zM542 96h1v6h-1z"/>
<path fill="#00ffb8" d="M246 365h1v6h-1zM255 365h1v6h-1zM368 365h1v6h-1zM385 365h1v6h-1zM404 365h1v6h-1zM420 365h1v6h-1zM426 365h2v6h-2zM430 365h1v6h-1zM436 365h2v6h-2zM441 365h1v6h-1zM449 365h1v6h-1zM458 365h1v6h-1zM484 365h1v6h-1zM489 365h1v6h-1zM513 365h1v6h-1zM526 365h2v6h-2zM533 365h3v6h-3zM557 365h2v6h-2zM576 365h1v6h-1zM588 365h1v6h-1zM593 365h1v6h-1zM604 365h1v6h-1zM696 365h1v6h-1zM716 365h1v6h-1zM804 365h1v6h-1zM840 365h1v6h-1zM842 365h1v6h-1zM869 365h2v6h-2zM876 365h2v6h-2zM978 365h1v6h-1zM997 365h2v6h-2zM1001 365h2v6h-2zM1009 365h1v6h-1zM1023 365h2v6h-2zM263 359h2v6h-2zM274 359h2v6h-2zM397 359h1v6h-1zM434 359h3v6h-3zM442 359h2v6h-2zM447 359h1v6h-1zM477 359h1v6h-1zM507 359h3v6h-3zM541 359h2v6h-2zM556 359h1v6h-1zM562 359h1v6h-1zM565 359h1v6h-1zM588 359h1v6h-1zM596 359h1v6h-1zM598 359h2v6h-2zM608 359h1v6h-1zM632 359h2v6h-2zM649 359h1v6h-1zM668 359h1v6h-1zM724 359h2v6h-2zM784 359h2v6h-2zM805 359h2v6h-2zM873 359h1v6h-1zM928 359h1v6h-1zM938 359h2v6h-2zM974 359h1v6h-1zM998 359h1v6h-1zM1001 359h2v6h-2zM1013 359h1v6h-1zM268 353h1v6h-1zM308 353h1v6h-1zM310 353h1v6h-1zM368 353h1v6h-1zM420 353h1v6h-1zM430 353h2v6h-2zM434 353h2v6h-2zM459 353h2v6h-2zM472 353h2v6h-2zM489 353h1v6h-1zM494 353h3v6h-3zM506 353h1v6h-1zM533 353h2v6h-2zM538 353h1v6h-1zM556 353h1v6h-1zM568 353h1v6h-1zM577 353h2v6h-2zM589 353h1v6h-1zM608 353h1v6h-1zM611 353h2v6h-2zM688 353h1v6h-1zM712 353h2v6h-2zM796 353h1v6h-1zM817 353h1v6h-1zM850 353h1v6h-1zM993 353h1v6h-1zM1000 353h1v6h-1zM1012 353h1v6h-1zM305 347h1v6h-1zM315 347h1v6h-1zM368 347h1v6h-1zM414 347h2v6h-2zM420 347h1v6h-1zM431 347h1v6h-1zM441 347h1v6h-1zM456 347h1v6h-1zM469 347h1v6h-1zM481 347h1v6h-1zM487 347h2v6h-2zM535 347h1v6h-1zM551 347h1v6h-1zM572 347h2v6h-2zM575 347h2v6h-2zM593 347h1v6h-1zM618 347h5v6h-5zM624 347h1v6h-1zM630 347h1v6h-1zM691 347h2v6h-2zM696 347h1v6h-1zM700 347h2v6h-2zM735 347h3v6h-3zM741 347h1v6h-1zM771 347h2v6h-2zM799 347h1v6h-1zM801 347h1v6h-1zM843 347h1v6h-1zM847 347h1v6h-1zM849 347h2v6h-2zM859 347h1v6h-1zM942 347h1v6h-1zM975 347h2v6h-2zM260 341h2v6h-2zM263 341h2v6h-2zM396 341h1v6h-1zM442 341h2v6h-2zM469 341h1v6h-1zM499 341h1v6h-1zM513 341h1v6h-1zM537 341h1v6h-1zM554 341h1v6h-1zM559 341h1v6h-1zM575 341h1v6h-1zM588 341h1v6h-1zM596 341h1v6h-1zM635 341h2v6h-2zM651 341h2v6h-2zM684 341h1v6h-1zM724 341h2v6h-2zM737 341h1v6h-1zM773 341h1v6h-1zM805 341h2v6h-2zM931 341h1v6h-1zM1003 341h2v6h-2zM1015 341h3v6h-3zM1025 341h1v6h-1zM431 335h1v6h-1zM496 335h1v6h-1zM499 335h1v6h-1zM528 335h2v6h-2zM552 335h2v6h-2zM585 335h3v6h-3zM613 335h1v6h-1zM633 335h1v6h-1zM686 335h1v6h-1zM693 335h1v6h-1zM696 335h1v6h-1zM710 335h1v6h-1zM750 335h2v6h-2zM876 335h2v6h-2zM901 335h1v6h-1zM940 335h1v6h-1zM942 335h1v6h-1zM996 335h1v6h-1zM1012 335h2v6h-2zM1019 335h1v6h-1zM1021 335h1v6h-1zM260 329h2v6h-2zM431 329h1v6h-1zM456 329h1v6h-1zM458 329h1v6h-1zM494 329h2v6h-2zM551 329h1v6h-1zM555 329h1v6h-1zM571 329h1v6h-1zM585 329h1v6h-1zM614 329h1v6h-1zM618 329h4v6h-4zM687 329h1v6h-1zM693 329h1v6h-1zM715 329h2v6h-2zM720 329h1v6h-1zM768 329h1v6h-1zM804 329h1v6h-1zM869 329h1v6h-1zM997 329h1v6h-1zM999 329h1v6h-1zM1005 329h2v6h-2zM260 323h2v6h-2zM456 323h1v6h-1zM471 323h1v6h-1zM544 323h2v6h-2zM560 323h1v6h-1zM569 323h1v6h-1zM575 323h1v6h-1zM689 323h2v6h-2zM696 323h1v6h-1zM737 323h1v6h-1zM771 323h3v6h-3zM805 323h2v6h-2zM859 323h1v6h-1zM863 323h1v6h-1zM871 323h1v6h-1zM888 323h1v6h-1zM898 323h1v6h-1zM259 316h1v7h-1zM543 316h1v7h-1zM546 316h1v7h-1zM684 316h1v7h-1zM748 316h1v7h-1zM863 316h1v7h-1zM953 316h2v7h-2zM996 316h1v7h-1zM1009 316h1v7h-1zM249 371h1v7h-1zM336 371h2v7h-2zM377 371h1v7h-1zM431 371h1v7h-1zM442 371h2v7h-2zM450 371h1v7h-1zM465 371h1v7h-1zM477 371h1v7h-1zM481 371h1v7h-1zM492 371h1v7h-1zM504 371h1v7h-1zM507 371h2v7h-2zM539 371h2v7h-2zM550 371h1v7h-1zM555 371h1v7h-1zM559 371h1v7h-1zM585 371h1v7h-1zM593 371h3v7h-3zM613 371h1v7h-1zM615 371h1v7h-1zM630 371h1v7h-1zM699 371h1v7h-1zM722 371h1v7h-1zM769 371h2v7h-2zM778 371h1v7h-1zM805 371h2v7h-2zM827 371h2v7h-2zM847 371h1v7h-1zM872 371h1v7h-1zM987 371h1v7h-1zM1000 371h1v7h-1zM1003 371h2v7h-2zM1008 371h1v7h-1zM1014 371h1v7h-1zM249 378h2v6h-2zM263 378h2v6h-2zM271 378h2v6h-2zM274 378h4v6h-4zM287 378h1v6h-1zM312 378h1v6h-1zM325 378h3v6h-3zM339 378h2v6h-2zM366 378h1v6h-1zM426 378h3v6h-3zM439 378h1v6h-1zM442 378h2v6h-2zM459 378h2v6h-2zM463 378h2v6h-2zM483 378h1v6h-1zM485 378h2v6h-2zM507 378h2v6h-2zM533 378h2v6h-2zM537 378h1v6h-1zM551 378h1v6h-1zM564 378h1v6h-1zM579 378h2v6h-2zM589 378h1v6h-1zM591 378h2v6h-2zM603 378h1v6h-1zM607 378h1v6h-1zM620 378h3v6h-3zM644 378h1v6h-1zM649 378h1v6h-1zM696 378h1v6h-1zM699 378h1v6h-1zM712 378h2v6h-2zM817 378h1v6h-1zM831 378h2v6h-2zM842 378h2v6h-2zM928 378h1v6h-1zM941 378h1v6h-1zM984 378h1v6h-1zM996 378h1v6h-1zM1000 378h1v6h-1zM244 384h1v6h-1zM253 384h2v6h-2zM268 384h1v6h-1zM306 384h2v6h-2zM322 384h3v6h-3zM341 384h2v6h-2zM348 384h1v6h-1zM372 384h1v6h-1zM377 384h1v6h-1zM404 384h1v6h-1zM407 384h2v6h-2zM428 384h1v6h-1zM442 384h2v6h-2zM447 384h1v6h-1zM458 384h1v6h-1zM485 384h1v6h-1zM491 384h1v6h-1zM493 384h1v6h-1zM500 384h1v6h-1zM537 384h1v6h-1zM546 384h1v6h-1zM548 384h2v6h-2zM561 384h1v6h-1zM565 384h1v6h-1zM583 384h2v6h-2zM613 384h1v6h-1zM633 384h1v6h-1zM645 384h2v6h-2zM714 384h1v6h-1zM931 384h2v6h-2zM1000 384h1v6h-1zM238 390h1v6h-1zM255 390h1v6h-1zM263 390h2v6h-2zM288 390h1v6h-1zM294 390h1v6h-1zM317 390h1v6h-1zM325 390h1v6h-1zM328 390h2v6h-2zM343 390h1v6h-1zM354 390h1v6h-1zM370 390h1v6h-1zM428 390h1v6h-1zM434 390h2v6h-2zM440 390h1v6h-1zM447 390h1v6h-1zM494 390h2v6h-2zM552 390h2v6h-2zM569 390h1v6h-1zM578 390h1v6h-1zM581 390h2v6h-2zM596 390h1v6h-1zM611 390h2v6h-2zM620 390h2v6h-2zM648 390h1v6h-1zM738 390h1v6h-1zM804 390h1v6h-1zM859 390h1v6h-1zM863 390h1v6h-1zM873 390h1v6h-1zM930 390h1v6h-1zM978 390h1v6h-1zM994 390h2v6h-2zM997 390h1v6h-1zM1003 390h2v6h-2zM1018 390h1v6h-1zM251 414h2v6h-2zM255 414h1v6h-1zM268 414h1v6h-1zM310 414h1v6h-1zM402 414h2v6h-2zM429 414h1v6h-1zM436 414h1v6h-1zM447 414h1v6h-1zM449 414h1v6h-1zM472 414h3v6h-3zM477 414h2v6h-2zM489 414h1v6h-1zM491 414h1v6h-1zM494 414h2v6h-2zM554 414h1v6h-1zM565 414h1v6h-1zM575 414h1v6h-1zM579 414h2v6h-2zM596 414h1v6h-1zM618 414h2v6h-2zM624 414h1v6h-1zM633 414h1v6h-1zM872 414h1v6h-1zM1076 414h1v6h-1zM257 408h2v6h-2zM272 408h1v6h-1zM284 408h2v6h-2zM328 408h2v6h-2zM366 408h1v6h-1zM403 408h2v6h-2zM423 408h1v6h-1zM441 408h1v6h-1zM451 408h1v6h-1zM463 408h2v6h-2zM470 408h1v6h-1zM479 408h2v6h-2zM487 408h2v6h-2zM520 408h1v6h-1zM554 408h1v6h-1zM557 408h2v6h-2zM579 408h2v6h-2zM591 408h2v6h-2zM611 408h2v6h-2zM629 408h1v6h-1zM633 408h2v6h-2zM769 408h2v6h-2zM801 408h1v6h-1zM996 408h1v6h-1zM1012 408h1v6h-1zM250 402h1v6h-1zM277 402h1v6h-1zM405 402h1v6h-1zM437 402h1v6h-1zM446 402h1v6h-1zM456 402h1v6h-1zM485 402h1v6h-1zM487 402h3v6h-3zM507 402h2v6h-2zM544 402h2v6h-2zM551 402h1v6h-1zM564 402h1v6h-1zM571 402h1v6h-1zM576 402h1v6h-1zM596 402h1v6h-1zM604 402h1v6h-1zM629 402h1v6h-1zM634 402h1v6h-1zM645 402h2v6h-2zM739 402h1v6h-1zM831 402h2v6h-2zM840 402h1v6h-1zM843 402h1v6h-1zM921 402h1v6h-1zM994 402h1v6h-1zM997 402h1v6h-1zM1090 402h1v6h-1zM256 396h1v6h-1zM262 396h1v6h-1zM271 396h1v6h-1zM288 396h1v6h-1zM290 396h1v6h-1zM316 396h1v6h-1zM336 396h2v6h-2zM369 396h1v6h-1zM385 396h2v6h-2zM431 396h1v6h-1zM439 396h1v6h-1zM442 396h2v6h-2zM459 396h2v6h-2zM465 396h1v6h-1zM477 396h1v6h-1zM544 396h3v6h-3zM551 396h1v6h-1zM562 396h1v6h-1zM564 396h1v6h-1zM585 396h1v6h-1zM588 396h1v6h-1zM593 396h1v6h-1zM608 396h1v6h-1zM623 396h1v6h-1zM627 396h2v6h-2zM635 396h2v6h-2zM645 396h2v6h-2zM710 396h1v6h-1zM712 396h2v6h-2zM743 396h2v6h-2zM842 396h1v6h-1zM863 396h1v6h-1zM931 396h1v6h-1zM938 396h2v6h-2zM989 396h1v6h-1zM996 396h1v6h-1zM1022 396h1v6h-1zM1090 396h1v6h-1zM263 420h2v7h-2zM271 420h1v7h-1zM312 420h1v7h-1zM404 420h1v7h-1zM428 420h1v7h-1zM436 420h2v7h-2zM447 420h1v7h-1zM457 420h1v7h-1zM463 420h2v7h-2zM589 420h1v7h-1zM593 420h1v7h-1zM604 420h1v7h-1zM668 420h2v7h-2zM863 420h1v7h-1zM869 420h1v7h-1zM928 420h1v7h-1zM243 427h1v6h-1zM255 427h1v6h-1zM430 427h1v6h-1zM434 427h2v6h-2zM442 427h2v6h-2zM458 427h1v6h-1zM463 427h2v6h-2zM467 427h2v6h-2zM477 427h1v6h-1zM479 427h2v6h-2zM485 427h1v6h-1zM490 427h1v6h-1zM503 427h1v6h-1zM578 427h1v6h-1zM613 427h1v6h-1zM645 427h2v6h-2zM870 427h1v6h-1zM921 427h1v6h-1zM1012 427h1v6h-1zM1089 427h2v6h-2zM255 439h2v6h-2zM263 439h2v6h-2zM336 439h2v6h-2zM424 439h2v6h-2zM428 439h1v6h-1zM431 439h1v6h-1zM454 439h2v6h-2zM463 439h2v6h-2zM467 439h2v6h-2zM492 439h1v6h-1zM593 439h1v6h-1zM601 439h2v6h-2zM607 439h1v6h-1zM930 439h1v6h-1zM1028 439h1v6h-1zM253 433h2v6h-2zM262 433h1v6h-1zM305 433h1v6h-1zM430 433h1v6h-1zM483 433h1v6h-1zM601 433h2v6h-2zM609 433h1v6h-1zM920 433h1v6h-1zM1088 433h1v6h-1zM431 445h1v6h-1zM438 445h1v6h-1zM451 445h1v6h-1zM479 445h2v6h-2zM396 310h1v6h-1zM546 310h1v6h-1zM569 310h1v6h-1zM696 310h1v6h-1zM699 310h1v6h-1zM702 310h2v6h-2zM722 310h1v6h-1zM999 310h1v6h-1zM259 304h1v6h-1zM414 304h1v6h-1zM696 304h1v6h-1zM699 304h1v6h-1zM710 304h1v6h-1zM998 304h1v6h-1zM913 298h1v6h-1zM651 292h2v6h-2zM901 286h1v6h-1zM908 286h1v6h-1zM779 261h1v6h-1zM901 274h1v6h-1zM906 280h1v6h-1zM471 451h1v6h-1zM484 451h2v6h-2zM601 451h2v6h-2zM787 212h2v6h-2zM517 200h1v6h-1z"/>
<path fill="#00fa7f" d="M257 365h2v6h-2zM310 365h1v6h-1zM377 365h1v6h-1zM471 365h1v6h-1zM485 365h1v6h-1zM490 365h1v6h-1zM499 365h1v6h-1zM507 365h2v6h-2zM544 365h2v6h-2zM572 365h2v6h-2zM575 365h1v6h-1zM579 365h2v6h-2zM601 365h2v6h-2zM615 365h1v6h-1zM618 365h2v6h-2zM622 365h1v6h-1zM628 365h1v6h-1zM634 365h3v6h-3zM678 365h2v6h-2zM710 365h1v6h-1zM714 365h1v6h-1zM722 365h1v6h-1zM727 365h2v6h-2zM735 365h2v6h-2zM784 365h2v6h-2zM844 365h1v6h-1zM850 365h1v6h-1zM873 365h1v6h-1zM933 365h2v6h-2zM984 365h1v6h-1zM259 359h1v6h-1zM270 359h1v6h-1zM272 359h1v6h-1zM305 359h1v6h-1zM336 359h2v6h-2zM368 359h1v6h-1zM439 359h1v6h-1zM466 359h1v6h-1zM550 359h1v6h-1zM560 359h1v6h-1zM569 359h1v6h-1zM572 359h2v6h-2zM578 359h1v6h-1zM622 359h1v6h-1zM693 359h1v6h-1zM799 359h1v6h-1zM876 359h2v6h-2zM932 359h1v6h-1zM935 359h1v6h-1zM993 359h1v6h-1zM309 353h1v6h-1zM397 353h1v6h-1zM466 353h1v6h-1zM490 353h1v6h-1zM503 353h1v6h-1zM546 353h1v6h-1zM561 353h1v6h-1zM591 353h2v6h-2zM596 353h1v6h-1zM615 353h1v6h-1zM620 353h2v6h-2zM623 353h1v6h-1zM630 353h1v6h-1zM649 353h1v6h-1zM653 353h1v6h-1zM696 353h1v6h-1zM699 353h1v6h-1zM710 353h1v6h-1zM716 353h1v6h-1zM831 353h2v6h-2zM839 353h1v6h-1zM888 353h1v6h-1zM931 353h1v6h-1zM974 353h1v6h-1zM984 353h1v6h-1zM1019 353h1v6h-1zM270 347h1v6h-1zM403 347h1v6h-1zM424 347h2v6h-2zM472 347h2v6h-2zM486 347h1v6h-1zM497 347h2v6h-2zM528 347h2v6h-2zM541 347h2v6h-2zM568 347h1v6h-1zM578 347h1v6h-1zM586 347h2v6h-2zM611 347h2v6h-2zM645 347h2v6h-2zM687 347h1v6h-1zM704 347h1v6h-1zM711 347h1v6h-1zM716 347h1v6h-1zM739 347h1v6h-1zM835 347h2v6h-2zM839 347h1v6h-1zM944 347h2v6h-2zM974 347h1v6h-1zM978 347h1v6h-1zM996 347h1v6h-1zM1008 347h2v6h-2zM1014 347h1v6h-1zM255 341h1v6h-1zM257 341h2v6h-2zM310 341h1v6h-1zM399 341h2v6h-2zM431 341h1v6h-1zM457 341h1v6h-1zM490 341h1v6h-1zM568 341h1v6h-1zM594 341h2v6h-2zM629 341h1v6h-1zM682 341h2v6h-2zM717 341h1v6h-1zM720 341h1v6h-1zM771 341h2v6h-2zM838 341h1v6h-1zM873 341h1v6h-1zM888 341h1v6h-1zM930 341h1v6h-1zM933 341h2v6h-2zM1019 341h2v6h-2zM397 335h1v6h-1zM430 335h1v6h-1zM456 335h1v6h-1zM470 335h4v6h-4zM576 335h1v6h-1zM634 335h1v6h-1zM677 335h1v6h-1zM682 335h2v6h-2zM689 335h2v6h-2zM722 335h1v6h-1zM804 335h1v6h-1zM873 335h1v6h-1zM878 335h1v6h-1zM470 329h1v6h-1zM479 329h2v6h-2zM541 329h2v6h-2zM559 329h1v6h-1zM568 329h2v6h-2zM613 329h1v6h-1zM642 329h1v6h-1zM835 329h2v6h-2zM887 329h1v6h-1zM1001 329h2v6h-2zM1010 329h2v6h-2zM1019 329h1v6h-1zM396 323h1v6h-1zM543 323h1v6h-1zM557 323h2v6h-2zM613 323h1v6h-1zM623 323h1v6h-1zM635 323h2v6h-2zM688 323h1v6h-1zM710 323h1v6h-1zM835 323h2v6h-2zM998 323h1v6h-1zM1003 323h2v6h-2zM1010 323h3v6h-3zM257 316h2v7h-2zM267 316h1v7h-1zM403 316h1v7h-1zM557 316h2v7h-2zM624 316h1v7h-1zM643 316h1v7h-1zM649 316h1v7h-1zM689 316h2v7h-2zM693 316h1v7h-1zM726 316h1v7h-1zM998 316h1v7h-1zM326 371h2v7h-2zM357 371h1v7h-1zM439 371h1v7h-1zM483 371h2v7h-2zM487 371h3v7h-3zM536 371h1v7h-1zM603 371h1v7h-1zM614 371h1v7h-1zM618 371h2v7h-2zM644 371h1v7h-1zM682 371h2v7h-2zM710 371h1v7h-1zM794 371h2v7h-2zM835 371h2v7h-2zM870 371h1v7h-1zM928 371h1v7h-1zM972 371h2v7h-2zM998 371h1v7h-1zM1010 371h3v7h-3zM1019 371h1v7h-1zM257 378h2v6h-2zM265 378h2v6h-2zM310 378h1v6h-1zM335 378h1v6h-1zM430 378h1v6h-1zM451 378h1v6h-1zM471 378h1v6h-1zM484 378h1v6h-1zM487 378h2v6h-2zM491 378h2v6h-2zM503 378h1v6h-1zM543 378h1v6h-1zM559 378h1v6h-1zM568 378h1v6h-1zM578 378h1v6h-1zM668 378h1v6h-1zM930 378h2v6h-2zM997 378h1v6h-1zM1023 378h2v6h-2zM257 384h2v6h-2zM260 384h3v6h-3zM313 384h1v6h-1zM334 384h2v6h-2zM344 384h2v6h-2zM361 384h1v6h-1zM385 384h1v6h-1zM403 384h1v6h-1zM429 384h1v6h-1zM437 384h1v6h-1zM446 384h1v6h-1zM467 384h2v6h-2zM481 384h1v6h-1zM489 384h1v6h-1zM499 384h1v6h-1zM507 384h2v6h-2zM513 384h1v6h-1zM591 384h2v6h-2zM603 384h1v6h-1zM622 384h1v6h-1zM628 384h1v6h-1zM710 384h1v6h-1zM722 384h1v6h-1zM738 384h1v6h-1zM760 384h1v6h-1zM807 384h2v6h-2zM840 384h1v6h-1zM916 384h2v6h-2zM928 384h1v6h-1zM982 384h1v6h-1zM984 384h1v6h-1zM986 384h2v6h-2zM993 384h1v6h-1zM1013 384h1v6h-1zM271 390h1v6h-1zM321 390h1v6h-1zM335 390h1v6h-1zM356 390h2v6h-2zM364 390h2v6h-2zM373 390h1v6h-1zM394 390h2v6h-2zM441 390h1v6h-1zM449 390h1v6h-1zM456 390h1v6h-1zM458 390h1v6h-1zM568 390h1v6h-1zM589 390h1v6h-1zM614 390h1v6h-1zM618 390h2v6h-2zM639 390h1v6h-1zM739 390h1v6h-1zM773 390h2v6h-2zM844 390h1v6h-1zM998 390h1v6h-1zM1010 390h2v6h-2zM1015 390h1v6h-1zM238 414h1v6h-1zM256 414h1v6h-1zM269 414h1v6h-1zM315 414h1v6h-1zM339 414h2v6h-2zM437 414h1v6h-1zM446 414h1v6h-1zM450 414h1v6h-1zM458 414h1v6h-1zM463 414h2v6h-2zM585 414h1v6h-1zM588 414h1v6h-1zM601 414h2v6h-2zM605 414h2v6h-2zM622 414h1v6h-1zM641 414h1v6h-1zM800 414h1v6h-1zM1015 414h1v6h-1zM273 408h1v6h-1zM310 408h1v6h-1zM325 408h1v6h-1zM418 408h2v6h-2zM478 408h1v6h-1zM481 408h1v6h-1zM526 408h2v6h-2zM561 408h1v6h-1zM569 408h1v6h-1zM574 408h2v6h-2zM596 408h2v6h-2zM613 408h1v6h-1zM615 408h1v6h-1zM622 408h1v6h-1zM638 408h1v6h-1zM644 408h1v6h-1zM840 408h1v6h-1zM920 408h1v6h-1zM1001 408h2v6h-2zM1008 408h1v6h-1zM1015 408h1v6h-1zM430 402h1v6h-1zM436 402h1v6h-1zM441 402h1v6h-1zM451 402h1v6h-1zM465 402h1v6h-1zM469 402h1v6h-1zM471 402h1v6h-1zM482 402h1v6h-1zM554 402h1v6h-1zM556 402h1v6h-1zM572 402h2v6h-2zM578 402h1v6h-1zM598 402h2v6h-2zM614 402h1v6h-1zM623 402h1v6h-1zM630 402h1v6h-1zM743 402h2v6h-2zM930 402h2v6h-2zM984 402h1v6h-1zM986 402h1v6h-1zM1017 402h1v6h-1zM1039 402h2v6h-2zM246 396h1v6h-1zM268 396h1v6h-1zM276 396h2v6h-2zM335 396h1v6h-1zM344 396h2v6h-2zM356 396h2v6h-2zM430 396h1v6h-1zM436 396h1v6h-1zM438 396h1v6h-1zM449 396h1v6h-1zM451 396h1v6h-1zM458 396h1v6h-1zM463 396h2v6h-2zM467 396h2v6h-2zM472 396h3v6h-3zM479 396h2v6h-2zM484 396h1v6h-1zM576 396h1v6h-1zM578 396h1v6h-1zM604 396h1v6h-1zM609 396h1v6h-1zM682 396h2v6h-2zM844 396h1v6h-1zM1015 396h1v6h-1zM257 420h2v7h-2zM306 420h2v7h-2zM471 420h1v7h-1zM477 420h1v7h-1zM489 420h1v7h-1zM591 420h2v7h-2zM596 420h1v7h-1zM627 420h1v7h-1zM649 420h1v7h-1zM844 420h1v7h-1zM268 427h1v6h-1zM415 427h1v6h-1zM469 427h2v6h-2zM482 427h1v6h-1zM838 427h1v6h-1zM863 427h1v6h-1zM260 439h2v6h-2zM339 439h2v6h-2zM429 439h1v6h-1zM466 439h1v6h-1zM470 439h1v6h-1zM598 439h2v6h-2zM604 439h1v6h-1zM255 433h1v6h-1zM428 433h1v6h-1zM436 433h1v6h-1zM444 433h2v6h-2zM457 433h2v6h-2zM474 433h1v6h-1zM477 433h1v6h-1zM481 433h1v6h-1zM436 445h1v6h-1zM469 445h2v6h-2zM491 445h1v6h-1zM257 310h2v6h-2zM708 310h2v6h-2zM265 304h2v6h-2zM694 304h2v6h-2zM647 298h1v6h-1zM906 298h1v6h-1zM515 218h1v7h-1zM448 451h1v6h-1zM461 451h2v6h-2zM465 451h2v6h-2z"/>
<path fill="#28f624" d="M259 365h1v6h-1zM270 365h1v6h-1zM274 365h2v6h-2zM369 365h1v6h-1zM431 365h1v6h-1zM446 365h1v6h-1zM448 365h1v6h-1zM451 365h1v6h-1zM503 365h1v6h-1zM594 365h3v6h-3zM607 365h1v6h-1zM609 365h1v6h-1zM629 365h1v6h-1zM941 365h1v6h-1zM993 365h1v6h-1zM1022 365h1v6h-1zM262 359h1v6h-1zM310 359h1v6h-1zM315 359h1v6h-1zM369 359h1v6h-1zM404 359h1v6h-1zM469 359h1v6h-1zM471 359h1v6h-1zM484 359h1v6h-1zM533 359h2v6h-2zM568 359h1v6h-1zM579 359h2v6h-2zM583 359h2v6h-2zM593 359h1v6h-1zM605 359h2v6h-2zM615 359h1v6h-1zM625 359h2v6h-2zM628 359h2v6h-2zM682 359h2v6h-2zM710 359h1v6h-1zM804 359h1v6h-1zM843 359h1v6h-1zM984 359h1v6h-1zM1010 359h3v6h-3zM1014 359h1v6h-1zM1019 359h1v6h-1zM257 353h3v6h-3zM265 353h2v6h-2zM369 353h1v6h-1zM528 353h2v6h-2zM536 353h1v6h-1zM544 353h2v6h-2zM551 353h3v6h-3zM594 353h2v6h-2zM622 353h1v6h-1zM735 353h2v6h-2zM804 353h1v6h-1zM842 353h1v6h-1zM998 353h1v6h-1zM1005 353h2v6h-2zM1009 353h1v6h-1zM256 347h1v6h-1zM429 347h2v6h-2zM466 347h1v6h-1zM470 347h1v6h-1zM536 347h1v6h-1zM544 347h2v6h-2zM569 347h1v6h-1zM588 347h1v6h-1zM591 347h2v6h-2zM594 347h2v6h-2zM609 347h1v6h-1zM614 347h1v6h-1zM674 347h1v6h-1zM682 347h2v6h-2zM710 347h1v6h-1zM773 347h1v6h-1zM870 347h1v6h-1zM1010 347h3v6h-3zM256 341h1v6h-1zM366 341h1v6h-1zM479 341h2v6h-2zM552 341h2v6h-2zM569 341h1v6h-1zM576 341h1v6h-1zM738 341h1v6h-1zM1012 341h1v6h-1zM260 335h2v6h-2zM366 335h1v6h-1zM457 335h1v6h-1zM575 335h1v6h-1zM583 335h2v6h-2zM629 335h1v6h-1zM1010 335h2v6h-2zM1014 335h1v6h-1zM396 329h1v6h-1zM557 329h2v6h-2zM578 329h1v6h-1zM623 329h1v6h-1zM645 329h2v6h-2zM689 329h2v6h-2zM873 329h1v6h-1zM259 323h1v6h-1zM568 323h1v6h-1zM720 323h1v6h-1zM738 323h1v6h-1zM569 316h1v7h-1zM611 316h2v7h-2zM260 371h1v7h-1zM428 371h1v7h-1zM430 371h1v7h-1zM454 371h2v7h-2zM470 371h1v7h-1zM560 371h1v7h-1zM562 371h1v7h-1zM575 371h1v7h-1zM579 371h4v7h-4zM873 371h1v7h-1zM262 378h1v6h-1zM377 378h1v6h-1zM394 378h2v6h-2zM440 378h1v6h-1zM456 378h1v6h-1zM465 378h1v6h-1zM509 378h1v6h-1zM557 378h2v6h-2zM562 378h1v6h-1zM588 378h1v6h-1zM609 378h1v6h-1zM682 378h2v6h-2zM844 378h1v6h-1zM872 378h1v6h-1zM1005 378h2v6h-2zM1019 378h1v6h-1zM256 384h1v6h-1zM272 384h1v6h-1zM291 384h1v6h-1zM305 384h1v6h-1zM375 384h2v6h-2zM415 384h1v6h-1zM431 384h1v6h-1zM434 384h2v6h-2zM441 384h1v6h-1zM454 384h2v6h-2zM461 384h2v6h-2zM472 384h2v6h-2zM484 384h1v6h-1zM490 384h1v6h-1zM535 384h1v6h-1zM557 384h2v6h-2zM576 384h1v6h-1zM579 384h2v6h-2zM593 384h1v6h-1zM598 384h2v6h-2zM844 384h1v6h-1zM930 384h1v6h-1zM997 384h1v6h-1zM1003 384h2v6h-2zM1010 384h3v6h-3zM1014 384h1v6h-1zM256 390h2v6h-2zM259 390h1v6h-1zM265 390h2v6h-2zM326 390h2v6h-2zM430 390h1v6h-1zM454 390h2v6h-2zM471 390h1v6h-1zM503 390h1v6h-1zM537 390h1v6h-1zM1012 390h1v6h-1zM1014 390h1v6h-1zM257 414h2v6h-2zM270 414h1v6h-1zM441 414h1v6h-1zM461 414h2v6h-2zM470 414h1v6h-1zM486 414h1v6h-1zM492 414h1v6h-1zM503 414h1v6h-1zM583 414h2v6h-2zM620 414h2v6h-2zM1012 414h1v6h-1zM1019 414h1v6h-1zM265 408h2v6h-2zM268 408h1v6h-1zM428 408h1v6h-1zM430 408h2v6h-2zM436 408h1v6h-1zM466 408h1v6h-1zM562 408h1v6h-1zM568 408h1v6h-1zM578 408h1v6h-1zM585 408h1v6h-1zM593 408h1v6h-1zM604 408h1v6h-1zM870 408h1v6h-1zM1014 408h1v6h-1zM310 402h1v6h-1zM404 402h1v6h-1zM426 402h2v6h-2zM579 402h2v6h-2zM585 402h1v6h-1zM589 402h1v6h-1zM591 402h2v6h-2zM624 402h1v6h-1zM850 402h1v6h-1zM294 396h1v6h-1zM415 396h1v6h-1zM447 396h1v6h-1zM466 396h1v6h-1zM469 396h1v6h-1zM486 396h1v6h-1zM491 396h1v6h-1zM552 396h2v6h-2zM601 396h2v6h-2zM1003 396h2v6h-2zM244 420h1v7h-1zM265 420h2v7h-2zM272 420h1v7h-1zM439 420h1v7h-1zM446 420h1v7h-1zM469 420h1v7h-1zM472 420h2v7h-2zM583 420h2v7h-2zM588 420h1v7h-1zM607 420h1v7h-1zM611 420h2v7h-2zM930 420h1v7h-1zM263 427h2v6h-2zM267 427h1v6h-1zM418 427h2v6h-2zM428 427h1v6h-1zM431 427h1v6h-1zM446 427h1v6h-1zM450 427h1v6h-1zM456 427h1v6h-1zM583 427h2v6h-2zM457 439h1v6h-1zM471 439h1v6h-1zM800 439h1v6h-1zM260 433h2v6h-2zM503 445h1v6h-1zM895 286h1v6h-1zM915 280h1v6h-1zM457 451h1v6h-1z"/>
<path fill="#00f03c" d="M260 365h2v6h-2zM273 365h1v6h-1zM402 365h1v6h-1zM438 365h2v6h-2zM465 365h2v6h-2zM470 365h1v6h-1zM472 365h2v6h-2zM487 365h2v6h-2zM528 365h2v6h-2zM543 365h1v6h-1zM551 365h3v6h-3zM555 365h1v6h-1zM561 365h2v6h-2zM583 365h2v6h-2zM614 365h1v6h-1zM630 365h1v6h-1zM693 365h1v6h-1zM720 365h1v6h-1zM930 365h1v6h-1zM985 365h1v6h-1zM1020 365h1v6h-1zM306 359h2v6h-2zM437 359h1v6h-1zM446 359h1v6h-1zM486 359h1v6h-1zM490 359h1v6h-1zM535 359h1v6h-1zM576 359h1v6h-1zM597 359h1v6h-1zM604 359h1v6h-1zM607 359h1v6h-1zM609 359h1v6h-1zM630 359h1v6h-1zM635 359h2v6h-2zM689 359h2v6h-2zM735 359h2v6h-2zM768 359h1v6h-1zM835 359h2v6h-2zM931 359h1v6h-1zM986 359h2v6h-2zM1003 359h2v6h-2zM260 353h2v6h-2zM446 353h1v6h-1zM484 353h1v6h-1zM492 353h1v6h-1zM497 353h2v6h-2zM509 353h1v6h-1zM574 353h1v6h-1zM604 353h1v6h-1zM627 353h1v6h-1zM682 353h2v6h-2zM769 353h2v6h-2zM835 353h2v6h-2zM872 353h1v6h-1zM1001 353h2v6h-2zM1008 353h1v6h-1zM1015 353h1v6h-1zM271 347h1v6h-1zM312 347h1v6h-1zM396 347h1v6h-1zM507 347h2v6h-2zM546 347h1v6h-1zM574 347h1v6h-1zM596 347h1v6h-1zM693 347h1v6h-1zM738 347h1v6h-1zM769 347h2v6h-2zM997 347h1v6h-1zM458 341h1v6h-1zM481 341h1v6h-1zM487 341h2v6h-2zM544 341h2v6h-2zM583 341h2v6h-2zM614 341h1v6h-1zM620 341h2v6h-2zM693 341h1v6h-1zM699 341h1v6h-1zM716 341h1v6h-1zM726 341h1v6h-1zM804 341h1v6h-1zM997 341h1v6h-1zM1010 341h2v6h-2zM1013 341h1v6h-1zM259 335h1v6h-1zM265 335h2v6h-2zM428 335h1v6h-1zM479 335h2v6h-2zM550 335h1v6h-1zM554 335h1v6h-1zM593 335h3v6h-3zM622 335h1v6h-1zM699 335h1v6h-1zM1001 335h2v6h-2zM1009 335h1v6h-1zM259 329h1v6h-1zM537 329h1v6h-1zM560 329h1v6h-1zM576 329h1v6h-1zM615 329h1v6h-1zM699 329h1v6h-1zM711 329h1v6h-1zM862 329h1v6h-1zM996 329h1v6h-1zM1012 329h1v6h-1zM263 323h2v6h-2zM403 323h1v6h-1zM457 323h1v6h-1zM618 323h2v6h-2zM804 323h1v6h-1zM996 323h1v6h-1zM1000 323h1v6h-1zM404 316h1v7h-1zM722 316h1v7h-1zM369 371h1v7h-1zM440 371h1v7h-1zM456 371h1v7h-1zM463 371h2v7h-2zM491 371h1v7h-1zM503 371h1v7h-1zM528 371h2v7h-2zM533 371h2v7h-2zM544 371h2v7h-2zM596 371h1v7h-1zM629 371h1v7h-1zM680 371h1v7h-1zM685 371h1v7h-1zM689 371h2v7h-2zM712 371h2v7h-2zM715 371h1v7h-1zM726 371h1v7h-1zM761 371h1v7h-1zM843 371h1v7h-1zM255 378h1v6h-1zM308 378h1v6h-1zM336 378h2v6h-2zM403 378h1v6h-1zM454 378h2v6h-2zM457 378h1v6h-1zM472 378h3v6h-3zM479 378h2v6h-2zM489 378h1v6h-1zM535 378h1v6h-1zM555 378h1v6h-1zM565 378h1v6h-1zM593 378h1v6h-1zM604 378h1v6h-1zM614 378h1v6h-1zM773 378h2v6h-2zM873 378h1v6h-1zM888 378h1v6h-1zM974 378h1v6h-1zM1010 378h2v6h-2zM270 384h1v6h-1zM294 384h1v6h-1zM336 384h2v6h-2zM353 384h1v6h-1zM369 384h1v6h-1zM448 384h2v6h-2zM451 384h1v6h-1zM466 384h1v6h-1zM469 384h1v6h-1zM544 384h2v6h-2zM552 384h2v6h-2zM601 384h2v6h-2zM607 384h1v6h-1zM618 384h2v6h-2zM627 384h1v6h-1zM872 384h1v6h-1zM942 384h1v6h-1zM1001 384h2v6h-2zM1020 384h1v6h-1zM276 390h2v6h-2zM279 390h1v6h-1zM300 390h2v6h-2zM305 390h1v6h-1zM361 390h1v6h-1zM431 390h1v6h-1zM442 390h2v6h-2zM467 390h2v6h-2zM470 390h1v6h-1zM477 390h1v6h-1zM484 390h1v6h-1zM487 390h3v6h-3zM585 390h1v6h-1zM593 390h1v6h-1zM601 390h2v6h-2zM609 390h1v6h-1zM689 390h2v6h-2zM784 390h2v6h-2zM840 390h1v6h-1zM846 390h1v6h-1zM1008 390h1v6h-1zM260 414h2v6h-2zM467 414h3v6h-3zM471 414h1v6h-1zM487 414h2v6h-2zM557 414h2v6h-2zM561 414h1v6h-1zM593 414h3v6h-3zM611 414h2v6h-2zM1001 414h2v6h-2zM253 408h2v6h-2zM260 408h2v6h-2zM263 408h2v6h-2zM271 408h1v6h-1zM369 408h1v6h-1zM415 408h1v6h-1zM424 408h2v6h-2zM458 408h3v6h-3zM469 408h1v6h-1zM471 408h1v6h-1zM503 408h1v6h-1zM544 408h2v6h-2zM559 408h1v6h-1zM572 408h2v6h-2zM581 408h4v6h-4zM588 408h1v6h-1zM594 408h2v6h-2zM614 408h1v6h-1zM620 408h2v6h-2zM630 408h1v6h-1zM844 408h1v6h-1zM1005 408h2v6h-2zM336 402h2v6h-2zM356 402h2v6h-2zM415 402h1v6h-1zM434 402h2v6h-2zM440 402h1v6h-1zM447 402h1v6h-1zM454 402h2v6h-2zM459 402h2v6h-2zM472 402h2v6h-2zM490 402h1v6h-1zM492 402h1v6h-1zM562 402h1v6h-1zM613 402h1v6h-1zM622 402h1v6h-1zM635 402h2v6h-2zM712 402h2v6h-2zM835 402h2v6h-2zM996 402h1v6h-1zM248 396h1v6h-1zM270 396h1v6h-1zM279 396h1v6h-1zM300 396h2v6h-2zM310 396h1v6h-1zM312 396h1v6h-1zM315 396h1v6h-1zM349 396h1v6h-1zM354 396h1v6h-1zM441 396h1v6h-1zM450 396h1v6h-1zM470 396h1v6h-1zM565 396h1v6h-1zM568 396h1v6h-1zM597 396h1v6h-1zM607 396h1v6h-1zM611 396h2v6h-2zM804 396h1v6h-1zM1014 396h1v6h-1zM305 420h1v7h-1zM315 420h1v7h-1zM430 420h1v7h-1zM441 420h1v7h-1zM461 420h2v7h-2zM466 420h1v7h-1zM484 420h1v7h-1zM585 420h1v7h-1zM594 420h2v7h-2zM615 420h1v7h-1zM618 420h2v7h-2zM629 420h1v7h-1zM635 420h2v7h-2zM916 420h2v7h-2zM920 420h1v7h-1zM1010 420h2v7h-2zM1014 420h2v7h-2zM1019 420h1v7h-1zM265 427h2v6h-2zM437 427h1v6h-1zM440 427h1v6h-1zM451 427h1v6h-1zM466 427h1v6h-1zM471 427h1v6h-1zM569 427h1v6h-1zM630 427h1v6h-1zM930 427h1v6h-1zM265 439h2v6h-2zM484 439h1v6h-1zM263 433h2v6h-2zM418 433h2v6h-2zM449 433h1v6h-1zM456 433h1v6h-1zM465 433h1v6h-1zM645 433h2v6h-2zM448 445h1v6h-1zM456 445h1v6h-1zM459 445h2v6h-2zM466 445h1v6h-1zM481 445h1v6h-1zM490 445h1v6h-1zM256 310h1v6h-1zM263 310h4v6h-4zM521 310h1v6h-1zM544 310h2v6h-2zM622 310h1v6h-1zM544 304h2v6h-2zM620 304h2v6h-2zM715 304h1v6h-1zM699 286h1v6h-1zM911 286h2v6h-2zM469 451h1v6h-1zM497 451h2v6h-2zM490 457h1v6h-1zM466 463h1v6h-1z"/>
<path fill="#83ff00" d="M263 365h2v6h-2zM306 365h2v6h-2zM312 365h1v6h-1zM497 365h2v6h-2zM569 365h1v6h-1zM591 365h2v6h-2zM800 365h1v6h-1zM986 365h2v6h-2zM265 359h3v6h-3zM552 359h2v6h-2zM699 359h1v6h-1zM712 359h2v6h-2zM870 359h1v6h-1zM256 353h1v6h-1zM579 353h2v6h-2zM942 353h1v6h-1zM448 347h1v6h-1zM490 347h1v6h-1zM267 341h1v6h-1zM369 341h1v6h-1zM430 341h1v6h-1zM456 341h1v6h-1zM526 341h2v6h-2zM609 341h1v6h-1zM557 335h2v6h-2zM684 335h1v6h-1zM535 329h1v6h-1zM544 329h2v6h-2zM715 323h1v6h-1zM544 316h2v7h-2zM306 371h2v7h-2zM457 371h1v7h-1zM572 371h2v7h-2zM684 371h1v7h-1zM844 371h1v7h-1zM267 378h1v6h-1zM436 378h1v6h-1zM481 378h1v6h-1zM552 378h2v6h-2zM615 378h1v6h-1zM710 378h1v6h-1zM265 384h2v6h-2zM309 384h1v6h-1zM456 384h1v6h-1zM471 384h1v6h-1zM474 384h1v6h-1zM609 384h1v6h-1zM615 384h1v6h-1zM306 390h2v6h-2zM461 390h2v6h-2zM466 390h1v6h-1zM492 390h1v6h-1zM835 390h2v6h-2zM265 414h2v6h-2zM451 414h1v6h-1zM466 414h1v6h-1zM481 414h1v6h-1zM615 414h1v6h-1zM1014 414h1v6h-1zM255 408h1v6h-1zM456 408h1v6h-1zM472 408h2v6h-2zM484 408h1v6h-1zM564 408h1v6h-1zM628 408h1v6h-1zM557 402h2v6h-2zM560 402h1v6h-1zM593 402h1v6h-1zM611 402h2v6h-2zM615 402h1v6h-1zM870 402h1v6h-1zM257 396h2v6h-2zM265 396h2v6h-2zM499 396h1v6h-1zM557 396h2v6h-2zM633 396h1v6h-1zM273 420h1v7h-1zM609 420h1v7h-1zM260 427h2v6h-2zM481 427h1v6h-1zM472 439h2v6h-2zM471 433h1v6h-1zM591 433h2v6h-2zM259 310h3v6h-3zM267 310h1v6h-1zM693 310h1v6h-1z"/>
<path fill="#ffcb00" d="M267 365h1v6h-1zM463 365h2v6h-2zM881 365h1v6h-1zM887 365h1v6h-1zM448 353h1v6h-1zM583 347h2v6h-2zM932 347h1v6h-1zM305 378h1v6h-1zM448 378h1v6h-1zM847 378h1v6h-1zM1001 378h2v6h-2zM267 390h1v6h-1zM259 408h1v6h-1zM447 408h1v6h-1zM998 396h1v6h-1zM1012 396h1v6h-1z"/>
<path fill="#50fc0c" d="M268 365h1v6h-1zM308 365h1v6h-1zM454 365h2v6h-2zM457 365h1v6h-1zM461 365h2v6h-2zM469 365h1v6h-1zM560 365h1v6h-1zM715 365h1v6h-1zM1010 365h3v6h-3zM273 359h1v6h-1zM394 359h2v6h-2zM440 359h2v6h-2zM448 359h1v6h-1zM454 359h2v6h-2zM483 359h1v6h-1zM503 359h1v6h-1zM614 359h1v6h-1zM722 359h1v6h-1zM978 359h1v6h-1zM273 353h1v6h-1zM305 353h1v6h-1zM454 353h2v6h-2zM470 353h1v6h-1zM499 353h1v6h-1zM507 353h2v6h-2zM535 353h1v6h-1zM554 353h1v6h-1zM560 353h1v6h-1zM585 353h1v6h-1zM629 353h1v6h-1zM684 353h1v6h-1zM689 353h2v6h-2zM714 353h1v6h-1zM722 353h1v6h-1zM996 353h1v6h-1zM259 347h3v6h-3zM267 347h1v6h-1zM272 347h1v6h-1zM404 347h1v6h-1zM471 347h1v6h-1zM533 347h2v6h-2zM552 347h2v6h-2zM557 347h2v6h-2zM560 347h1v6h-1zM623 347h1v6h-1zM628 347h1v6h-1zM470 341h2v6h-2zM585 341h1v6h-1zM696 341h1v6h-1zM844 341h1v6h-1zM1001 341h2v6h-2zM402 335h1v6h-1zM469 335h1v6h-1zM614 335h2v6h-2zM623 335h1v6h-1zM802 335h2v6h-2zM998 335h1v6h-1zM609 329h1v6h-1zM624 329h1v6h-1zM722 329h1v6h-1zM942 329h1v6h-1zM576 323h1v6h-1zM576 316h1v7h-1zM710 316h1v7h-1zM717 316h1v7h-1zM266 371h1v7h-1zM466 371h1v7h-1zM469 371h1v7h-1zM472 371h2v7h-2zM485 371h1v7h-1zM490 371h1v7h-1zM552 371h2v7h-2zM557 371h2v7h-2zM568 371h1v7h-1zM591 371h2v7h-2zM611 371h2v7h-2zM622 371h1v7h-1zM633 371h1v7h-1zM259 378h1v6h-1zM391 378h2v6h-2zM404 378h1v6h-1zM441 378h1v6h-1zM446 378h1v6h-1zM461 378h2v6h-2zM469 378h1v6h-1zM497 378h2v6h-2zM544 378h2v6h-2zM548 378h2v6h-2zM560 378h1v6h-1zM572 378h2v6h-2zM576 378h1v6h-1zM598 378h2v6h-2zM601 378h2v6h-2zM986 378h2v6h-2zM1008 378h1v6h-1zM1014 378h1v6h-1zM255 384h1v6h-1zM259 384h1v6h-1zM263 384h2v6h-2zM276 384h2v6h-2zM463 384h2v6h-2zM477 384h1v6h-1zM503 384h1v6h-1zM604 384h1v6h-1zM835 384h2v6h-2zM262 390h1v6h-1zM270 390h1v6h-1zM273 390h1v6h-1zM281 390h1v6h-1zM366 390h1v6h-1zM465 390h1v6h-1zM479 390h2v6h-2zM486 390h1v6h-1zM490 390h2v6h-2zM528 390h2v6h-2zM560 390h1v6h-1zM597 390h1v6h-1zM607 390h1v6h-1zM623 390h1v6h-1zM684 390h1v6h-1zM996 390h1v6h-1zM430 414h1v6h-1zM569 414h1v6h-1zM613 414h1v6h-1zM1010 414h2v6h-2zM306 408h2v6h-2zM448 408h1v6h-1zM461 408h2v6h-2zM560 408h1v6h-1zM607 408h1v6h-1zM869 408h1v6h-1zM255 402h1v6h-1zM305 402h1v6h-1zM448 402h1v6h-1zM466 402h1v6h-1zM569 402h1v6h-1zM583 402h2v6h-2zM609 402h1v6h-1zM801 402h1v6h-1zM263 396h2v6h-2zM305 396h1v6h-1zM428 396h1v6h-1zM448 396h1v6h-1zM481 396h1v6h-1zM483 396h1v6h-1zM569 396h1v6h-1zM872 396h1v6h-1zM930 396h1v6h-1zM984 396h1v6h-1zM1001 396h2v6h-2zM260 420h3v7h-3zM456 420h1v7h-1zM256 427h1v6h-1zM270 427h1v6h-1zM436 427h1v6h-1zM461 427h2v6h-2zM607 427h1v6h-1zM267 439h1v6h-1zM481 439h1v6h-1zM490 439h1v6h-1zM440 433h1v6h-1zM447 433h1v6h-1zM466 433h1v6h-1zM469 433h1v6h-1zM472 433h2v6h-2zM479 433h2v6h-2zM593 433h3v6h-3zM645 310h2v6h-2z"/>
<path fill="#00ffe7" d="M305 365h1v6h-1zM315 365h1v6h-1zM358 365h2v6h-2zM370 365h1v6h-1zM424 365h2v6h-2zM428 365h1v6h-1zM440 365h1v6h-1zM447 365h1v6h-1zM459 365h2v6h-2zM474 365h1v6h-1zM481 365h1v6h-1zM483 365h1v6h-1zM486 365h1v6h-1zM491 365h2v6h-2zM494 365h3v6h-3zM546 365h1v6h-1zM548 365h2v6h-2zM605 365h2v6h-2zM608 365h1v6h-1zM611 365h2v6h-2zM624 365h1v6h-1zM632 365h1v6h-1zM682 365h2v6h-2zM699 365h1v6h-1zM726 365h1v6h-1zM807 365h2v6h-2zM854 365h2v6h-2zM863 365h1v6h-1zM883 365h2v6h-2zM888 365h2v6h-2zM893 365h1v6h-1zM931 365h1v6h-1zM940 365h1v6h-1zM979 365h1v6h-1zM994 365h2v6h-2zM1007 365h2v6h-2zM1013 365h1v6h-1zM1019 365h1v6h-1zM1021 365h1v6h-1zM243 359h1v6h-1zM257 359h2v6h-2zM268 359h1v6h-1zM276 359h2v6h-2zM309 359h1v6h-1zM312 359h1v6h-1zM334 359h1v6h-1zM338 359h1v6h-1zM366 359h2v6h-2zM426 359h2v6h-2zM430 359h1v6h-1zM450 359h1v6h-1zM458 359h3v6h-3zM470 359h1v6h-1zM472 359h3v6h-3zM481 359h1v6h-1zM489 359h1v6h-1zM494 359h2v6h-2zM497 359h2v6h-2zM512 359h1v6h-1zM538 359h1v6h-1zM543 359h1v6h-1zM546 359h1v6h-1zM555 359h1v6h-1zM564 359h1v6h-1zM571 359h1v6h-1zM581 359h2v6h-2zM586 359h2v6h-2zM694 359h4v6h-4zM739 359h1v6h-1zM800 359h1v6h-1zM810 359h1v6h-1zM823 359h1v6h-1zM868 359h2v6h-2zM872 359h1v6h-1zM940 359h1v6h-1zM980 359h1v6h-1zM985 359h1v6h-1zM1005 359h2v6h-2zM1015 359h1v6h-1zM1031 359h2v6h-2zM243 353h1v6h-1zM263 353h2v6h-2zM272 353h1v6h-1zM403 353h1v6h-1zM418 353h2v6h-2zM423 353h1v6h-1zM429 353h1v6h-1zM437 353h1v6h-1zM440 353h1v6h-1zM451 353h1v6h-1zM458 353h1v6h-1zM469 353h1v6h-1zM477 353h1v6h-1zM483 353h1v6h-1zM487 353h2v6h-2zM491 353h1v6h-1zM510 353h1v6h-1zM564 353h1v6h-1zM569 353h1v6h-1zM576 353h1v6h-1zM625 353h2v6h-2zM633 353h1v6h-1zM685 353h1v6h-1zM687 353h1v6h-1zM715 353h1v6h-1zM726 353h3v6h-3zM778 353h1v6h-1zM802 353h2v6h-2zM838 353h1v6h-1zM840 353h1v6h-1zM935 353h1v6h-1zM997 353h1v6h-1zM1013 353h1v6h-1zM1016 353h2v6h-2zM255 347h1v6h-1zM265 347h2v6h-2zM310 347h1v6h-1zM336 347h2v6h-2zM367 347h1v6h-1zM394 347h2v6h-2zM399 347h2v6h-2zM428 347h1v6h-1zM446 347h1v6h-1zM449 347h1v6h-1zM477 347h1v6h-1zM503 347h1v6h-1zM550 347h1v6h-1zM567 347h1v6h-1zM577 347h1v6h-1zM581 347h2v6h-2zM601 347h3v6h-3zM632 347h1v6h-1zM639 347h1v6h-1zM641 347h1v6h-1zM651 347h2v6h-2zM678 347h2v6h-2zM697 347h1v6h-1zM722 347h1v6h-1zM791 347h1v6h-1zM800 347h1v6h-1zM804 347h1v6h-1zM831 347h2v6h-2zM863 347h1v6h-1zM878 347h1v6h-1zM898 347h1v6h-1zM984 347h1v6h-1zM986 347h2v6h-2zM998 347h1v6h-1zM1003 347h2v6h-2zM1021 347h1v6h-1zM1028 347h1v6h-1zM268 341h1v6h-1zM448 341h1v6h-1zM466 341h1v6h-1zM491 341h1v6h-1zM497 341h2v6h-2zM546 341h1v6h-1zM550 341h2v6h-2zM561 341h1v6h-1zM574 341h1v6h-1zM581 341h2v6h-2zM589 341h1v6h-1zM591 341h3v6h-3zM611 341h2v6h-2zM618 341h2v6h-2zM622 341h2v6h-2zM631 341h1v6h-1zM634 341h1v6h-1zM642 341h1v6h-1zM648 341h1v6h-1zM680 341h1v6h-1zM687 341h1v6h-1zM704 341h1v6h-1zM715 341h1v6h-1zM729 341h1v6h-1zM774 341h1v6h-1zM800 341h2v6h-2zM840 341h1v6h-1zM846 341h2v6h-2zM850 341h1v6h-1zM935 341h1v6h-1zM938 341h2v6h-2zM942 341h1v6h-1zM972 341h2v6h-2zM998 341h1v6h-1zM1005 341h2v6h-2zM1008 341h1v6h-1zM1022 341h1v6h-1zM263 335h2v6h-2zM267 335h1v6h-1zM396 335h1v6h-1zM403 335h2v6h-2zM481 335h1v6h-1zM497 335h2v6h-2zM520 335h1v6h-1zM526 335h2v6h-2zM536 335h1v6h-1zM538 335h1v6h-1zM544 335h2v6h-2zM551 335h1v6h-1zM555 335h1v6h-1zM560 335h1v6h-1zM562 335h1v6h-1zM565 335h1v6h-1zM568 335h1v6h-1zM572 335h2v6h-2zM588 335h1v6h-1zM591 335h2v6h-2zM627 335h2v6h-2zM638 335h1v6h-1zM649 335h1v6h-1zM667 335h1v6h-1zM685 335h1v6h-1zM691 335h1v6h-1zM707 335h1v6h-1zM720 335h1v6h-1zM738 335h1v6h-1zM784 335h2v6h-2zM809 335h1v6h-1zM843 335h1v6h-1zM863 335h1v6h-1zM870 335h1v6h-1zM872 335h1v6h-1zM935 335h1v6h-1zM1000 335h1v6h-1zM1005 335h2v6h-2zM255 329h1v6h-1zM268 329h1v6h-1zM415 329h1v6h-1zM471 329h1v6h-1zM497 329h2v6h-2zM533 329h2v6h-2zM543 329h1v6h-1zM583 329h2v6h-2zM628 329h1v6h-1zM648 329h1v6h-1zM661 329h1v6h-1zM682 329h2v6h-2zM694 329h3v6h-3zM708 329h3v6h-3zM724 329h3v6h-3zM743 329h2v6h-2zM769 329h2v6h-2zM810 329h1v6h-1zM872 329h1v6h-1zM898 329h1v6h-1zM904 329h2v6h-2zM935 329h1v6h-1zM944 329h2v6h-2zM1000 329h1v6h-1zM1009 329h1v6h-1zM265 323h2v6h-2zM404 323h1v6h-1zM535 323h2v6h-2zM574 323h1v6h-1zM645 323h2v6h-2zM717 323h1v6h-1zM727 323h2v6h-2zM747 323h2v6h-2zM778 323h1v6h-1zM807 323h2v6h-2zM854 323h2v6h-2zM873 323h1v6h-1zM887 323h1v6h-1zM940 323h1v6h-1zM942 323h1v6h-1zM1019 323h1v6h-1zM260 316h3v7h-3zM399 316h2v7h-2zM402 316h1v7h-1zM524 316h1v7h-1zM568 316h1v7h-1zM572 316h2v7h-2zM613 316h1v7h-1zM622 316h1v7h-1zM653 316h1v7h-1zM696 316h1v7h-1zM716 316h1v7h-1zM782 316h1v7h-1zM835 316h2v7h-2zM872 316h1v7h-1zM908 316h1v7h-1zM944 316h2v7h-2zM999 316h1v7h-1zM279 371h1v7h-1zM302 371h1v7h-1zM339 371h2v7h-2zM373 371h1v7h-1zM382 371h1v7h-1zM387 371h1v7h-1zM394 371h1v7h-1zM397 371h1v7h-1zM418 371h2v7h-2zM451 371h1v7h-1zM471 371h1v7h-1zM474 371h1v7h-1zM497 371h3v7h-3zM501 371h2v7h-2zM537 371h2v7h-2zM564 371h1v7h-1zM589 371h1v7h-1zM597 371h1v7h-1zM624 371h1v7h-1zM627 371h1v7h-1zM668 371h1v7h-1zM675 371h2v7h-2zM729 371h1v7h-1zM732 371h1v7h-1zM739 371h2v7h-2zM743 371h2v7h-2zM784 371h2v7h-2zM791 371h1v7h-1zM804 371h1v7h-1zM846 371h1v7h-1zM926 371h2v7h-2zM930 371h1v7h-1zM974 371h1v7h-1zM978 371h1v7h-1zM999 371h1v7h-1zM244 378h1v6h-1zM248 378h1v6h-1zM279 378h1v6h-1zM281 378h1v6h-1zM288 378h1v6h-1zM294 378h1v6h-1zM303 378h1v6h-1zM309 378h1v6h-1zM318 378h2v6h-2zM353 378h1v6h-1zM361 378h1v6h-1zM368 378h2v6h-2zM379 378h1v6h-1zM382 378h1v6h-1zM385 378h3v6h-3zM389 378h2v6h-2zM402 378h1v6h-1zM437 378h1v6h-1zM444 378h2v6h-2zM447 378h1v6h-1zM458 378h1v6h-1zM467 378h2v6h-2zM541 378h2v6h-2zM546 378h1v6h-1zM554 378h1v6h-1zM556 378h1v6h-1zM596 378h1v6h-1zM613 378h1v6h-1zM630 378h1v6h-1zM632 378h1v6h-1zM639 378h1v6h-1zM693 378h3v6h-3zM697 378h1v6h-1zM714 378h1v6h-1zM851 378h1v6h-1zM878 378h1v6h-1zM933 378h2v6h-2zM944 378h2v6h-2zM978 378h1v6h-1zM982 378h1v6h-1zM990 378h1v6h-1zM1013 378h1v6h-1zM1016 378h2v6h-2zM1039 378h2v6h-2zM1090 378h1v6h-1zM248 384h1v6h-1zM274 384h2v6h-2zM284 384h2v6h-2zM304 384h1v6h-1zM339 384h2v6h-2zM373 384h1v6h-1zM381 384h1v6h-1zM387 384h1v6h-1zM393 384h1v6h-1zM436 384h1v6h-1zM438 384h1v6h-1zM444 384h2v6h-2zM457 384h1v6h-1zM538 384h1v6h-1zM554 384h2v6h-2zM559 384h1v6h-1zM568 384h1v6h-1zM577 384h2v6h-2zM581 384h2v6h-2zM585 384h1v6h-1zM589 384h1v6h-1zM594 384h2v6h-2zM623 384h1v6h-1zM635 384h2v6h-2zM668 384h1v6h-1zM680 384h1v6h-1zM699 384h1v6h-1zM763 384h1v6h-1zM771 384h2v6h-2zM829 384h1v6h-1zM842 384h1v6h-1zM869 384h1v6h-1zM878 384h1v6h-1zM887 384h1v6h-1zM935 384h1v6h-1zM974 384h1v6h-1zM978 384h1v6h-1zM996 384h1v6h-1zM268 390h1v6h-1zM308 390h2v6h-2zM312 390h1v6h-1zM316 390h1v6h-1zM339 390h4v6h-4zM369 390h1v6h-1zM375 390h3v6h-3zM379 390h1v6h-1zM391 390h3v6h-3zM402 390h2v6h-2zM415 390h1v6h-1zM420 390h1v6h-1zM426 390h2v6h-2zM436 390h1v6h-1zM448 390h1v6h-1zM463 390h2v6h-2zM472 390h3v6h-3zM478 390h1v6h-1zM483 390h1v6h-1zM536 390h1v6h-1zM551 390h1v6h-1zM554 390h1v6h-1zM564 390h2v6h-2zM575 390h1v6h-1zM579 390h2v6h-2zM591 390h2v6h-2zM604 390h1v6h-1zM622 390h1v6h-1zM627 390h2v6h-2zM630 390h1v6h-1zM635 390h2v6h-2zM691 390h1v6h-1zM726 390h1v6h-1zM777 390h2v6h-2zM801 390h1v6h-1zM845 390h1v6h-1zM889 390h1v6h-1zM926 390h2v6h-2zM931 390h1v6h-1zM935 390h1v6h-1zM984 390h1v6h-1zM986 390h2v6h-2zM1013 390h1v6h-1zM1039 390h2v6h-2zM249 414h2v6h-2zM253 414h2v6h-2zM263 414h2v6h-2zM305 414h1v6h-1zM326 414h2v6h-2zM341 414h2v6h-2zM396 414h1v6h-1zM423 414h1v6h-1zM434 414h2v6h-2zM439 414h2v6h-2zM456 414h1v6h-1zM465 414h1v6h-1zM475 414h2v6h-2zM479 414h2v6h-2zM482 414h1v6h-1zM548 414h2v6h-2zM574 414h1v6h-1zM598 414h2v6h-2zM603 414h1v6h-1zM623 414h1v6h-1zM625 414h2v6h-2zM634 414h3v6h-3zM805 414h2v6h-2zM831 414h2v6h-2zM835 414h2v6h-2zM844 414h1v6h-1zM863 414h1v6h-1zM878 414h1v6h-1zM921 414h1v6h-1zM926 414h2v6h-2zM1008 414h1v6h-1zM1023 414h2v6h-2zM1066 414h1v6h-1zM1074 414h2v6h-2zM246 408h1v6h-1zM248 408h3v6h-3zM262 408h1v6h-1zM270 408h1v6h-1zM278 408h1v6h-1zM288 408h1v6h-1zM302 408h1v6h-1zM353 408h1v6h-1zM358 408h2v6h-2zM426 408h2v6h-2zM449 408h1v6h-1zM467 408h2v6h-2zM535 408h1v6h-1zM551 408h1v6h-1zM616 408h2v6h-2zM624 408h1v6h-1zM656 408h2v6h-2zM661 408h1v6h-1zM773 408h2v6h-2zM800 408h1v6h-1zM805 408h2v6h-2zM859 408h1v6h-1zM878 408h1v6h-1zM925 408h1v6h-1zM931 408h1v6h-1zM1022 408h1v6h-1zM1055 408h1v6h-1zM1076 408h1v6h-1zM271 402h1v6h-1zM306 402h1v6h-1zM341 402h1v6h-1zM407 402h2v6h-2zM431 402h1v6h-1zM463 402h2v6h-2zM483 402h1v6h-1zM486 402h1v6h-1zM497 402h2v6h-2zM552 402h2v6h-2zM555 402h1v6h-1zM559 402h1v6h-1zM581 402h2v6h-2zM588 402h1v6h-1zM597 402h1v6h-1zM610 402h1v6h-1zM625 402h2v6h-2zM628 402h1v6h-1zM632 402h1v6h-1zM644 402h1v6h-1zM722 402h1v6h-1zM769 402h2v6h-2zM838 402h1v6h-1zM845 402h1v6h-1zM862 402h1v6h-1zM929 402h1v6h-1zM935 402h1v6h-1zM941 402h1v6h-1zM1009 402h1v6h-1zM1018 402h2v6h-2zM134 396h1v6h-1zM245 396h1v6h-1zM249 396h2v6h-2zM253 396h2v6h-2zM272 396h1v6h-1zM280 396h1v6h-1zM295 396h2v6h-2zM308 396h1v6h-1zM317 396h1v6h-1zM322 396h2v6h-2zM333 396h1v6h-1zM338 396h1v6h-1zM350 396h1v6h-1zM370 396h1v6h-1zM373 396h1v6h-1zM391 396h2v6h-2zM404 396h1v6h-1zM407 396h2v6h-2zM424 396h4v6h-4zM429 396h1v6h-1zM437 396h1v6h-1zM454 396h2v6h-2zM461 396h2v6h-2zM489 396h1v6h-1zM555 396h1v6h-1zM560 396h1v6h-1zM572 396h2v6h-2zM579 396h2v6h-2zM596 396h1v6h-1zM620 396h2v6h-2zM624 396h1v6h-1zM632 396h1v6h-1zM641 396h1v6h-1zM650 396h1v6h-1zM737 396h1v6h-1zM766 396h1v6h-1zM777 396h2v6h-2zM800 396h1v6h-1zM831 396h2v6h-2zM854 396h2v6h-2zM866 396h2v6h-2zM869 396h2v6h-2zM985 396h1v6h-1zM1005 396h2v6h-2zM1009 396h1v6h-1zM1013 396h1v6h-1zM1039 396h2v6h-2zM243 420h1v7h-1zM256 420h1v7h-1zM310 420h1v7h-1zM322 420h2v7h-2zM403 420h1v7h-1zM415 420h1v7h-1zM423 420h1v7h-1zM440 420h1v7h-1zM442 420h2v7h-2zM478 420h3v7h-3zM490 420h1v7h-1zM492 420h1v7h-1zM554 420h1v7h-1zM560 420h2v7h-2zM578 420h1v7h-1zM597 420h1v7h-1zM608 420h1v7h-1zM624 420h3v7h-3zM630 420h1v7h-1zM642 420h1v7h-1zM658 420h1v7h-1zM716 420h1v7h-1zM1001 420h2v7h-2zM238 427h1v6h-1zM253 427h2v6h-2zM262 427h1v6h-1zM315 427h1v6h-1zM439 427h1v6h-1zM441 427h1v6h-1zM447 427h1v6h-1zM472 427h2v6h-2zM489 427h1v6h-1zM492 427h1v6h-1zM560 427h1v6h-1zM591 427h3v6h-3zM600 427h1v6h-1zM609 427h1v6h-1zM614 427h1v6h-1zM627 427h1v6h-1zM629 427h1v6h-1zM925 427h1v6h-1zM1016 427h2v6h-2zM253 439h2v6h-2zM259 439h1v6h-1zM262 439h1v6h-1zM446 439h1v6h-1zM483 439h1v6h-1zM497 439h2v6h-2zM583 439h2v6h-2zM609 439h1v6h-1zM256 433h1v6h-1zM306 433h2v6h-2zM341 433h2v6h-2zM417 433h1v6h-1zM426 433h2v6h-2zM484 433h1v6h-1zM499 433h1v6h-1zM576 433h1v6h-1zM597 433h1v6h-1zM622 433h1v6h-1zM773 433h1v6h-1zM804 433h1v6h-1zM844 433h1v6h-1zM926 433h2v6h-2zM1022 433h1v6h-1zM1090 433h1v6h-1zM259 445h1v6h-1zM454 445h2v6h-2zM457 445h1v6h-1zM486 445h1v6h-1zM492 445h1v6h-1zM591 445h2v6h-2zM604 445h1v6h-1zM804 445h1v6h-1zM866 445h2v6h-2zM910 445h1v6h-1zM620 310h2v6h-2zM623 310h1v6h-1zM714 310h3v6h-3zM784 310h2v6h-2zM901 310h1v6h-1zM403 304h1v6h-1zM543 304h1v6h-1zM645 304h2v6h-2zM717 304h1v6h-1zM214 298h1v6h-1zM901 298h1v6h-1zM699 292h1v6h-1zM898 292h1v6h-1zM544 286h2v6h-2zM520 225h1v6h-1zM913 274h1v6h-1zM917 274h2v6h-2zM699 280h1v6h-1zM446 451h1v6h-1zM472 451h2v6h-2zM479 451h3v6h-3zM483 451h1v6h-1zM503 451h1v6h-1zM436 457h1v6h-1zM463 457h2v6h-2zM474 457h1v6h-1zM484 463h1v6h-1zM499 463h1v6h-1zM515 206h1v6h-1zM787 206h2v6h-2zM787 188h2v6h-2zM229 469h1v7h-1z"/>
<path fill="#c1ff00" d="M456 365h1v6h-1zM689 365h2v6h-2zM594 359h2v6h-2zM930 359h1v6h-1zM306 353h2v6h-2zM456 353h1v6h-1zM481 353h1v6h-1zM791 353h1v6h-1zM457 347h1v6h-1zM689 347h2v6h-2zM930 347h1v6h-1zM557 341h2v6h-2zM265 329h3v6h-3zM267 323h1v6h-1zM263 371h1v7h-1zM441 371h1v7h-1zM448 371h1v7h-1zM569 371h1v7h-1zM800 371h1v7h-1zM996 371h1v7h-1zM260 378h2v6h-2zM434 378h2v6h-2zM466 378h1v6h-1zM490 378h1v6h-1zM430 384h1v6h-1zM470 384h1v6h-1zM492 384h1v6h-1zM569 384h1v6h-1zM260 390h2v6h-2zM469 390h1v6h-1zM481 390h1v6h-1zM544 390h2v6h-2zM576 390h1v6h-1zM594 390h2v6h-2zM448 414h1v6h-1zM446 408h1v6h-1zM1010 408h2v6h-2zM262 402h1v6h-1zM267 402h1v6h-1zM457 402h1v6h-1zM800 402h1v6h-1zM255 396h1v6h-1zM260 396h2v6h-2zM273 396h3v6h-3zM446 396h1v6h-1zM490 396h1v6h-1zM594 396h2v6h-2zM431 420h1v7h-1zM451 420h1v7h-1zM470 420h1v7h-1zM448 439h1v6h-1zM259 433h1v6h-1zM267 433h1v6h-1zM448 433h1v6h-1zM494 433h2v6h-2zM515 200h1v6h-1z"/>
<path fill="#ff6500" d="M500 365h1v6h-1zM578 365h1v6h-1zM567 390h1v6h-1z"/>
<path fill="#ff9900" d="M564 365h1v6h-1zM883 347h2v6h-2zM627 378h1v6h-1zM868 378h1v6h-1zM267 384h1v6h-1zM1013 414h1v6h-1zM428 402h1v6h-1zM583 396h2v6h-2zM600 445h1v6h-1z"/>
<path fill="#ffb200" d="M581 365h2v6h-2zM262 329h1v6h-1zM574 378h1v6h-1zM267 414h1v6h-1zM259 420h1v7h-1zM474 439h1v6h-1zM228 469h1v7h-1z"/>
<path fill="#ffff00" d="M639 365h1v6h-1zM872 365h1v6h-1zM844 359h1v6h-1zM267 353h1v6h-1zM557 353h2v6h-2zM930 353h1v6h-1zM257 347h2v6h-2zM615 347h1v6h-1zM259 341h1v6h-1zM265 341h2v6h-2zM404 341h1v6h-1zM940 316h1v7h-1zM146 371h1v7h-1zM159 371h1v7h-1zM200 371h1v7h-1zM258 371h1v7h-1zM269 371h1v7h-1zM272 371h1v7h-1zM316 371h1v7h-1zM319 371h1v7h-1zM321 371h1v7h-1zM323 371h1v7h-1zM360 371h1v7h-1zM367 371h1v7h-1zM378 371h1v7h-1zM493 371h1v7h-1zM551 371h1v7h-1zM976 371h1v7h-1zM986 371h1v7h-1zM594 378h2v6h-2zM273 384h1v6h-1zM528 384h2v6h-2zM446 390h1v6h-1zM457 390h1v6h-1zM583 390h2v6h-2zM615 390h1v6h-1zM797 390h2v6h-2zM457 414h1v6h-1zM607 414h1v6h-1zM609 414h1v6h-1zM267 408h1v6h-1zM609 408h1v6h-1zM270 402h1v6h-1zM620 402h2v6h-2zM1010 402h1v6h-1zM267 396h1v6h-1zM591 396h2v6h-2zM259 427h1v6h-1zM457 427h1v6h-1zM601 427h2v6h-2zM456 439h1v6h-1zM197 310h1v6h-1zM213 310h1v6h-1zM215 310h1v6h-1zM170 243h2v6h-2zM181 280h1v6h-1z"/>
<path fill="#ff4a00" d="M936 365h1v6h-1zM937 329h1v6h-1zM436 371h1v7h-1zM843 390h1v6h-1zM470 402h1v6h-1zM618 402h2v6h-2zM485 396h1v6h-1zM630 396h1v6h-1z"/>
<path fill="#ff3000" d="M975 365h2v6h-2zM561 347h1v6h-1zM639 323h1v6h-1zM998 378h1v6h-1zM262 414h1v6h-1zM481 402h1v6h-1zM916 396h2v6h-2zM262 310h1v6h-1z"/>
<path fill="#ff1800" d="M996 365h1v6h-1zM1001 347h2v6h-2zM579 335h2v6h-2zM446 371h1v7h-1zM866 371h2v7h-2zM536 384h1v6h-1zM925 402h1v6h-1zM835 396h2v6h-2zM474 427h1v6h-1z"/>
<path fill="#ffe500" d="M1014 365h1v6h-1zM444 359h2v6h-2zM557 359h2v6h-2zM457 353h1v6h-1zM583 353h2v6h-2zM879 347h2v6h-2zM560 341h1v6h-1zM609 371h1v7h-1zM500 378h1v6h-1zM1001 390h2v6h-2zM259 414h1v6h-1zM604 414h1v6h-1zM454 408h2v6h-2zM1009 408h1v6h-1zM484 402h1v6h-1zM259 396h1v6h-1zM615 396h1v6h-1zM448 420h1v7h-1zM805 420h2v7h-2zM448 427h1v6h-1zM446 433h1v6h-1zM543 298h1v6h-1z"/>
<path fill="#ff8000" d="M624 359h1v6h-1zM980 353h1v6h-1zM889 323h1v6h-1zM560 414h1v6h-1zM575 402h1v6h-1zM933 402h2v6h-2zM543 396h1v6h-1zM442 476h1v6h-1zM537 488h1v6h-1zM637 488h1v6h-1zM546 494h1v6h-1zM660 494h1v6h-1zM689 494h1v6h-1zM844 494h1v6h-1zM875 494h1v6h-1zM339 482h1v6h-1zM1007 482h1v6h-1z"/>
<path fill="#ff0000" d="M441 353h1v6h-1zM151 371h1v7h-1zM201 371h1v7h-1zM212 371h1v7h-1zM247 371h1v7h-1zM294 371h1v7h-1zM322 371h1v7h-1zM355 371h1v7h-1zM402 371h1v7h-1zM405 371h1v7h-1zM975 371h1v7h-1zM847 390h1v6h-1zM873 414h1v6h-1zM100 402h1v6h-1zM119 402h1v6h-1zM149 402h2v6h-2zM157 402h1v6h-1zM163 402h1v6h-1zM243 402h1v6h-1zM249 402h1v6h-1zM252 402h1v6h-1zM256 402h1v6h-1zM261 402h1v6h-1zM264 402h1v6h-1zM272 402h1v6h-1zM276 402h1v6h-1zM280 402h1v6h-1zM282 402h1v6h-1zM285 402h1v6h-1zM294 402h2v6h-2zM313 402h1v6h-1zM317 402h1v6h-1zM321 402h1v6h-1zM331 402h1v6h-1zM334 402h1v6h-1zM338 402h1v6h-1zM349 402h1v6h-1zM364 402h1v6h-1zM983 402h1v6h-1zM988 402h1v6h-1zM995 402h1v6h-1zM1005 402h2v6h-2zM1016 402h1v6h-1zM1043 402h1v6h-1zM1050 402h1v6h-1zM1073 402h1v6h-1zM970 231h1v6h-1zM1006 231h1v6h-1zM970 225h1v6h-1zM978 225h1v6h-1zM1006 225h1v6h-1zM536 194h2v6h-2zM536 188h2v6h-2zM644 127h1v6h-1z"/>
<path fill="#ff6000" d="M94 402h1v6h-1zM104 402h1v6h-1zM109 402h1v6h-1zM121 402h1v6h-1zM133 402h1v6h-1zM141 402h1v6h-1zM253 402h1v6h-1zM259 402h1v6h-1zM292 402h1v6h-1zM320 402h1v6h-1zM324 402h1v6h-1zM351 402h1v6h-1zM361 402h1v6h-1zM368 402h1v6h-1zM993 402h1v6h-1zM1070 402h1v6h-1z"/>
<path fill="#c00000" d="M107 402h1v6h-1zM269 402h1v6h-1zM283 402h1v6h-1zM316 402h1v6h-1zM345 402h1v6h-1zM363 402h1v6h-1zM372 402h2v6h-2zM384 402h1v6h-1zM990 402h1v6h-1zM1014 402h1v6h-1z"/>
<path fill="#800000" d="M108 402h1v6h-1zM117 402h1v6h-1zM138 402h1v6h-1zM152 402h1v6h-1zM156 402h1v6h-1zM257 402h1v6h-1zM265 402h1v6h-1zM273 402h1v6h-1zM342 402h1v6h-1zM378 402h1v6h-1zM979 402h1v6h-1z"/>
<path fill="#00f040" d="M207 310h1v6h-1zM221 310h1v6h-1zM187 280h1v6h-1zM209 280h1v6h-1z"/>
<path fill="#00ffff" d="M91 304h1v6h-1zM512 298h3v6h-3zM512 292h3v6h-3zM512 286h3v6h-3zM427 72h2v6h-2zM523 72h1v6h-1z"/>
<path fill="#0046ff" d="M649 304h2v6h-2zM649 298h2v6h-2zM649 292h2v6h-2zM649 286h2v6h-2zM731 225h2v6h-2zM89 274h2v6h-2zM649 274h2v6h-2zM89 280h2v6h-2zM649 280h2v6h-2zM524 188h1v6h-1zM524 182h1v6h-1zM472 78h2v6h-2zM600 78h2v6h-2zM600 72h2v6h-2zM498 139h2v6h-2zM431 170h2v6h-2zM498 133h2v6h-2z"/>
<path fill="#0080ff" d="M1021 292h1v6h-1zM596 90h2v6h-2zM536 84h2v6h-2zM536 78h2v6h-2zM536 72h2v6h-2zM618 102h1v6h-1zM596 96h2v6h-2zM435 163h2v7h-2zM859 476h1v6h-1zM915 488h1v6h-1zM357 494h1v6h-1zM379 494h1v6h-1zM656 494h1v6h-1zM971 494h1v6h-1z"/>
<path fill="#00e0c0" d="M733 243h2v6h-2zM551 231h1v6h-1zM846 231h2v6h-2zM733 249h2v6h-2zM616 90h2v6h-2zM482 84h1v6h-1zM616 84h2v6h-2zM616 78h2v6h-2zM705 72h1v6h-1zM613 102h2v6h-2zM613 96h2v6h-2zM667 96h1v6h-1zM882 96h1v6h-1zM455 163h1v7h-1z"/>
<rect x="83" y="41" width="1009" height="1" fill="#000"/>
<rect x="73" y="500" width="1030" height="1" fill="#000"/>
<rect x="83" y="41" width="2" height="460" fill="#000"/>
<rect x="1091" y="41" width="2" height="460" fill="#000"/>
<rect x="78" y="469" width="6" height="1" fill="#000"/>
<rect x="1092" y="469" width="6" height="1" fill="#000"/>
<rect x="78" y="439" width="6" height="1" fill="#000"/>
<rect x="1092" y="439" width="6" height="1" fill="#000"/>
<rect x="78" y="408" width="6" height="1" fill="#000"/>
<rect x="1092" y="408" width="6" height="1" fill="#000"/>
<rect x="73" y="378" width="11" height="1" fill="#000"/>
<rect x="1092" y="378" width="11" height="1" fill="#000"/>
<rect x="78" y="347" width="6" height="1" fill="#000"/>
<rect x="1092" y="347" width="6" height="1" fill="#000"/>
<rect x="78" y="316" width="6" height="1" fill="#000"/>
<rect x="1092" y="316" width="6" height="1" fill="#000"/>
<rect x="78" y="286" width="6" height="1" fill="#000"/>
<rect x="1092" y="286" width="6" height="1" fill="#000"/>
<rect x="73" y="255" width="11" height="1" fill="#000"/>
<rect x="1092" y="255" width="11" height="1" fill="#000"/>
<rect x="78" y="225" width="6" height="1" fill="#000"/>
<rect x="1092" y="225" width="6" height="1" fill="#000"/>
<rect x="78" y="194" width="6" height="1" fill="#000"/>
<rect x="1092" y="194" width="6" height="1" fill="#000"/>
<rect x="78" y="163" width="6" height="1" fill="#000"/>
<rect x="1092" y="163" width="6" height="1" fill="#000"/>
<rect x="73" y="133" width="11" height="1" fill="#000"/>
<rect x="1092" y="133" width="11" height="1" fill="#000"/>
<rect x="78" y="102" width="6" height="1" fill="#000"/>
<rect x="1092" y="102" width="6" height="1" fill="#000"/>
<rect x="78" y="72" width="6" height="1" fill="#000"/>
<rect x="1092" y="72" width="6" height="1" fill="#000"/>
<rect x="78" y="41" width="6" height="1" fill="#000"/>
<rect x="1092" y="41" width="6" height="1" fill="#000"/>
<rect x="78" y="41" width="6" height="1" fill="#000"/>
<rect x="83" y="501" width="2" height="5" fill="#000"/>
<rect x="83" y="37" width="2" height="4" fill="#000"/>
<rect x="125" y="501" width="2" height="3" fill="#000"/>
<rect x="125" y="39" width="2" height="2" fill="#000"/>
<rect x="167" y="501" width="2" height="3" fill="#000"/>
<rect x="167" y="39" width="2" height="2" fill="#000"/>
<rect x="209" y="501" width="2" height="5" fill="#000"/>
<rect x="209" y="37" width="2" height="4" fill="#000"/>
<rect x="251" y="501" width="2" height="3" fill="#000"/>
<rect x="251" y="39" width="2" height="2" fill="#000"/>
<rect x="293" y="501" width="2" height="3" fill="#000"/>
<rect x="293" y="39" width="2" height="2" fill="#000"/>
<rect x="335" y="501" width="2" height="5" fill="#000"/>
<rect x="335" y="37" width="2" height="4" fill="#000"/>
<rect x="377" y="501" width="2" height="3" fill="#000"/>
<rect x="377" y="39" width="2" height="2" fill="#000"/>
<rect x="419" y="501" width="2" height="3" fill="#000"/>
<rect x="419" y="39" width="2" height="2" fill="#000"/>
<rect x="461" y="501" width="2" height="5" fill="#000"/>
<rect x="461" y="37" width="2" height="4" fill="#000"/>
<rect x="503" y="501" width="2" height="3" fill="#000"/>
<rect x="503" y="39" width="2" height="2" fill="#000"/>
<rect x="545" y="501" width="2" height="3" fill="#000"/>
<rect x="545" y="39" width="2" height="2" fill="#000"/>
<rect x="587" y="501" width="2" height="5" fill="#000"/>
<rect x="587" y="37" width="2" height="4" fill="#000"/>
<rect x="629" y="501" width="2" height="3" fill="#000"/>
<rect x="629" y="39" width="2" height="2" fill="#000"/>
<rect x="671" y="501" width="2" height="3" fill="#000"/>
<rect x="671" y="39" width="2" height="2" fill="#000"/>
<rect x="713" y="501" width="2" height="5" fill="#000"/>
<rect x="713" y="37" width="2" height="4" fill="#000"/>
<rect x="755" y="501" width="2" height="3" fill="#000"/>
<rect x="755" y="39" width="2" height="2" fill="#000"/>
<rect x="797" y="501" width="2" height="3" fill="#000"/>
<rect x="797" y="39" width="2" height="2" fill="#000"/>
<rect x="839" y="501" width="2" height="5" fill="#000"/>
<rect x="839" y="37" width="2" height="4" fill="#000"/>
<rect x="881" y="501" width="2" height="3" fill="#000"/>
<rect x="881" y="39" width="2" height="2" fill="#000"/>
<rect x="923" y="501" width="2" height="3" fill="#000"/>
<rect x="923" y="39" width="2" height="2" fill="#000"/>
<rect x="965" y="501" width="2" height="5" fill="#000"/>
<rect x="965" y="37" width="2" height="4" fill="#000"/>
<rect x="1007" y="501" width="2" height="3" fill="#000"/>
<rect x="1007" y="39" width="2" height="2" fill="#000"/>
<rect x="1050" y="501" width="2" height="3" fill="#000"/>
<rect x="1050" y="39" width="2" height="2" fill="#000"/>
<rect x="1092" y="501" width="2" height="5" fill="#000"/>
<rect x="1092" y="37" width="2" height="4" fill="#000"/>
<rect x="1091" y="0" width="2" height="5" fill="#000"/>
<rect x="83" y="0" width="2" height="5" fill="#000"/>
<rect x="84" y="11" width="1008" height="7" fill="#0aff00"/>
<rect x="84" y="23" width="1008" height="7" fill="#500080"/>
<rect x="472" y="11" width="1" height="7" fill="#a0e000"/>
<rect x="530" y="11" width="1" height="7" fill="#ffc000"/>
<rect x="536" y="11" width="1" height="7" fill="#ffc000"/>
<rect x="540" y="11" width="1" height="7" fill="#c0d000"/>
<rect x="545" y="11" width="1" height="7" fill="#ffc000"/>
<rect x="551" y="11" width="1" height="7" fill="#b0e000"/>
<rect x="556" y="11" width="2" height="7" fill="#ffc000"/>
<rect x="559" y="11" width="1" height="7" fill="#ffc000"/>
<rect x="562" y="11" width="1" height="7" fill="#ffc000"/>
<rect x="567" y="11" width="1" height="7" fill="#ffc000"/>
<rect x="568" y="11" width="3" height="7" fill="#ffc000"/>
<rect x="574" y="11" width="1" height="7" fill="#ffc000"/>
<rect x="577" y="11" width="3" height="7" fill="#b0e000"/>
<rect x="584" y="11" width="1" height="7" fill="#ffc000"/>
<rect x="589" y="11" width="2" height="7" fill="#ffc000"/>
<rect x="594" y="11" width="1" height="7" fill="#ffc000"/>
<rect x="596" y="11" width="3" height="7" fill="#ffc000"/>
<rect x="606" y="11" width="3" height="7" fill="#b0e000"/>
<rect x="611" y="11" width="1" height="7" fill="#ffc000"/>
<rect x="618" y="11" width="2" height="7" fill="#ffc000"/>
<rect x="620" y="11" width="5" height="7" fill="#ffc000"/>
<rect x="627" y="11" width="1" height="7" fill="#ffc000"/>
<rect x="630" y="11" width="1" height="7" fill="#ffc000"/>
<rect x="632" y="11" width="1" height="7" fill="#ffc000"/>
<rect x="635" y="11" width="5" height="7" fill="#d0d000"/>
<rect x="644" y="11" width="1" height="7" fill="#ffc000"/>
<rect x="646" y="11" width="4" height="7" fill="#b0e000"/>
<rect x="654" y="11" width="1" height="7" fill="#ffc000"/>
<rect x="658" y="11" width="1" height="7" fill="#ffc000"/>
<rect x="661" y="11" width="2" height="7" fill="#b0e000"/>
<rect x="665" y="11" width="1" height="7" fill="#ffc000"/>
<rect x="666" y="11" width="7" height="7" fill="#ffc000"/>
<rect x="674" y="11" width="3" height="7" fill="#b0e000"/>
<rect x="678" y="11" width="1" height="7" fill="#ffc000"/>
<rect x="680" y="11" width="3" height="7" fill="#d0d000"/>
<rect x="684" y="11" width="4" height="7" fill="#ffc000"/>
<rect x="703" y="11" width="2" height="7" fill="#b0e000"/>
<rect x="707" y="11" width="5" height="7" fill="#b0e000"/>
<rect x="713" y="11" width="1" height="7" fill="#ffc000"/>
<rect x="728" y="11" width="1" height="7" fill="#ffc000"/>
<rect x="731" y="11" width="2" height="7" fill="#ffc000"/>
<rect x="734" y="11" width="1" height="7" fill="#ffc000"/>
<rect x="743" y="11" width="1" height="7" fill="#ffc000"/>
<rect x="748" y="11" width="1" height="7" fill="#b0e000"/>
<rect x="758" y="11" width="1" height="7" fill="#ffc000"/>
<rect x="768" y="11" width="2" height="7" fill="#b0e000"/>
<rect x="1023" y="11" width="1" height="7" fill="#a0e000"/>
<defs><linearGradient id="wg" x1="0" y1="1" x2="0" y2="0"><stop offset="0" stop-color="rgb(32, 0, 255)"/><stop offset="0.1" stop-color="rgb(0, 64, 255)"/><stop offset="0.2" stop-color="rgb(0, 200, 255)"/><stop offset="0.21" stop-color="rgb(0, 255, 255)"/><stop offset="0.4" stop-color="rgb(0, 255, 80)"/><stop offset="0.45" stop-color="rgb(0, 240, 0)"/><stop offset="0.6" stop-color="rgb(200, 255, 0)"/><stop offset="0.7" stop-color="rgb(255, 230, 0)"/><stop offset="0.8" stop-color="rgb(255, 128, 0)"/><stop offset="0.9" stop-color="rgb(255, 40, 0)"/><stop offset="1.0" stop-color="rgb(255, 0, 0)"/></linearGradient></defs>
<rect x="1135.5" y="41.5" width="13" height="253" fill="url(#wg)" stroke="#000" stroke-width="1"/>
<rect x="1136" y="244" width="12" height="1" fill="#202020"/>
<rect x="1136" y="193" width="12" height="1" fill="#202020"/>
<rect x="1136" y="143" width="12" height="1" fill="#202020"/>
<rect x="1136" y="92" width="12" height="1" fill="#202020"/>
<text x="1151" y="295" font-size="9" font-weight="bold" text-anchor="start">0</text>
<text x="1151" y="245" font-size="9" font-weight="bold" text-anchor="start">100</text>
<text x="1151" y="194" font-size="9" font-weight="bold" text-anchor="start">200</text>
<text x="1151" y="144" font-size="9" font-weight="bold" text-anchor="start">300</text>
<text x="1151" y="93" font-size="9" font-weight="bold" text-anchor="start">400</text>
<text x="1151" y="43" font-size="9" font-weight="bold" text-anchor="start">500</text>
<text x="1104" y="25" font-size="12" font-weight="bold" text-anchor="start" textLength="75" lengthAdjust="spacingAndGlyphs">WID_L (km/s)</text>
<text x="1104" y="324" font-size="11" font-weight="bold" text-anchor="start" textLength="75.5" lengthAdjust="spacingAndGlyphs">TX FRQ (MHz)</text>
<rect x="1135" y="483" width="14" height="18" fill="#000000"/>
<rect x="1135" y="465" width="14" height="18" fill="#500080"/>
<rect x="1135" y="447" width="14" height="18" fill="#2000ff"/>
<rect x="1135" y="429" width="14" height="18" fill="#00ffff"/>
<rect x="1135" y="411" width="14" height="18" fill="#00e000"/>
<rect x="1135" y="393" width="14" height="18" fill="#ffff00"/>
<rect x="1135" y="375" width="14" height="18" fill="#ff8000"/>
<rect x="1135" y="357" width="14" height="18" fill="#ff4000"/>
<rect x="1135" y="339" width="14" height="18" fill="#ff0000"/>
<rect x="1135.5" y="339.5" width="13" height="161" fill="none" stroke="#000" stroke-width="1"/>
<rect x="1135" y="483" width="14" height="1" fill="#000"/>
<rect x="1135" y="465" width="14" height="1" fill="#000"/>
<rect x="1135" y="447" width="14" height="1" fill="#000"/>
<rect x="1135" y="429" width="14" height="1" fill="#000"/>
<rect x="1135" y="411" width="14" height="1" fill="#000"/>
<rect x="1135" y="393" width="14" height="1" fill="#000"/>
<rect x="1135" y="375" width="14" height="1" fill="#000"/>
<rect x="1135" y="357" width="14" height="1" fill="#000"/>
<text x="1152" y="502" font-size="10" font-weight="bold" text-anchor="start">9</text>
<text x="1152" y="484" font-size="10" font-weight="bold" text-anchor="start">10</text>
<text x="1152" y="466" font-size="10" font-weight="bold" text-anchor="start">11</text>
<text x="1152" y="448" font-size="10" font-weight="bold" text-anchor="start">12</text>
<text x="1152" y="430" font-size="10" font-weight="bold" text-anchor="start">13</text>
<text x="1152" y="412" font-size="10" font-weight="bold" text-anchor="start">14</text>
<text x="1152" y="394" font-size="10" font-weight="bold" text-anchor="start">15</text>
<text x="1152" y="376" font-size="10" font-weight="bold" text-anchor="start">16</text>
<text x="1152" y="358" font-size="10" font-weight="bold" text-anchor="start">17</text>
<text x="1152" y="340" font-size="10" font-weight="bold" text-anchor="start">18</text>
<text x="1169" y="336" font-size="11" font-weight="bold" text-anchor="start" textLength="30" lengthAdjust="spacingAndGlyphs">NOISE</text>
<rect x="1172" y="469" width="14" height="32" fill="#000000"/>
<rect x="1172" y="436" width="14" height="33" fill="#2000ff"/>
<rect x="1172" y="404" width="14" height="32" fill="#00ff00"/>
<rect x="1172" y="371" width="14" height="33" fill="#ffc000"/>
<rect x="1172" y="339" width="14" height="32" fill="#ff0000"/>
<rect x="1172.5" y="339.5" width="13" height="161" fill="none" stroke="#000" stroke-width="1"/>
<text x="1189" y="502" font-size="9" font-weight="bold" text-anchor="start">1</text>
<text x="1189" y="470" font-size="9" font-weight="bold" text-anchor="start">10</text>
<text x="1189" y="437" font-size="9" font-weight="bold" text-anchor="start">100</text>
<text x="1189" y="405" font-size="9" font-weight="bold" text-anchor="start">1000</text>
<text x="1189" y="372" font-size="9" font-weight="bold" text-anchor="start">10000</text>
<text x="68" y="501" font-size="17" font-weight="normal" text-anchor="end">0</text>
<text x="68" y="384" font-size="17" font-weight="normal" text-anchor="end">20</text>
<text x="68" y="261" font-size="17" font-weight="normal" text-anchor="end">40</text>
<text x="68" y="139" font-size="17" font-weight="normal" text-anchor="end">60</text>
<text x="84" y="531" font-size="17" font-weight="normal" text-anchor="middle">0</text>
<text x="210" y="531" font-size="17" font-weight="normal" text-anchor="middle">3</text>
<text x="336" y="531" font-size="17" font-weight="normal" text-anchor="middle">6</text>
<text x="462" y="531" font-size="17" font-weight="normal" text-anchor="middle">9</text>
<text x="588" y="531" font-size="17" font-weight="normal" text-anchor="middle">12</text>
<text x="714" y="531" font-size="17" font-weight="normal" text-anchor="middle">15</text>
<text x="840" y="531" font-size="17" font-weight="normal" text-anchor="middle">18</text>
<text x="966" y="531" font-size="17" font-weight="normal" text-anchor="middle">21</text>
<text x="1093" y="531" font-size="17" font-weight="normal" text-anchor="middle">24</text>
<text x="84" y="551" font-size="17" font-weight="normal" text-anchor="start" textLength="78" lengthAdjust="spacingAndGlyphs">MCM  b10</text>
<text x="467" y="552" font-size="17" font-weight="normal" text-anchor="start" textLength="241" lengthAdjust="spacing">UT hours on April 12, 2025</text>
<text x="32" y="321" font-size="17" textLength="99" lengthAdjust="spacing" transform="rotate(-90 32 321)">Range  Gate</text>
<text x="50" y="6" font-size="11" font-weight="bold" text-anchor="start" textLength="23" lengthAdjust="spacingAndGlyphs">CPID</text>
<text x="46" y="18" font-size="11" font-weight="bold" text-anchor="start" textLength="27" lengthAdjust="spacingAndGlyphs">Noise</text>
<text x="33" y="30" font-size="11" font-weight="bold" text-anchor="start" textLength="39.5" lengthAdjust="spacingAndGlyphs">TX Freq</text>
<text x="587" y="5" font-size="10" font-weight="bold" text-anchor="middle">151</text>
</svg></body></html>
